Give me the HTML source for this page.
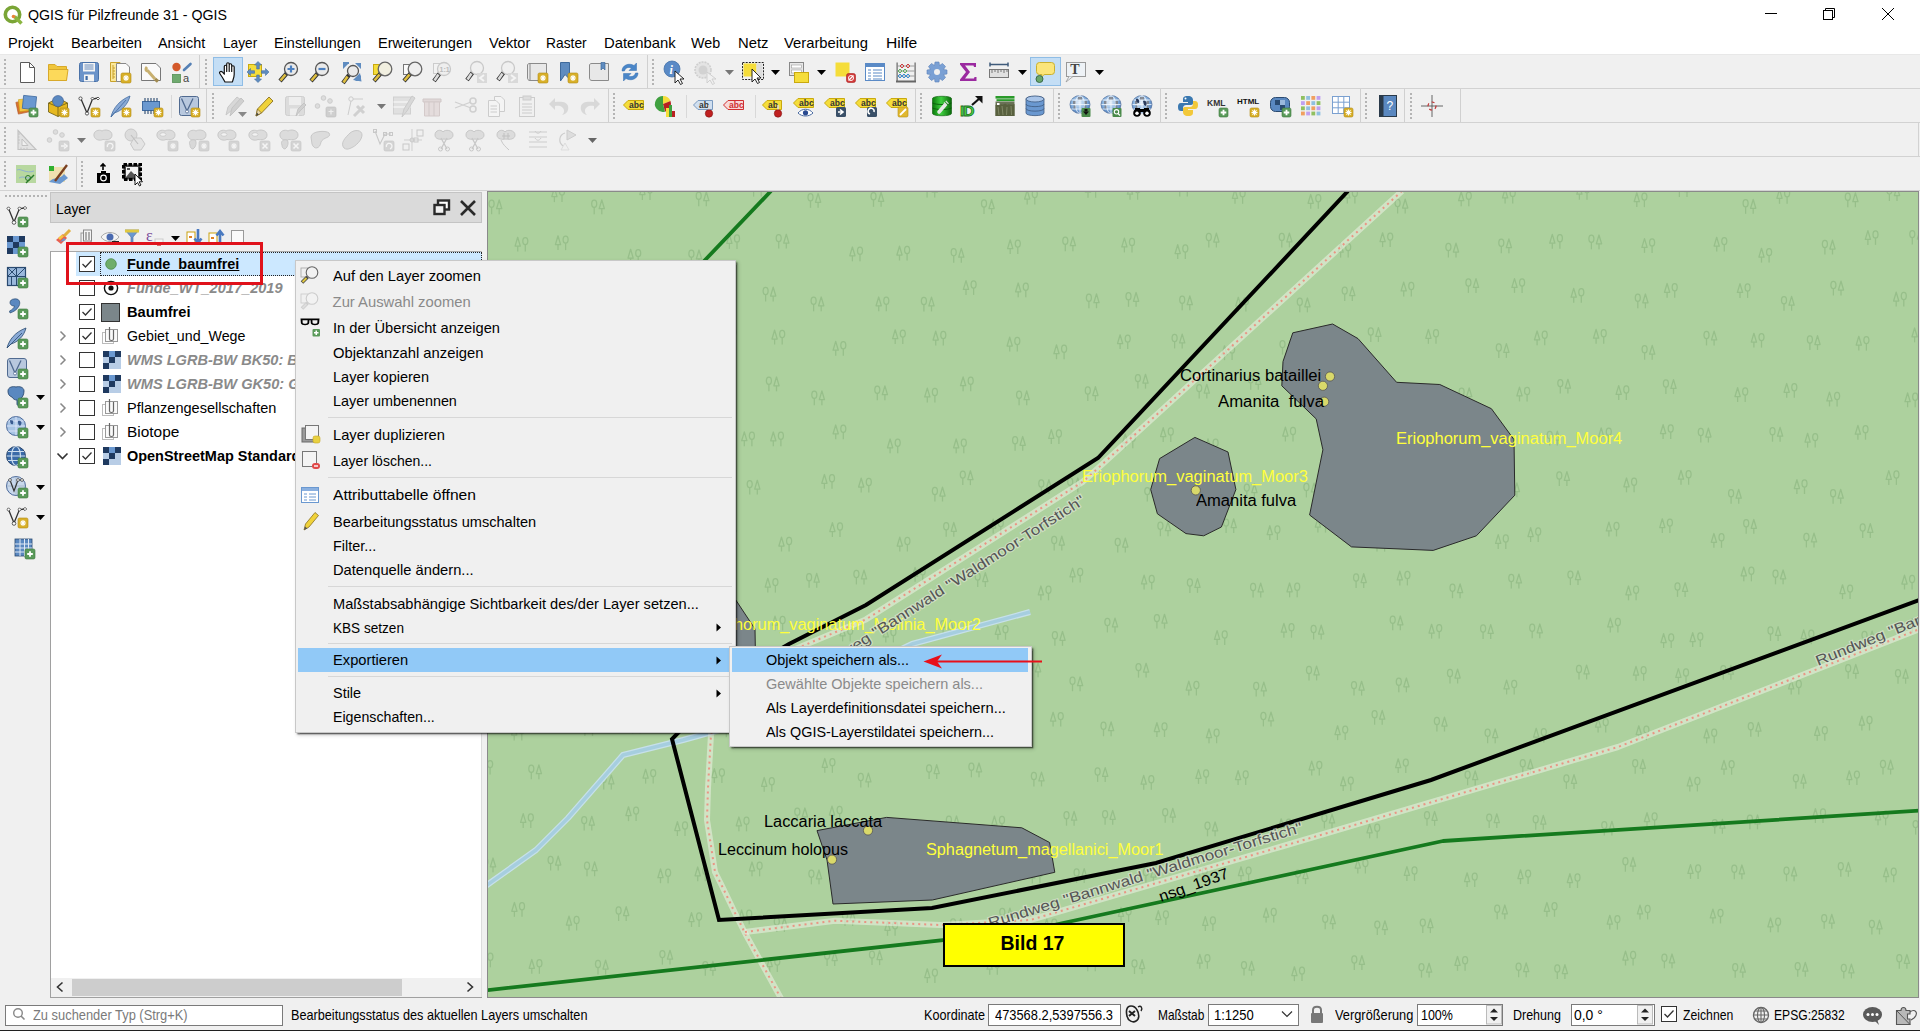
<!DOCTYPE html><html><head><meta charset="utf-8"><style>
html,body{margin:0;padding:0;width:1920px;height:1031px;overflow:hidden;background:#f0f0f0;font-family:"Liberation Sans", sans-serif}
.t{position:absolute;white-space:pre;line-height:1;font-family:"Liberation Sans", sans-serif}
svg{overflow:visible;position:absolute}
</style></head><body><div style="position:absolute;left:0px;top:0px;width:1920px;height:55px;background:#fff"></div>
<div style="position:absolute;left:0px;top:54px;width:1920px;height:1px;background:#e8e8e8"></div>
<svg style="position:absolute;left:2px;top:4px;" width="22" height="22" viewBox="0 0 22 22"><circle cx="10.5" cy="10.5" r="7.2" fill="none" stroke="#7aa536" stroke-width="3.6"/><path d="M12.5 12.5 L19.5 19.5" stroke="#8ab540" stroke-width="3.6"/><circle cx="11.5" cy="12.5" r="1.8" fill="#e8843a"/></svg>
<div class="t" style="left:27.5px;top:7.97px;font-size:14.8px;font-weight:normal;color:#000;font-style:normal;transform:scaleX(0.9600);transform-origin:0 0;">QGIS für Pilzfreunde 31 - QGIS</div>
<svg style="position:absolute;left:1760px;top:0px;" width="160" height="30" viewBox="0 0 160 30"><path d="M5 13.5 H17" stroke="#000" stroke-width="1"/><rect x="63.5" y="10.5" width="9" height="9" fill="none" stroke="#000"/><path d="M65.5 10.5 V8.5 H74.5 V17.5 H72.5" fill="none" stroke="#000"/><path d="M122 8 L134 20 M134 8 L122 20" stroke="#000" stroke-width="1"/></svg>
<div class="t" style="left:8.3px;top:35.77px;font-size:14.8px;font-weight:normal;color:#000;font-style:normal;transform:scaleX(0.9867);transform-origin:0 0;">Projekt</div>
<div class="t" style="left:70.7px;top:35.77px;font-size:14.8px;font-weight:normal;color:#000;font-style:normal;transform:scaleX(0.9925);transform-origin:0 0;">Bearbeiten</div>
<div class="t" style="left:158.3px;top:35.77px;font-size:14.8px;font-weight:normal;color:#000;font-style:normal;transform:scaleX(0.9725);transform-origin:0 0;">Ansicht</div>
<div class="t" style="left:222.5px;top:35.77px;font-size:14.8px;font-weight:normal;color:#000;font-style:normal;transform:scaleX(0.9251);transform-origin:0 0;">Layer</div>
<div class="t" style="left:273.7px;top:35.77px;font-size:14.8px;font-weight:normal;color:#000;font-style:normal;transform:scaleX(0.9767);transform-origin:0 0;">Einstellungen</div>
<div class="t" style="left:377.5px;top:35.77px;font-size:14.8px;font-weight:normal;color:#000;font-style:normal;transform:scaleX(0.9876);transform-origin:0 0;">Erweiterungen</div>
<div class="t" style="left:488.7px;top:35.77px;font-size:14.8px;font-weight:normal;color:#000;font-style:normal;transform:scaleX(0.9843);transform-origin:0 0;">Vektor</div>
<div class="t" style="left:546.3px;top:35.77px;font-size:14.8px;font-weight:normal;color:#000;font-style:normal;transform:scaleX(0.9337);transform-origin:0 0;">Raster</div>
<div class="t" style="left:603.7px;top:35.77px;font-size:14.8px;font-weight:normal;color:#000;font-style:normal;transform:scaleX(1.0030);transform-origin:0 0;">Datenbank</div>
<div class="t" style="left:691.3px;top:35.77px;font-size:14.8px;font-weight:normal;color:#000;font-style:normal;transform:scaleX(0.9680);transform-origin:0 0;">Web</div>
<div class="t" style="left:737.5px;top:35.77px;font-size:14.8px;font-weight:normal;color:#000;font-style:normal;transform:scaleX(1.0023);transform-origin:0 0;">Netz</div>
<div class="t" style="left:784.3px;top:35.77px;font-size:14.8px;font-weight:normal;color:#000;font-style:normal;transform:scaleX(1.0002);transform-origin:0 0;">Verarbeitung</div>
<div class="t" style="left:885.5px;top:35.77px;font-size:14.8px;font-weight:normal;color:#000;font-style:normal;transform:scaleX(1.0555);transform-origin:0 0;">Hilfe</div>
<div style="position:absolute;left:0px;top:55px;width:1920px;height:136px;background:#f0f0f0"></div>
<div style="position:absolute;left:0px;top:88px;width:1920px;height:1px;background:#d2d2d2"></div>
<div style="position:absolute;left:0px;top:122px;width:1920px;height:1px;background:#d2d2d2"></div>
<div style="position:absolute;left:0px;top:156px;width:1920px;height:1px;background:#d2d2d2"></div>
<div style="position:absolute;left:0px;top:190px;width:1920px;height:1px;background:#d2d2d2"></div>
<div style="position:absolute;left:212.5px;top:57px;width:30.5px;height:29px;background:#c4def5;border:1px solid #8fbde6;box-sizing:border-box"></div>
<div style="position:absolute;left:1030px;top:57px;width:30.5px;height:29px;background:#c4def5;border:1px solid #8fbde6;box-sizing:border-box"></div>
<svg style="position:absolute;left:4px;top:59px;" width="2" height="27" viewBox="0 0 2 27"><rect x="0" y="0" width="2" height="2" fill="#b4b4b4"/><rect x="0" y="4" width="2" height="2" fill="#b4b4b4"/><rect x="0" y="8" width="2" height="2" fill="#b4b4b4"/><rect x="0" y="12" width="2" height="2" fill="#b4b4b4"/><rect x="0" y="16" width="2" height="2" fill="#b4b4b4"/><rect x="0" y="20" width="2" height="2" fill="#b4b4b4"/><rect x="0" y="24" width="2" height="2" fill="#b4b4b4"/></svg>
<svg style="position:absolute;left:15.0px;top:59.5px;" width="24.0" height="24.0" viewBox="0 0 24.0 24.0"><path d="M5.5 2.5 H14.5 L19.5 7.5 V22.5 H5.5 Z" fill="#fff" stroke="#5a5a5a"/><path d="M14.5 2.5 V7.5 H19.5" fill="none" stroke="#5a5a5a"/></svg>
<svg style="position:absolute;left:45.5px;top:59.5px;" width="24.0" height="24.0" viewBox="0 0 24.0 24.0"><path d="M2.5 4.5 H9 L11 6.5 H20.5 V20.5 H2.5 Z" fill="#f0c53a" stroke="#d8a92a"/><path d="M2.5 9.5 H22 L20.5 20.5 H2.5 Z" fill="#fcd95a" stroke="#d8a92a"/></svg>
<svg style="position:absolute;left:77.0px;top:59.5px;" width="24.0" height="24.0" viewBox="0 0 24.0 24.0"><rect x="2.5" y="2.5" width="19" height="19" rx="2" fill="#6b93c9" stroke="#4a72a8"/><rect x="6" y="3" width="12" height="8.5" fill="#f4f4f4"/><path d="M7.5 5 H16.5 M7.5 7 H16.5 M7.5 9 H16.5" stroke="#5a82b8" stroke-width="0.9"/><rect x="7" y="14.5" width="10" height="7" fill="#f4f4f4"/><rect x="8.5" y="16" width="2.2" height="4" fill="#3e6aa6"/></svg>
<svg style="position:absolute;left:108.0px;top:59.5px;" width="24.0" height="24.0" viewBox="0 0 24.0 24.0"><path d="M2.5 2.5 H12 L16 6.5 V21.5 H2.5 Z" fill="#fbe89a" stroke="#c9a22a"/><path d="M5 5 V19 M5 8 H7 M5 11 H7 M5 14 H7 M5 17 H7" stroke="#c9a22a"/><path d="M8.5 3.5 H18 L21.5 7 V21.5 H8.5 Z" fill="#fafafa" stroke="#888"/><rect x="13" y="13" width="10" height="10" rx="1.5" fill="#d8b02a" stroke="#b38a10" stroke-width="0.6"/><path d="M18.0 15.0 V21.0 M15.0 18.0 H21.0 M15.9 15.9 L20.1 20.1 M20.1 15.9 L15.9 20.1" stroke="#fff" stroke-width="1.1"/></svg>
<svg style="position:absolute;left:139.0px;top:59.5px;" width="24.0" height="24.0" viewBox="0 0 24.0 24.0"><path d="M2.5 3.5 H17 L21.5 8 V20.5 H2.5 Z" fill="#fafafa" stroke="#777"/><path d="M8 7 C6 9 7 11 9 11 L16 19" stroke="#c8b070" stroke-width="3" fill="none"/><path d="M16 19 L19 21.5" stroke="#a08a50" stroke-width="3.4"/></svg>
<svg style="position:absolute;left:169.5px;top:59.5px;" width="24.0" height="24.0" viewBox="0 0 24.0 24.0"><circle cx="6.5" cy="7" r="4.2" fill="#d4592a"/><path d="M14 10 L20.5 4" stroke="#5580b5" stroke-width="2.6" stroke-linecap="round"/><rect x="2.5" y="14.5" width="8" height="8" fill="#6faa6f" stroke="#558f55" stroke-width="0.8"/><text x="13" y="22" font-family="Liberation Sans" font-size="11" fill="#444">a</text></svg>
<div style="position:absolute;left:199px;top:55px;width:1px;height:33px;background:#d0d0d0"></div>
<svg style="position:absolute;left:205px;top:59px;" width="2" height="27" viewBox="0 0 2 27"><rect x="0" y="0" width="2" height="2" fill="#b4b4b4"/><rect x="0" y="4" width="2" height="2" fill="#b4b4b4"/><rect x="0" y="8" width="2" height="2" fill="#b4b4b4"/><rect x="0" y="12" width="2" height="2" fill="#b4b4b4"/><rect x="0" y="16" width="2" height="2" fill="#b4b4b4"/><rect x="0" y="20" width="2" height="2" fill="#b4b4b4"/><rect x="0" y="24" width="2" height="2" fill="#b4b4b4"/></svg>
<svg style="position:absolute;left:216.0px;top:59.5px;" width="24.0" height="24.0" viewBox="0 0 24.0 24.0"><path d="M9 22 C7.5 19 5.5 16 3.8 13.5 C2.8 12 4.8 10.5 6.5 12.2 L8.3 14.2 V6.5 C8.3 4.8 10.7 4.8 10.7 6.5 V11.5 V4 C10.7 2.3 13.2 2.3 13.2 4 V11.5 V5 C13.2 3.3 15.7 3.3 15.7 5 V11.5 V7 C15.7 5.3 18.2 5.3 18.2 7 V14.5 C18.2 17.5 17.2 19.5 16.3 22 Z" fill="#fff" stroke="#111" stroke-width="1.2" stroke-linejoin="round"/></svg>
<svg style="position:absolute;left:246.0px;top:59.5px;" width="24.0" height="24.0" viewBox="0 0 24.0 24.0"><rect x="2.5" y="4.5" width="13" height="12" fill="#f5dd3a" stroke="#c9a90f"/><path d="M12 1.5 L15.5 5 H13.3 V9 H10.7 V5 H8.5 Z M12 22.5 L15.5 19 H13.3 V15 H10.7 V19 H8.5 Z M1 12 L4.5 8.5 V10.7 H8.5 V13.3 H4.5 V15.5 Z M23 12 L19.5 8.5 V10.7 H15.5 V13.3 H19.5 V15.5 Z" fill="#5f8cc0" stroke="#46719f" stroke-width="0.6"/></svg>
<svg style="position:absolute;left:277.0px;top:59.5px;" width="24.0" height="24.0" viewBox="0 0 24.0 24.0"><path d="M10 13 L3 21" stroke="#333" stroke-width="4.2" stroke-linecap="butt"/><path d="M8.5 14.5 L3.5 20.5" stroke="#e0c040" stroke-width="2.6"/><circle cx="14" cy="9" r="6.5" fill="#eaeaea" stroke="#555" stroke-width="1.3"/><path d="M14 5.5 V12.5 M10.5 9 H17.5" stroke="#4d80c0" stroke-width="2.2"/></svg>
<svg style="position:absolute;left:308.0px;top:59.5px;" width="24.0" height="24.0" viewBox="0 0 24.0 24.0"><path d="M10 13 L3 21" stroke="#333" stroke-width="4.2" stroke-linecap="butt"/><path d="M8.5 14.5 L3.5 20.5" stroke="#e0c040" stroke-width="2.6"/><circle cx="14" cy="9" r="6.5" fill="#eaeaea" stroke="#555" stroke-width="1.3"/><path d="M10.5 9 H17.5" stroke="#4d80c0" stroke-width="2.2"/></svg>
<svg style="position:absolute;left:340.0px;top:59.5px;" width="24.0" height="24.0" viewBox="0 0 24.0 24.0"><path d="M3 3 H9 L3 9 Z M21 3 V9 L15 3 Z M21 21 H15 L21 15 Z" fill="#5f8cc0"/><rect x="3" y="2" width="6" height="2" fill="#5f8cc0"/><path d="M9 15 L3 23" stroke="#333" stroke-width="4.2" stroke-linecap="butt"/><path d="M7.5 16.5 L3.5 22.5" stroke="#e0c040" stroke-width="2.6"/><circle cx="13" cy="11" r="5.5" fill="#eaeaea" stroke="#555" stroke-width="1.3"/><path d="M20 13 L21.5 21.5 L13 20" fill="#5f8cc0"/></svg>
<svg style="position:absolute;left:370.5px;top:59.5px;" width="24.0" height="24.0" viewBox="0 0 24.0 24.0"><rect x="2.5" y="4.5" width="9" height="10" fill="#f5dd3a" stroke="#c9a90f"/><path d="M10 13 L3 21" stroke="#333" stroke-width="4.2" stroke-linecap="butt"/><path d="M8.5 14.5 L3.5 20.5" stroke="#e0c040" stroke-width="2.6"/><circle cx="14" cy="9" r="6.8" fill="#f1efe0" stroke="#666" stroke-width="1.3"/></svg>
<svg style="position:absolute;left:401.0px;top:59.5px;" width="24.0" height="24.0" viewBox="0 0 24.0 24.0"><rect x="2.5" y="4.5" width="9" height="10" fill="#fafafa" stroke="#777"/><path d="M10 13 L3 21" stroke="#333" stroke-width="4.2" stroke-linecap="butt"/><path d="M8.5 14.5 L3.5 20.5" stroke="#e0c040" stroke-width="2.6"/><circle cx="14" cy="9" r="6.8" fill="#efefef" stroke="#666" stroke-width="1.3"/></svg>
<svg style="position:absolute;left:430.5px;top:59.5px;" width="24.0" height="24.0" viewBox="0 0 24.0 24.0"><rect x="2.5" y="3.5" width="8" height="10" fill="#f2f2f2" stroke="#ccc"/><path d="M9 13 L3 21" stroke="#333" stroke-width="4.2" stroke-linecap="butt"/><path d="M7.5 14.5 L3.5 20.5" stroke="#ddd" stroke-width="2.6"/><circle cx="13" cy="9" r="6.5" fill="#eee" stroke="#c8c8c8" stroke-width="1.3"/><text x="8.5" y="12" font-family="Liberation Sans" font-weight="bold" font-size="7" fill="#bbb">1:1</text></svg>
<svg style="position:absolute;left:464.0px;top:59.5px;" width="24.0" height="24.0" viewBox="0 0 24.0 24.0"><path d="M9 12 L3 20" stroke="#333" stroke-width="4.2" stroke-linecap="butt"/><path d="M7.5 13.5 L3.5 19.5" stroke="#ddd" stroke-width="2.6"/><circle cx="13" cy="8" r="6.5" fill="#f0f0f0" stroke="#c8c8c8" stroke-width="1.3"/><rect x="13" y="13" width="10" height="10" fill="#d9d9d9"/><path d="M20 15 L16 18 L20 21" stroke="#f4f4f4" stroke-width="2" fill="none"/></svg>
<svg style="position:absolute;left:495.0px;top:59.5px;" width="24.0" height="24.0" viewBox="0 0 24.0 24.0"><path d="M9 12 L3 20" stroke="#333" stroke-width="4.2" stroke-linecap="butt"/><path d="M7.5 13.5 L3.5 19.5" stroke="#ddd" stroke-width="2.6"/><circle cx="13" cy="8" r="6.5" fill="#f0f0f0" stroke="#c8c8c8" stroke-width="1.3"/><rect x="13" y="13" width="10" height="10" fill="#d9d9d9"/><path d="M16 15 L20 18 L16 21" stroke="#f4f4f4" stroke-width="2" fill="none"/></svg>
<svg style="position:absolute;left:525.0px;top:59.5px;" width="24.0" height="24.0" viewBox="0 0 24.0 24.0"><path d="M5 3.5 H21.5 V20.5 H5 C3 20.5 2.5 19 2.5 18 V5 C2.5 4 3.5 3.5 5 3.5 Z" fill="#e8e8e8" stroke="#8a8a8a"/><path d="M5 3.5 V20.5" stroke="#8a8a8a"/><rect x="13" y="13" width="10" height="10" rx="1.5" fill="#d8b02a" stroke="#b38a10" stroke-width="0.6"/><path d="M18.0 15.0 V21.0 M15.0 18.0 H21.0 M15.9 15.9 L20.1 20.1 M20.1 15.9 L15.9 20.1" stroke="#fff" stroke-width="1.1"/></svg>
<svg style="position:absolute;left:556.0px;top:59.5px;" width="24.0" height="24.0" viewBox="0 0 24.0 24.0"><path d="M4.5 2.5 H13.5 V19 L9 14.5 L4.5 21 Z" fill="#5f8cc0" stroke="#3f6a9c"/><rect x="12" y="13" width="10" height="10" rx="1.5" fill="#d8b02a" stroke="#b38a10" stroke-width="0.6"/><path d="M17.0 15.0 V21.0 M14.0 18.0 H20.0 M14.9 15.9 L19.1 20.1 M19.1 15.9 L14.9 20.1" stroke="#fff" stroke-width="1.1"/></svg>
<svg style="position:absolute;left:587.0px;top:59.5px;" width="24.0" height="24.0" viewBox="0 0 24.0 24.0"><path d="M5 3.5 H21.5 V20.5 H5 C3 20.5 2.5 19 2.5 18 V5 C2.5 4 3.5 3.5 5 3.5 Z" fill="#e8e8e8" stroke="#8a8a8a"/><path d="M14 2.5 H18 V10 L16 8 L14 10 Z" fill="#5f8cc0" stroke="#3f6a9c" stroke-width="0.7"/></svg>
<svg style="position:absolute;left:618.0px;top:59.5px;" width="24.0" height="24.0" viewBox="0 0 24.0 24.0"><path d="M4 11 C4 5 11 2.5 16 5.5 L18.5 3 V10.5 H11 L13.5 8 C10.5 6.5 7 8 6.5 11 Z" fill="#4a86c8" stroke="#356fb0" stroke-width="0.5"/><path d="M20 13 C20 19 13 21.5 8 18.5 L5.5 21 V13.5 H13 L10.5 16 C13.5 17.5 17 16 17.5 13 Z" fill="#4a86c8" stroke="#356fb0" stroke-width="0.5"/></svg>
<div style="position:absolute;left:647px;top:55px;width:1px;height:33px;background:#d0d0d0"></div>
<svg style="position:absolute;left:652px;top:59px;" width="2" height="27" viewBox="0 0 2 27"><rect x="0" y="0" width="2" height="2" fill="#b4b4b4"/><rect x="0" y="4" width="2" height="2" fill="#b4b4b4"/><rect x="0" y="8" width="2" height="2" fill="#b4b4b4"/><rect x="0" y="12" width="2" height="2" fill="#b4b4b4"/><rect x="0" y="16" width="2" height="2" fill="#b4b4b4"/><rect x="0" y="20" width="2" height="2" fill="#b4b4b4"/><rect x="0" y="24" width="2" height="2" fill="#b4b4b4"/></svg>
<svg style="position:absolute;left:662.0px;top:59.5px;" width="24.0" height="24.0" viewBox="0 0 24.0 24.0"><circle cx="10" cy="9" r="8" fill="#5a8ac6" stroke="#4472aa" stroke-width="0.8"/><text x="7.5" y="14" font-family="Liberation Serif" font-style="italic" font-weight="bold" font-size="12" fill="#fff">i</text><path d="M13 11 L13 23 L16 20 L18.5 24.5 L20.5 23.5 L18 19 L22 19 Z" fill="#fff" stroke="#111" stroke-width="0.9"/></svg>
<svg style="position:absolute;left:693.0px;top:59.5px;" width="24.0" height="24.0" viewBox="0 0 24.0 24.0"><circle cx="10" cy="10" r="8" fill="#e4e4e4" stroke="#cfcfcf" stroke-width="1.6" stroke-dasharray="2 1"/><circle cx="10" cy="10" r="4.5" fill="#d2d2d2"/><path d="M14 12 L14 23 L17 20 L19.5 24.5 L21.5 23.5 L19 19 L23 19 Z" fill="#f0f0f0" stroke="#ccc" stroke-width="0.9"/></svg>
<svg style="position:absolute;left:740.5px;top:59.5px;" width="24.0" height="24.0" viewBox="0 0 24.0 24.0"><rect x="1.5" y="2.5" width="21" height="17" fill="none" stroke="#222" stroke-dasharray="2 1.2"/><rect x="2.5" y="3.5" width="13" height="13" fill="#f5dd3a"/><rect x="15.5" y="3.5" width="6" height="15" fill="#ddd"/><path d="M11 9 L11 22 L14 19 L16.5 23.5 L18.5 22.5 L16 18 L20 18 Z" fill="#fff" stroke="#111" stroke-width="0.9"/></svg>
<svg style="position:absolute;left:787.0px;top:59.5px;" width="24.0" height="24.0" viewBox="0 0 24.0 24.0"><rect x="2.5" y="2.5" width="14" height="13" fill="#e8e8e8" stroke="#888"/><rect x="4.5" y="5" width="10" height="3" fill="#fff" stroke="#999" stroke-width="0.6"/><rect x="4.5" y="10" width="10" height="3" fill="#fff" stroke="#999" stroke-width="0.6"/><rect x="7.5" y="12.5" width="14" height="10" fill="#f5dd3a" stroke="#c9a90f"/></svg>
<svg style="position:absolute;left:833.0px;top:59.5px;" width="24.0" height="24.0" viewBox="0 0 24.0 24.0"><rect x="2.5" y="2.5" width="14" height="14" fill="#f5dd3a"/><rect x="13.5" y="13.5" width="9" height="9" rx="2" fill="#d23a3a" stroke="#a82020" stroke-width="0.6"/><path d="M15.5 20.5 L20.5 15.5" stroke="#fff" stroke-width="1.3"/><circle cx="18" cy="18" r="2.5" fill="none" stroke="#fff" stroke-width="1"/></svg>
<svg style="position:absolute;left:863.0px;top:59.5px;" width="24.0" height="24.0" viewBox="0 0 24.0 24.0"><rect x="2.5" y="3.5" width="19" height="17" fill="#fff" stroke="#5a8ac6"/><rect x="3" y="4" width="18" height="3" fill="#5a8ac6"/><path d="M5 10 H8 M10 10 H19 M5 13 H8 M10 13 H19 M5 16 H8 M10 16 H19 M5 19 H8 M10 19 H19" stroke="#5a8ac6" stroke-width="1.1"/></svg>
<svg style="position:absolute;left:894.0px;top:59.5px;" width="24.0" height="24.0" viewBox="0 0 24.0 24.0"><rect x="2.5" y="2.5" width="1.2" height="19" fill="#666"/><rect x="20.5" y="2.5" width="1.2" height="19" fill="#666"/><rect x="2" y="20.5" width="20" height="2" fill="#666"/><path d="M3.5 6 H20.5 M3.5 11 H20.5 M3.5 16 H20.5" stroke="#888" stroke-width="0.8"/><path d="M8 4 L10 6 L8 8 L6 6 Z M14 4 L16 6 L14 8 L12 6 Z" fill="none" stroke="#d04040"/><path d="M6 9 L8 11 L6 13 L4 11 Z M11 9 L13 11 L11 13 L9 11 Z" fill="none" stroke="#60b060"/><path d="M6 14 L8 16 L6 18 L4 16 Z M10 14 L12 16 L10 18 L8 16 Z M14 14 L16 16 L14 18 L12 16 Z" fill="none" stroke="#4090d0"/></svg>
<svg style="position:absolute;left:925.0px;top:59.5px;" width="24.0" height="24.0" viewBox="0 0 24.0 24.0"><g transform="translate(12 12)"><path d="M-2 -10 H2 L2.5 -6.5 L5.5 -8.5 L8.5 -5.5 L6.5 -2.5 L10 -2 V2 L6.5 2.5 L8.5 5.5 L5.5 8.5 L2.5 6.5 L2 10 H-2 L-2.5 6.5 L-5.5 8.5 L-8.5 5.5 L-6.5 2.5 L-10 2 V-2 L-6.5 -2.5 L-8.5 -5.5 L-5.5 -8.5 L-2.5 -6.5 Z" fill="#7aa0d4" stroke="#5a82b8" stroke-width="0.6"/><circle r="3" fill="#f0f0f0"/></g></svg>
<svg style="position:absolute;left:956.0px;top:59.5px;" width="24.0" height="24.0" viewBox="0 0 24.0 24.0"><path d="M4 3 H20 V7 H18 L17.5 5.5 H9 L14 12 L9 18.5 H18 L18.5 17 H20.5 V21 H4 V19.5 L10 12 L4 4.5 Z" fill="#9b2aa0"/></svg>
<svg style="position:absolute;left:987.0px;top:59.5px;" width="24.0" height="24.0" viewBox="0 0 24.0 24.0"><path d="M3 4.5 H21 M3 2.5 V6.5 M21 2.5 V6.5" stroke="#3e5a7a" stroke-width="1.5"/><rect x="2.5" y="9.5" width="19" height="8" fill="#e0e0e0" stroke="#777"/><path d="M5 9.5 V13 M8 9.5 V12 M11 9.5 V13 M14 9.5 V12 M17 9.5 V13 M20 9.5 V12" stroke="#777"/></svg>
<svg style="position:absolute;left:1033.5px;top:59.5px;" width="24.0" height="24.0" viewBox="0 0 24.0 24.0"><rect x="2.5" y="2.5" width="18" height="12" rx="3" fill="#fbe57a" stroke="#c9b030"/><path d="M8 14 L6 18 L11 14.2" fill="#fbe57a" stroke="#c9b030" stroke-width="0.8"/><circle cx="5.5" cy="19" r="3.5" fill="#6aa86a" stroke="#3a6a4a" stroke-width="1"/></svg>
<svg style="position:absolute;left:1064.0px;top:59.5px;" width="24.0" height="24.0" viewBox="0 0 24.0 24.0"><rect x="2.5" y="2.5" width="19" height="14" fill="#eef2f6" stroke="#999"/><path d="M5 16.5 L2 22 L9 16.5" fill="#eef2f6" stroke="#999" stroke-width="0.8"/><text x="6.2" y="14" font-family="Liberation Serif" font-weight="bold" font-size="14" fill="#444">T</text></svg>
<svg style="position:absolute;left:724.5px;top:69.5px;" width="9" height="5" viewBox="0 0 9 5"><path d="M0 0 H9 L4.5 5 Z" fill="#777"/></svg>
<svg style="position:absolute;left:770.5px;top:69.5px;" width="9" height="5" viewBox="0 0 9 5"><path d="M0 0 H9 L4.5 5 Z" fill="#000"/></svg>
<svg style="position:absolute;left:816.5px;top:69.5px;" width="9" height="5" viewBox="0 0 9 5"><path d="M0 0 H9 L4.5 5 Z" fill="#000"/></svg>
<svg style="position:absolute;left:1018.0px;top:69.5px;" width="9" height="5" viewBox="0 0 9 5"><path d="M0 0 H9 L4.5 5 Z" fill="#000"/></svg>
<svg style="position:absolute;left:1094.5px;top:69.5px;" width="9" height="5" viewBox="0 0 9 5"><path d="M0 0 H9 L4.5 5 Z" fill="#000"/></svg>
<svg style="position:absolute;left:4px;top:93px;" width="2" height="27" viewBox="0 0 2 27"><rect x="0" y="0" width="2" height="2" fill="#b4b4b4"/><rect x="0" y="4" width="2" height="2" fill="#b4b4b4"/><rect x="0" y="8" width="2" height="2" fill="#b4b4b4"/><rect x="0" y="12" width="2" height="2" fill="#b4b4b4"/><rect x="0" y="16" width="2" height="2" fill="#b4b4b4"/><rect x="0" y="20" width="2" height="2" fill="#b4b4b4"/><rect x="0" y="24" width="2" height="2" fill="#b4b4b4"/></svg>
<svg style="position:absolute;left:15.0px;top:93.5px;" width="24.0" height="24.0" viewBox="0 0 24.0 24.0"><rect x="2" y="7" width="12" height="12" fill="#d87030" stroke="#b05520" stroke-width="0.6" transform="rotate(-12 8 13)"/><rect x="4" y="5" width="12" height="12" fill="#f5c542" stroke="#c9a010" stroke-width="0.6" transform="rotate(-6 10 11)"/><rect x="8" y="2" width="13" height="13" fill="#6a98d0" stroke="#3f6aa0" stroke-width="0.8" transform="rotate(6 14 8)"/><rect x="14" y="14" width="9" height="9" rx="1.5" fill="#5a9a5a" stroke="#3d7a3d" stroke-width="0.6"/><path d="M18.5 15.7 V21.3 M15.7 18.5 H21.3" stroke="#fff" stroke-width="1.8"/></svg>
<svg style="position:absolute;left:46.0px;top:93.5px;" width="24.0" height="24.0" viewBox="0 0 24.0 24.0"><path d="M2.5 9 L12 4 L21.5 9 V18 L12 22.5 L2.5 18 Z" fill="#e6b820" stroke="#6a5a10" stroke-width="0.8"/><path d="M2.5 9 L12 13 L21.5 9 M12 13 V22.5" stroke="#6a5a10" stroke-width="0.8" fill="none"/><circle cx="12" cy="7" r="5.5" fill="#5a88c0" stroke="#3a5a90" stroke-width="0.6"/><rect x="14" y="14" width="9" height="9" rx="1.5" fill="#d8b02a" stroke="#b38a10" stroke-width="0.6"/><path d="M18.5 15.5 V21.5 M15.5 18.5 H21.5 M16.4 16.4 L20.6 20.6 M20.6 16.4 L16.4 20.6" stroke="#fff" stroke-width="1.1"/></svg>
<svg style="position:absolute;left:77.0px;top:93.5px;" width="24.0" height="24.0" viewBox="0 0 24.0 24.0"><path d="M4 5 L10 19 L15.5 5 L21 4" fill="none" stroke="#333" stroke-width="1.3"/><circle cx="3.5" cy="4.5" r="1.6" fill="#fff" stroke="#333" stroke-width="0.8"/><circle cx="10" cy="19.5" r="1.6" fill="#fff" stroke="#333" stroke-width="0.8"/><path d="M15.5 3 L17 4.5 L15.5 6 L14 4.5 Z M21 3 L22.5 4.5 L21 6 L19.5 4.5 Z" fill="#fff" stroke="#333" stroke-width="0.8"/><rect x="14" y="14" width="9" height="9" rx="1.5" fill="#d8b02a" stroke="#b38a10" stroke-width="0.6"/><path d="M18.5 15.5 V21.5 M15.5 18.5 H21.5 M16.4 16.4 L20.6 20.6 M20.6 16.4 L16.4 20.6" stroke="#fff" stroke-width="1.1"/></svg>
<svg style="position:absolute;left:108.0px;top:93.5px;" width="24.0" height="24.0" viewBox="0 0 24.0 24.0"><path d="M3 23 C5 14 12 6 22 2 C20 10 14 17 6 19 Z" fill="#8aaad6" stroke="#3f6aa0" stroke-width="0.8"/><path d="M3 23 L18 6" stroke="#3f6aa0" stroke-width="0.8"/><rect x="14" y="14" width="9" height="9" rx="1.5" fill="#d8b02a" stroke="#b38a10" stroke-width="0.6"/><path d="M18.5 15.5 V21.5 M15.5 18.5 H21.5 M16.4 16.4 L20.6 20.6 M20.6 16.4 L16.4 20.6" stroke="#fff" stroke-width="1.1"/></svg>
<svg style="position:absolute;left:140.0px;top:93.5px;" width="24.0" height="24.0" viewBox="0 0 24.0 24.0"><rect x="2.5" y="7.5" width="17" height="9" fill="#6a98d0" stroke="#3f6aa0"/><path d="M5 4 V7.5 M8 4 V7.5 M11 4 V7.5 M14 4 V7.5 M17 4 V7.5 M5 16.5 V20 M8 16.5 V20 M11 16.5 V20 M14 16.5 V20" stroke="#2a4a70" stroke-width="1.1"/><rect x="14" y="14" width="9" height="9" rx="1.5" fill="#d8b02a" stroke="#b38a10" stroke-width="0.6"/><path d="M18.5 15.5 V21.5 M15.5 18.5 H21.5 M16.4 16.4 L20.6 20.6 M20.6 16.4 L16.4 20.6" stroke="#fff" stroke-width="1.1"/></svg>
<svg style="position:absolute;left:177.0px;top:93.5px;" width="24.0" height="24.0" viewBox="0 0 24.0 24.0"><rect x="2.5" y="2.5" width="19" height="19" rx="2" fill="#b8c8de" stroke="#506a90"/><path d="M4.5 4.5 L10 17 L16 4.5" fill="none" stroke="#506a90" stroke-width="1.3"/><circle cx="10" cy="17.5" r="1.5" fill="#fff" stroke="#506a90" stroke-width="0.8"/><rect x="14" y="14" width="9" height="9" rx="1.5" fill="#d8b02a" stroke="#b38a10" stroke-width="0.6"/><path d="M18.5 15.5 V21.5 M15.5 18.5 H21.5 M16.4 16.4 L20.6 20.6 M20.6 16.4 L16.4 20.6" stroke="#fff" stroke-width="1.1"/></svg>
<div style="position:absolute;left:170.5px;top:95px;width:1px;height:23px;background:#d8d8d8"></div>
<div style="position:absolute;left:206px;top:89px;width:1px;height:33px;background:#d0d0d0"></div>
<svg style="position:absolute;left:212px;top:93px;" width="2" height="27" viewBox="0 0 2 27"><rect x="0" y="0" width="2" height="2" fill="#b4b4b4"/><rect x="0" y="4" width="2" height="2" fill="#b4b4b4"/><rect x="0" y="8" width="2" height="2" fill="#b4b4b4"/><rect x="0" y="12" width="2" height="2" fill="#b4b4b4"/><rect x="0" y="16" width="2" height="2" fill="#b4b4b4"/><rect x="0" y="20" width="2" height="2" fill="#b4b4b4"/><rect x="0" y="24" width="2" height="2" fill="#b4b4b4"/></svg>
<svg style="position:absolute;left:222.0px;top:93.5px;" width="24.0" height="24.0" viewBox="0 0 24.0 24.0"><path d="M4 21 L6 13 L15 3 L19 6 L10 16 Z" fill="#d8d8d8" stroke="#c8c8c8"/><path d="M8 22 L10 14 L19 4 L22 7 L13 17 Z" fill="#d0d0d0" stroke="#c4c4c4"/></svg>
<svg style="position:absolute;left:252.0px;top:93.5px;" width="24.0" height="24.0" viewBox="0 0 24.0 24.0"><path d="M4 22 L5.5 15 L17 3 L21 7 L9.5 19 Z" fill="#f0d23a" stroke="#8a7020" stroke-width="0.9"/><path d="M4 22 L5.5 15 L9.5 19 Z" fill="#e8d8b0" stroke="#8a7020" stroke-width="0.8"/><path d="M4 22 L4.8 18.5 L6.8 20.5 Z" fill="#444"/></svg>
<svg style="position:absolute;left:283.0px;top:93.5px;" width="24.0" height="24.0" viewBox="0 0 24.0 24.0"><rect x="2.5" y="2.5" width="19" height="19" rx="2" fill="#dcdcdc" stroke="#cfcfcf"/><rect x="6" y="3" width="12" height="8" fill="#eee"/><rect x="7" y="14.5" width="9" height="7" fill="#eee"/><path d="M13 22 L15 15 L21 9 L23 11 L17 17 Z" fill="#d0d0d0" stroke="#c4c4c4"/></svg>
<svg style="position:absolute;left:314.0px;top:93.5px;" width="24.0" height="24.0" viewBox="0 0 24.0 24.0"><circle cx="9.5" cy="4" r="2.3" fill="#ddd" stroke="#ccc"/><circle cx="16" cy="7" r="2.3" fill="#ddd" stroke="#ccc"/><circle cx="3.5" cy="12" r="2.3" fill="#ddd" stroke="#ccc"/><rect x="12" y="13" width="10" height="10" rx="1.5" fill="#cfcfcf" stroke="#bdbdbd" stroke-width="0.6"/><path d="M14.5 17.5 H19.5 M17.0 15.5 V20.5" stroke="#eee" stroke-width="1.2"/></svg>
<svg style="position:absolute;left:345.5px;top:93.5px;" width="24.0" height="24.0" viewBox="0 0 24.0 24.0"><circle cx="5" cy="5" r="2.2" fill="none" stroke="#ccc"/><path d="M7 5 H17 M5 7 L2 21" stroke="#ccc"/><path d="M8 22 L18 12 M11 12 L18 19" stroke="#d0d0d0" stroke-width="3"/></svg>
<svg style="position:absolute;left:392.0px;top:93.5px;" width="24.0" height="24.0" viewBox="0 0 24.0 24.0"><rect x="1.5" y="3" width="17" height="17" fill="#e0e0e0" stroke="#d0d0d0"/><path d="M1.5 8 H18.5 M1.5 13 H18.5" stroke="#f2f2f2" stroke-width="1.5"/><path d="M10 23 L12 15 L20 2 L23 4 L15 17 Z" fill="#d8d8d8" stroke="#cacaca"/></svg>
<svg style="position:absolute;left:420.0px;top:93.5px;" width="24.0" height="24.0" viewBox="0 0 24.0 24.0"><path d="M3 5 H21 V8 H3 Z" fill="#e0d8d8" stroke="#d0c8c8"/><path d="M4.5 8 H19.5 V22 H4.5 Z" fill="#e4dcdc" stroke="#d4caca"/><path d="M9 8 V22 M14 8 V22" stroke="#d0c8c8"/></svg>
<svg style="position:absolute;left:454.0px;top:93.5px;" width="24.0" height="24.0" viewBox="0 0 24.0 24.0"><path d="M1 8 L17 14 M1 14 L17 8" stroke="#cfcfcf" stroke-width="1.2"/><circle cx="19" cy="7" r="3" fill="none" stroke="#cfcfcf" stroke-width="1.5"/><circle cx="19" cy="15" r="3" fill="none" stroke="#cfcfcf" stroke-width="1.5"/></svg>
<svg style="position:absolute;left:485.0px;top:93.5px;" width="24.0" height="24.0" viewBox="0 0 24.0 24.0"><path d="M9.5 2.5 H16 L19.5 6 V17.5 H9.5 Z" fill="#f4f4f4" stroke="#ccc"/><path d="M3.5 6.5 H11 L14.5 10 V22.5 H3.5 Z" fill="#f4f4f4" stroke="#ccc"/><path d="M5.5 12 H12 M5.5 15 H12 M5.5 18 H12" stroke="#ccc"/></svg>
<svg style="position:absolute;left:516.0px;top:93.5px;" width="24.0" height="24.0" viewBox="0 0 24.0 24.0"><rect x="3.5" y="3.5" width="15" height="19" fill="#f0f0f0" stroke="#ccc"/><rect x="7" y="2" width="8" height="4" fill="#ddd" stroke="#ccc"/><path d="M6 10 H16 M6 13 H16 M6 16 H16 M6 19 H16" stroke="#ccc"/></svg>
<svg style="position:absolute;left:547.0px;top:93.5px;" width="24.0" height="24.0" viewBox="0 0 24.0 24.0"><path d="M8 4 L2 10 L8 16 V12 C13 11 17 13 17 17 C17 19 16 20 15 21 C20 20 22 16 21 12 C20 8 15 7 8 8 Z" fill="#d8d8d8"/></svg>
<svg style="position:absolute;left:578.0px;top:93.5px;" width="24.0" height="24.0" viewBox="0 0 24.0 24.0"><path d="M16 4 L22 10 L16 16 V12 C11 11 7 13 7 17 C7 19 8 20 9 21 C4 20 2 16 3 12 C4 8 9 7 16 8 Z" fill="#d8d8d8"/></svg>
<svg style="position:absolute;left:237.5px;top:111.5px;" width="9" height="5" viewBox="0 0 9 5"><path d="M0 0 H9 L4.5 5 Z" fill="#888"/></svg>
<svg style="position:absolute;left:376.5px;top:103.5px;" width="9" height="5" viewBox="0 0 9 5"><path d="M0 0 H9 L4.5 5 Z" fill="#777"/></svg>
<div style="position:absolute;left:607.5px;top:89px;width:1px;height:33px;background:#d0d0d0"></div>
<svg style="position:absolute;left:612.5px;top:93px;" width="2" height="27" viewBox="0 0 2 27"><rect x="0" y="0" width="2" height="2" fill="#b4b4b4"/><rect x="0" y="4" width="2" height="2" fill="#b4b4b4"/><rect x="0" y="8" width="2" height="2" fill="#b4b4b4"/><rect x="0" y="12" width="2" height="2" fill="#b4b4b4"/><rect x="0" y="16" width="2" height="2" fill="#b4b4b4"/><rect x="0" y="20" width="2" height="2" fill="#b4b4b4"/><rect x="0" y="24" width="2" height="2" fill="#b4b4b4"/></svg>
<svg style="position:absolute;left:622.0px;top:93.5px;" width="24.0" height="24.0" viewBox="0 0 24.0 24.0"><path d="M1.5 11 L6 6.5 H21.5 V15.5 H6 Z" fill="#f5dd3a" stroke="#c9a90f"/><text x="7" y="14.3" font-family="Liberation Sans" font-weight="bold" font-size="8.5" fill="#333">abc</text></svg>
<svg style="position:absolute;left:654.0px;top:93.5px;" width="24.0" height="24.0" viewBox="0 0 24.0 24.0"><path d="M9 10 L9 2 A8 8 0 0 1 16.5 7 Z" fill="#f5dd3a"/><path d="M9 10 L16.5 7 A8 8 0 0 1 11 17.7 Z" fill="#b82020"/><path d="M9 10 L11 17.7 A8 8 0 0 1 2 6 A8 8 0 0 1 9 2 Z" fill="#40a040"/><rect x="12" y="14" width="3" height="9" fill="#f5dd3a"/><rect x="15" y="11" width="3" height="12" fill="#40a040"/><rect x="18" y="17" width="3" height="6" fill="#b82020"/></svg>
<svg style="position:absolute;left:691.5px;top:93.5px;" width="24.0" height="24.0" viewBox="0 0 24.0 24.0"><path d="M1.5 11 L6 6.5 H20.5 V15.5 H6 Z" fill="#d0dff0" stroke="#7a9ac0"/><text x="7" y="14.3" font-family="Liberation Sans" font-weight="bold" font-size="8.5" fill="#333">ab</text><path d="M17 11 V18" stroke="#ddd" stroke-width="1.5"/><circle cx="17" cy="19.5" r="3.7" fill="#c02020" stroke="#801010" stroke-width="0.6"/></svg>
<svg style="position:absolute;left:722.0px;top:93.5px;" width="24.0" height="24.0" viewBox="0 0 24.0 24.0"><path d="M1.5 11 L6 6.5 H21.5 V15.5 H6 Z" fill="#f8d8d8" stroke="#d03030"/><text x="7" y="14.3" font-family="Liberation Sans" font-weight="bold" font-size="8.5" fill="#d03030">abc</text></svg>
<svg style="position:absolute;left:760.5px;top:93.5px;" width="24.0" height="24.0" viewBox="0 0 24.0 24.0"><path d="M1.5 11 L6 6.5 H20.5 V15.5 H6 Z" fill="#f5dd3a" stroke="#c9a90f"/><text x="7" y="14.3" font-family="Liberation Sans" font-weight="bold" font-size="8.5" fill="#333">ab</text><path d="M17 11 V18" stroke="#ddd" stroke-width="1.5"/><circle cx="17" cy="19.5" r="3.7" fill="#c02020" stroke="#801010" stroke-width="0.6"/></svg>
<svg style="position:absolute;left:791.5px;top:93.5px;" width="24.0" height="24.0" viewBox="0 0 24.0 24.0"><path d="M1.5 9 L6 4.5 H21.5 V13.5 H6 Z" fill="#f5dd3a" stroke="#c9a90f"/><text x="7" y="12.3" font-family="Liberation Sans" font-weight="bold" font-size="8.5" fill="#333">abc</text><path d="M6 19 C10 14 17 14 21 19 C17 23 10 23 6 19 Z" fill="#fff" stroke="#4a6aa0"/><circle cx="13.5" cy="18.8" r="2.6" fill="#2a4a90"/></svg>
<svg style="position:absolute;left:823.0px;top:93.5px;" width="24.0" height="24.0" viewBox="0 0 24.0 24.0"><path d="M1.5 9 L6 4.5 H21.5 V13.5 H6 Z" fill="#f5dd3a" stroke="#c9a90f"/><text x="7" y="12.3" font-family="Liberation Sans" font-weight="bold" font-size="8.5" fill="#333">abc</text><rect x="13" y="13" width="10" height="10" rx="1.5" fill="#3a5068"/><path d="M15 18 H19 M17 15.5 L20 18 L17 20.5" stroke="#fff" stroke-width="1.6" fill="none"/></svg>
<svg style="position:absolute;left:854.0px;top:93.5px;" width="24.0" height="24.0" viewBox="0 0 24.0 24.0"><path d="M1.5 9 L6 4.5 H21.5 V13.5 H6 Z" fill="#f5dd3a" stroke="#c9a90f"/><text x="7" y="12.3" font-family="Liberation Sans" font-weight="bold" font-size="8.5" fill="#333">abc</text><rect x="13" y="13" width="10" height="10" rx="1.5" fill="#3a5068"/><path d="M16 20 A3 3 0 1 1 20 18" stroke="#fff" stroke-width="1.5" fill="none"/></svg>
<svg style="position:absolute;left:885.0px;top:93.5px;" width="24.0" height="24.0" viewBox="0 0 24.0 24.0"><path d="M1.5 9 L6 4.5 H21.5 V13.5 H6 Z" fill="#f5dd3a" stroke="#c9a90f"/><text x="7" y="12.3" font-family="Liberation Sans" font-weight="bold" font-size="8.5" fill="#333">abc</text><rect x="13" y="13" width="10" height="10" rx="1.5" fill="#e0b830" stroke="#b89010" stroke-width="0.6"/><path d="M15 21 L21 15" stroke="#fff" stroke-width="1.8"/></svg>
<div style="position:absolute;left:685.5px;top:95px;width:1px;height:23px;background:#d8d8d8"></div>
<div style="position:absolute;left:754.5px;top:95px;width:1px;height:23px;background:#d8d8d8"></div>
<div style="position:absolute;left:914.5px;top:89px;width:1px;height:33px;background:#d0d0d0"></div>
<svg style="position:absolute;left:920px;top:93px;" width="2" height="27" viewBox="0 0 2 27"><rect x="0" y="0" width="2" height="2" fill="#b4b4b4"/><rect x="0" y="4" width="2" height="2" fill="#b4b4b4"/><rect x="0" y="8" width="2" height="2" fill="#b4b4b4"/><rect x="0" y="12" width="2" height="2" fill="#b4b4b4"/><rect x="0" y="16" width="2" height="2" fill="#b4b4b4"/><rect x="0" y="20" width="2" height="2" fill="#b4b4b4"/><rect x="0" y="24" width="2" height="2" fill="#b4b4b4"/></svg>
<svg style="position:absolute;left:930.0px;top:93.5px;" width="24.0" height="24.0" viewBox="0 0 24.0 24.0"><defs><linearGradient id="dbg" x1="0" x2="1"><stop offset="0" stop-color="#0a7a0a"/><stop offset="0.45" stop-color="#40d040"/><stop offset="1" stop-color="#0a6a0a"/></linearGradient></defs><path d="M2.5 4.5 C2.5 1.5 21.5 1.5 21.5 4.5 V19.5 C21.5 22.5 2.5 22.5 2.5 19.5 Z" fill="url(#dbg)" stroke="#0a5a0a" stroke-width="0.6"/><path d="M2.5 9 C6 11 18 11 21.5 9 M2.5 14 C6 16 18 16 21.5 14" stroke="#0a5a0a" fill="none" stroke-width="0.9"/><path d="M9 18 L15 11" stroke="#e8e8e8" stroke-width="3.6" stroke-linecap="round"/><path d="M14 8.5 L17 11.5 M15.8 7 L18.5 9.8" stroke="#ddd" stroke-width="1.2"/></svg>
<svg style="position:absolute;left:960.0px;top:93.5px;" width="24.0" height="24.0" viewBox="0 0 24.0 24.0"><text x="0" y="21.5" font-family="Liberation Sans" font-weight="bold" font-size="15.5" fill="#48d848" stroke="#1a6a1a" stroke-width="0.8" letter-spacing="-1">ID</text><path d="M12 11 L20 4" stroke="#111" stroke-width="2.2"/><path d="M15 2 H22.5 V9.5 Z" fill="#111"/></svg>
<svg style="position:absolute;left:992.5px;top:93.5px;" width="24.0" height="24.0" viewBox="0 0 24.0 24.0"><rect x="2.5" y="2" width="19" height="2.6" fill="#2a9a2a"/><rect x="3.5" y="5.2" width="18" height="2" fill="#2a9a2a"/><rect x="2.5" y="7.5" width="19" height="14.5" fill="#6a7256"/><path d="M2.5 11 C5 9 6 13 8 10 C10 12 12 8 14 11 C16 9 18 12 21.5 10 V22 H2.5 Z" fill="#58603e"/><path d="M5 13 L6 21 M9 12 L10 21 M14 13 L13.5 21 M18 12 L18.5 21" stroke="#8a9270" stroke-width="0.8"/><rect x="4" y="9" width="2.5" height="2" fill="#fff"/></svg>
<svg style="position:absolute;left:1023.0px;top:93.5px;" width="24.0" height="24.0" viewBox="0 0 24.0 24.0"><path d="M3 5 C3 1.5 21 1.5 21 5 V19 C21 22.5 3 22.5 3 19 Z" fill="#6a98d0" stroke="#3f5a80" stroke-width="0.8"/><ellipse cx="12" cy="5" rx="9" ry="3" fill="#a8c4e8" stroke="#3f5a80" stroke-width="0.8"/><path d="M3 10 C3 13.5 21 13.5 21 10 M3 14.5 C3 18 21 18 21 14.5" stroke="#3f5a80" fill="none" stroke-width="0.8"/></svg>
<div style="position:absolute;left:1052.5px;top:89px;width:1px;height:33px;background:#d0d0d0"></div>
<svg style="position:absolute;left:1058px;top:93px;" width="2" height="27" viewBox="0 0 2 27"><rect x="0" y="0" width="2" height="2" fill="#b4b4b4"/><rect x="0" y="4" width="2" height="2" fill="#b4b4b4"/><rect x="0" y="8" width="2" height="2" fill="#b4b4b4"/><rect x="0" y="12" width="2" height="2" fill="#b4b4b4"/><rect x="0" y="16" width="2" height="2" fill="#b4b4b4"/><rect x="0" y="20" width="2" height="2" fill="#b4b4b4"/><rect x="0" y="24" width="2" height="2" fill="#b4b4b4"/></svg>
<svg style="position:absolute;left:1068.0px;top:93.5px;" width="24.0" height="24.0" viewBox="0 0 24.0 24.0"><defs><radialGradient id="gg1" cx="0.45" cy="0.4" r="0.6"><stop offset="0" stop-color="#e8f0fa"/><stop offset="0.6" stop-color="#8ab4e0"/><stop offset="1" stop-color="#4a78b8"/></radialGradient></defs><ellipse cx="12" cy="10.5" rx="10" ry="9" fill="url(#gg1)" stroke="#4a6a98" stroke-width="0.7"/><path d="M2.5 10.5 H21.5 M3.5 6 H20.5 M3.5 15 H20.5" stroke="#f4f8fc" stroke-width="0.8"/><ellipse cx="12" cy="10.5" rx="4.5" ry="9" fill="none" stroke="#f4f8fc" stroke-width="0.8"/><path d="M12 1.5 V19.5" stroke="#f4f8fc" stroke-width="0.8"/><path d="M5 7 L7.5 7 L7.5 10 L5 10 Z M16.5 7 L19 7 L19 10 L16.5 10 Z M10 3 L14 3 L14 5.5 L10 5.5 Z M5.5 11.5 L7.5 11.5 L7.5 14.5 L5.5 14.5 Z M16.5 11.5 L18.5 11.5 L18.5 14.5 L16.5 14.5 Z" fill="#7a7a80" opacity="0.8"/><rect x="13.5" y="14" width="9" height="9" rx="1" fill="#4a8a4a"/><path d="M15 17.5 H21 L18 21 Z" fill="#111"/><path d="M16.5 15 H19.5 V17.5 H16.5 Z" fill="#111"/></svg>
<svg style="position:absolute;left:1099.0px;top:93.5px;" width="24.0" height="24.0" viewBox="0 0 24.0 24.0"><defs><radialGradient id="gg2" cx="0.45" cy="0.4" r="0.6"><stop offset="0" stop-color="#e8f0fa"/><stop offset="0.6" stop-color="#8ab4e0"/><stop offset="1" stop-color="#4a78b8"/></radialGradient></defs><ellipse cx="12" cy="10.5" rx="10" ry="9" fill="url(#gg2)" stroke="#4a6a98" stroke-width="0.7"/><path d="M2.5 10.5 H21.5 M3.5 6 H20.5 M3.5 15 H20.5" stroke="#f4f8fc" stroke-width="0.8"/><ellipse cx="12" cy="10.5" rx="4.5" ry="9" fill="none" stroke="#f4f8fc" stroke-width="0.8"/><path d="M12 1.5 V19.5" stroke="#f4f8fc" stroke-width="0.8"/><path d="M5 7 L7.5 7 L7.5 10 L5 10 Z M16.5 7 L19 7 L19 10 L16.5 10 Z M10 3 L14 3 L14 5.5 L10 5.5 Z M5.5 11.5 L7.5 11.5 L7.5 14.5 L5.5 14.5 Z M16.5 11.5 L18.5 11.5 L18.5 14.5 L16.5 14.5 Z" fill="#7a7a80" opacity="0.8"/><rect x="13.5" y="14" width="9" height="9" rx="1" fill="#4a8a4a"/><circle cx="17.5" cy="17.8" r="2.2" fill="none" stroke="#fff" stroke-width="1.1"/><path d="M19 19.5 L21 21.5" stroke="#fff" stroke-width="1.3"/></svg>
<svg style="position:absolute;left:1130.0px;top:93.5px;" width="24.0" height="24.0" viewBox="0 0 24.0 24.0"><defs><radialGradient id="gg3" cx="0.45" cy="0.4" r="0.6"><stop offset="0" stop-color="#e8f0fa"/><stop offset="0.6" stop-color="#8ab4e0"/><stop offset="1" stop-color="#4a78b8"/></radialGradient></defs><ellipse cx="12" cy="10.5" rx="10" ry="9" fill="url(#gg3)" stroke="#4a6a98" stroke-width="0.7"/><path d="M2.5 10.5 H21.5 M3.5 6 H20.5 M3.5 15 H20.5" stroke="#f4f8fc" stroke-width="0.8"/><ellipse cx="12" cy="10.5" rx="4.5" ry="9" fill="none" stroke="#f4f8fc" stroke-width="0.8"/><path d="M12 1.5 V19.5" stroke="#f4f8fc" stroke-width="0.8"/><path d="M5 7 L7.5 7 L7.5 10 L5 10 Z M16.5 7 L19 7 L19 10 L16.5 10 Z M10 3 L14 3 L14 5.5 L10 5.5 Z M5.5 11.5 L7.5 11.5 L7.5 14.5 L5.5 14.5 Z M16.5 11.5 L18.5 11.5 L18.5 14.5 L16.5 14.5 Z" fill="#7a7a80" opacity="0.8"/><path d="M6 5 C8 4 10 6 9 9 C7 9 6 8 6 5 M13 7 C15 6 18 8 16 12 L14 11 Z" fill="#2a3a5a"/><circle cx="7" cy="19" r="3.8" fill="#000"/><circle cx="17" cy="19" r="3.8" fill="#000"/><path d="M5 14 H10 V17 H5 Z M14 14 H19 V17 H14 Z M9 15 H15 V18 H9 Z" fill="#000"/><circle cx="7" cy="19.3" r="1.7" fill="#fff"/><circle cx="17" cy="19.3" r="1.7" fill="#fff"/></svg>
<div style="position:absolute;left:1159.5px;top:89px;width:1px;height:33px;background:#d0d0d0"></div>
<svg style="position:absolute;left:1165px;top:93px;" width="2" height="27" viewBox="0 0 2 27"><rect x="0" y="0" width="2" height="2" fill="#b4b4b4"/><rect x="0" y="4" width="2" height="2" fill="#b4b4b4"/><rect x="0" y="8" width="2" height="2" fill="#b4b4b4"/><rect x="0" y="12" width="2" height="2" fill="#b4b4b4"/><rect x="0" y="16" width="2" height="2" fill="#b4b4b4"/><rect x="0" y="20" width="2" height="2" fill="#b4b4b4"/><rect x="0" y="24" width="2" height="2" fill="#b4b4b4"/></svg>
<svg style="position:absolute;left:1175.5px;top:93.5px;" width="24.0" height="24.0" viewBox="0 0 24.0 24.0"><path d="M12 2 C7 2 7 4 7 6 V8 H12 V9 H5 C2.5 9 2 11 2 13 C2 16 3 17 5 17 H7 V14 C7 12 8.5 11 10 11 H15 C16.5 11 17 10 17 9 V6 C17 4 15.5 2 12 2 Z" fill="#3a78b0"/><path d="M12 22 C17 22 17 20 17 18 V16 H12 V15 H19 C21.5 15 22 13 22 11 C22 8 21 7 19 7 H17 V10 C17 12 15.5 13 14 13 H9 C7.5 13 7 14 7 15 V18 C7 20 8.5 22 12 22 Z" fill="#f2c83a"/><circle cx="9.5" cy="4.5" r="1" fill="#fff"/></svg>
<svg style="position:absolute;left:1206.5px;top:93.5px;" width="24.0" height="24.0" viewBox="0 0 24.0 24.0"><text x="0" y="12" font-family="Liberation Sans" font-weight="bold" font-size="8.5" fill="#333">KML</text><rect x="12" y="14" width="9" height="9" rx="1.5" fill="#5a9a5a" stroke="#3d7a3d" stroke-width="0.6"/><path d="M16.5 15.7 V21.3 M13.7 18.5 H19.3" stroke="#fff" stroke-width="1.8"/></svg>
<svg style="position:absolute;left:1237.5px;top:93.5px;" width="24.0" height="24.0" viewBox="0 0 24.0 24.0"><text x="-1" y="10" font-family="Liberation Sans" font-weight="bold" font-size="8" fill="#111">HTML</text><rect x="12" y="14" width="9" height="9" rx="1.5" fill="#d8b02a" stroke="#b38a10" stroke-width="0.6"/><path d="M16.5 15.5 V21.5 M13.5 18.5 H19.5 M14.4 16.4 L18.6 20.6 M18.6 16.4 L14.4 20.6" stroke="#fff" stroke-width="1.1"/></svg>
<svg style="position:absolute;left:1268.5px;top:93.5px;" width="24.0" height="24.0" viewBox="0 0 24.0 24.0"><rect x="1.5" y="3.5" width="19" height="14" rx="5" fill="#5a88c0" stroke="#2a4a70"/><rect x="6" y="6" width="5" height="5" fill="#2a4a70"/><rect x="11" y="11" width="5" height="5" fill="#2a4a70"/><rect x="11" y="6" width="5" height="5" fill="#9ab8dc"/><rect x="13" y="14" width="9" height="9" rx="1.5" fill="#5a9a5a" stroke="#3d7a3d" stroke-width="0.6"/><path d="M17.5 15.7 V21.3 M14.7 18.5 H20.3" stroke="#fff" stroke-width="1.8"/></svg>
<svg style="position:absolute;left:1299.0px;top:93.5px;" width="24.0" height="24.0" viewBox="0 0 24.0 24.0"><rect x="2.0" y="2.0" width="3.8" height="3.8" fill="#90c060"/><rect x="7.2" y="2.0" width="3.8" height="3.8" fill="#90c0e0"/><rect x="12.4" y="2.0" width="3.8" height="3.8" fill="#f0a060"/><rect x="17.6" y="2.0" width="3.8" height="3.8" fill="#c0a0f0"/><rect x="2.0" y="7.2" width="3.8" height="3.8" fill="#c0a0f0"/><rect x="7.2" y="7.2" width="3.8" height="3.8" fill="#f0a060"/><rect x="12.4" y="7.2" width="3.8" height="3.8" fill="#90c0e0"/><rect x="17.6" y="7.2" width="3.8" height="3.8" fill="#90c060"/><rect x="2.0" y="12.4" width="3.8" height="3.8" fill="#90c060"/><rect x="7.2" y="12.4" width="3.8" height="3.8" fill="#90c0e0"/><rect x="12.4" y="12.4" width="3.8" height="3.8" fill="#f0a060"/><rect x="17.6" y="12.4" width="3.8" height="3.8" fill="#c0a0f0"/><rect x="2.0" y="17.6" width="3.8" height="3.8" fill="#f0a060"/><rect x="7.2" y="17.6" width="3.8" height="3.8" fill="#c0a0f0"/><rect x="12.4" y="17.6" width="3.8" height="3.8" fill="#90c060"/><rect x="17.6" y="17.6" width="3.8" height="3.8" fill="#90c0e0"/></svg>
<svg style="position:absolute;left:1329.5px;top:93.5px;" width="24.0" height="24.0" viewBox="0 0 24.0 24.0"><rect x="2.5" y="2.5" width="17" height="17" fill="#fff" stroke="#7aa0d0"/><path d="M8.2 2.5 V19.5 M13.8 2.5 V19.5 M2.5 8.2 H19.5 M2.5 13.8 H19.5" stroke="#7aa0d0"/><rect x="14" y="14" width="9" height="9" rx="1.5" fill="#d8b02a" stroke="#b38a10" stroke-width="0.6"/><path d="M18.5 15.5 V21.5 M15.5 18.5 H21.5 M16.4 16.4 L20.6 20.6 M20.6 16.4 L16.4 20.6" stroke="#fff" stroke-width="1.1"/></svg>
<div style="position:absolute;left:1359.5px;top:89px;width:1px;height:33px;background:#d0d0d0"></div>
<svg style="position:absolute;left:1365px;top:93px;" width="2" height="27" viewBox="0 0 2 27"><rect x="0" y="0" width="2" height="2" fill="#b4b4b4"/><rect x="0" y="4" width="2" height="2" fill="#b4b4b4"/><rect x="0" y="8" width="2" height="2" fill="#b4b4b4"/><rect x="0" y="12" width="2" height="2" fill="#b4b4b4"/><rect x="0" y="16" width="2" height="2" fill="#b4b4b4"/><rect x="0" y="20" width="2" height="2" fill="#b4b4b4"/><rect x="0" y="24" width="2" height="2" fill="#b4b4b4"/></svg>
<svg style="position:absolute;left:1375.5px;top:93.5px;" width="24.0" height="24.0" viewBox="0 0 24.0 24.0"><rect x="3.5" y="1.5" width="17" height="21" fill="#5a88c0" stroke="#2a3a4a"/><rect x="3.5" y="1.5" width="4" height="21" fill="#2a3a4a"/><text x="10.5" y="16" font-family="Liberation Sans" font-size="12" fill="#fff">?</text></svg>
<div style="position:absolute;left:1404px;top:89px;width:1px;height:33px;background:#d0d0d0"></div>
<svg style="position:absolute;left:1410px;top:93px;" width="2" height="27" viewBox="0 0 2 27"><rect x="0" y="0" width="2" height="2" fill="#b4b4b4"/><rect x="0" y="4" width="2" height="2" fill="#b4b4b4"/><rect x="0" y="8" width="2" height="2" fill="#b4b4b4"/><rect x="0" y="12" width="2" height="2" fill="#b4b4b4"/><rect x="0" y="16" width="2" height="2" fill="#b4b4b4"/><rect x="0" y="20" width="2" height="2" fill="#b4b4b4"/><rect x="0" y="24" width="2" height="2" fill="#b4b4b4"/></svg>
<svg style="position:absolute;left:1420.0px;top:93.5px;" width="24.0" height="24.0" viewBox="0 0 24.0 24.0"><path d="M12 1 V23 M1 12 H23" stroke="#555" stroke-width="0.9"/><circle cx="12" cy="12" r="4" fill="none" stroke="#c03030" stroke-width="1.2" stroke-dasharray="3 3"/></svg>
<div style="position:absolute;left:1460px;top:89px;width:1px;height:33px;background:#d0d0d0"></div>
<svg style="position:absolute;left:4px;top:127px;" width="2" height="27" viewBox="0 0 2 27"><rect x="0" y="0" width="2" height="2" fill="#b4b4b4"/><rect x="0" y="4" width="2" height="2" fill="#b4b4b4"/><rect x="0" y="8" width="2" height="2" fill="#b4b4b4"/><rect x="0" y="12" width="2" height="2" fill="#b4b4b4"/><rect x="0" y="16" width="2" height="2" fill="#b4b4b4"/><rect x="0" y="20" width="2" height="2" fill="#b4b4b4"/><rect x="0" y="24" width="2" height="2" fill="#b4b4b4"/></svg>
<svg style="position:absolute;left:14.7px;top:127.5px;" width="24.0" height="24.0" viewBox="0 0 24.0 24.0"><path d="M3 2.5 V21.5 H21 Z" fill="#e2e2e2" stroke="#c2c2c2" stroke-width="1.1"/><path d="M7 11 V17.5 H13 Z" fill="#f0f0f0" stroke="#c2c2c2"/><path d="M3 6 H5 M3 9 H4.5 M3 12 H5 M3 15 H4.5 M6 21.5 V19.5 M9 21.5 V20 M12 21.5 V19.5" stroke="#c2c2c2"/></svg>
<svg style="position:absolute;left:46.0px;top:127.5px;" width="24.0" height="24.0" viewBox="0 0 24.0 24.0"><circle cx="9.5" cy="4" r="2.3" fill="#ddd" stroke="#ccc"/><circle cx="16" cy="7" r="2.3" fill="#ddd" stroke="#ccc"/><circle cx="3.5" cy="12" r="2.3" fill="#ddd" stroke="#ccc"/><rect x="13" y="13" width="10" height="10" rx="1.5" fill="#d4d4d4" stroke="#c4c4c4" stroke-width="0.6"/><path d="M15.0 18.0 H19.0 M18.0 15.5 L21.0 18.0 L18.0 20.5" stroke="#f4f4f4" stroke-width="1.6" fill="none"/></svg>
<svg style="position:absolute;left:92.0px;top:127.5px;" width="24.0" height="24.0" viewBox="0 0 24.0 24.0"><path d="M2 8 C1 3 7 1 10 3 C13 1 20 2 20 7 C20 12 14 12 11 11.5 C8 13 3 12 2 8 Z" fill="#dcdcdc" stroke="#c8c8c8"/><rect x="13" y="13" width="10" height="10" rx="1.5" fill="#d4d4d4" stroke="#c4c4c4" stroke-width="0.6"/><path d="M15.5 19.0 A2.8 2.8 0 1 1 19.0 20.8" stroke="#f4f4f4" stroke-width="1.3" fill="none"/></svg>
<svg style="position:absolute;left:123.0px;top:127.5px;" width="24.0" height="24.0" viewBox="0 0 24.0 24.0"><circle cx="8" cy="7" r="6" fill="#dcdcdc" stroke="#c8c8c8"/><path d="M11 10 H18 L22 16 L18 22 H11 L7.5 16 Z" fill="#e4e4e4" stroke="#c8c8c8"/><path d="M8 7 L15 16" stroke="#c0c0c0" stroke-width="1.2"/></svg>
<svg style="position:absolute;left:154.7px;top:127.5px;" width="24.0" height="24.0" viewBox="0 0 24.0 24.0"><path d="M2 8 C1 3 7 1 10 3 C13 1 20 2 20 7 C20 12 14 12 11 11.5 C8 13 3 12 2 8 Z" fill="#dcdcdc" stroke="#c8c8c8"/><ellipse cx="8" cy="6.5" rx="3" ry="1.8" fill="#f2f2f2" stroke="#c8c8c8" stroke-width="0.8"/><rect x="13" y="13" width="10" height="10" rx="1.5" fill="#d4d4d4" stroke="#c4c4c4" stroke-width="0.6"/><path d="M18.0 15.0 V21.0 M15.0 18.0 H21.0 M15.9 15.9 L20.1 20.1 M20.1 15.9 L15.9 20.1" stroke="#f4f4f4" stroke-width="1.1"/></svg>
<svg style="position:absolute;left:185.5px;top:127.5px;" width="24.0" height="24.0" viewBox="0 0 24.0 24.0"><path d="M2 8 C1 3 7 1 10 3 C13 1 20 2 20 7 C20 12 14 12 11 11.5 C8 13 3 12 2 8 Z" fill="#dcdcdc" stroke="#c8c8c8"/><path d="M4 17 C2 13 6 11 9 12 C11 14 10 19 7 21 C5 21 4 19 4 17 Z" fill="#d8d8d8" stroke="#c8c8c8"/><rect x="13" y="13" width="10" height="10" rx="1.5" fill="#d4d4d4" stroke="#c4c4c4" stroke-width="0.6"/><path d="M18.0 15.0 V21.0 M15.0 18.0 H21.0 M15.9 15.9 L20.1 20.1 M20.1 15.9 L15.9 20.1" stroke="#f4f4f4" stroke-width="1.1"/></svg>
<svg style="position:absolute;left:216.0px;top:127.5px;" width="24.0" height="24.0" viewBox="0 0 24.0 24.0"><path d="M2 8 C1 3 7 1 10 3 C13 1 20 2 20 7 C20 12 14 12 11 11.5 C8 13 3 12 2 8 Z" fill="#dcdcdc" stroke="#c8c8c8"/><ellipse cx="8" cy="6.5" rx="3" ry="1.8" fill="#f2f2f2" stroke="#c8c8c8" stroke-width="0.8"/><rect x="13" y="13" width="10" height="10" rx="1.5" fill="#d4d4d4" stroke="#c4c4c4" stroke-width="0.6"/><path d="M18.0 15.0 V21.0 M15.0 18.0 H21.0 M15.9 15.9 L20.1 20.1 M20.1 15.9 L15.9 20.1" stroke="#f4f4f4" stroke-width="1.1"/></svg>
<svg style="position:absolute;left:247.0px;top:127.5px;" width="24.0" height="24.0" viewBox="0 0 24.0 24.0"><path d="M2 8 C1 3 7 1 10 3 C13 1 20 2 20 7 C20 12 14 12 11 11.5 C8 13 3 12 2 8 Z" fill="#dcdcdc" stroke="#c8c8c8"/><ellipse cx="8" cy="6.5" rx="3" ry="1.8" fill="#f2f2f2" stroke="#c8c8c8" stroke-width="0.8"/><rect x="13" y="13" width="10" height="10" rx="1.5" fill="#d4d4d4" stroke="#c4c4c4" stroke-width="0.6"/><path d="M15.5 15.5 L20.5 20.5 M20.5 15.5 L15.5 20.5" stroke="#f4f4f4" stroke-width="1.6"/></svg>
<svg style="position:absolute;left:278.0px;top:127.5px;" width="24.0" height="24.0" viewBox="0 0 24.0 24.0"><path d="M2 8 C1 3 7 1 10 3 C13 1 20 2 20 7 C20 12 14 12 11 11.5 C8 13 3 12 2 8 Z" fill="#dcdcdc" stroke="#c8c8c8"/><path d="M4 17 C2 13 6 11 9 12 C11 14 10 19 7 21 C5 21 4 19 4 17 Z" fill="#d8d8d8" stroke="#c8c8c8"/><rect x="13" y="13" width="10" height="10" rx="1.5" fill="#d4d4d4" stroke="#c4c4c4" stroke-width="0.6"/><path d="M15.5 15.5 L20.5 20.5 M20.5 15.5 L15.5 20.5" stroke="#f4f4f4" stroke-width="1.6"/></svg>
<svg style="position:absolute;left:309.0px;top:127.5px;" width="24.0" height="24.0" viewBox="0 0 24.0 24.0"><path d="M2 9 C2 3 17 2 20 5 C23 10 14 9 12 14 C11 21 5 22 3 16 Z" fill="#dcdcdc" stroke="#c8c8c8"/></svg>
<svg style="position:absolute;left:340.0px;top:127.5px;" width="24.0" height="24.0" viewBox="0 0 24.0 24.0"><path d="M4 20 C0 15 5 10 10 5 C15 1 22 2 22 7 C22 12 16 18 11 20 C8 21.5 6 21.5 4 20 Z" fill="#dcdcdc" stroke="#c8c8c8"/></svg>
<svg style="position:absolute;left:371.0px;top:127.5px;" width="24.0" height="24.0" viewBox="0 0 24.0 24.0"><path d="M4 3 L9 16 L14 6 H20" fill="none" stroke="#c8c8c8" stroke-width="1.1"/><rect x="2.5" y="1.5" width="3" height="3" fill="none" stroke="#c8c8c8"/><rect x="12.5" y="4.5" width="3" height="3" fill="none" stroke="#c8c8c8"/><rect x="18.5" y="4.5" width="3" height="3" fill="none" stroke="#c8c8c8"/><rect x="13" y="13" width="10" height="10" rx="1.5" fill="#d4d4d4" stroke="#c4c4c4" stroke-width="0.6"/><path d="M15.5 19.0 A2.8 2.8 0 1 1 19.0 20.8" stroke="#f4f4f4" stroke-width="1.3" fill="none"/></svg>
<svg style="position:absolute;left:401.0px;top:127.5px;" width="24.0" height="24.0" viewBox="0 0 24.0 24.0"><path d="M11 1 V23 M3 12 H21" stroke="#cfcfcf"/><rect x="16" y="2" width="6" height="6" fill="none" stroke="#c8c8c8"/><rect x="2" y="16" width="6" height="6" fill="none" stroke="#c8c8c8"/><circle cx="11" cy="12" r="2" fill="none" stroke="#c8c8c8"/><rect x="13" y="10" width="4" height="4" fill="none" stroke="#c8c8c8"/></svg>
<svg style="position:absolute;left:433.0px;top:127.5px;" width="24.0" height="24.0" viewBox="0 0 24.0 24.0"><path d="M2 7 C2 2 8 1 10 4 C12 1 20 2 20 7 C20 11 15 12 11 11 C7 12 2 11 2 7 Z" fill="#dcdcdc" stroke="#c8c8c8"/><path d="M8 21 L14 10 M14 21 L8 10" stroke="#c8c8c8" stroke-width="1.3"/><circle cx="7.5" cy="21" r="2" fill="none" stroke="#c8c8c8"/><circle cx="14.5" cy="21" r="2" fill="none" stroke="#c8c8c8"/></svg>
<svg style="position:absolute;left:464.0px;top:127.5px;" width="24.0" height="24.0" viewBox="0 0 24.0 24.0"><path d="M2 7 C2 2 8 1 10 4 C12 1 20 2 20 7 C20 11 15 12 11 11 C7 12 2 11 2 7 Z" fill="#dcdcdc" stroke="#c8c8c8"/><path d="M8 21 L14 10 M14 21 L8 10" stroke="#c8c8c8" stroke-width="1.3"/><circle cx="7.5" cy="21" r="2" fill="none" stroke="#c8c8c8"/><circle cx="14.5" cy="21" r="2" fill="none" stroke="#c8c8c8"/></svg>
<svg style="position:absolute;left:495.0px;top:127.5px;" width="24.0" height="24.0" viewBox="0 0 24.0 24.0"><path d="M2 7 C2 2 8 1 10 4 C12 1 20 2 20 7 C20 11 15 12 11 11 C7 12 2 11 2 7 Z" fill="#dcdcdc" stroke="#c8c8c8"/><path d="M9 5 V11 M13 5 V11 M7 8 H15" stroke="#c0c0c0"/><path d="M6 12 C8 17 11 19 14 22" stroke="#c8c8c8" fill="none"/></svg>
<svg style="position:absolute;left:526.0px;top:127.5px;" width="24.0" height="24.0" viewBox="0 0 24.0 24.0"><path d="M3 4 H21 M3 9 H21 M3 14 H21 M3 19 H21" stroke="#ccc"/><path d="M9 3 C11 6 13 6 15 3 M9 10 C11 13 13 13 15 10" stroke="#ccc" fill="none"/></svg>
<svg style="position:absolute;left:556.0px;top:127.5px;" width="24.0" height="24.0" viewBox="0 0 24.0 24.0"><path d="M7 18 C2 14 3 7 9 5" fill="none" stroke="#ccc" stroke-width="1.2"/><path d="M11 2 L20 7 L11 12 Z" fill="#ddd" stroke="#ccc"/><path d="M9 15 L13 22 H5 Z" fill="none" stroke="#ddd"/></svg>
<svg style="position:absolute;left:77.2px;top:137.5px;" width="9" height="5" viewBox="0 0 9 5"><path d="M0 0 H9 L4.5 5 Z" fill="#777"/></svg>
<svg style="position:absolute;left:588.0px;top:137.5px;" width="9" height="5" viewBox="0 0 9 5"><path d="M0 0 H9 L4.5 5 Z" fill="#666"/></svg>
<div style="position:absolute;left:1918px;top:123px;width:1px;height:33px;background:#d2d2d2"></div>
<svg style="position:absolute;left:4px;top:161px;" width="2" height="27" viewBox="0 0 2 27"><rect x="0" y="0" width="2" height="2" fill="#b4b4b4"/><rect x="0" y="4" width="2" height="2" fill="#b4b4b4"/><rect x="0" y="8" width="2" height="2" fill="#b4b4b4"/><rect x="0" y="12" width="2" height="2" fill="#b4b4b4"/><rect x="0" y="16" width="2" height="2" fill="#b4b4b4"/><rect x="0" y="20" width="2" height="2" fill="#b4b4b4"/><rect x="0" y="24" width="2" height="2" fill="#b4b4b4"/></svg>
<svg style="position:absolute;left:14.0px;top:161.5px;" width="24.0" height="24.0" viewBox="0 0 24.0 24.0"><rect x="2" y="3" width="20" height="18" fill="#b8d8a0"/><path d="M3 8 C7 6 12 12 20 9 M5 16 C10 13 13 18 19 15" stroke="#90b0d0" fill="none"/><path d="M12 21 L20 13" stroke="#2a7a2a" stroke-width="1.5"/><circle cx="14" cy="16" r="2.5" fill="none" stroke="#2a7a2a"/></svg>
<svg style="position:absolute;left:45.5px;top:161.5px;" width="24.0" height="24.0" viewBox="0 0 24.0 24.0"><rect x="3" y="5" width="16" height="15" fill="#f0e0b0"/><path d="M3 20 C8 14 14 18 18 12 L22 16 L14 22 Z" fill="#6a98d0"/><rect x="3" y="4" width="5" height="5" fill="#30b030"/><path d="M9 19 L21 3" stroke="#7a4020" stroke-width="2.4"/></svg>
<div style="position:absolute;left:75.8px;top:157px;width:1px;height:33px;background:#d0d0d0"></div>
<svg style="position:absolute;left:81px;top:161px;" width="2" height="27" viewBox="0 0 2 27"><rect x="0" y="0" width="2" height="2" fill="#b4b4b4"/><rect x="0" y="4" width="2" height="2" fill="#b4b4b4"/><rect x="0" y="8" width="2" height="2" fill="#b4b4b4"/><rect x="0" y="12" width="2" height="2" fill="#b4b4b4"/><rect x="0" y="16" width="2" height="2" fill="#b4b4b4"/><rect x="0" y="20" width="2" height="2" fill="#b4b4b4"/><rect x="0" y="24" width="2" height="2" fill="#b4b4b4"/></svg>
<svg style="position:absolute;left:90.5px;top:161.5px;" width="24.0" height="24.0" viewBox="0 0 24.0 24.0"><path d="M12 2 V8 M9.5 4.5 L12 2 L14.5 4.5" stroke="#000" stroke-width="1.6" fill="none"/><rect x="6" y="11" width="13" height="10" fill="#000"/><rect x="10" y="9" width="5" height="3" fill="#000"/><circle cx="12.5" cy="16" r="2.8" fill="none" stroke="#fff" stroke-width="1.2"/></svg>
<svg style="position:absolute;left:121.0px;top:161.5px;" width="24.0" height="24.0" viewBox="0 0 24.0 24.0"><rect x="2.5" y="2.5" width="17" height="15" fill="#444" stroke="#000" stroke-width="3" stroke-dasharray="3.5 1.5"/><rect x="5" y="5" width="12" height="10" fill="#f4f4f4"/><path d="M5 15 L10 9 L16 15 Z" fill="#555"/><rect x="6" y="6" width="3" height="2" fill="#555"/><path d="M14 12 L14 23 L16.5 20.5 L18.5 24 L20 23 L18 19.8 L21.5 19.8 Z" fill="#fff" stroke="#000" stroke-width="0.9"/></svg>
<div style="position:absolute;left:0px;top:191px;width:50px;height:807px;background:#f0f0f0"></div>
<svg style="position:absolute;left:5px;top:195px;" width="42" height="2" viewBox="0 0 42 2"><rect x="0" y="0" width="2" height="2" fill="#b4b4b4"/><rect x="4" y="0" width="2" height="2" fill="#b4b4b4"/><rect x="8" y="0" width="2" height="2" fill="#b4b4b4"/><rect x="12" y="0" width="2" height="2" fill="#b4b4b4"/><rect x="16" y="0" width="2" height="2" fill="#b4b4b4"/><rect x="20" y="0" width="2" height="2" fill="#b4b4b4"/><rect x="24" y="0" width="2" height="2" fill="#b4b4b4"/><rect x="28" y="0" width="2" height="2" fill="#b4b4b4"/><rect x="32" y="0" width="2" height="2" fill="#b4b4b4"/><rect x="36" y="0" width="2" height="2" fill="#b4b4b4"/><rect x="40" y="0" width="2" height="2" fill="#b4b4b4"/></svg>
<svg style="position:absolute;left:5.0px;top:204.0px;" width="24.0" height="24.0" viewBox="0 0 24.0 24.0"><path d="M3.5 4.5 L9 18 L14.5 4.5 L20 4" fill="none" stroke="#333" stroke-width="1.3"/><path d="M3.5 2.8 L5.2 4.5 L3.5 6.2 L1.8 4.5 Z M14.5 2.8 L16.2 4.5 L14.5 6.2 L12.8 4.5 Z M20 2.3 L21.7 4 L20 5.7 L18.3 4 Z" fill="#fff" stroke="#333" stroke-width="0.8"/><circle cx="9" cy="18.5" r="1.8" fill="#fff" stroke="#333" stroke-width="0.8"/><rect x="13" y="13" width="10" height="10" rx="1.5" fill="#5a9a5a" stroke="#3d7a3d" stroke-width="0.6"/><path d="M18.0 15.2 V20.8 M15.2 18.0 H20.8" stroke="#fff" stroke-width="1.8"/></svg>
<svg style="position:absolute;left:5.0px;top:234.0px;" width="24.0" height="24.0" viewBox="0 0 24.0 24.0"><rect x="2" y="2" width="18" height="18" fill="#6a98d0"/><rect x="2" y="2" width="6" height="6" fill="#1f3a60"/><rect x="14" y="2" width="6" height="6" fill="#1f3a60"/><rect x="8" y="8" width="6" height="6" fill="#1f3a60"/><rect x="2" y="14" width="6" height="6" fill="#1f3a60"/><rect x="13" y="13" width="10" height="10" rx="1.5" fill="#5a9a5a" stroke="#3d7a3d" stroke-width="0.6"/><path d="M18.0 15.2 V20.8 M15.2 18.0 H20.8" stroke="#fff" stroke-width="1.8"/></svg>
<svg style="position:absolute;left:5.0px;top:265.0px;" width="24.0" height="24.0" viewBox="0 0 24.0 24.0"><rect x="2.5" y="2.5" width="18" height="18" fill="#9ab8dc" stroke="#2a4a70" stroke-width="1.2"/><path d="M2.5 11.5 H20.5 M11.5 2.5 V20.5 M2.5 2.5 L11.5 11.5 M11.5 2.5 L2.5 11.5 M20.5 2.5 L11.5 11.5 M6.5 11.5 V20.5" stroke="#2a4a70" stroke-width="1"/><rect x="13" y="13" width="10" height="10" rx="1.5" fill="#5a9a5a" stroke="#3d7a3d" stroke-width="0.6"/><path d="M18.0 15.2 V20.8 M15.2 18.0 H20.8" stroke="#fff" stroke-width="1.8"/></svg>
<svg style="position:absolute;left:5.0px;top:296.0px;" width="24.0" height="24.0" viewBox="0 0 24.0 24.0"><path d="M9 3 C14 2 16 6 14 10 C12 14 8 16 5 17 L4.5 15 C7 14 9 12 9.5 10 C6 10 5 8 5 6.5 C5 4.5 7 3 9 3 Z" fill="#5a88c0" stroke="#2a4a70" stroke-width="0.7"/><rect x="13" y="13" width="10" height="10" rx="1.5" fill="#5a9a5a" stroke="#3d7a3d" stroke-width="0.6"/><path d="M18.0 15.2 V20.8 M15.2 18.0 H20.8" stroke="#fff" stroke-width="1.8"/></svg>
<svg style="position:absolute;left:5.0px;top:326.0px;" width="24.0" height="24.0" viewBox="0 0 24.0 24.0"><path d="M2 22 C4 14 10 6 21 2 C19 10 13 16 6 18 Z" fill="#8aaad6" stroke="#2a4a70" stroke-width="0.8"/><path d="M2 22 L17 7" stroke="#2a4a70" stroke-width="0.8"/><rect x="13" y="13" width="10" height="10" rx="1.5" fill="#5a9a5a" stroke="#3d7a3d" stroke-width="0.6"/><path d="M18.0 15.2 V20.8 M15.2 18.0 H20.8" stroke="#fff" stroke-width="1.8"/></svg>
<svg style="position:absolute;left:5.0px;top:356.0px;" width="24.0" height="24.0" viewBox="0 0 24.0 24.0"><rect x="2.5" y="2.5" width="19" height="19" rx="2.5" fill="#b8c8de" stroke="#506a90"/><path d="M4.5 4.5 L10 17 L16 4.5" fill="none" stroke="#506a90" stroke-width="1.3"/><circle cx="10" cy="17.5" r="1.5" fill="#fff" stroke="#506a90" stroke-width="0.8"/><rect x="13" y="13" width="10" height="10" rx="1.5" fill="#5a9a5a" stroke="#3d7a3d" stroke-width="0.6"/><path d="M18.0 15.2 V20.8 M15.2 18.0 H20.8" stroke="#fff" stroke-width="1.8"/></svg>
<svg style="position:absolute;left:5.0px;top:385.0px;" width="24.0" height="24.0" viewBox="0 0 24.0 24.0"><path d="M3 6 C3 2 8 1 11 2 C14 1 19 2 19 6 C19 10 17 13 15 14 V19 C15 21 12 21 12 19 V15 C10 15 8 14 7 12 C4 11 3 9 3 6 Z" fill="#5a88c0" stroke="#2a4a70" stroke-width="0.9"/><rect x="13" y="13" width="10" height="10" rx="1.5" fill="#5a9a5a" stroke="#3d7a3d" stroke-width="0.6"/><path d="M18.0 15.2 V20.8 M15.2 18.0 H20.8" stroke="#fff" stroke-width="1.8"/></svg>
<svg style="position:absolute;left:5.0px;top:415.0px;" width="24.0" height="24.0" viewBox="0 0 24.0 24.0"><circle cx="11" cy="11" r="9.5" fill="#a8c4e4" stroke="#3a5a90" stroke-width="0.9"/><path d="M1.5 11 H20.5 M11 1.5 V20.5 M3 6 H19 M3 16 H19" stroke="#eef" stroke-width="0.7"/><path d="M5 5 C7 6 9 4 8 9 C6 10 5 8 5 5 M13 6 C16 5 18 8 15 11 C13 10 13 8 13 6" fill="#3a5a90"/><rect x="13" y="13" width="10" height="10" rx="1.5" fill="#5a9a5a" stroke="#3d7a3d" stroke-width="0.6"/><path d="M18.0 15.2 V20.8 M15.2 18.0 H20.8" stroke="#fff" stroke-width="1.8"/></svg>
<svg style="position:absolute;left:5.0px;top:445.0px;" width="24.0" height="24.0" viewBox="0 0 24.0 24.0"><circle cx="11" cy="11" r="9.5" fill="#3a6aa8" stroke="#1f3a60" stroke-width="0.9"/><path d="M1.5 11 H20.5 M3 6.5 H19 M3 15.5 H19" stroke="#cde" stroke-width="1.2"/><ellipse cx="11" cy="11" rx="4.5" ry="9.5" fill="none" stroke="#cde" stroke-width="1.2"/><rect x="13" y="13" width="10" height="10" rx="1.5" fill="#5a9a5a" stroke="#3d7a3d" stroke-width="0.6"/><path d="M18.0 15.2 V20.8 M15.2 18.0 H20.8" stroke="#fff" stroke-width="1.8"/></svg>
<svg style="position:absolute;left:5.0px;top:475.0px;" width="24.0" height="24.0" viewBox="0 0 24.0 24.0"><circle cx="11" cy="11" r="9.5" fill="#c8d8ec" stroke="#3a5a90" stroke-width="0.9"/><path d="M1.5 11 H20.5 M11 1.5 V20.5" stroke="#9ab" stroke-width="0.6"/><path d="M5 5 L9 16 L13 5 L17 5" fill="none" stroke="#333" stroke-width="1.2"/><circle cx="5" cy="5" r="1.4" fill="#fff" stroke="#333" stroke-width="0.7"/><circle cx="13" cy="5" r="1.4" fill="#fff" stroke="#333" stroke-width="0.7"/><circle cx="17" cy="5" r="1.4" fill="#fff" stroke="#333" stroke-width="0.7"/><rect x="13" y="13" width="10" height="10" rx="1.5" fill="#5a9a5a" stroke="#3d7a3d" stroke-width="0.6"/><path d="M18.0 15.2 V20.8 M15.2 18.0 H20.8" stroke="#fff" stroke-width="1.8"/></svg>
<svg style="position:absolute;left:5.0px;top:505.0px;" width="24.0" height="24.0" viewBox="0 0 24.0 24.0"><path d="M3.5 4.5 L9 18 L14.5 4.5 L20 4" fill="none" stroke="#333" stroke-width="1.3"/><path d="M3.5 2.8 L5.2 4.5 L3.5 6.2 L1.8 4.5 Z M14.5 2.8 L16.2 4.5 L14.5 6.2 L12.8 4.5 Z M20 2.3 L21.7 4 L20 5.7 L18.3 4 Z" fill="#fff" stroke="#333" stroke-width="0.8"/><circle cx="9" cy="18.5" r="1.8" fill="#fff" stroke="#333" stroke-width="0.8"/><rect x="13" y="13" width="10" height="10" rx="1.5" fill="#d8b02a" stroke="#b38a10" stroke-width="0.6"/><path d="M18.0 15.0 V21.0 M15.0 18.0 H21.0 M15.9 15.9 L20.1 20.1 M20.1 15.9 L15.9 20.1" stroke="#fff" stroke-width="1.1"/></svg>
<svg style="position:absolute;left:12.0px;top:535.5px;" width="24.0" height="24.0" viewBox="0 0 24.0 24.0"><rect x="3" y="3" width="17" height="17" fill="#5a88c0" stroke="#2a4a70" stroke-width="0.8"/><path d="M3 8 H20 M3 12 H20 M3 16 H20 M8 3 V20 M12.5 3 V20 M16.5 3 V20" stroke="#dfe8f4" stroke-width="1"/><rect x="13" y="13" width="10" height="10" rx="1.5" fill="#5a9a5a" stroke="#3d7a3d" stroke-width="0.6"/><path d="M18.0 15.2 V20.8 M15.2 18.0 H20.8" stroke="#fff" stroke-width="1.8"/></svg>
<svg style="position:absolute;left:36.0px;top:395px;" width="9" height="5" viewBox="0 0 9 5"><path d="M0 0 H9 L4.5 5 Z" fill="#000"/></svg>
<svg style="position:absolute;left:36.0px;top:425px;" width="9" height="5" viewBox="0 0 9 5"><path d="M0 0 H9 L4.5 5 Z" fill="#000"/></svg>
<svg style="position:absolute;left:36.0px;top:485px;" width="9" height="5" viewBox="0 0 9 5"><path d="M0 0 H9 L4.5 5 Z" fill="#000"/></svg>
<svg style="position:absolute;left:36.0px;top:515px;" width="9" height="5" viewBox="0 0 9 5"><path d="M0 0 H9 L4.5 5 Z" fill="#000"/></svg>
<div style="position:absolute;left:50px;top:192px;width:432px;height:806px;background:#f0f0f0"></div>
<div style="position:absolute;left:50px;top:192px;width:432px;height:31px;background:#dadada;border:1px solid #c4c4c4;box-sizing:border-box"></div>
<div class="t" style="left:55.6px;top:201.57px;font-size:14.8px;font-weight:normal;color:#000;font-style:normal;transform:scaleX(0.9346);transform-origin:0 0;">Layer</div>
<svg style="position:absolute;left:433px;top:199px;" width="18" height="17" viewBox="0 0 18 17"><rect x="5" y="1.5" width="11" height="9" fill="#fff" stroke="#2a2a2a" stroke-width="2.4"/><rect x="1.5" y="6" width="10" height="9" fill="#f0f0f0" stroke="#2a2a2a" stroke-width="2.4"/></svg>
<svg style="position:absolute;left:459px;top:199px;" width="18" height="18" viewBox="0 0 18 18"><path d="M2 2 L16 16 M16 2 L2 16" stroke="#2a2a2a" stroke-width="2.6"/></svg>
<svg style="position:absolute;left:54px;top:228px;" width="18" height="18" viewBox="0 0 18 18"><path d="M2 12 L9 6 L13 10 L7 16 Z" fill="#e86050"/><path d="M4 10 L8 6.5 L10 8.5 L6 12 Z" fill="#f5c542"/><path d="M6 14 L10 10 L12 12 Z" fill="#6a98d0"/><path d="M10 8 L16 2" stroke="#e0b040" stroke-width="3"/></svg>
<svg style="position:absolute;left:78px;top:228px;" width="18" height="18" viewBox="0 0 18 18"><rect x="3" y="5" width="10" height="11" fill="none" stroke="#999"/><rect x="5.5" y="2" width="8" height="11" fill="#f4f4f4" stroke="#888"/><path d="M8 4 V12 M11 4 V12" stroke="#666"/><path d="M7 16 H12" stroke="#d04040" stroke-width="1.5"/></svg>
<svg style="position:absolute;left:100px;top:229px;" width="20" height="16" viewBox="0 0 20 16"><path d="M1 8 C5 2 15 2 19 8 C15 14 5 14 1 8 Z" fill="#f4f4f4" stroke="#aaa"/><circle cx="10" cy="8" r="3.5" fill="#4a6ab0"/><rect x="12" y="12" width="7" height="3" fill="#222"/></svg>
<svg style="position:absolute;left:123px;top:228px;" width="18" height="18" viewBox="0 0 18 18"><path d="M2 2 H16 L10 9 V16 H8 V9 Z" fill="#6a98d0" stroke="#4a6aa0" stroke-width="0.6"/><rect x="2" y="1.5" width="14" height="3" fill="#e0c840"/><path d="M8 16 H10" stroke="#d04040" stroke-width="2"/></svg>
<svg style="position:absolute;left:145px;top:228px;" width="20" height="18" viewBox="0 0 20 18"><text x="1" y="13" font-family="Liberation Serif" font-size="16" fill="#7a4a9a">ε</text><rect x="10" y="11" width="8" height="5" fill="#f4f4f4" stroke="#ccc"/><path d="M12 17 H16" stroke="#d04040" stroke-width="1.5"/></svg>
<svg style="position:absolute;left:170.5px;top:235.5px;" width="9" height="5" viewBox="0 0 9 5"><path d="M0 0 H9 L4.5 5 Z" fill="#000"/></svg>
<svg style="position:absolute;left:185px;top:228px;" width="18" height="18" viewBox="0 0 18 18"><rect x="2" y="4" width="8" height="11" fill="#fff" stroke="#c9a10f"/><rect x="4" y="8" width="3" height="2" fill="#e08020"/><path d="M13 1 V14 M9.5 10.5 L13 15 L16.5 10.5" stroke="#4a7ac0" stroke-width="2.6" fill="none"/></svg>
<svg style="position:absolute;left:207px;top:228px;" width="18" height="18" viewBox="0 0 18 18"><rect x="2" y="5" width="8" height="11" fill="#fff" stroke="#c9a10f"/><rect x="4" y="9" width="3" height="2" fill="#e08020"/><path d="M13 17 V4 M9.5 7.5 L13 3 L16.5 7.5" stroke="#4a7ac0" stroke-width="2.6" fill="none"/></svg>
<svg style="position:absolute;left:229px;top:228px;" width="18" height="18" viewBox="0 0 18 18"><rect x="2.5" y="2.5" width="12" height="13" fill="#fafafa" stroke="#999"/><path d="M11 16 H16" stroke="#d04040" stroke-width="2"/></svg>
<div style="position:absolute;left:50px;top:251px;width:432px;height:747px;background:#fff;border-left:1px solid #a0a0a0;border-top:1px solid #a8a8a8;border-right:1px solid #dcdcdc;box-sizing:border-box"></div>
<div style="position:absolute;left:76px;top:252px;width:406px;height:24px;background:#cce8ff"></div>
<div style="position:absolute;left:100px;top:252px;width:382px;height:24px;border:1px dotted #222;box-sizing:border-box"></div>
<svg style="position:absolute;left:79px;top:256px;" width="16" height="16" viewBox="0 0 16 16"><rect x="0.5" y="0.5" width="15" height="15" fill="#fff" stroke="#333"/><path d="M3.5 8 L6.5 11 L12.5 4.5" fill="none" stroke="#333" stroke-width="1.3"/></svg>
<svg style="position:absolute;left:79px;top:280px;" width="16" height="16" viewBox="0 0 16 16"><rect x="0.5" y="0.5" width="15" height="15" fill="#fff" stroke="#333"/></svg>
<svg style="position:absolute;left:79px;top:304px;" width="16" height="16" viewBox="0 0 16 16"><rect x="0.5" y="0.5" width="15" height="15" fill="#fff" stroke="#333"/><path d="M3.5 8 L6.5 11 L12.5 4.5" fill="none" stroke="#333" stroke-width="1.3"/></svg>
<svg style="position:absolute;left:79px;top:328px;" width="16" height="16" viewBox="0 0 16 16"><rect x="0.5" y="0.5" width="15" height="15" fill="#fff" stroke="#333"/><path d="M3.5 8 L6.5 11 L12.5 4.5" fill="none" stroke="#333" stroke-width="1.3"/></svg>
<svg style="position:absolute;left:79px;top:352px;" width="16" height="16" viewBox="0 0 16 16"><rect x="0.5" y="0.5" width="15" height="15" fill="#fff" stroke="#333"/></svg>
<svg style="position:absolute;left:79px;top:376px;" width="16" height="16" viewBox="0 0 16 16"><rect x="0.5" y="0.5" width="15" height="15" fill="#fff" stroke="#333"/></svg>
<svg style="position:absolute;left:79px;top:400px;" width="16" height="16" viewBox="0 0 16 16"><rect x="0.5" y="0.5" width="15" height="15" fill="#fff" stroke="#333"/></svg>
<svg style="position:absolute;left:79px;top:424px;" width="16" height="16" viewBox="0 0 16 16"><rect x="0.5" y="0.5" width="15" height="15" fill="#fff" stroke="#333"/></svg>
<svg style="position:absolute;left:79px;top:448px;" width="16" height="16" viewBox="0 0 16 16"><rect x="0.5" y="0.5" width="15" height="15" fill="#fff" stroke="#333"/><path d="M3.5 8 L6.5 11 L12.5 4.5" fill="none" stroke="#333" stroke-width="1.3"/></svg>
<svg style="position:absolute;left:59px;top:330px;" width="8" height="12" viewBox="0 0 8 12"><path d="M1.5 1.5 L6 6 L1.5 10.5" fill="none" stroke="#888" stroke-width="1.5"/></svg>
<svg style="position:absolute;left:59px;top:354px;" width="8" height="12" viewBox="0 0 8 12"><path d="M1.5 1.5 L6 6 L1.5 10.5" fill="none" stroke="#888" stroke-width="1.5"/></svg>
<svg style="position:absolute;left:59px;top:378px;" width="8" height="12" viewBox="0 0 8 12"><path d="M1.5 1.5 L6 6 L1.5 10.5" fill="none" stroke="#888" stroke-width="1.5"/></svg>
<svg style="position:absolute;left:59px;top:402px;" width="8" height="12" viewBox="0 0 8 12"><path d="M1.5 1.5 L6 6 L1.5 10.5" fill="none" stroke="#888" stroke-width="1.5"/></svg>
<svg style="position:absolute;left:59px;top:426px;" width="8" height="12" viewBox="0 0 8 12"><path d="M1.5 1.5 L6 6 L1.5 10.5" fill="none" stroke="#888" stroke-width="1.5"/></svg>
<svg style="position:absolute;left:56px;top:452px;" width="13" height="8" viewBox="0 0 13 8"><path d="M1.5 1.5 L6.5 6.5 L11.5 1.5" fill="none" stroke="#333" stroke-width="1.6"/></svg>
<svg style="position:absolute;left:104px;top:257px;" width="14" height="14" viewBox="0 0 14 14"><circle cx="7" cy="7" r="5.3" fill="#6fae6a" stroke="#4a8a4a" stroke-width="0.8"/></svg>
<svg style="position:absolute;left:103px;top:280px;" width="16" height="16" viewBox="0 0 16 16"><circle cx="8" cy="8" r="6.6" fill="#fff" stroke="#111" stroke-width="1.4"/><circle cx="8" cy="8" r="2.6" fill="#111"/></svg>
<div style="position:absolute;left:101px;top:303px;width:19px;height:19px;background:#7b868a;border:1px solid #333;box-sizing:border-box"></div>
<svg style="position:absolute;left:102px;top:326px;" width="18" height="19" viewBox="0 0 18 19"><rect x="0.5" y="6.5" width="11" height="11" fill="none" stroke="#bbb"/><rect x="3.5" y="3.5" width="12" height="12" fill="#fafafa" stroke="#999"/><path d="M7.5 1 V13 C7.5 15 11.5 15 11.5 13 V4" fill="none" stroke="#666" stroke-width="1.2"/></svg>
<svg style="position:absolute;left:102px;top:398px;" width="18" height="19" viewBox="0 0 18 19"><rect x="0.5" y="6.5" width="11" height="11" fill="none" stroke="#bbb"/><rect x="3.5" y="3.5" width="12" height="12" fill="#fafafa" stroke="#999"/><path d="M7.5 1 V13 C7.5 15 11.5 15 11.5 13 V4" fill="none" stroke="#666" stroke-width="1.2"/></svg>
<svg style="position:absolute;left:102px;top:422px;" width="18" height="19" viewBox="0 0 18 19"><rect x="0.5" y="6.5" width="11" height="11" fill="none" stroke="#bbb"/><rect x="3.5" y="3.5" width="12" height="12" fill="#fafafa" stroke="#999"/><path d="M7.5 1 V13 C7.5 15 11.5 15 11.5 13 V4" fill="none" stroke="#666" stroke-width="1.2"/></svg>
<svg style="position:absolute;left:103px;top:351px;" width="18" height="18" viewBox="0 0 18 18"><rect x="0" y="0" width="18" height="18" fill="#b8cde6"/><rect x="0" y="0" width="6" height="6" fill="#1f3a60"/><rect x="12" y="0" width="6" height="6" fill="#1f3a60"/><rect x="6" y="6" width="6" height="6" fill="#1f3a60"/><rect x="0" y="12" width="6" height="6" fill="#1f3a60"/><rect x="6" y="0" width="6" height="6" fill="#6a98d0"/></svg>
<svg style="position:absolute;left:103px;top:375px;" width="18" height="18" viewBox="0 0 18 18"><rect x="0" y="0" width="18" height="18" fill="#b8cde6"/><rect x="0" y="0" width="6" height="6" fill="#1f3a60"/><rect x="12" y="0" width="6" height="6" fill="#1f3a60"/><rect x="6" y="6" width="6" height="6" fill="#1f3a60"/><rect x="0" y="12" width="6" height="6" fill="#1f3a60"/><rect x="6" y="0" width="6" height="6" fill="#6a98d0"/></svg>
<svg style="position:absolute;left:103px;top:447px;" width="18" height="18" viewBox="0 0 18 18"><rect x="0" y="0" width="18" height="18" fill="#b8cde6"/><rect x="0" y="0" width="6" height="6" fill="#1f3a60"/><rect x="12" y="0" width="6" height="6" fill="#1f3a60"/><rect x="6" y="6" width="6" height="6" fill="#1f3a60"/><rect x="0" y="12" width="6" height="6" fill="#1f3a60"/><rect x="6" y="0" width="6" height="6" fill="#6a98d0"/></svg>
<div class="t" style="left:127.2px;top:257.27px;font-size:14.8px;font-weight:bold;color:#000;font-style:normal;transform:scaleX(0.9763);transform-origin:0 0;"><u>Funde_baumfrei</u></div>
<div class="t" style="left:127.2px;top:281.27px;font-size:14.8px;font-weight:bold;color:#8a8a8a;font-style:italic;transform:scaleX(0.9851);transform-origin:0 0;">Funde_WT_2017_2019</div>
<div class="t" style="left:127.2px;top:305.27px;font-size:14.8px;font-weight:bold;color:#000;font-style:normal;transform:scaleX(0.9899);transform-origin:0 0;">Baumfrei</div>
<div class="t" style="left:127.2px;top:329.27px;font-size:14.8px;font-weight:normal;color:#000;font-style:normal;transform:scaleX(0.9614);transform-origin:0 0;">Gebiet_und_Wege</div>
<div class="t" style="left:127.2px;top:353.27px;font-size:14.8px;font-weight:bold;color:#8a8a8a;font-style:italic;transform:scaleX(0.9851);transform-origin:0 0;">WMS LGRB-BW BK50: Bo</div>
<div class="t" style="left:127.2px;top:377.27px;font-size:14.8px;font-weight:bold;color:#8a8a8a;font-style:italic;transform:scaleX(0.9851);transform-origin:0 0;">WMS LGRB-BW GK50: Ge</div>
<div class="t" style="left:127.2px;top:401.27px;font-size:14.8px;font-weight:normal;color:#000;font-style:normal;transform:scaleX(0.9815);transform-origin:0 0;">Pflanzengesellschaften</div>
<div class="t" style="left:127.2px;top:425.27px;font-size:14.8px;font-weight:normal;color:#000;font-style:normal;transform:scaleX(1.0439);transform-origin:0 0;">Biotope</div>
<div class="t" style="left:127.2px;top:449.27px;font-size:14.8px;font-weight:bold;color:#000;font-style:normal;transform:scaleX(0.9763);transform-origin:0 0;">OpenStreetMap Standard</div>
<div style="position:absolute;left:66px;top:242px;width:197px;height:43px;border:3px solid #e0121b;box-sizing:border-box"></div>
<div style="position:absolute;left:51px;top:978px;width:430px;height:19px;background:#f0f0f0"></div>
<div style="position:absolute;left:72px;top:979px;width:330px;height:17px;background:#cdcdcd"></div>
<svg style="position:absolute;left:55px;top:981px;" width="10" height="12" viewBox="0 0 10 12"><path d="M7.5 1.5 L2.5 6 L7.5 10.5" fill="none" stroke="#333" stroke-width="1.6"/></svg>
<svg style="position:absolute;left:465px;top:981px;" width="10" height="12" viewBox="0 0 10 12"><path d="M2.5 1.5 L7.5 6 L2.5 10.5" fill="none" stroke="#333" stroke-width="1.6"/></svg>
<div style="position:absolute;left:50px;top:997px;width:432px;height:1px;background:#a0a0a0"></div>
<svg style="left:0;top:0" width="1920" height="1031" viewBox="0 0 1920 1031"><defs><clipPath id="mc"><rect x="488" y="192" width="1431" height="806"/></clipPath></defs><rect x="487" y="191" width="1432" height="807" fill="#add19e"/><g clip-path="url(#mc)"><g opacity="0.8"><ellipse cx="458.3" cy="141.0" rx="2.5" ry="3.6" fill="none" stroke="#92bb86" stroke-width="1.25"/><path d="M458.3 144.6 V151.5" stroke="#92bb86" stroke-width="1.25"/><path d="M465.90000000000003 137.2 L468.50000000000006 146.0 H463.3 Z" fill="none" stroke="#92bb86" stroke-width="1.25" stroke-linejoin="round"/><path d="M465.90000000000003 146.0 V151.5" stroke="#92bb86" stroke-width="1.25"/><ellipse cx="512.8" cy="148.7" rx="2.5" ry="3.6" fill="none" stroke="#92bb86" stroke-width="1.25"/><path d="M512.8 152.29999999999998 V159.2" stroke="#92bb86" stroke-width="1.25"/><path d="M505.2 144.89999999999998 L507.8 153.7 H502.59999999999997 Z" fill="none" stroke="#92bb86" stroke-width="1.25" stroke-linejoin="round"/><path d="M505.2 153.7 V159.2" stroke="#92bb86" stroke-width="1.25"/><ellipse cx="566.4" cy="148.1" rx="2.5" ry="3.6" fill="none" stroke="#92bb86" stroke-width="1.25"/><path d="M566.4 151.7 V158.6" stroke="#92bb86" stroke-width="1.25"/><path d="M558.8000000000001 144.29999999999998 L561.4000000000001 153.1 H556.2 Z" fill="none" stroke="#92bb86" stroke-width="1.25" stroke-linejoin="round"/><path d="M558.8000000000001 153.1 V158.6" stroke="#92bb86" stroke-width="1.25"/><ellipse cx="630.9" cy="139.4" rx="2.5" ry="3.6" fill="none" stroke="#92bb86" stroke-width="1.25"/><path d="M630.9 143.0 V149.9" stroke="#92bb86" stroke-width="1.25"/><path d="M623.3000000000001 135.6 L625.9000000000001 144.4 H620.7 Z" fill="none" stroke="#92bb86" stroke-width="1.25" stroke-linejoin="round"/><path d="M623.3000000000001 144.4 V149.9" stroke="#92bb86" stroke-width="1.25"/><ellipse cx="684.6999999999999" cy="154.5" rx="2.5" ry="3.6" fill="none" stroke="#92bb86" stroke-width="1.25"/><path d="M684.6999999999999 158.1 V165.0" stroke="#92bb86" stroke-width="1.25"/><path d="M677.1 150.7 L679.7 159.5 H674.5 Z" fill="none" stroke="#92bb86" stroke-width="1.25" stroke-linejoin="round"/><path d="M677.1 159.5 V165.0" stroke="#92bb86" stroke-width="1.25"/><ellipse cx="725.5" cy="150.5" rx="2.5" ry="3.6" fill="none" stroke="#92bb86" stroke-width="1.25"/><path d="M725.5 154.1 V161.0" stroke="#92bb86" stroke-width="1.25"/><path d="M733.0999999999999 146.7 L735.6999999999999 155.5 H730.4999999999999 Z" fill="none" stroke="#92bb86" stroke-width="1.25" stroke-linejoin="round"/><path d="M733.0999999999999 155.5 V161.0" stroke="#92bb86" stroke-width="1.25"/><ellipse cx="789.4000000000001" cy="145.9" rx="2.5" ry="3.6" fill="none" stroke="#92bb86" stroke-width="1.25"/><path d="M789.4000000000001 149.5 V156.4" stroke="#92bb86" stroke-width="1.25"/><path d="M797.0 142.1 L799.6 150.9 H794.4 Z" fill="none" stroke="#92bb86" stroke-width="1.25" stroke-linejoin="round"/><path d="M797.0 150.9 V156.4" stroke="#92bb86" stroke-width="1.25"/><ellipse cx="836.0999999999999" cy="155.2" rx="2.5" ry="3.6" fill="none" stroke="#92bb86" stroke-width="1.25"/><path d="M836.0999999999999 158.79999999999998 V165.7" stroke="#92bb86" stroke-width="1.25"/><path d="M828.5 151.39999999999998 L831.1 160.2 H825.9 Z" fill="none" stroke="#92bb86" stroke-width="1.25" stroke-linejoin="round"/><path d="M828.5 160.2 V165.7" stroke="#92bb86" stroke-width="1.25"/><ellipse cx="892.8" cy="140.4" rx="2.5" ry="3.6" fill="none" stroke="#92bb86" stroke-width="1.25"/><path d="M892.8 144.0 V150.9" stroke="#92bb86" stroke-width="1.25"/><path d="M885.2 136.6 L887.8000000000001 145.4 H882.6 Z" fill="none" stroke="#92bb86" stroke-width="1.25" stroke-linejoin="round"/><path d="M885.2 145.4 V150.9" stroke="#92bb86" stroke-width="1.25"/><ellipse cx="958.1" cy="141.6" rx="2.5" ry="3.6" fill="none" stroke="#92bb86" stroke-width="1.25"/><path d="M958.1 145.2 V152.1" stroke="#92bb86" stroke-width="1.25"/><path d="M965.6999999999999 137.79999999999998 L968.3 146.6 H963.0999999999999 Z" fill="none" stroke="#92bb86" stroke-width="1.25" stroke-linejoin="round"/><path d="M965.6999999999999 146.6 V152.1" stroke="#92bb86" stroke-width="1.25"/><ellipse cx="1007.1" cy="145.4" rx="2.5" ry="3.6" fill="none" stroke="#92bb86" stroke-width="1.25"/><path d="M1007.1 149.0 V155.9" stroke="#92bb86" stroke-width="1.25"/><path d="M1014.6999999999999 141.6 L1017.3 150.4 H1012.0999999999999 Z" fill="none" stroke="#92bb86" stroke-width="1.25" stroke-linejoin="round"/><path d="M1014.6999999999999 150.4 V155.9" stroke="#92bb86" stroke-width="1.25"/><ellipse cx="1052.6" cy="139.2" rx="2.5" ry="3.6" fill="none" stroke="#92bb86" stroke-width="1.25"/><path d="M1052.6 142.79999999999998 V149.7" stroke="#92bb86" stroke-width="1.25"/><path d="M1045.0 135.39999999999998 L1047.6 144.2 H1042.4 Z" fill="none" stroke="#92bb86" stroke-width="1.25" stroke-linejoin="round"/><path d="M1045.0 144.2 V149.7" stroke="#92bb86" stroke-width="1.25"/><ellipse cx="1123.8999999999999" cy="146.6" rx="2.5" ry="3.6" fill="none" stroke="#92bb86" stroke-width="1.25"/><path d="M1123.8999999999999 150.2 V157.1" stroke="#92bb86" stroke-width="1.25"/><path d="M1116.3 142.79999999999998 L1118.8999999999999 151.6 H1113.7 Z" fill="none" stroke="#92bb86" stroke-width="1.25" stroke-linejoin="round"/><path d="M1116.3 151.6 V157.1" stroke="#92bb86" stroke-width="1.25"/><ellipse cx="1175.2" cy="147.1" rx="2.5" ry="3.6" fill="none" stroke="#92bb86" stroke-width="1.25"/><path d="M1175.2 150.7 V157.6" stroke="#92bb86" stroke-width="1.25"/><path d="M1167.6000000000001 143.29999999999998 L1170.2 152.1 H1165.0000000000002 Z" fill="none" stroke="#92bb86" stroke-width="1.25" stroke-linejoin="round"/><path d="M1167.6000000000001 152.1 V157.6" stroke="#92bb86" stroke-width="1.25"/><ellipse cx="1235.0" cy="152.0" rx="2.5" ry="3.6" fill="none" stroke="#92bb86" stroke-width="1.25"/><path d="M1235.0 155.6 V162.5" stroke="#92bb86" stroke-width="1.25"/><path d="M1227.4 148.2 L1230.0 157.0 H1224.8000000000002 Z" fill="none" stroke="#92bb86" stroke-width="1.25" stroke-linejoin="round"/><path d="M1227.4 157.0 V162.5" stroke="#92bb86" stroke-width="1.25"/><ellipse cx="1275.3" cy="148.5" rx="2.5" ry="3.6" fill="none" stroke="#92bb86" stroke-width="1.25"/><path d="M1275.3 152.1 V159.0" stroke="#92bb86" stroke-width="1.25"/><path d="M1282.8999999999999 144.7 L1285.4999999999998 153.5 H1280.3 Z" fill="none" stroke="#92bb86" stroke-width="1.25" stroke-linejoin="round"/><path d="M1282.8999999999999 153.5 V159.0" stroke="#92bb86" stroke-width="1.25"/><ellipse cx="1333.6000000000001" cy="143.8" rx="2.5" ry="3.6" fill="none" stroke="#92bb86" stroke-width="1.25"/><path d="M1333.6000000000001 147.4 V154.3" stroke="#92bb86" stroke-width="1.25"/><path d="M1341.2 140.0 L1343.8 148.8 H1338.6000000000001 Z" fill="none" stroke="#92bb86" stroke-width="1.25" stroke-linejoin="round"/><path d="M1341.2 148.8 V154.3" stroke="#92bb86" stroke-width="1.25"/><ellipse cx="1370.5" cy="146.4" rx="2.5" ry="3.6" fill="none" stroke="#92bb86" stroke-width="1.25"/><path d="M1370.5 150.0 V156.9" stroke="#92bb86" stroke-width="1.25"/><path d="M1378.1 142.6 L1380.6999999999998 151.4 H1375.5 Z" fill="none" stroke="#92bb86" stroke-width="1.25" stroke-linejoin="round"/><path d="M1378.1 151.4 V156.9" stroke="#92bb86" stroke-width="1.25"/><ellipse cx="1433.1" cy="147.8" rx="2.5" ry="3.6" fill="none" stroke="#92bb86" stroke-width="1.25"/><path d="M1433.1 151.4 V158.3" stroke="#92bb86" stroke-width="1.25"/><path d="M1425.5 144.0 L1428.1 152.8 H1422.9 Z" fill="none" stroke="#92bb86" stroke-width="1.25" stroke-linejoin="round"/><path d="M1425.5 152.8 V158.3" stroke="#92bb86" stroke-width="1.25"/><ellipse cx="1493.9" cy="153.3" rx="2.5" ry="3.6" fill="none" stroke="#92bb86" stroke-width="1.25"/><path d="M1493.9 156.9 V163.8" stroke="#92bb86" stroke-width="1.25"/><path d="M1501.5 149.5 L1504.1 158.3 H1498.9 Z" fill="none" stroke="#92bb86" stroke-width="1.25" stroke-linejoin="round"/><path d="M1501.5 158.3 V163.8" stroke="#92bb86" stroke-width="1.25"/><ellipse cx="1553.7" cy="144.3" rx="2.5" ry="3.6" fill="none" stroke="#92bb86" stroke-width="1.25"/><path d="M1553.7 147.9 V154.8" stroke="#92bb86" stroke-width="1.25"/><path d="M1561.3 140.5 L1563.8999999999999 149.3 H1558.7 Z" fill="none" stroke="#92bb86" stroke-width="1.25" stroke-linejoin="round"/><path d="M1561.3 149.3 V154.8" stroke="#92bb86" stroke-width="1.25"/><ellipse cx="1607.3999999999999" cy="149.6" rx="2.5" ry="3.6" fill="none" stroke="#92bb86" stroke-width="1.25"/><path d="M1607.3999999999999 153.2 V160.1" stroke="#92bb86" stroke-width="1.25"/><path d="M1599.8 145.79999999999998 L1602.3999999999999 154.6 H1597.2 Z" fill="none" stroke="#92bb86" stroke-width="1.25" stroke-linejoin="round"/><path d="M1599.8 154.6 V160.1" stroke="#92bb86" stroke-width="1.25"/><ellipse cx="1668.3" cy="156.9" rx="2.5" ry="3.6" fill="none" stroke="#92bb86" stroke-width="1.25"/><path d="M1668.3 160.5 V167.4" stroke="#92bb86" stroke-width="1.25"/><path d="M1660.7 153.1 L1663.3 161.9 H1658.1000000000001 Z" fill="none" stroke="#92bb86" stroke-width="1.25" stroke-linejoin="round"/><path d="M1660.7 161.9 V167.4" stroke="#92bb86" stroke-width="1.25"/><ellipse cx="1709.8" cy="139.2" rx="2.5" ry="3.6" fill="none" stroke="#92bb86" stroke-width="1.25"/><path d="M1709.8 142.79999999999998 V149.7" stroke="#92bb86" stroke-width="1.25"/><path d="M1717.3999999999999 135.39999999999998 L1719.9999999999998 144.2 H1714.8 Z" fill="none" stroke="#92bb86" stroke-width="1.25" stroke-linejoin="round"/><path d="M1717.3999999999999 144.2 V149.7" stroke="#92bb86" stroke-width="1.25"/><ellipse cx="1763.3" cy="157.9" rx="2.5" ry="3.6" fill="none" stroke="#92bb86" stroke-width="1.25"/><path d="M1763.3 161.5 V168.4" stroke="#92bb86" stroke-width="1.25"/><path d="M1770.8999999999999 154.1 L1773.4999999999998 162.9 H1768.3 Z" fill="none" stroke="#92bb86" stroke-width="1.25" stroke-linejoin="round"/><path d="M1770.8999999999999 162.9 V168.4" stroke="#92bb86" stroke-width="1.25"/><ellipse cx="1807.2" cy="145.7" rx="2.5" ry="3.6" fill="none" stroke="#92bb86" stroke-width="1.25"/><path d="M1807.2 149.29999999999998 V156.2" stroke="#92bb86" stroke-width="1.25"/><path d="M1814.8 141.89999999999998 L1817.3999999999999 150.7 H1812.2 Z" fill="none" stroke="#92bb86" stroke-width="1.25" stroke-linejoin="round"/><path d="M1814.8 150.7 V156.2" stroke="#92bb86" stroke-width="1.25"/><ellipse cx="1861.3999999999999" cy="147.2" rx="2.5" ry="3.6" fill="none" stroke="#92bb86" stroke-width="1.25"/><path d="M1861.3999999999999 150.79999999999998 V157.7" stroke="#92bb86" stroke-width="1.25"/><path d="M1853.8 143.39999999999998 L1856.3999999999999 152.2 H1851.2 Z" fill="none" stroke="#92bb86" stroke-width="1.25" stroke-linejoin="round"/><path d="M1853.8 152.2 V157.7" stroke="#92bb86" stroke-width="1.25"/><ellipse cx="1910.5" cy="139.2" rx="2.5" ry="3.6" fill="none" stroke="#92bb86" stroke-width="1.25"/><path d="M1910.5 142.79999999999998 V149.7" stroke="#92bb86" stroke-width="1.25"/><path d="M1918.1 135.39999999999998 L1920.6999999999998 144.2 H1915.5 Z" fill="none" stroke="#92bb86" stroke-width="1.25" stroke-linejoin="round"/><path d="M1918.1 144.2 V149.7" stroke="#92bb86" stroke-width="1.25"/><ellipse cx="1972.3999999999999" cy="143.0" rx="2.5" ry="3.6" fill="none" stroke="#92bb86" stroke-width="1.25"/><path d="M1972.3999999999999 146.6 V153.5" stroke="#92bb86" stroke-width="1.25"/><path d="M1964.8 139.2 L1967.3999999999999 148.0 H1962.2 Z" fill="none" stroke="#92bb86" stroke-width="1.25" stroke-linejoin="round"/><path d="M1964.8 148.0 V153.5" stroke="#92bb86" stroke-width="1.25"/><ellipse cx="454.2" cy="187.6" rx="2.5" ry="3.6" fill="none" stroke="#92bb86" stroke-width="1.25"/><path d="M454.2 191.2 V198.1" stroke="#92bb86" stroke-width="1.25"/><path d="M446.59999999999997 183.79999999999998 L449.2 192.6 H443.99999999999994 Z" fill="none" stroke="#92bb86" stroke-width="1.25" stroke-linejoin="round"/><path d="M446.59999999999997 192.6 V198.1" stroke="#92bb86" stroke-width="1.25"/><ellipse cx="491.59999999999997" cy="203.7" rx="2.5" ry="3.6" fill="none" stroke="#92bb86" stroke-width="1.25"/><path d="M491.59999999999997 207.29999999999998 V214.2" stroke="#92bb86" stroke-width="1.25"/><path d="M499.2 199.89999999999998 L501.8 208.7 H496.59999999999997 Z" fill="none" stroke="#92bb86" stroke-width="1.25" stroke-linejoin="round"/><path d="M499.2 208.7 V214.2" stroke="#92bb86" stroke-width="1.25"/><ellipse cx="562.0" cy="191.6" rx="2.5" ry="3.6" fill="none" stroke="#92bb86" stroke-width="1.25"/><path d="M562.0 195.2 V202.1" stroke="#92bb86" stroke-width="1.25"/><path d="M554.4000000000001 187.79999999999998 L557.0000000000001 196.6 H551.8000000000001 Z" fill="none" stroke="#92bb86" stroke-width="1.25" stroke-linejoin="round"/><path d="M554.4000000000001 196.6 V202.1" stroke="#92bb86" stroke-width="1.25"/><ellipse cx="594.2" cy="203.7" rx="2.5" ry="3.6" fill="none" stroke="#92bb86" stroke-width="1.25"/><path d="M594.2 207.29999999999998 V214.2" stroke="#92bb86" stroke-width="1.25"/><path d="M601.8 199.89999999999998 L604.4 208.7 H599.1999999999999 Z" fill="none" stroke="#92bb86" stroke-width="1.25" stroke-linejoin="round"/><path d="M601.8 208.7 V214.2" stroke="#92bb86" stroke-width="1.25"/><ellipse cx="650.0" cy="189.5" rx="2.5" ry="3.6" fill="none" stroke="#92bb86" stroke-width="1.25"/><path d="M650.0 193.1 V200.0" stroke="#92bb86" stroke-width="1.25"/><path d="M642.4000000000001 185.7 L645.0000000000001 194.5 H639.8000000000001 Z" fill="none" stroke="#92bb86" stroke-width="1.25" stroke-linejoin="round"/><path d="M642.4000000000001 194.5 V200.0" stroke="#92bb86" stroke-width="1.25"/><ellipse cx="698.7" cy="195.7" rx="2.5" ry="3.6" fill="none" stroke="#92bb86" stroke-width="1.25"/><path d="M698.7 199.29999999999998 V206.2" stroke="#92bb86" stroke-width="1.25"/><path d="M706.3 191.89999999999998 L708.9 200.7 H703.6999999999999 Z" fill="none" stroke="#92bb86" stroke-width="1.25" stroke-linejoin="round"/><path d="M706.3 200.7 V206.2" stroke="#92bb86" stroke-width="1.25"/><ellipse cx="761.1999999999999" cy="186.1" rx="2.5" ry="3.6" fill="none" stroke="#92bb86" stroke-width="1.25"/><path d="M761.1999999999999 189.7 V196.6" stroke="#92bb86" stroke-width="1.25"/><path d="M753.6 182.29999999999998 L756.2 191.1 H751.0 Z" fill="none" stroke="#92bb86" stroke-width="1.25" stroke-linejoin="round"/><path d="M753.6 191.1 V196.6" stroke="#92bb86" stroke-width="1.25"/><ellipse cx="810.5" cy="197.3" rx="2.5" ry="3.6" fill="none" stroke="#92bb86" stroke-width="1.25"/><path d="M810.5 200.9 V207.8" stroke="#92bb86" stroke-width="1.25"/><path d="M818.0999999999999 193.5 L820.6999999999999 202.3 H815.4999999999999 Z" fill="none" stroke="#92bb86" stroke-width="1.25" stroke-linejoin="round"/><path d="M818.0999999999999 202.3 V207.8" stroke="#92bb86" stroke-width="1.25"/><ellipse cx="873.5" cy="196.3" rx="2.5" ry="3.6" fill="none" stroke="#92bb86" stroke-width="1.25"/><path d="M873.5 199.9 V206.8" stroke="#92bb86" stroke-width="1.25"/><path d="M881.0999999999999 192.5 L883.6999999999999 201.3 H878.4999999999999 Z" fill="none" stroke="#92bb86" stroke-width="1.25" stroke-linejoin="round"/><path d="M881.0999999999999 201.3 V206.8" stroke="#92bb86" stroke-width="1.25"/><ellipse cx="927.1" cy="187.1" rx="2.5" ry="3.6" fill="none" stroke="#92bb86" stroke-width="1.25"/><path d="M927.1 190.7 V197.6" stroke="#92bb86" stroke-width="1.25"/><path d="M934.6999999999999 183.29999999999998 L937.3 192.1 H932.0999999999999 Z" fill="none" stroke="#92bb86" stroke-width="1.25" stroke-linejoin="round"/><path d="M934.6999999999999 192.1 V197.6" stroke="#92bb86" stroke-width="1.25"/><ellipse cx="984.0" cy="203.5" rx="2.5" ry="3.6" fill="none" stroke="#92bb86" stroke-width="1.25"/><path d="M984.0 207.1 V214.0" stroke="#92bb86" stroke-width="1.25"/><path d="M991.5999999999999 199.7 L994.1999999999999 208.5 H988.9999999999999 Z" fill="none" stroke="#92bb86" stroke-width="1.25" stroke-linejoin="round"/><path d="M991.5999999999999 208.5 V214.0" stroke="#92bb86" stroke-width="1.25"/><ellipse cx="1034.8" cy="194.0" rx="2.5" ry="3.6" fill="none" stroke="#92bb86" stroke-width="1.25"/><path d="M1034.8 197.6 V204.5" stroke="#92bb86" stroke-width="1.25"/><path d="M1027.2 190.2 L1029.8 199.0 H1024.6000000000001 Z" fill="none" stroke="#92bb86" stroke-width="1.25" stroke-linejoin="round"/><path d="M1027.2 199.0 V204.5" stroke="#92bb86" stroke-width="1.25"/><ellipse cx="1095.6" cy="187.2" rx="2.5" ry="3.6" fill="none" stroke="#92bb86" stroke-width="1.25"/><path d="M1095.6 190.79999999999998 V197.7" stroke="#92bb86" stroke-width="1.25"/><path d="M1088.0 183.39999999999998 L1090.6 192.2 H1085.4 Z" fill="none" stroke="#92bb86" stroke-width="1.25" stroke-linejoin="round"/><path d="M1088.0 192.2 V197.7" stroke="#92bb86" stroke-width="1.25"/><ellipse cx="1137.6" cy="189.2" rx="2.5" ry="3.6" fill="none" stroke="#92bb86" stroke-width="1.25"/><path d="M1137.6 192.79999999999998 V199.7" stroke="#92bb86" stroke-width="1.25"/><path d="M1130.0 185.39999999999998 L1132.6 194.2 H1127.4 Z" fill="none" stroke="#92bb86" stroke-width="1.25" stroke-linejoin="round"/><path d="M1130.0 194.2 V199.7" stroke="#92bb86" stroke-width="1.25"/><ellipse cx="1187.3" cy="186.0" rx="2.5" ry="3.6" fill="none" stroke="#92bb86" stroke-width="1.25"/><path d="M1187.3 189.6 V196.5" stroke="#92bb86" stroke-width="1.25"/><path d="M1179.7 182.2 L1182.3 191.0 H1177.1000000000001 Z" fill="none" stroke="#92bb86" stroke-width="1.25" stroke-linejoin="round"/><path d="M1179.7 191.0 V196.5" stroke="#92bb86" stroke-width="1.25"/><ellipse cx="1242.6" cy="193.3" rx="2.5" ry="3.6" fill="none" stroke="#92bb86" stroke-width="1.25"/><path d="M1242.6 196.9 V203.8" stroke="#92bb86" stroke-width="1.25"/><path d="M1235.0 189.5 L1237.6 198.3 H1232.4 Z" fill="none" stroke="#92bb86" stroke-width="1.25" stroke-linejoin="round"/><path d="M1235.0 198.3 V203.8" stroke="#92bb86" stroke-width="1.25"/><ellipse cx="1318.3" cy="198.3" rx="2.5" ry="3.6" fill="none" stroke="#92bb86" stroke-width="1.25"/><path d="M1318.3 201.9 V208.8" stroke="#92bb86" stroke-width="1.25"/><path d="M1310.7 194.5 L1313.3 203.3 H1308.1000000000001 Z" fill="none" stroke="#92bb86" stroke-width="1.25" stroke-linejoin="round"/><path d="M1310.7 203.3 V208.8" stroke="#92bb86" stroke-width="1.25"/><ellipse cx="1354.8999999999999" cy="192.9" rx="2.5" ry="3.6" fill="none" stroke="#92bb86" stroke-width="1.25"/><path d="M1354.8999999999999 196.5 V203.4" stroke="#92bb86" stroke-width="1.25"/><path d="M1347.3 189.1 L1349.8999999999999 197.9 H1344.7 Z" fill="none" stroke="#92bb86" stroke-width="1.25" stroke-linejoin="round"/><path d="M1347.3 197.9 V203.4" stroke="#92bb86" stroke-width="1.25"/><ellipse cx="1397.6000000000001" cy="203.0" rx="2.5" ry="3.6" fill="none" stroke="#92bb86" stroke-width="1.25"/><path d="M1397.6000000000001 206.6 V213.5" stroke="#92bb86" stroke-width="1.25"/><path d="M1405.2 199.2 L1407.8 208.0 H1402.6000000000001 Z" fill="none" stroke="#92bb86" stroke-width="1.25" stroke-linejoin="round"/><path d="M1405.2 208.0 V213.5" stroke="#92bb86" stroke-width="1.25"/><ellipse cx="1468.8" cy="195.7" rx="2.5" ry="3.6" fill="none" stroke="#92bb86" stroke-width="1.25"/><path d="M1468.8 199.29999999999998 V206.2" stroke="#92bb86" stroke-width="1.25"/><path d="M1461.2 191.89999999999998 L1463.8 200.7 H1458.6000000000001 Z" fill="none" stroke="#92bb86" stroke-width="1.25" stroke-linejoin="round"/><path d="M1461.2 200.7 V206.2" stroke="#92bb86" stroke-width="1.25"/><ellipse cx="1512.7" cy="192.9" rx="2.5" ry="3.6" fill="none" stroke="#92bb86" stroke-width="1.25"/><path d="M1512.7 196.5 V203.4" stroke="#92bb86" stroke-width="1.25"/><path d="M1505.1000000000001 189.1 L1507.7 197.9 H1502.5000000000002 Z" fill="none" stroke="#92bb86" stroke-width="1.25" stroke-linejoin="round"/><path d="M1505.1000000000001 197.9 V203.4" stroke="#92bb86" stroke-width="1.25"/><ellipse cx="1587.0" cy="189.2" rx="2.5" ry="3.6" fill="none" stroke="#92bb86" stroke-width="1.25"/><path d="M1587.0 192.79999999999998 V199.7" stroke="#92bb86" stroke-width="1.25"/><path d="M1579.4 185.39999999999998 L1582.0 194.2 H1576.8000000000002 Z" fill="none" stroke="#92bb86" stroke-width="1.25" stroke-linejoin="round"/><path d="M1579.4 194.2 V199.7" stroke="#92bb86" stroke-width="1.25"/><ellipse cx="1644.3999999999999" cy="196.6" rx="2.5" ry="3.6" fill="none" stroke="#92bb86" stroke-width="1.25"/><path d="M1644.3999999999999 200.2 V207.1" stroke="#92bb86" stroke-width="1.25"/><path d="M1636.8 192.79999999999998 L1639.3999999999999 201.6 H1634.2 Z" fill="none" stroke="#92bb86" stroke-width="1.25" stroke-linejoin="round"/><path d="M1636.8 201.6 V207.1" stroke="#92bb86" stroke-width="1.25"/><ellipse cx="1679.4" cy="186.5" rx="2.5" ry="3.6" fill="none" stroke="#92bb86" stroke-width="1.25"/><path d="M1679.4 190.1 V197.0" stroke="#92bb86" stroke-width="1.25"/><path d="M1687.0 182.7 L1689.6 191.5 H1684.4 Z" fill="none" stroke="#92bb86" stroke-width="1.25" stroke-linejoin="round"/><path d="M1687.0 191.5 V197.0" stroke="#92bb86" stroke-width="1.25"/><ellipse cx="1745.6000000000001" cy="203.3" rx="2.5" ry="3.6" fill="none" stroke="#92bb86" stroke-width="1.25"/><path d="M1745.6000000000001 206.9 V213.8" stroke="#92bb86" stroke-width="1.25"/><path d="M1753.2 199.5 L1755.8 208.3 H1750.6000000000001 Z" fill="none" stroke="#92bb86" stroke-width="1.25" stroke-linejoin="round"/><path d="M1753.2 208.3 V213.8" stroke="#92bb86" stroke-width="1.25"/><ellipse cx="1787.1" cy="193.3" rx="2.5" ry="3.6" fill="none" stroke="#92bb86" stroke-width="1.25"/><path d="M1787.1 196.9 V203.8" stroke="#92bb86" stroke-width="1.25"/><path d="M1779.5 189.5 L1782.1 198.3 H1776.9 Z" fill="none" stroke="#92bb86" stroke-width="1.25" stroke-linejoin="round"/><path d="M1779.5 198.3 V203.8" stroke="#92bb86" stroke-width="1.25"/><ellipse cx="1847.8" cy="196.7" rx="2.5" ry="3.6" fill="none" stroke="#92bb86" stroke-width="1.25"/><path d="M1847.8 200.29999999999998 V207.2" stroke="#92bb86" stroke-width="1.25"/><path d="M1855.3999999999999 192.89999999999998 L1857.9999999999998 201.7 H1852.8 Z" fill="none" stroke="#92bb86" stroke-width="1.25" stroke-linejoin="round"/><path d="M1855.3999999999999 201.7 V207.2" stroke="#92bb86" stroke-width="1.25"/><ellipse cx="1889.4" cy="190.5" rx="2.5" ry="3.6" fill="none" stroke="#92bb86" stroke-width="1.25"/><path d="M1889.4 194.1 V201.0" stroke="#92bb86" stroke-width="1.25"/><path d="M1897.0 186.7 L1899.6 195.5 H1894.4 Z" fill="none" stroke="#92bb86" stroke-width="1.25" stroke-linejoin="round"/><path d="M1897.0 195.5 V201.0" stroke="#92bb86" stroke-width="1.25"/><ellipse cx="1961.8" cy="203.1" rx="2.5" ry="3.6" fill="none" stroke="#92bb86" stroke-width="1.25"/><path d="M1961.8 206.7 V213.6" stroke="#92bb86" stroke-width="1.25"/><path d="M1969.3999999999999 199.29999999999998 L1971.9999999999998 208.1 H1966.8 Z" fill="none" stroke="#92bb86" stroke-width="1.25" stroke-linejoin="round"/><path d="M1969.3999999999999 208.1 V213.6" stroke="#92bb86" stroke-width="1.25"/><ellipse cx="479.7" cy="248.8" rx="2.5" ry="3.6" fill="none" stroke="#92bb86" stroke-width="1.25"/><path d="M479.7 252.4 V259.3" stroke="#92bb86" stroke-width="1.25"/><path d="M472.09999999999997 245.0 L474.7 253.8 H469.49999999999994 Z" fill="none" stroke="#92bb86" stroke-width="1.25" stroke-linejoin="round"/><path d="M472.09999999999997 253.8 V259.3" stroke="#92bb86" stroke-width="1.25"/><ellipse cx="525.3" cy="241.1" rx="2.5" ry="3.6" fill="none" stroke="#92bb86" stroke-width="1.25"/><path d="M525.3 244.7 V251.6" stroke="#92bb86" stroke-width="1.25"/><path d="M517.7 237.29999999999998 L520.3000000000001 246.1 H515.1 Z" fill="none" stroke="#92bb86" stroke-width="1.25" stroke-linejoin="round"/><path d="M517.7 246.1 V251.6" stroke="#92bb86" stroke-width="1.25"/><ellipse cx="565.5999999999999" cy="239.6" rx="2.5" ry="3.6" fill="none" stroke="#92bb86" stroke-width="1.25"/><path d="M565.5999999999999 243.2 V250.1" stroke="#92bb86" stroke-width="1.25"/><path d="M558.0 235.79999999999998 L560.6 244.6 H555.4 Z" fill="none" stroke="#92bb86" stroke-width="1.25" stroke-linejoin="round"/><path d="M558.0 244.6 V250.1" stroke="#92bb86" stroke-width="1.25"/><ellipse cx="638.1999999999999" cy="253.1" rx="2.5" ry="3.6" fill="none" stroke="#92bb86" stroke-width="1.25"/><path d="M638.1999999999999 256.7 V263.6" stroke="#92bb86" stroke-width="1.25"/><path d="M630.6 249.29999999999998 L633.2 258.1 H628.0 Z" fill="none" stroke="#92bb86" stroke-width="1.25" stroke-linejoin="round"/><path d="M630.6 258.1 V263.6" stroke="#92bb86" stroke-width="1.25"/><ellipse cx="691.4000000000001" cy="253.8" rx="2.5" ry="3.6" fill="none" stroke="#92bb86" stroke-width="1.25"/><path d="M691.4000000000001 257.40000000000003 V264.3" stroke="#92bb86" stroke-width="1.25"/><path d="M699.0 250.0 L701.6 258.8 H696.4 Z" fill="none" stroke="#92bb86" stroke-width="1.25" stroke-linejoin="round"/><path d="M699.0 258.8 V264.3" stroke="#92bb86" stroke-width="1.25"/><ellipse cx="737.0" cy="238.4" rx="2.5" ry="3.6" fill="none" stroke="#92bb86" stroke-width="1.25"/><path d="M737.0 242.0 V248.9" stroke="#92bb86" stroke-width="1.25"/><path d="M729.4000000000001 234.6 L732.0000000000001 243.4 H726.8000000000001 Z" fill="none" stroke="#92bb86" stroke-width="1.25" stroke-linejoin="round"/><path d="M729.4000000000001 243.4 V248.9" stroke="#92bb86" stroke-width="1.25"/><ellipse cx="778.7" cy="238.1" rx="2.5" ry="3.6" fill="none" stroke="#92bb86" stroke-width="1.25"/><path d="M778.7 241.7 V248.6" stroke="#92bb86" stroke-width="1.25"/><path d="M786.3 234.29999999999998 L788.9 243.1 H783.6999999999999 Z" fill="none" stroke="#92bb86" stroke-width="1.25" stroke-linejoin="round"/><path d="M786.3 243.1 V248.6" stroke="#92bb86" stroke-width="1.25"/><ellipse cx="860.0" cy="250.8" rx="2.5" ry="3.6" fill="none" stroke="#92bb86" stroke-width="1.25"/><path d="M860.0 254.4 V261.3" stroke="#92bb86" stroke-width="1.25"/><path d="M852.4000000000001 247.0 L855.0000000000001 255.8 H849.8000000000001 Z" fill="none" stroke="#92bb86" stroke-width="1.25" stroke-linejoin="round"/><path d="M852.4000000000001 255.8 V261.3" stroke="#92bb86" stroke-width="1.25"/><ellipse cx="907.0999999999999" cy="250.0" rx="2.5" ry="3.6" fill="none" stroke="#92bb86" stroke-width="1.25"/><path d="M907.0999999999999 253.6 V260.5" stroke="#92bb86" stroke-width="1.25"/><path d="M899.5 246.2 L902.1 255.0 H896.9 Z" fill="none" stroke="#92bb86" stroke-width="1.25" stroke-linejoin="round"/><path d="M899.5 255.0 V260.5" stroke="#92bb86" stroke-width="1.25"/><ellipse cx="953.7" cy="252.2" rx="2.5" ry="3.6" fill="none" stroke="#92bb86" stroke-width="1.25"/><path d="M953.7 255.79999999999998 V262.7" stroke="#92bb86" stroke-width="1.25"/><path d="M961.3 248.39999999999998 L963.9 257.2 H958.6999999999999 Z" fill="none" stroke="#92bb86" stroke-width="1.25" stroke-linejoin="round"/><path d="M961.3 257.2 V262.7" stroke="#92bb86" stroke-width="1.25"/><ellipse cx="1017.8" cy="243.6" rx="2.5" ry="3.6" fill="none" stroke="#92bb86" stroke-width="1.25"/><path d="M1017.8 247.2 V254.1" stroke="#92bb86" stroke-width="1.25"/><path d="M1010.2 239.79999999999998 L1012.8000000000001 248.6 H1007.6 Z" fill="none" stroke="#92bb86" stroke-width="1.25" stroke-linejoin="round"/><path d="M1010.2 248.6 V254.1" stroke="#92bb86" stroke-width="1.25"/><ellipse cx="1065.3" cy="240.7" rx="2.5" ry="3.6" fill="none" stroke="#92bb86" stroke-width="1.25"/><path d="M1065.3 244.29999999999998 V251.2" stroke="#92bb86" stroke-width="1.25"/><path d="M1072.8999999999999 236.89999999999998 L1075.4999999999998 245.7 H1070.3 Z" fill="none" stroke="#92bb86" stroke-width="1.25" stroke-linejoin="round"/><path d="M1072.8999999999999 245.7 V251.2" stroke="#92bb86" stroke-width="1.25"/><ellipse cx="1132.0" cy="241.9" rx="2.5" ry="3.6" fill="none" stroke="#92bb86" stroke-width="1.25"/><path d="M1132.0 245.5 V252.4" stroke="#92bb86" stroke-width="1.25"/><path d="M1124.4 238.1 L1127.0 246.9 H1121.8000000000002 Z" fill="none" stroke="#92bb86" stroke-width="1.25" stroke-linejoin="round"/><path d="M1124.4 246.9 V252.4" stroke="#92bb86" stroke-width="1.25"/><ellipse cx="1185.3" cy="248.5" rx="2.5" ry="3.6" fill="none" stroke="#92bb86" stroke-width="1.25"/><path d="M1185.3 252.1 V259.0" stroke="#92bb86" stroke-width="1.25"/><path d="M1177.7 244.7 L1180.3 253.5 H1175.1000000000001 Z" fill="none" stroke="#92bb86" stroke-width="1.25" stroke-linejoin="round"/><path d="M1177.7 253.5 V259.0" stroke="#92bb86" stroke-width="1.25"/><ellipse cx="1208.8" cy="237.0" rx="2.5" ry="3.6" fill="none" stroke="#92bb86" stroke-width="1.25"/><path d="M1208.8 240.6 V247.5" stroke="#92bb86" stroke-width="1.25"/><path d="M1216.3999999999999 233.2 L1218.9999999999998 242.0 H1213.8 Z" fill="none" stroke="#92bb86" stroke-width="1.25" stroke-linejoin="round"/><path d="M1216.3999999999999 242.0 V247.5" stroke="#92bb86" stroke-width="1.25"/><ellipse cx="1281.8" cy="236.9" rx="2.5" ry="3.6" fill="none" stroke="#92bb86" stroke-width="1.25"/><path d="M1281.8 240.5 V247.4" stroke="#92bb86" stroke-width="1.25"/><path d="M1289.3999999999999 233.1 L1291.9999999999998 241.9 H1286.8 Z" fill="none" stroke="#92bb86" stroke-width="1.25" stroke-linejoin="round"/><path d="M1289.3999999999999 241.9 V247.4" stroke="#92bb86" stroke-width="1.25"/><ellipse cx="1348.2" cy="247.1" rx="2.5" ry="3.6" fill="none" stroke="#92bb86" stroke-width="1.25"/><path d="M1348.2 250.7 V257.6" stroke="#92bb86" stroke-width="1.25"/><path d="M1340.6000000000001 243.29999999999998 L1343.2 252.1 H1338.0000000000002 Z" fill="none" stroke="#92bb86" stroke-width="1.25" stroke-linejoin="round"/><path d="M1340.6000000000001 252.1 V257.6" stroke="#92bb86" stroke-width="1.25"/><ellipse cx="1390.2" cy="236.6" rx="2.5" ry="3.6" fill="none" stroke="#92bb86" stroke-width="1.25"/><path d="M1390.2 240.2 V247.1" stroke="#92bb86" stroke-width="1.25"/><path d="M1382.6000000000001 232.79999999999998 L1385.2 241.6 H1380.0000000000002 Z" fill="none" stroke="#92bb86" stroke-width="1.25" stroke-linejoin="round"/><path d="M1382.6000000000001 241.6 V247.1" stroke="#92bb86" stroke-width="1.25"/><ellipse cx="1448.4" cy="247.0" rx="2.5" ry="3.6" fill="none" stroke="#92bb86" stroke-width="1.25"/><path d="M1448.4 250.6 V257.5" stroke="#92bb86" stroke-width="1.25"/><path d="M1456.0 243.2 L1458.6 252.0 H1453.4 Z" fill="none" stroke="#92bb86" stroke-width="1.25" stroke-linejoin="round"/><path d="M1456.0 252.0 V257.5" stroke="#92bb86" stroke-width="1.25"/><ellipse cx="1501.3" cy="242.7" rx="2.5" ry="3.6" fill="none" stroke="#92bb86" stroke-width="1.25"/><path d="M1501.3 246.29999999999998 V253.2" stroke="#92bb86" stroke-width="1.25"/><path d="M1508.8999999999999 238.89999999999998 L1511.4999999999998 247.7 H1506.3 Z" fill="none" stroke="#92bb86" stroke-width="1.25" stroke-linejoin="round"/><path d="M1508.8999999999999 247.7 V253.2" stroke="#92bb86" stroke-width="1.25"/><ellipse cx="1559.8999999999999" cy="238.2" rx="2.5" ry="3.6" fill="none" stroke="#92bb86" stroke-width="1.25"/><path d="M1559.8999999999999 241.79999999999998 V248.7" stroke="#92bb86" stroke-width="1.25"/><path d="M1552.3 234.39999999999998 L1554.8999999999999 243.2 H1549.7 Z" fill="none" stroke="#92bb86" stroke-width="1.25" stroke-linejoin="round"/><path d="M1552.3 243.2 V248.7" stroke="#92bb86" stroke-width="1.25"/><ellipse cx="1591.4" cy="238.8" rx="2.5" ry="3.6" fill="none" stroke="#92bb86" stroke-width="1.25"/><path d="M1591.4 242.4 V249.3" stroke="#92bb86" stroke-width="1.25"/><path d="M1599.0 235.0 L1601.6 243.8 H1596.4 Z" fill="none" stroke="#92bb86" stroke-width="1.25" stroke-linejoin="round"/><path d="M1599.0 243.8 V249.3" stroke="#92bb86" stroke-width="1.25"/><ellipse cx="1652.1" cy="242.4" rx="2.5" ry="3.6" fill="none" stroke="#92bb86" stroke-width="1.25"/><path d="M1652.1 246.0 V252.9" stroke="#92bb86" stroke-width="1.25"/><path d="M1644.5 238.6 L1647.1 247.4 H1641.9 Z" fill="none" stroke="#92bb86" stroke-width="1.25" stroke-linejoin="round"/><path d="M1644.5 247.4 V252.9" stroke="#92bb86" stroke-width="1.25"/><ellipse cx="1724.3" cy="241.1" rx="2.5" ry="3.6" fill="none" stroke="#92bb86" stroke-width="1.25"/><path d="M1724.3 244.7 V251.6" stroke="#92bb86" stroke-width="1.25"/><path d="M1716.7 237.29999999999998 L1719.3 246.1 H1714.1000000000001 Z" fill="none" stroke="#92bb86" stroke-width="1.25" stroke-linejoin="round"/><path d="M1716.7 246.1 V251.6" stroke="#92bb86" stroke-width="1.25"/><ellipse cx="1769.1" cy="252.1" rx="2.5" ry="3.6" fill="none" stroke="#92bb86" stroke-width="1.25"/><path d="M1769.1 255.7 V262.6" stroke="#92bb86" stroke-width="1.25"/><path d="M1761.5 248.29999999999998 L1764.1 257.1 H1758.9 Z" fill="none" stroke="#92bb86" stroke-width="1.25" stroke-linejoin="round"/><path d="M1761.5 257.1 V262.6" stroke="#92bb86" stroke-width="1.25"/><ellipse cx="1824.9" cy="244.0" rx="2.5" ry="3.6" fill="none" stroke="#92bb86" stroke-width="1.25"/><path d="M1824.9 247.6 V254.5" stroke="#92bb86" stroke-width="1.25"/><path d="M1832.5 240.2 L1835.1 249.0 H1829.9 Z" fill="none" stroke="#92bb86" stroke-width="1.25" stroke-linejoin="round"/><path d="M1832.5 249.0 V254.5" stroke="#92bb86" stroke-width="1.25"/><ellipse cx="1875.5" cy="234.4" rx="2.5" ry="3.6" fill="none" stroke="#92bb86" stroke-width="1.25"/><path d="M1875.5 238.0 V244.9" stroke="#92bb86" stroke-width="1.25"/><path d="M1867.9 230.6 L1870.5 239.4 H1865.3000000000002 Z" fill="none" stroke="#92bb86" stroke-width="1.25" stroke-linejoin="round"/><path d="M1867.9 239.4 V244.9" stroke="#92bb86" stroke-width="1.25"/><ellipse cx="1912.3" cy="234.1" rx="2.5" ry="3.6" fill="none" stroke="#92bb86" stroke-width="1.25"/><path d="M1912.3 237.7 V244.6" stroke="#92bb86" stroke-width="1.25"/><path d="M1919.8999999999999 230.29999999999998 L1922.4999999999998 239.1 H1917.3 Z" fill="none" stroke="#92bb86" stroke-width="1.25" stroke-linejoin="round"/><path d="M1919.8999999999999 239.1 V244.6" stroke="#92bb86" stroke-width="1.25"/><ellipse cx="1966.0" cy="243.5" rx="2.5" ry="3.6" fill="none" stroke="#92bb86" stroke-width="1.25"/><path d="M1966.0 247.1 V254.0" stroke="#92bb86" stroke-width="1.25"/><path d="M1973.6 239.7 L1976.1999999999998 248.5 H1971.0 Z" fill="none" stroke="#92bb86" stroke-width="1.25" stroke-linejoin="round"/><path d="M1973.6 248.5 V254.0" stroke="#92bb86" stroke-width="1.25"/><ellipse cx="437.8" cy="288.5" rx="2.5" ry="3.6" fill="none" stroke="#92bb86" stroke-width="1.25"/><path d="M437.8 292.1 V299.0" stroke="#92bb86" stroke-width="1.25"/><path d="M445.40000000000003 284.7 L448.00000000000006 293.5 H442.8 Z" fill="none" stroke="#92bb86" stroke-width="1.25" stroke-linejoin="round"/><path d="M445.40000000000003 293.5 V299.0" stroke="#92bb86" stroke-width="1.25"/><ellipse cx="499.40000000000003" cy="297.7" rx="2.5" ry="3.6" fill="none" stroke="#92bb86" stroke-width="1.25"/><path d="M499.40000000000003 301.3 V308.2" stroke="#92bb86" stroke-width="1.25"/><path d="M491.8 293.9 L494.40000000000003 302.7 H489.2 Z" fill="none" stroke="#92bb86" stroke-width="1.25" stroke-linejoin="round"/><path d="M491.8 302.7 V308.2" stroke="#92bb86" stroke-width="1.25"/><ellipse cx="553.5" cy="287.0" rx="2.5" ry="3.6" fill="none" stroke="#92bb86" stroke-width="1.25"/><path d="M553.5 290.6 V297.5" stroke="#92bb86" stroke-width="1.25"/><path d="M545.9000000000001 283.2 L548.5000000000001 292.0 H543.3000000000001 Z" fill="none" stroke="#92bb86" stroke-width="1.25" stroke-linejoin="round"/><path d="M545.9000000000001 292.0 V297.5" stroke="#92bb86" stroke-width="1.25"/><ellipse cx="605.8000000000001" cy="292.2" rx="2.5" ry="3.6" fill="none" stroke="#92bb86" stroke-width="1.25"/><path d="M605.8000000000001 295.8 V302.7" stroke="#92bb86" stroke-width="1.25"/><path d="M613.4 288.4 L616.0 297.2 H610.8 Z" fill="none" stroke="#92bb86" stroke-width="1.25" stroke-linejoin="round"/><path d="M613.4 297.2 V302.7" stroke="#92bb86" stroke-width="1.25"/><ellipse cx="667.0999999999999" cy="300.2" rx="2.5" ry="3.6" fill="none" stroke="#92bb86" stroke-width="1.25"/><path d="M667.0999999999999 303.8 V310.7" stroke="#92bb86" stroke-width="1.25"/><path d="M659.5 296.4 L662.1 305.2 H656.9 Z" fill="none" stroke="#92bb86" stroke-width="1.25" stroke-linejoin="round"/><path d="M659.5 305.2 V310.7" stroke="#92bb86" stroke-width="1.25"/><ellipse cx="709.4000000000001" cy="292.1" rx="2.5" ry="3.6" fill="none" stroke="#92bb86" stroke-width="1.25"/><path d="M709.4000000000001 295.70000000000005 V302.6" stroke="#92bb86" stroke-width="1.25"/><path d="M717.0 288.3 L719.6 297.1 H714.4 Z" fill="none" stroke="#92bb86" stroke-width="1.25" stroke-linejoin="round"/><path d="M717.0 297.1 V302.6" stroke="#92bb86" stroke-width="1.25"/><ellipse cx="765.6" cy="291.0" rx="2.5" ry="3.6" fill="none" stroke="#92bb86" stroke-width="1.25"/><path d="M765.6 294.6 V301.5" stroke="#92bb86" stroke-width="1.25"/><path d="M773.1999999999999 287.2 L775.8 296.0 H770.5999999999999 Z" fill="none" stroke="#92bb86" stroke-width="1.25" stroke-linejoin="round"/><path d="M773.1999999999999 296.0 V301.5" stroke="#92bb86" stroke-width="1.25"/><ellipse cx="813.6" cy="300.8" rx="2.5" ry="3.6" fill="none" stroke="#92bb86" stroke-width="1.25"/><path d="M813.6 304.40000000000003 V311.3" stroke="#92bb86" stroke-width="1.25"/><path d="M821.1999999999999 297.0 L823.8 305.8 H818.5999999999999 Z" fill="none" stroke="#92bb86" stroke-width="1.25" stroke-linejoin="round"/><path d="M821.1999999999999 305.8 V311.3" stroke="#92bb86" stroke-width="1.25"/><ellipse cx="886.3" cy="300.8" rx="2.5" ry="3.6" fill="none" stroke="#92bb86" stroke-width="1.25"/><path d="M886.3 304.40000000000003 V311.3" stroke="#92bb86" stroke-width="1.25"/><path d="M878.7 297.0 L881.3000000000001 305.8 H876.1 Z" fill="none" stroke="#92bb86" stroke-width="1.25" stroke-linejoin="round"/><path d="M878.7 305.8 V311.3" stroke="#92bb86" stroke-width="1.25"/><ellipse cx="923.9000000000001" cy="300.9" rx="2.5" ry="3.6" fill="none" stroke="#92bb86" stroke-width="1.25"/><path d="M923.9000000000001 304.5 V311.4" stroke="#92bb86" stroke-width="1.25"/><path d="M931.5 297.09999999999997 L934.1 305.9 H928.9 Z" fill="none" stroke="#92bb86" stroke-width="1.25" stroke-linejoin="round"/><path d="M931.5 305.9 V311.4" stroke="#92bb86" stroke-width="1.25"/><ellipse cx="973.5999999999999" cy="284.4" rx="2.5" ry="3.6" fill="none" stroke="#92bb86" stroke-width="1.25"/><path d="M973.5999999999999 288.0 V294.9" stroke="#92bb86" stroke-width="1.25"/><path d="M966.0 280.59999999999997 L968.6 289.4 H963.4 Z" fill="none" stroke="#92bb86" stroke-width="1.25" stroke-linejoin="round"/><path d="M966.0 289.4 V294.9" stroke="#92bb86" stroke-width="1.25"/><ellipse cx="1025.8" cy="286.8" rx="2.5" ry="3.6" fill="none" stroke="#92bb86" stroke-width="1.25"/><path d="M1025.8 290.40000000000003 V297.3" stroke="#92bb86" stroke-width="1.25"/><path d="M1018.2 283.0 L1020.8000000000001 291.8 H1015.6 Z" fill="none" stroke="#92bb86" stroke-width="1.25" stroke-linejoin="round"/><path d="M1018.2 291.8 V297.3" stroke="#92bb86" stroke-width="1.25"/><ellipse cx="1088.9" cy="297.7" rx="2.5" ry="3.6" fill="none" stroke="#92bb86" stroke-width="1.25"/><path d="M1088.9 301.3 V308.2" stroke="#92bb86" stroke-width="1.25"/><path d="M1096.5 293.9 L1099.1 302.7 H1093.9 Z" fill="none" stroke="#92bb86" stroke-width="1.25" stroke-linejoin="round"/><path d="M1096.5 302.7 V308.2" stroke="#92bb86" stroke-width="1.25"/><ellipse cx="1128.5" cy="296.3" rx="2.5" ry="3.6" fill="none" stroke="#92bb86" stroke-width="1.25"/><path d="M1128.5 299.90000000000003 V306.8" stroke="#92bb86" stroke-width="1.25"/><path d="M1136.1 292.5 L1138.6999999999998 301.3 H1133.5 Z" fill="none" stroke="#92bb86" stroke-width="1.25" stroke-linejoin="round"/><path d="M1136.1 301.3 V306.8" stroke="#92bb86" stroke-width="1.25"/><ellipse cx="1182.2" cy="299.7" rx="2.5" ry="3.6" fill="none" stroke="#92bb86" stroke-width="1.25"/><path d="M1182.2 303.3 V310.2" stroke="#92bb86" stroke-width="1.25"/><path d="M1189.8 295.9 L1192.3999999999999 304.7 H1187.2 Z" fill="none" stroke="#92bb86" stroke-width="1.25" stroke-linejoin="round"/><path d="M1189.8 304.7 V310.2" stroke="#92bb86" stroke-width="1.25"/><ellipse cx="1245.8999999999999" cy="301.1" rx="2.5" ry="3.6" fill="none" stroke="#92bb86" stroke-width="1.25"/><path d="M1245.8999999999999 304.70000000000005 V311.6" stroke="#92bb86" stroke-width="1.25"/><path d="M1238.3 297.3 L1240.8999999999999 306.1 H1235.7 Z" fill="none" stroke="#92bb86" stroke-width="1.25" stroke-linejoin="round"/><path d="M1238.3 306.1 V311.6" stroke="#92bb86" stroke-width="1.25"/><ellipse cx="1299.8" cy="301.8" rx="2.5" ry="3.6" fill="none" stroke="#92bb86" stroke-width="1.25"/><path d="M1299.8 305.40000000000003 V312.3" stroke="#92bb86" stroke-width="1.25"/><path d="M1307.3999999999999 298.0 L1309.9999999999998 306.8 H1304.8 Z" fill="none" stroke="#92bb86" stroke-width="1.25" stroke-linejoin="round"/><path d="M1307.3999999999999 306.8 V312.3" stroke="#92bb86" stroke-width="1.25"/><ellipse cx="1344.7" cy="290.6" rx="2.5" ry="3.6" fill="none" stroke="#92bb86" stroke-width="1.25"/><path d="M1344.7 294.20000000000005 V301.1" stroke="#92bb86" stroke-width="1.25"/><path d="M1352.3 286.8 L1354.8999999999999 295.6 H1349.7 Z" fill="none" stroke="#92bb86" stroke-width="1.25" stroke-linejoin="round"/><path d="M1352.3 295.6 V301.1" stroke="#92bb86" stroke-width="1.25"/><ellipse cx="1411.3" cy="285.9" rx="2.5" ry="3.6" fill="none" stroke="#92bb86" stroke-width="1.25"/><path d="M1411.3 289.5 V296.4" stroke="#92bb86" stroke-width="1.25"/><path d="M1403.7 282.09999999999997 L1406.3 290.9 H1401.1000000000001 Z" fill="none" stroke="#92bb86" stroke-width="1.25" stroke-linejoin="round"/><path d="M1403.7 290.9 V296.4" stroke="#92bb86" stroke-width="1.25"/><ellipse cx="1468.4" cy="282.4" rx="2.5" ry="3.6" fill="none" stroke="#92bb86" stroke-width="1.25"/><path d="M1468.4 286.0 V292.9" stroke="#92bb86" stroke-width="1.25"/><path d="M1476.0 278.59999999999997 L1478.6 287.4 H1473.4 Z" fill="none" stroke="#92bb86" stroke-width="1.25" stroke-linejoin="round"/><path d="M1476.0 287.4 V292.9" stroke="#92bb86" stroke-width="1.25"/><ellipse cx="1522.1" cy="282.4" rx="2.5" ry="3.6" fill="none" stroke="#92bb86" stroke-width="1.25"/><path d="M1522.1 286.0 V292.9" stroke="#92bb86" stroke-width="1.25"/><path d="M1514.5 278.59999999999997 L1517.1 287.4 H1511.9 Z" fill="none" stroke="#92bb86" stroke-width="1.25" stroke-linejoin="round"/><path d="M1514.5 287.4 V292.9" stroke="#92bb86" stroke-width="1.25"/><ellipse cx="1581.3" cy="292.2" rx="2.5" ry="3.6" fill="none" stroke="#92bb86" stroke-width="1.25"/><path d="M1581.3 295.8 V302.7" stroke="#92bb86" stroke-width="1.25"/><path d="M1573.7 288.4 L1576.3 297.2 H1571.1000000000001 Z" fill="none" stroke="#92bb86" stroke-width="1.25" stroke-linejoin="round"/><path d="M1573.7 297.2 V302.7" stroke="#92bb86" stroke-width="1.25"/><ellipse cx="1637.8" cy="297.8" rx="2.5" ry="3.6" fill="none" stroke="#92bb86" stroke-width="1.25"/><path d="M1637.8 301.40000000000003 V308.3" stroke="#92bb86" stroke-width="1.25"/><path d="M1645.3999999999999 294.0 L1647.9999999999998 302.8 H1642.8 Z" fill="none" stroke="#92bb86" stroke-width="1.25" stroke-linejoin="round"/><path d="M1645.3999999999999 302.8 V308.3" stroke="#92bb86" stroke-width="1.25"/><ellipse cx="1674.7" cy="287.3" rx="2.5" ry="3.6" fill="none" stroke="#92bb86" stroke-width="1.25"/><path d="M1674.7 290.90000000000003 V297.8" stroke="#92bb86" stroke-width="1.25"/><path d="M1667.1000000000001 283.5 L1669.7 292.3 H1664.5000000000002 Z" fill="none" stroke="#92bb86" stroke-width="1.25" stroke-linejoin="round"/><path d="M1667.1000000000001 292.3 V297.8" stroke="#92bb86" stroke-width="1.25"/><ellipse cx="1747.6" cy="287.4" rx="2.5" ry="3.6" fill="none" stroke="#92bb86" stroke-width="1.25"/><path d="M1747.6 291.0 V297.9" stroke="#92bb86" stroke-width="1.25"/><path d="M1740.0 283.59999999999997 L1742.6 292.4 H1737.4 Z" fill="none" stroke="#92bb86" stroke-width="1.25" stroke-linejoin="round"/><path d="M1740.0 292.4 V297.9" stroke="#92bb86" stroke-width="1.25"/><ellipse cx="1784.0" cy="300.2" rx="2.5" ry="3.6" fill="none" stroke="#92bb86" stroke-width="1.25"/><path d="M1784.0 303.8 V310.7" stroke="#92bb86" stroke-width="1.25"/><path d="M1791.6 296.4 L1794.1999999999998 305.2 H1789.0 Z" fill="none" stroke="#92bb86" stroke-width="1.25" stroke-linejoin="round"/><path d="M1791.6 305.2 V310.7" stroke="#92bb86" stroke-width="1.25"/><ellipse cx="1833.4" cy="285.0" rx="2.5" ry="3.6" fill="none" stroke="#92bb86" stroke-width="1.25"/><path d="M1833.4 288.6 V295.5" stroke="#92bb86" stroke-width="1.25"/><path d="M1841.0 281.2 L1843.6 290.0 H1838.4 Z" fill="none" stroke="#92bb86" stroke-width="1.25" stroke-linejoin="round"/><path d="M1841.0 290.0 V295.5" stroke="#92bb86" stroke-width="1.25"/><ellipse cx="1903.8" cy="296.0" rx="2.5" ry="3.6" fill="none" stroke="#92bb86" stroke-width="1.25"/><path d="M1903.8 299.6 V306.5" stroke="#92bb86" stroke-width="1.25"/><path d="M1896.2 292.2 L1898.8 301.0 H1893.6000000000001 Z" fill="none" stroke="#92bb86" stroke-width="1.25" stroke-linejoin="round"/><path d="M1896.2 301.0 V306.5" stroke="#92bb86" stroke-width="1.25"/><ellipse cx="1943.3999999999999" cy="295.8" rx="2.5" ry="3.6" fill="none" stroke="#92bb86" stroke-width="1.25"/><path d="M1943.3999999999999 299.40000000000003 V306.3" stroke="#92bb86" stroke-width="1.25"/><path d="M1935.8 292.0 L1938.3999999999999 300.8 H1933.2 Z" fill="none" stroke="#92bb86" stroke-width="1.25" stroke-linejoin="round"/><path d="M1935.8 300.8 V306.3" stroke="#92bb86" stroke-width="1.25"/><ellipse cx="451.2" cy="348.8" rx="2.5" ry="3.6" fill="none" stroke="#92bb86" stroke-width="1.25"/><path d="M451.2 352.40000000000003 V359.3" stroke="#92bb86" stroke-width="1.25"/><path d="M458.8 345.0 L461.40000000000003 353.8 H456.2 Z" fill="none" stroke="#92bb86" stroke-width="1.25" stroke-linejoin="round"/><path d="M458.8 353.8 V359.3" stroke="#92bb86" stroke-width="1.25"/><ellipse cx="525.6" cy="331.7" rx="2.5" ry="3.6" fill="none" stroke="#92bb86" stroke-width="1.25"/><path d="M525.6 335.3 V342.2" stroke="#92bb86" stroke-width="1.25"/><path d="M533.1999999999999 327.9 L535.8 336.7 H530.5999999999999 Z" fill="none" stroke="#92bb86" stroke-width="1.25" stroke-linejoin="round"/><path d="M533.1999999999999 336.7 V342.2" stroke="#92bb86" stroke-width="1.25"/><ellipse cx="566.6999999999999" cy="347.3" rx="2.5" ry="3.6" fill="none" stroke="#92bb86" stroke-width="1.25"/><path d="M566.6999999999999 350.90000000000003 V357.8" stroke="#92bb86" stroke-width="1.25"/><path d="M559.1 343.5 L561.7 352.3 H556.5 Z" fill="none" stroke="#92bb86" stroke-width="1.25" stroke-linejoin="round"/><path d="M559.1 352.3 V357.8" stroke="#92bb86" stroke-width="1.25"/><ellipse cx="620.7" cy="341.1" rx="2.5" ry="3.6" fill="none" stroke="#92bb86" stroke-width="1.25"/><path d="M620.7 344.70000000000005 V351.6" stroke="#92bb86" stroke-width="1.25"/><path d="M628.3 337.3 L630.9 346.1 H625.6999999999999 Z" fill="none" stroke="#92bb86" stroke-width="1.25" stroke-linejoin="round"/><path d="M628.3 346.1 V351.6" stroke="#92bb86" stroke-width="1.25"/><ellipse cx="672.7" cy="332.6" rx="2.5" ry="3.6" fill="none" stroke="#92bb86" stroke-width="1.25"/><path d="M672.7 336.20000000000005 V343.1" stroke="#92bb86" stroke-width="1.25"/><path d="M680.3 328.8 L682.9 337.6 H677.6999999999999 Z" fill="none" stroke="#92bb86" stroke-width="1.25" stroke-linejoin="round"/><path d="M680.3 337.6 V343.1" stroke="#92bb86" stroke-width="1.25"/><ellipse cx="733.5" cy="332.2" rx="2.5" ry="3.6" fill="none" stroke="#92bb86" stroke-width="1.25"/><path d="M733.5 335.8 V342.7" stroke="#92bb86" stroke-width="1.25"/><path d="M725.9000000000001 328.4 L728.5000000000001 337.2 H723.3000000000001 Z" fill="none" stroke="#92bb86" stroke-width="1.25" stroke-linejoin="round"/><path d="M725.9000000000001 337.2 V342.7" stroke="#92bb86" stroke-width="1.25"/><ellipse cx="782.1999999999999" cy="334.0" rx="2.5" ry="3.6" fill="none" stroke="#92bb86" stroke-width="1.25"/><path d="M782.1999999999999 337.6 V344.5" stroke="#92bb86" stroke-width="1.25"/><path d="M774.6 330.2 L777.2 339.0 H772.0 Z" fill="none" stroke="#92bb86" stroke-width="1.25" stroke-linejoin="round"/><path d="M774.6 339.0 V344.5" stroke="#92bb86" stroke-width="1.25"/><ellipse cx="843.3" cy="345.2" rx="2.5" ry="3.6" fill="none" stroke="#92bb86" stroke-width="1.25"/><path d="M843.3 348.8 V355.7" stroke="#92bb86" stroke-width="1.25"/><path d="M835.7 341.4 L838.3000000000001 350.2 H833.1 Z" fill="none" stroke="#92bb86" stroke-width="1.25" stroke-linejoin="round"/><path d="M835.7 350.2 V355.7" stroke="#92bb86" stroke-width="1.25"/><ellipse cx="902.8" cy="333.6" rx="2.5" ry="3.6" fill="none" stroke="#92bb86" stroke-width="1.25"/><path d="M902.8 337.20000000000005 V344.1" stroke="#92bb86" stroke-width="1.25"/><path d="M895.2 329.8 L897.8000000000001 338.6 H892.6 Z" fill="none" stroke="#92bb86" stroke-width="1.25" stroke-linejoin="round"/><path d="M895.2 338.6 V344.1" stroke="#92bb86" stroke-width="1.25"/><ellipse cx="943.3" cy="335.0" rx="2.5" ry="3.6" fill="none" stroke="#92bb86" stroke-width="1.25"/><path d="M943.3 338.6 V345.5" stroke="#92bb86" stroke-width="1.25"/><path d="M935.7 331.2 L938.3000000000001 340.0 H933.1 Z" fill="none" stroke="#92bb86" stroke-width="1.25" stroke-linejoin="round"/><path d="M935.7 340.0 V345.5" stroke="#92bb86" stroke-width="1.25"/><ellipse cx="1017.3" cy="341.0" rx="2.5" ry="3.6" fill="none" stroke="#92bb86" stroke-width="1.25"/><path d="M1017.3 344.6 V351.5" stroke="#92bb86" stroke-width="1.25"/><path d="M1009.7 337.2 L1012.3000000000001 346.0 H1007.1 Z" fill="none" stroke="#92bb86" stroke-width="1.25" stroke-linejoin="round"/><path d="M1009.7 346.0 V351.5" stroke="#92bb86" stroke-width="1.25"/><ellipse cx="1064.1" cy="348.7" rx="2.5" ry="3.6" fill="none" stroke="#92bb86" stroke-width="1.25"/><path d="M1064.1 352.3 V359.2" stroke="#92bb86" stroke-width="1.25"/><path d="M1056.5 344.9 L1059.1 353.7 H1053.9 Z" fill="none" stroke="#92bb86" stroke-width="1.25" stroke-linejoin="round"/><path d="M1056.5 353.7 V359.2" stroke="#92bb86" stroke-width="1.25"/><ellipse cx="1127.7" cy="338.6" rx="2.5" ry="3.6" fill="none" stroke="#92bb86" stroke-width="1.25"/><path d="M1127.7 342.20000000000005 V349.1" stroke="#92bb86" stroke-width="1.25"/><path d="M1120.1000000000001 334.8 L1122.7 343.6 H1117.5000000000002 Z" fill="none" stroke="#92bb86" stroke-width="1.25" stroke-linejoin="round"/><path d="M1120.1000000000001 343.6 V349.1" stroke="#92bb86" stroke-width="1.25"/><ellipse cx="1174.6000000000001" cy="337.9" rx="2.5" ry="3.6" fill="none" stroke="#92bb86" stroke-width="1.25"/><path d="M1174.6000000000001 341.5 V348.4" stroke="#92bb86" stroke-width="1.25"/><path d="M1182.2 334.09999999999997 L1184.8 342.9 H1179.6000000000001 Z" fill="none" stroke="#92bb86" stroke-width="1.25" stroke-linejoin="round"/><path d="M1182.2 342.9 V348.4" stroke="#92bb86" stroke-width="1.25"/><ellipse cx="1232.1" cy="349.6" rx="2.5" ry="3.6" fill="none" stroke="#92bb86" stroke-width="1.25"/><path d="M1232.1 353.20000000000005 V360.1" stroke="#92bb86" stroke-width="1.25"/><path d="M1224.5 345.8 L1227.1 354.6 H1221.9 Z" fill="none" stroke="#92bb86" stroke-width="1.25" stroke-linejoin="round"/><path d="M1224.5 354.6 V360.1" stroke="#92bb86" stroke-width="1.25"/><ellipse cx="1282.5" cy="344.1" rx="2.5" ry="3.6" fill="none" stroke="#92bb86" stroke-width="1.25"/><path d="M1282.5 347.70000000000005 V354.6" stroke="#92bb86" stroke-width="1.25"/><path d="M1290.1 340.3 L1292.6999999999998 349.1 H1287.5 Z" fill="none" stroke="#92bb86" stroke-width="1.25" stroke-linejoin="round"/><path d="M1290.1 349.1 V354.6" stroke="#92bb86" stroke-width="1.25"/><ellipse cx="1332.1" cy="337.0" rx="2.5" ry="3.6" fill="none" stroke="#92bb86" stroke-width="1.25"/><path d="M1332.1 340.6 V347.5" stroke="#92bb86" stroke-width="1.25"/><path d="M1324.5 333.2 L1327.1 342.0 H1321.9 Z" fill="none" stroke="#92bb86" stroke-width="1.25" stroke-linejoin="round"/><path d="M1324.5 342.0 V347.5" stroke="#92bb86" stroke-width="1.25"/><ellipse cx="1370.8" cy="331.4" rx="2.5" ry="3.6" fill="none" stroke="#92bb86" stroke-width="1.25"/><path d="M1370.8 335.0 V341.9" stroke="#92bb86" stroke-width="1.25"/><path d="M1378.3999999999999 327.59999999999997 L1380.9999999999998 336.4 H1375.8 Z" fill="none" stroke="#92bb86" stroke-width="1.25" stroke-linejoin="round"/><path d="M1378.3999999999999 336.4 V341.9" stroke="#92bb86" stroke-width="1.25"/><ellipse cx="1436.0" cy="333.3" rx="2.5" ry="3.6" fill="none" stroke="#92bb86" stroke-width="1.25"/><path d="M1436.0 336.90000000000003 V343.8" stroke="#92bb86" stroke-width="1.25"/><path d="M1428.4 329.5 L1431.0 338.3 H1425.8000000000002 Z" fill="none" stroke="#92bb86" stroke-width="1.25" stroke-linejoin="round"/><path d="M1428.4 338.3 V343.8" stroke="#92bb86" stroke-width="1.25"/><ellipse cx="1498.8" cy="347.4" rx="2.5" ry="3.6" fill="none" stroke="#92bb86" stroke-width="1.25"/><path d="M1498.8 351.0 V357.9" stroke="#92bb86" stroke-width="1.25"/><path d="M1506.3999999999999 343.59999999999997 L1508.9999999999998 352.4 H1503.8 Z" fill="none" stroke="#92bb86" stroke-width="1.25" stroke-linejoin="round"/><path d="M1506.3999999999999 352.4 V357.9" stroke="#92bb86" stroke-width="1.25"/><ellipse cx="1544.7" cy="334.8" rx="2.5" ry="3.6" fill="none" stroke="#92bb86" stroke-width="1.25"/><path d="M1544.7 338.40000000000003 V345.3" stroke="#92bb86" stroke-width="1.25"/><path d="M1537.1000000000001 331.0 L1539.7 339.8 H1534.5000000000002 Z" fill="none" stroke="#92bb86" stroke-width="1.25" stroke-linejoin="round"/><path d="M1537.1000000000001 339.8 V345.3" stroke="#92bb86" stroke-width="1.25"/><ellipse cx="1603.7" cy="333.2" rx="2.5" ry="3.6" fill="none" stroke="#92bb86" stroke-width="1.25"/><path d="M1603.7 336.8 V343.7" stroke="#92bb86" stroke-width="1.25"/><path d="M1596.1000000000001 329.4 L1598.7 338.2 H1593.5000000000002 Z" fill="none" stroke="#92bb86" stroke-width="1.25" stroke-linejoin="round"/><path d="M1596.1000000000001 338.2 V343.7" stroke="#92bb86" stroke-width="1.25"/><ellipse cx="1644.6000000000001" cy="349.2" rx="2.5" ry="3.6" fill="none" stroke="#92bb86" stroke-width="1.25"/><path d="M1644.6000000000001 352.8 V359.7" stroke="#92bb86" stroke-width="1.25"/><path d="M1652.2 345.4 L1654.8 354.2 H1649.6000000000001 Z" fill="none" stroke="#92bb86" stroke-width="1.25" stroke-linejoin="round"/><path d="M1652.2 354.2 V359.7" stroke="#92bb86" stroke-width="1.25"/><ellipse cx="1706.5" cy="334.9" rx="2.5" ry="3.6" fill="none" stroke="#92bb86" stroke-width="1.25"/><path d="M1706.5 338.5 V345.4" stroke="#92bb86" stroke-width="1.25"/><path d="M1714.1 331.09999999999997 L1716.6999999999998 339.9 H1711.5 Z" fill="none" stroke="#92bb86" stroke-width="1.25" stroke-linejoin="round"/><path d="M1714.1 339.9 V345.4" stroke="#92bb86" stroke-width="1.25"/><ellipse cx="1761.5" cy="337.1" rx="2.5" ry="3.6" fill="none" stroke="#92bb86" stroke-width="1.25"/><path d="M1761.5 340.70000000000005 V347.6" stroke="#92bb86" stroke-width="1.25"/><path d="M1753.9 333.3 L1756.5 342.1 H1751.3000000000002 Z" fill="none" stroke="#92bb86" stroke-width="1.25" stroke-linejoin="round"/><path d="M1753.9 342.1 V347.6" stroke="#92bb86" stroke-width="1.25"/><ellipse cx="1809.9" cy="339.5" rx="2.5" ry="3.6" fill="none" stroke="#92bb86" stroke-width="1.25"/><path d="M1809.9 343.1 V350.0" stroke="#92bb86" stroke-width="1.25"/><path d="M1817.5 335.7 L1820.1 344.5 H1814.9 Z" fill="none" stroke="#92bb86" stroke-width="1.25" stroke-linejoin="round"/><path d="M1817.5 344.5 V350.0" stroke="#92bb86" stroke-width="1.25"/><ellipse cx="1866.3999999999999" cy="340.1" rx="2.5" ry="3.6" fill="none" stroke="#92bb86" stroke-width="1.25"/><path d="M1866.3999999999999 343.70000000000005 V350.6" stroke="#92bb86" stroke-width="1.25"/><path d="M1858.8 336.3 L1861.3999999999999 345.1 H1856.2 Z" fill="none" stroke="#92bb86" stroke-width="1.25" stroke-linejoin="round"/><path d="M1858.8 345.1 V350.6" stroke="#92bb86" stroke-width="1.25"/><ellipse cx="1922.2" cy="331.8" rx="2.5" ry="3.6" fill="none" stroke="#92bb86" stroke-width="1.25"/><path d="M1922.2 335.40000000000003 V342.3" stroke="#92bb86" stroke-width="1.25"/><path d="M1914.6000000000001 328.0 L1917.2 336.8 H1912.0000000000002 Z" fill="none" stroke="#92bb86" stroke-width="1.25" stroke-linejoin="round"/><path d="M1914.6000000000001 336.8 V342.3" stroke="#92bb86" stroke-width="1.25"/><ellipse cx="1970.0" cy="330.4" rx="2.5" ry="3.6" fill="none" stroke="#92bb86" stroke-width="1.25"/><path d="M1970.0 334.0 V340.9" stroke="#92bb86" stroke-width="1.25"/><path d="M1962.4 326.59999999999997 L1965.0 335.4 H1959.8000000000002 Z" fill="none" stroke="#92bb86" stroke-width="1.25" stroke-linejoin="round"/><path d="M1962.4 335.4 V340.9" stroke="#92bb86" stroke-width="1.25"/><ellipse cx="428.7" cy="389.7" rx="2.5" ry="3.6" fill="none" stroke="#92bb86" stroke-width="1.25"/><path d="M428.7 393.3 V400.2" stroke="#92bb86" stroke-width="1.25"/><path d="M436.3 385.9 L438.90000000000003 394.7 H433.7 Z" fill="none" stroke="#92bb86" stroke-width="1.25" stroke-linejoin="round"/><path d="M436.3 394.7 V400.2" stroke="#92bb86" stroke-width="1.25"/><ellipse cx="497.2" cy="391.2" rx="2.5" ry="3.6" fill="none" stroke="#92bb86" stroke-width="1.25"/><path d="M497.2 394.8 V401.7" stroke="#92bb86" stroke-width="1.25"/><path d="M504.8 387.4 L507.40000000000003 396.2 H502.2 Z" fill="none" stroke="#92bb86" stroke-width="1.25" stroke-linejoin="round"/><path d="M504.8 396.2 V401.7" stroke="#92bb86" stroke-width="1.25"/><ellipse cx="562.4" cy="385.8" rx="2.5" ry="3.6" fill="none" stroke="#92bb86" stroke-width="1.25"/><path d="M562.4 389.40000000000003 V396.3" stroke="#92bb86" stroke-width="1.25"/><path d="M554.8000000000001 382.0 L557.4000000000001 390.8 H552.2 Z" fill="none" stroke="#92bb86" stroke-width="1.25" stroke-linejoin="round"/><path d="M554.8000000000001 390.8 V396.3" stroke="#92bb86" stroke-width="1.25"/><ellipse cx="611.8000000000001" cy="381.0" rx="2.5" ry="3.6" fill="none" stroke="#92bb86" stroke-width="1.25"/><path d="M611.8000000000001 384.6 V391.5" stroke="#92bb86" stroke-width="1.25"/><path d="M619.4 377.2 L622.0 386.0 H616.8 Z" fill="none" stroke="#92bb86" stroke-width="1.25" stroke-linejoin="round"/><path d="M619.4 386.0 V391.5" stroke="#92bb86" stroke-width="1.25"/><ellipse cx="656.2" cy="378.9" rx="2.5" ry="3.6" fill="none" stroke="#92bb86" stroke-width="1.25"/><path d="M656.2 382.5 V389.4" stroke="#92bb86" stroke-width="1.25"/><path d="M663.8 375.09999999999997 L666.4 383.9 H661.1999999999999 Z" fill="none" stroke="#92bb86" stroke-width="1.25" stroke-linejoin="round"/><path d="M663.8 383.9 V389.4" stroke="#92bb86" stroke-width="1.25"/><ellipse cx="717.2" cy="390.5" rx="2.5" ry="3.6" fill="none" stroke="#92bb86" stroke-width="1.25"/><path d="M717.2 394.1 V401.0" stroke="#92bb86" stroke-width="1.25"/><path d="M724.8 386.7 L727.4 395.5 H722.1999999999999 Z" fill="none" stroke="#92bb86" stroke-width="1.25" stroke-linejoin="round"/><path d="M724.8 395.5 V401.0" stroke="#92bb86" stroke-width="1.25"/><ellipse cx="768.9000000000001" cy="380.8" rx="2.5" ry="3.6" fill="none" stroke="#92bb86" stroke-width="1.25"/><path d="M768.9000000000001 384.40000000000003 V391.3" stroke="#92bb86" stroke-width="1.25"/><path d="M776.5 377.0 L779.1 385.8 H773.9 Z" fill="none" stroke="#92bb86" stroke-width="1.25" stroke-linejoin="round"/><path d="M776.5 385.8 V391.3" stroke="#92bb86" stroke-width="1.25"/><ellipse cx="814.3000000000001" cy="394.7" rx="2.5" ry="3.6" fill="none" stroke="#92bb86" stroke-width="1.25"/><path d="M814.3000000000001 398.3 V405.2" stroke="#92bb86" stroke-width="1.25"/><path d="M821.9 390.9 L824.5 399.7 H819.3 Z" fill="none" stroke="#92bb86" stroke-width="1.25" stroke-linejoin="round"/><path d="M821.9 399.7 V405.2" stroke="#92bb86" stroke-width="1.25"/><ellipse cx="877.3000000000001" cy="389.7" rx="2.5" ry="3.6" fill="none" stroke="#92bb86" stroke-width="1.25"/><path d="M877.3000000000001 393.3 V400.2" stroke="#92bb86" stroke-width="1.25"/><path d="M884.9 385.9 L887.5 394.7 H882.3 Z" fill="none" stroke="#92bb86" stroke-width="1.25" stroke-linejoin="round"/><path d="M884.9 394.7 V400.2" stroke="#92bb86" stroke-width="1.25"/><ellipse cx="934.9" cy="391.9" rx="2.5" ry="3.6" fill="none" stroke="#92bb86" stroke-width="1.25"/><path d="M934.9 395.5 V402.4" stroke="#92bb86" stroke-width="1.25"/><path d="M927.3000000000001 388.09999999999997 L929.9000000000001 396.9 H924.7 Z" fill="none" stroke="#92bb86" stroke-width="1.25" stroke-linejoin="round"/><path d="M927.3000000000001 396.9 V402.4" stroke="#92bb86" stroke-width="1.25"/><ellipse cx="970.6999999999999" cy="380.7" rx="2.5" ry="3.6" fill="none" stroke="#92bb86" stroke-width="1.25"/><path d="M970.6999999999999 384.3 V391.2" stroke="#92bb86" stroke-width="1.25"/><path d="M963.1 376.9 L965.7 385.7 H960.5 Z" fill="none" stroke="#92bb86" stroke-width="1.25" stroke-linejoin="round"/><path d="M963.1 385.7 V391.2" stroke="#92bb86" stroke-width="1.25"/><ellipse cx="1019.1" cy="394.7" rx="2.5" ry="3.6" fill="none" stroke="#92bb86" stroke-width="1.25"/><path d="M1019.1 398.3 V405.2" stroke="#92bb86" stroke-width="1.25"/><path d="M1026.7 390.9 L1029.3 399.7 H1024.1000000000001 Z" fill="none" stroke="#92bb86" stroke-width="1.25" stroke-linejoin="round"/><path d="M1026.7 399.7 V405.2" stroke="#92bb86" stroke-width="1.25"/><ellipse cx="1087.8" cy="390.5" rx="2.5" ry="3.6" fill="none" stroke="#92bb86" stroke-width="1.25"/><path d="M1087.8 394.1 V401.0" stroke="#92bb86" stroke-width="1.25"/><path d="M1095.3999999999999 386.7 L1097.9999999999998 395.5 H1092.8 Z" fill="none" stroke="#92bb86" stroke-width="1.25" stroke-linejoin="round"/><path d="M1095.3999999999999 395.5 V401.0" stroke="#92bb86" stroke-width="1.25"/><ellipse cx="1137.9" cy="378.1" rx="2.5" ry="3.6" fill="none" stroke="#92bb86" stroke-width="1.25"/><path d="M1137.9 381.70000000000005 V388.6" stroke="#92bb86" stroke-width="1.25"/><path d="M1145.5 374.3 L1148.1 383.1 H1142.9 Z" fill="none" stroke="#92bb86" stroke-width="1.25" stroke-linejoin="round"/><path d="M1145.5 383.1 V388.6" stroke="#92bb86" stroke-width="1.25"/><ellipse cx="1199.2" cy="388.1" rx="2.5" ry="3.6" fill="none" stroke="#92bb86" stroke-width="1.25"/><path d="M1199.2 391.70000000000005 V398.6" stroke="#92bb86" stroke-width="1.25"/><path d="M1206.8 384.3 L1209.3999999999999 393.1 H1204.2 Z" fill="none" stroke="#92bb86" stroke-width="1.25" stroke-linejoin="round"/><path d="M1206.8 393.1 V398.6" stroke="#92bb86" stroke-width="1.25"/><ellipse cx="1250.7" cy="379.3" rx="2.5" ry="3.6" fill="none" stroke="#92bb86" stroke-width="1.25"/><path d="M1250.7 382.90000000000003 V389.8" stroke="#92bb86" stroke-width="1.25"/><path d="M1258.3 375.5 L1260.8999999999999 384.3 H1255.7 Z" fill="none" stroke="#92bb86" stroke-width="1.25" stroke-linejoin="round"/><path d="M1258.3 384.3 V389.8" stroke="#92bb86" stroke-width="1.25"/><ellipse cx="1300.8999999999999" cy="379.5" rx="2.5" ry="3.6" fill="none" stroke="#92bb86" stroke-width="1.25"/><path d="M1300.8999999999999 383.1 V390.0" stroke="#92bb86" stroke-width="1.25"/><path d="M1293.3 375.7 L1295.8999999999999 384.5 H1290.7 Z" fill="none" stroke="#92bb86" stroke-width="1.25" stroke-linejoin="round"/><path d="M1293.3 384.5 V390.0" stroke="#92bb86" stroke-width="1.25"/><ellipse cx="1360.6000000000001" cy="382.1" rx="2.5" ry="3.6" fill="none" stroke="#92bb86" stroke-width="1.25"/><path d="M1360.6000000000001 385.70000000000005 V392.6" stroke="#92bb86" stroke-width="1.25"/><path d="M1368.2 378.3 L1370.8 387.1 H1365.6000000000001 Z" fill="none" stroke="#92bb86" stroke-width="1.25" stroke-linejoin="round"/><path d="M1368.2 387.1 V392.6" stroke="#92bb86" stroke-width="1.25"/><ellipse cx="1429.1" cy="387.9" rx="2.5" ry="3.6" fill="none" stroke="#92bb86" stroke-width="1.25"/><path d="M1429.1 391.5 V398.4" stroke="#92bb86" stroke-width="1.25"/><path d="M1421.5 384.09999999999997 L1424.1 392.9 H1418.9 Z" fill="none" stroke="#92bb86" stroke-width="1.25" stroke-linejoin="round"/><path d="M1421.5 392.9 V398.4" stroke="#92bb86" stroke-width="1.25"/><ellipse cx="1461.6000000000001" cy="391.7" rx="2.5" ry="3.6" fill="none" stroke="#92bb86" stroke-width="1.25"/><path d="M1461.6000000000001 395.3 V402.2" stroke="#92bb86" stroke-width="1.25"/><path d="M1469.2 387.9 L1471.8 396.7 H1466.6000000000001 Z" fill="none" stroke="#92bb86" stroke-width="1.25" stroke-linejoin="round"/><path d="M1469.2 396.7 V402.2" stroke="#92bb86" stroke-width="1.25"/><ellipse cx="1527.1" cy="390.9" rx="2.5" ry="3.6" fill="none" stroke="#92bb86" stroke-width="1.25"/><path d="M1527.1 394.5 V401.4" stroke="#92bb86" stroke-width="1.25"/><path d="M1519.5 387.09999999999997 L1522.1 395.9 H1516.9 Z" fill="none" stroke="#92bb86" stroke-width="1.25" stroke-linejoin="round"/><path d="M1519.5 395.9 V401.4" stroke="#92bb86" stroke-width="1.25"/><ellipse cx="1560.3" cy="383.1" rx="2.5" ry="3.6" fill="none" stroke="#92bb86" stroke-width="1.25"/><path d="M1560.3 386.70000000000005 V393.6" stroke="#92bb86" stroke-width="1.25"/><path d="M1567.8999999999999 379.3 L1570.4999999999998 388.1 H1565.3 Z" fill="none" stroke="#92bb86" stroke-width="1.25" stroke-linejoin="round"/><path d="M1567.8999999999999 388.1 V393.6" stroke="#92bb86" stroke-width="1.25"/><ellipse cx="1626.3" cy="389.4" rx="2.5" ry="3.6" fill="none" stroke="#92bb86" stroke-width="1.25"/><path d="M1626.3 393.0 V399.9" stroke="#92bb86" stroke-width="1.25"/><path d="M1618.7 385.59999999999997 L1621.3 394.4 H1616.1000000000001 Z" fill="none" stroke="#92bb86" stroke-width="1.25" stroke-linejoin="round"/><path d="M1618.7 394.4 V399.9" stroke="#92bb86" stroke-width="1.25"/><ellipse cx="1665.9" cy="383.4" rx="2.5" ry="3.6" fill="none" stroke="#92bb86" stroke-width="1.25"/><path d="M1665.9 387.0 V393.9" stroke="#92bb86" stroke-width="1.25"/><path d="M1673.5 379.59999999999997 L1676.1 388.4 H1670.9 Z" fill="none" stroke="#92bb86" stroke-width="1.25" stroke-linejoin="round"/><path d="M1673.5 388.4 V393.9" stroke="#92bb86" stroke-width="1.25"/><ellipse cx="1745.2" cy="391.5" rx="2.5" ry="3.6" fill="none" stroke="#92bb86" stroke-width="1.25"/><path d="M1745.2 395.1 V402.0" stroke="#92bb86" stroke-width="1.25"/><path d="M1737.6000000000001 387.7 L1740.2 396.5 H1735.0000000000002 Z" fill="none" stroke="#92bb86" stroke-width="1.25" stroke-linejoin="round"/><path d="M1737.6000000000001 396.5 V402.0" stroke="#92bb86" stroke-width="1.25"/><ellipse cx="1794.3" cy="387.3" rx="2.5" ry="3.6" fill="none" stroke="#92bb86" stroke-width="1.25"/><path d="M1794.3 390.90000000000003 V397.8" stroke="#92bb86" stroke-width="1.25"/><path d="M1786.7 383.5 L1789.3 392.3 H1784.1000000000001 Z" fill="none" stroke="#92bb86" stroke-width="1.25" stroke-linejoin="round"/><path d="M1786.7 392.3 V397.8" stroke="#92bb86" stroke-width="1.25"/><ellipse cx="1837.1" cy="395.9" rx="2.5" ry="3.6" fill="none" stroke="#92bb86" stroke-width="1.25"/><path d="M1837.1 399.5 V406.4" stroke="#92bb86" stroke-width="1.25"/><path d="M1829.5 392.09999999999997 L1832.1 400.9 H1826.9 Z" fill="none" stroke="#92bb86" stroke-width="1.25" stroke-linejoin="round"/><path d="M1829.5 400.9 V406.4" stroke="#92bb86" stroke-width="1.25"/><ellipse cx="1915.2" cy="396.7" rx="2.5" ry="3.6" fill="none" stroke="#92bb86" stroke-width="1.25"/><path d="M1915.2 400.3 V407.2" stroke="#92bb86" stroke-width="1.25"/><path d="M1907.6000000000001 392.9 L1910.2 401.7 H1905.0000000000002 Z" fill="none" stroke="#92bb86" stroke-width="1.25" stroke-linejoin="round"/><path d="M1907.6000000000001 401.7 V407.2" stroke="#92bb86" stroke-width="1.25"/><ellipse cx="1947.1000000000001" cy="394.4" rx="2.5" ry="3.6" fill="none" stroke="#92bb86" stroke-width="1.25"/><path d="M1947.1000000000001 398.0 V404.9" stroke="#92bb86" stroke-width="1.25"/><path d="M1954.7 390.59999999999997 L1957.3 399.4 H1952.1000000000001 Z" fill="none" stroke="#92bb86" stroke-width="1.25" stroke-linejoin="round"/><path d="M1954.7 399.4 V404.9" stroke="#92bb86" stroke-width="1.25"/><ellipse cx="469.40000000000003" cy="431.4" rx="2.5" ry="3.6" fill="none" stroke="#92bb86" stroke-width="1.25"/><path d="M469.40000000000003 435.0 V441.9" stroke="#92bb86" stroke-width="1.25"/><path d="M461.8 427.59999999999997 L464.40000000000003 436.4 H459.2 Z" fill="none" stroke="#92bb86" stroke-width="1.25" stroke-linejoin="round"/><path d="M461.8 436.4 V441.9" stroke="#92bb86" stroke-width="1.25"/><ellipse cx="529.7" cy="430.2" rx="2.5" ry="3.6" fill="none" stroke="#92bb86" stroke-width="1.25"/><path d="M529.7 433.8 V440.7" stroke="#92bb86" stroke-width="1.25"/><path d="M537.3 426.4 L539.9 435.2 H534.6999999999999 Z" fill="none" stroke="#92bb86" stroke-width="1.25" stroke-linejoin="round"/><path d="M537.3 435.2 V440.7" stroke="#92bb86" stroke-width="1.25"/><ellipse cx="561.2" cy="436.5" rx="2.5" ry="3.6" fill="none" stroke="#92bb86" stroke-width="1.25"/><path d="M561.2 440.1 V447.0" stroke="#92bb86" stroke-width="1.25"/><path d="M568.8 432.7 L571.4 441.5 H566.1999999999999 Z" fill="none" stroke="#92bb86" stroke-width="1.25" stroke-linejoin="round"/><path d="M568.8 441.5 V447.0" stroke="#92bb86" stroke-width="1.25"/><ellipse cx="614.9000000000001" cy="442.4" rx="2.5" ry="3.6" fill="none" stroke="#92bb86" stroke-width="1.25"/><path d="M614.9000000000001 446.0 V452.9" stroke="#92bb86" stroke-width="1.25"/><path d="M622.5 438.59999999999997 L625.1 447.4 H619.9 Z" fill="none" stroke="#92bb86" stroke-width="1.25" stroke-linejoin="round"/><path d="M622.5 447.4 V452.9" stroke="#92bb86" stroke-width="1.25"/><ellipse cx="697.5999999999999" cy="440.1" rx="2.5" ry="3.6" fill="none" stroke="#92bb86" stroke-width="1.25"/><path d="M697.5999999999999 443.70000000000005 V450.6" stroke="#92bb86" stroke-width="1.25"/><path d="M690.0 436.3 L692.6 445.1 H687.4 Z" fill="none" stroke="#92bb86" stroke-width="1.25" stroke-linejoin="round"/><path d="M690.0 445.1 V450.6" stroke="#92bb86" stroke-width="1.25"/><ellipse cx="751.9" cy="435.7" rx="2.5" ry="3.6" fill="none" stroke="#92bb86" stroke-width="1.25"/><path d="M751.9 439.3 V446.2" stroke="#92bb86" stroke-width="1.25"/><path d="M744.3000000000001 431.9 L746.9000000000001 440.7 H741.7 Z" fill="none" stroke="#92bb86" stroke-width="1.25" stroke-linejoin="round"/><path d="M744.3000000000001 440.7 V446.2" stroke="#92bb86" stroke-width="1.25"/><ellipse cx="780.9" cy="435.8" rx="2.5" ry="3.6" fill="none" stroke="#92bb86" stroke-width="1.25"/><path d="M780.9 439.40000000000003 V446.3" stroke="#92bb86" stroke-width="1.25"/><path d="M773.3000000000001 432.0 L775.9000000000001 440.8 H770.7 Z" fill="none" stroke="#92bb86" stroke-width="1.25" stroke-linejoin="round"/><path d="M773.3000000000001 440.8 V446.3" stroke="#92bb86" stroke-width="1.25"/><ellipse cx="843.3" cy="428.8" rx="2.5" ry="3.6" fill="none" stroke="#92bb86" stroke-width="1.25"/><path d="M843.3 432.40000000000003 V439.3" stroke="#92bb86" stroke-width="1.25"/><path d="M835.7 425.0 L838.3000000000001 433.8 H833.1 Z" fill="none" stroke="#92bb86" stroke-width="1.25" stroke-linejoin="round"/><path d="M835.7 433.8 V439.3" stroke="#92bb86" stroke-width="1.25"/><ellipse cx="897.6999999999999" cy="442.8" rx="2.5" ry="3.6" fill="none" stroke="#92bb86" stroke-width="1.25"/><path d="M897.6999999999999 446.40000000000003 V453.3" stroke="#92bb86" stroke-width="1.25"/><path d="M890.1 439.0 L892.7 447.8 H887.5 Z" fill="none" stroke="#92bb86" stroke-width="1.25" stroke-linejoin="round"/><path d="M890.1 447.8 V453.3" stroke="#92bb86" stroke-width="1.25"/><ellipse cx="963.8" cy="442.8" rx="2.5" ry="3.6" fill="none" stroke="#92bb86" stroke-width="1.25"/><path d="M963.8 446.40000000000003 V453.3" stroke="#92bb86" stroke-width="1.25"/><path d="M956.2 439.0 L958.8000000000001 447.8 H953.6 Z" fill="none" stroke="#92bb86" stroke-width="1.25" stroke-linejoin="round"/><path d="M956.2 447.8 V453.3" stroke="#92bb86" stroke-width="1.25"/><ellipse cx="1015.1" cy="440.3" rx="2.5" ry="3.6" fill="none" stroke="#92bb86" stroke-width="1.25"/><path d="M1015.1 443.90000000000003 V450.8" stroke="#92bb86" stroke-width="1.25"/><path d="M1022.6999999999999 436.5 L1025.3 445.3 H1020.0999999999999 Z" fill="none" stroke="#92bb86" stroke-width="1.25" stroke-linejoin="round"/><path d="M1022.6999999999999 445.3 V450.8" stroke="#92bb86" stroke-width="1.25"/><ellipse cx="1058.8999999999999" cy="433.4" rx="2.5" ry="3.6" fill="none" stroke="#92bb86" stroke-width="1.25"/><path d="M1058.8999999999999 437.0 V443.9" stroke="#92bb86" stroke-width="1.25"/><path d="M1051.3 429.59999999999997 L1053.8999999999999 438.4 H1048.7 Z" fill="none" stroke="#92bb86" stroke-width="1.25" stroke-linejoin="round"/><path d="M1051.3 438.4 V443.9" stroke="#92bb86" stroke-width="1.25"/><ellipse cx="1132.8" cy="437.8" rx="2.5" ry="3.6" fill="none" stroke="#92bb86" stroke-width="1.25"/><path d="M1132.8 441.40000000000003 V448.3" stroke="#92bb86" stroke-width="1.25"/><path d="M1125.2 434.0 L1127.8 442.8 H1122.6000000000001 Z" fill="none" stroke="#92bb86" stroke-width="1.25" stroke-linejoin="round"/><path d="M1125.2 442.8 V448.3" stroke="#92bb86" stroke-width="1.25"/><ellipse cx="1170.8" cy="431.5" rx="2.5" ry="3.6" fill="none" stroke="#92bb86" stroke-width="1.25"/><path d="M1170.8 435.1 V442.0" stroke="#92bb86" stroke-width="1.25"/><path d="M1163.2 427.7 L1165.8 436.5 H1160.6000000000001 Z" fill="none" stroke="#92bb86" stroke-width="1.25" stroke-linejoin="round"/><path d="M1163.2 436.5 V442.0" stroke="#92bb86" stroke-width="1.25"/><ellipse cx="1215.6" cy="442.7" rx="2.5" ry="3.6" fill="none" stroke="#92bb86" stroke-width="1.25"/><path d="M1215.6 446.3 V453.2" stroke="#92bb86" stroke-width="1.25"/><path d="M1208.0 438.9 L1210.6 447.7 H1205.4 Z" fill="none" stroke="#92bb86" stroke-width="1.25" stroke-linejoin="round"/><path d="M1208.0 447.7 V453.2" stroke="#92bb86" stroke-width="1.25"/><ellipse cx="1293.0" cy="431.0" rx="2.5" ry="3.6" fill="none" stroke="#92bb86" stroke-width="1.25"/><path d="M1293.0 434.6 V441.5" stroke="#92bb86" stroke-width="1.25"/><path d="M1285.4 427.2 L1288.0 436.0 H1282.8000000000002 Z" fill="none" stroke="#92bb86" stroke-width="1.25" stroke-linejoin="round"/><path d="M1285.4 436.0 V441.5" stroke="#92bb86" stroke-width="1.25"/><ellipse cx="1335.1" cy="429.8" rx="2.5" ry="3.6" fill="none" stroke="#92bb86" stroke-width="1.25"/><path d="M1335.1 433.40000000000003 V440.3" stroke="#92bb86" stroke-width="1.25"/><path d="M1327.5 426.0 L1330.1 434.8 H1324.9 Z" fill="none" stroke="#92bb86" stroke-width="1.25" stroke-linejoin="round"/><path d="M1327.5 434.8 V440.3" stroke="#92bb86" stroke-width="1.25"/><ellipse cx="1394.0" cy="443.7" rx="2.5" ry="3.6" fill="none" stroke="#92bb86" stroke-width="1.25"/><path d="M1394.0 447.3 V454.2" stroke="#92bb86" stroke-width="1.25"/><path d="M1401.6 439.9 L1404.1999999999998 448.7 H1399.0 Z" fill="none" stroke="#92bb86" stroke-width="1.25" stroke-linejoin="round"/><path d="M1401.6 448.7 V454.2" stroke="#92bb86" stroke-width="1.25"/><ellipse cx="1438.9" cy="444.3" rx="2.5" ry="3.6" fill="none" stroke="#92bb86" stroke-width="1.25"/><path d="M1438.9 447.90000000000003 V454.8" stroke="#92bb86" stroke-width="1.25"/><path d="M1446.5 440.5 L1449.1 449.3 H1443.9 Z" fill="none" stroke="#92bb86" stroke-width="1.25" stroke-linejoin="round"/><path d="M1446.5 449.3 V454.8" stroke="#92bb86" stroke-width="1.25"/><ellipse cx="1498.2" cy="440.4" rx="2.5" ry="3.6" fill="none" stroke="#92bb86" stroke-width="1.25"/><path d="M1498.2 444.0 V450.9" stroke="#92bb86" stroke-width="1.25"/><path d="M1490.6000000000001 436.59999999999997 L1493.2 445.4 H1488.0000000000002 Z" fill="none" stroke="#92bb86" stroke-width="1.25" stroke-linejoin="round"/><path d="M1490.6000000000001 445.4 V450.9" stroke="#92bb86" stroke-width="1.25"/><ellipse cx="1549.7" cy="435.0" rx="2.5" ry="3.6" fill="none" stroke="#92bb86" stroke-width="1.25"/><path d="M1549.7 438.6 V445.5" stroke="#92bb86" stroke-width="1.25"/><path d="M1557.3 431.2 L1559.8999999999999 440.0 H1554.7 Z" fill="none" stroke="#92bb86" stroke-width="1.25" stroke-linejoin="round"/><path d="M1557.3 440.0 V445.5" stroke="#92bb86" stroke-width="1.25"/><ellipse cx="1608.8" cy="431.7" rx="2.5" ry="3.6" fill="none" stroke="#92bb86" stroke-width="1.25"/><path d="M1608.8 435.3 V442.2" stroke="#92bb86" stroke-width="1.25"/><path d="M1601.2 427.9 L1603.8 436.7 H1598.6000000000001 Z" fill="none" stroke="#92bb86" stroke-width="1.25" stroke-linejoin="round"/><path d="M1601.2 436.7 V442.2" stroke="#92bb86" stroke-width="1.25"/><ellipse cx="1670.7" cy="428.5" rx="2.5" ry="3.6" fill="none" stroke="#92bb86" stroke-width="1.25"/><path d="M1670.7 432.1 V439.0" stroke="#92bb86" stroke-width="1.25"/><path d="M1663.1000000000001 424.7 L1665.7 433.5 H1660.5000000000002 Z" fill="none" stroke="#92bb86" stroke-width="1.25" stroke-linejoin="round"/><path d="M1663.1000000000001 433.5 V439.0" stroke="#92bb86" stroke-width="1.25"/><ellipse cx="1700.8" cy="432.0" rx="2.5" ry="3.6" fill="none" stroke="#92bb86" stroke-width="1.25"/><path d="M1700.8 435.6 V442.5" stroke="#92bb86" stroke-width="1.25"/><path d="M1708.3999999999999 428.2 L1710.9999999999998 437.0 H1705.8 Z" fill="none" stroke="#92bb86" stroke-width="1.25" stroke-linejoin="round"/><path d="M1708.3999999999999 437.0 V442.5" stroke="#92bb86" stroke-width="1.25"/><ellipse cx="1772.5" cy="431.2" rx="2.5" ry="3.6" fill="none" stroke="#92bb86" stroke-width="1.25"/><path d="M1772.5 434.8 V441.7" stroke="#92bb86" stroke-width="1.25"/><path d="M1780.1 427.4 L1782.6999999999998 436.2 H1777.5 Z" fill="none" stroke="#92bb86" stroke-width="1.25" stroke-linejoin="round"/><path d="M1780.1 436.2 V441.7" stroke="#92bb86" stroke-width="1.25"/><ellipse cx="1815.2" cy="437.1" rx="2.5" ry="3.6" fill="none" stroke="#92bb86" stroke-width="1.25"/><path d="M1815.2 440.70000000000005 V447.6" stroke="#92bb86" stroke-width="1.25"/><path d="M1807.6000000000001 433.3 L1810.2 442.1 H1805.0000000000002 Z" fill="none" stroke="#92bb86" stroke-width="1.25" stroke-linejoin="round"/><path d="M1807.6000000000001 442.1 V447.6" stroke="#92bb86" stroke-width="1.25"/><ellipse cx="1865.5" cy="429.2" rx="2.5" ry="3.6" fill="none" stroke="#92bb86" stroke-width="1.25"/><path d="M1865.5 432.8 V439.7" stroke="#92bb86" stroke-width="1.25"/><path d="M1857.9 425.4 L1860.5 434.2 H1855.3000000000002 Z" fill="none" stroke="#92bb86" stroke-width="1.25" stroke-linejoin="round"/><path d="M1857.9 434.2 V439.7" stroke="#92bb86" stroke-width="1.25"/><ellipse cx="1940.2" cy="435.9" rx="2.5" ry="3.6" fill="none" stroke="#92bb86" stroke-width="1.25"/><path d="M1940.2 439.5 V446.4" stroke="#92bb86" stroke-width="1.25"/><path d="M1932.6000000000001 432.09999999999997 L1935.2 440.9 H1930.0000000000002 Z" fill="none" stroke="#92bb86" stroke-width="1.25" stroke-linejoin="round"/><path d="M1932.6000000000001 440.9 V446.4" stroke="#92bb86" stroke-width="1.25"/><ellipse cx="1994.2" cy="445.9" rx="2.5" ry="3.6" fill="none" stroke="#92bb86" stroke-width="1.25"/><path d="M1994.2 449.5 V456.4" stroke="#92bb86" stroke-width="1.25"/><path d="M1986.6000000000001 442.09999999999997 L1989.2 450.9 H1984.0000000000002 Z" fill="none" stroke="#92bb86" stroke-width="1.25" stroke-linejoin="round"/><path d="M1986.6000000000001 450.9 V456.4" stroke="#92bb86" stroke-width="1.25"/><ellipse cx="433.7" cy="477.8" rx="2.5" ry="3.6" fill="none" stroke="#92bb86" stroke-width="1.25"/><path d="M433.7 481.40000000000003 V488.3" stroke="#92bb86" stroke-width="1.25"/><path d="M426.09999999999997 474.0 L428.7 482.8 H423.49999999999994 Z" fill="none" stroke="#92bb86" stroke-width="1.25" stroke-linejoin="round"/><path d="M426.09999999999997 482.8 V488.3" stroke="#92bb86" stroke-width="1.25"/><ellipse cx="493.40000000000003" cy="475.8" rx="2.5" ry="3.6" fill="none" stroke="#92bb86" stroke-width="1.25"/><path d="M493.40000000000003 479.40000000000003 V486.3" stroke="#92bb86" stroke-width="1.25"/><path d="M485.8 472.0 L488.40000000000003 480.8 H483.2 Z" fill="none" stroke="#92bb86" stroke-width="1.25" stroke-linejoin="round"/><path d="M485.8 480.8 V486.3" stroke="#92bb86" stroke-width="1.25"/><ellipse cx="537.4000000000001" cy="485.4" rx="2.5" ry="3.6" fill="none" stroke="#92bb86" stroke-width="1.25"/><path d="M537.4000000000001 489.0 V495.9" stroke="#92bb86" stroke-width="1.25"/><path d="M545.0 481.59999999999997 L547.6 490.4 H542.4 Z" fill="none" stroke="#92bb86" stroke-width="1.25" stroke-linejoin="round"/><path d="M545.0 490.4 V495.9" stroke="#92bb86" stroke-width="1.25"/><ellipse cx="612.8" cy="482.3" rx="2.5" ry="3.6" fill="none" stroke="#92bb86" stroke-width="1.25"/><path d="M612.8 485.90000000000003 V492.8" stroke="#92bb86" stroke-width="1.25"/><path d="M605.2 478.5 L607.8000000000001 487.3 H602.6 Z" fill="none" stroke="#92bb86" stroke-width="1.25" stroke-linejoin="round"/><path d="M605.2 487.3 V492.8" stroke="#92bb86" stroke-width="1.25"/><ellipse cx="660.5" cy="481.5" rx="2.5" ry="3.6" fill="none" stroke="#92bb86" stroke-width="1.25"/><path d="M660.5 485.1 V492.0" stroke="#92bb86" stroke-width="1.25"/><path d="M652.9000000000001 477.7 L655.5000000000001 486.5 H650.3000000000001 Z" fill="none" stroke="#92bb86" stroke-width="1.25" stroke-linejoin="round"/><path d="M652.9000000000001 486.5 V492.0" stroke="#92bb86" stroke-width="1.25"/><ellipse cx="693.9000000000001" cy="479.6" rx="2.5" ry="3.6" fill="none" stroke="#92bb86" stroke-width="1.25"/><path d="M693.9000000000001 483.20000000000005 V490.1" stroke="#92bb86" stroke-width="1.25"/><path d="M701.5 475.8 L704.1 484.6 H698.9 Z" fill="none" stroke="#92bb86" stroke-width="1.25" stroke-linejoin="round"/><path d="M701.5 484.6 V490.1" stroke="#92bb86" stroke-width="1.25"/><ellipse cx="749.7" cy="484.1" rx="2.5" ry="3.6" fill="none" stroke="#92bb86" stroke-width="1.25"/><path d="M749.7 487.70000000000005 V494.6" stroke="#92bb86" stroke-width="1.25"/><path d="M757.3 480.3 L759.9 489.1 H754.6999999999999 Z" fill="none" stroke="#92bb86" stroke-width="1.25" stroke-linejoin="round"/><path d="M757.3 489.1 V494.6" stroke="#92bb86" stroke-width="1.25"/><ellipse cx="832.0" cy="478.3" rx="2.5" ry="3.6" fill="none" stroke="#92bb86" stroke-width="1.25"/><path d="M832.0 481.90000000000003 V488.8" stroke="#92bb86" stroke-width="1.25"/><path d="M824.4000000000001 474.5 L827.0000000000001 483.3 H821.8000000000001 Z" fill="none" stroke="#92bb86" stroke-width="1.25" stroke-linejoin="round"/><path d="M824.4000000000001 483.3 V488.8" stroke="#92bb86" stroke-width="1.25"/><ellipse cx="868.8" cy="482.0" rx="2.5" ry="3.6" fill="none" stroke="#92bb86" stroke-width="1.25"/><path d="M868.8 485.6 V492.5" stroke="#92bb86" stroke-width="1.25"/><path d="M861.2 478.2 L863.8000000000001 487.0 H858.6 Z" fill="none" stroke="#92bb86" stroke-width="1.25" stroke-linejoin="round"/><path d="M861.2 487.0 V492.5" stroke="#92bb86" stroke-width="1.25"/><ellipse cx="934.9000000000001" cy="491.0" rx="2.5" ry="3.6" fill="none" stroke="#92bb86" stroke-width="1.25"/><path d="M934.9000000000001 494.6 V501.5" stroke="#92bb86" stroke-width="1.25"/><path d="M942.5 487.2 L945.1 496.0 H939.9 Z" fill="none" stroke="#92bb86" stroke-width="1.25" stroke-linejoin="round"/><path d="M942.5 496.0 V501.5" stroke="#92bb86" stroke-width="1.25"/><ellipse cx="962.8000000000001" cy="474.6" rx="2.5" ry="3.6" fill="none" stroke="#92bb86" stroke-width="1.25"/><path d="M962.8000000000001 478.20000000000005 V485.1" stroke="#92bb86" stroke-width="1.25"/><path d="M970.4 470.8 L973.0 479.6 H967.8 Z" fill="none" stroke="#92bb86" stroke-width="1.25" stroke-linejoin="round"/><path d="M970.4 479.6 V485.1" stroke="#92bb86" stroke-width="1.25"/><ellipse cx="1041.3" cy="483.5" rx="2.5" ry="3.6" fill="none" stroke="#92bb86" stroke-width="1.25"/><path d="M1041.3 487.1 V494.0" stroke="#92bb86" stroke-width="1.25"/><path d="M1048.8999999999999 479.7 L1051.4999999999998 488.5 H1046.3 Z" fill="none" stroke="#92bb86" stroke-width="1.25" stroke-linejoin="round"/><path d="M1048.8999999999999 488.5 V494.0" stroke="#92bb86" stroke-width="1.25"/><ellipse cx="1070.2" cy="481.8" rx="2.5" ry="3.6" fill="none" stroke="#92bb86" stroke-width="1.25"/><path d="M1070.2 485.40000000000003 V492.3" stroke="#92bb86" stroke-width="1.25"/><path d="M1077.8 478.0 L1080.3999999999999 486.8 H1075.2 Z" fill="none" stroke="#92bb86" stroke-width="1.25" stroke-linejoin="round"/><path d="M1077.8 486.8 V492.3" stroke="#92bb86" stroke-width="1.25"/><ellipse cx="1147.3" cy="491.1" rx="2.5" ry="3.6" fill="none" stroke="#92bb86" stroke-width="1.25"/><path d="M1147.3 494.70000000000005 V501.6" stroke="#92bb86" stroke-width="1.25"/><path d="M1154.8999999999999 487.3 L1157.4999999999998 496.1 H1152.3 Z" fill="none" stroke="#92bb86" stroke-width="1.25" stroke-linejoin="round"/><path d="M1154.8999999999999 496.1 V501.6" stroke="#92bb86" stroke-width="1.25"/><ellipse cx="1192.8" cy="476.2" rx="2.5" ry="3.6" fill="none" stroke="#92bb86" stroke-width="1.25"/><path d="M1192.8 479.8 V486.7" stroke="#92bb86" stroke-width="1.25"/><path d="M1185.2 472.4 L1187.8 481.2 H1182.6000000000001 Z" fill="none" stroke="#92bb86" stroke-width="1.25" stroke-linejoin="round"/><path d="M1185.2 481.2 V486.7" stroke="#92bb86" stroke-width="1.25"/><ellipse cx="1246.8" cy="487.6" rx="2.5" ry="3.6" fill="none" stroke="#92bb86" stroke-width="1.25"/><path d="M1246.8 491.20000000000005 V498.1" stroke="#92bb86" stroke-width="1.25"/><path d="M1254.3999999999999 483.8 L1256.9999999999998 492.6 H1251.8 Z" fill="none" stroke="#92bb86" stroke-width="1.25" stroke-linejoin="round"/><path d="M1254.3999999999999 492.6 V498.1" stroke="#92bb86" stroke-width="1.25"/><ellipse cx="1306.4" cy="486.9" rx="2.5" ry="3.6" fill="none" stroke="#92bb86" stroke-width="1.25"/><path d="M1306.4 490.5 V497.4" stroke="#92bb86" stroke-width="1.25"/><path d="M1314.0 483.09999999999997 L1316.6 491.9 H1311.4 Z" fill="none" stroke="#92bb86" stroke-width="1.25" stroke-linejoin="round"/><path d="M1314.0 491.9 V497.4" stroke="#92bb86" stroke-width="1.25"/><ellipse cx="1360.6" cy="485.0" rx="2.5" ry="3.6" fill="none" stroke="#92bb86" stroke-width="1.25"/><path d="M1360.6 488.6 V495.5" stroke="#92bb86" stroke-width="1.25"/><path d="M1353.0 481.2 L1355.6 490.0 H1350.4 Z" fill="none" stroke="#92bb86" stroke-width="1.25" stroke-linejoin="round"/><path d="M1353.0 490.0 V495.5" stroke="#92bb86" stroke-width="1.25"/><ellipse cx="1416.1000000000001" cy="478.7" rx="2.5" ry="3.6" fill="none" stroke="#92bb86" stroke-width="1.25"/><path d="M1416.1000000000001 482.3 V489.2" stroke="#92bb86" stroke-width="1.25"/><path d="M1423.7 474.9 L1426.3 483.7 H1421.1000000000001 Z" fill="none" stroke="#92bb86" stroke-width="1.25" stroke-linejoin="round"/><path d="M1423.7 483.7 V489.2" stroke="#92bb86" stroke-width="1.25"/><ellipse cx="1473.8999999999999" cy="480.1" rx="2.5" ry="3.6" fill="none" stroke="#92bb86" stroke-width="1.25"/><path d="M1473.8999999999999 483.70000000000005 V490.6" stroke="#92bb86" stroke-width="1.25"/><path d="M1466.3 476.3 L1468.8999999999999 485.1 H1463.7 Z" fill="none" stroke="#92bb86" stroke-width="1.25" stroke-linejoin="round"/><path d="M1466.3 485.1 V490.6" stroke="#92bb86" stroke-width="1.25"/><ellipse cx="1509.3" cy="486.7" rx="2.5" ry="3.6" fill="none" stroke="#92bb86" stroke-width="1.25"/><path d="M1509.3 490.3 V497.2" stroke="#92bb86" stroke-width="1.25"/><path d="M1516.8999999999999 482.9 L1519.4999999999998 491.7 H1514.3 Z" fill="none" stroke="#92bb86" stroke-width="1.25" stroke-linejoin="round"/><path d="M1516.8999999999999 491.7 V497.2" stroke="#92bb86" stroke-width="1.25"/><ellipse cx="1559.3" cy="475.4" rx="2.5" ry="3.6" fill="none" stroke="#92bb86" stroke-width="1.25"/><path d="M1559.3 479.0 V485.9" stroke="#92bb86" stroke-width="1.25"/><path d="M1566.8999999999999 471.59999999999997 L1569.4999999999998 480.4 H1564.3 Z" fill="none" stroke="#92bb86" stroke-width="1.25" stroke-linejoin="round"/><path d="M1566.8999999999999 480.4 V485.9" stroke="#92bb86" stroke-width="1.25"/><ellipse cx="1634.1" cy="481.8" rx="2.5" ry="3.6" fill="none" stroke="#92bb86" stroke-width="1.25"/><path d="M1634.1 485.40000000000003 V492.3" stroke="#92bb86" stroke-width="1.25"/><path d="M1626.5 478.0 L1629.1 486.8 H1623.9 Z" fill="none" stroke="#92bb86" stroke-width="1.25" stroke-linejoin="round"/><path d="M1626.5 486.8 V492.3" stroke="#92bb86" stroke-width="1.25"/><ellipse cx="1688.6" cy="474.2" rx="2.5" ry="3.6" fill="none" stroke="#92bb86" stroke-width="1.25"/><path d="M1688.6 477.8 V484.7" stroke="#92bb86" stroke-width="1.25"/><path d="M1681.0 470.4 L1683.6 479.2 H1678.4 Z" fill="none" stroke="#92bb86" stroke-width="1.25" stroke-linejoin="round"/><path d="M1681.0 479.2 V484.7" stroke="#92bb86" stroke-width="1.25"/><ellipse cx="1731.1000000000001" cy="493.2" rx="2.5" ry="3.6" fill="none" stroke="#92bb86" stroke-width="1.25"/><path d="M1731.1000000000001 496.8 V503.7" stroke="#92bb86" stroke-width="1.25"/><path d="M1738.7 489.4 L1741.3 498.2 H1736.1000000000001 Z" fill="none" stroke="#92bb86" stroke-width="1.25" stroke-linejoin="round"/><path d="M1738.7 498.2 V503.7" stroke="#92bb86" stroke-width="1.25"/><ellipse cx="1804.5" cy="483.5" rx="2.5" ry="3.6" fill="none" stroke="#92bb86" stroke-width="1.25"/><path d="M1804.5 487.1 V494.0" stroke="#92bb86" stroke-width="1.25"/><path d="M1796.9 479.7 L1799.5 488.5 H1794.3000000000002 Z" fill="none" stroke="#92bb86" stroke-width="1.25" stroke-linejoin="round"/><path d="M1796.9 488.5 V494.0" stroke="#92bb86" stroke-width="1.25"/><ellipse cx="1833.1000000000001" cy="493.2" rx="2.5" ry="3.6" fill="none" stroke="#92bb86" stroke-width="1.25"/><path d="M1833.1000000000001 496.8 V503.7" stroke="#92bb86" stroke-width="1.25"/><path d="M1840.7 489.4 L1843.3 498.2 H1838.1000000000001 Z" fill="none" stroke="#92bb86" stroke-width="1.25" stroke-linejoin="round"/><path d="M1840.7 498.2 V503.7" stroke="#92bb86" stroke-width="1.25"/><ellipse cx="1896.3999999999999" cy="474.4" rx="2.5" ry="3.6" fill="none" stroke="#92bb86" stroke-width="1.25"/><path d="M1896.3999999999999 478.0 V484.9" stroke="#92bb86" stroke-width="1.25"/><path d="M1888.8 470.59999999999997 L1891.3999999999999 479.4 H1886.2 Z" fill="none" stroke="#92bb86" stroke-width="1.25" stroke-linejoin="round"/><path d="M1888.8 479.4 V484.9" stroke="#92bb86" stroke-width="1.25"/><ellipse cx="1960.7" cy="482.4" rx="2.5" ry="3.6" fill="none" stroke="#92bb86" stroke-width="1.25"/><path d="M1960.7 486.0 V492.9" stroke="#92bb86" stroke-width="1.25"/><path d="M1953.1000000000001 478.59999999999997 L1955.7 487.4 H1950.5000000000002 Z" fill="none" stroke="#92bb86" stroke-width="1.25" stroke-linejoin="round"/><path d="M1953.1000000000001 487.4 V492.9" stroke="#92bb86" stroke-width="1.25"/><ellipse cx="475.5" cy="540.5" rx="2.5" ry="3.6" fill="none" stroke="#92bb86" stroke-width="1.25"/><path d="M475.5 544.1 V551.0" stroke="#92bb86" stroke-width="1.25"/><path d="M467.9 536.7 L470.5 545.5 H465.29999999999995 Z" fill="none" stroke="#92bb86" stroke-width="1.25" stroke-linejoin="round"/><path d="M467.9 545.5 V551.0" stroke="#92bb86" stroke-width="1.25"/><ellipse cx="511.8" cy="528.8" rx="2.5" ry="3.6" fill="none" stroke="#92bb86" stroke-width="1.25"/><path d="M511.8 532.4 V539.3" stroke="#92bb86" stroke-width="1.25"/><path d="M504.2 525.0 L506.8 533.8 H501.59999999999997 Z" fill="none" stroke="#92bb86" stroke-width="1.25" stroke-linejoin="round"/><path d="M504.2 533.8 V539.3" stroke="#92bb86" stroke-width="1.25"/><ellipse cx="576.3000000000001" cy="526.0" rx="2.5" ry="3.6" fill="none" stroke="#92bb86" stroke-width="1.25"/><path d="M576.3000000000001 529.6 V536.5" stroke="#92bb86" stroke-width="1.25"/><path d="M583.9 522.2 L586.5 531.0 H581.3 Z" fill="none" stroke="#92bb86" stroke-width="1.25" stroke-linejoin="round"/><path d="M583.9 531.0 V536.5" stroke="#92bb86" stroke-width="1.25"/><ellipse cx="639.5" cy="532.1" rx="2.5" ry="3.6" fill="none" stroke="#92bb86" stroke-width="1.25"/><path d="M639.5 535.7 V542.6" stroke="#92bb86" stroke-width="1.25"/><path d="M631.9000000000001 528.3000000000001 L634.5000000000001 537.1 H629.3000000000001 Z" fill="none" stroke="#92bb86" stroke-width="1.25" stroke-linejoin="round"/><path d="M631.9000000000001 537.1 V542.6" stroke="#92bb86" stroke-width="1.25"/><ellipse cx="692.4000000000001" cy="528.2" rx="2.5" ry="3.6" fill="none" stroke="#92bb86" stroke-width="1.25"/><path d="M692.4000000000001 531.8000000000001 V538.7" stroke="#92bb86" stroke-width="1.25"/><path d="M700.0 524.4000000000001 L702.6 533.2 H697.4 Z" fill="none" stroke="#92bb86" stroke-width="1.25" stroke-linejoin="round"/><path d="M700.0 533.2 V538.7" stroke="#92bb86" stroke-width="1.25"/><ellipse cx="725.7" cy="526.4" rx="2.5" ry="3.6" fill="none" stroke="#92bb86" stroke-width="1.25"/><path d="M725.7 530.0 V536.9" stroke="#92bb86" stroke-width="1.25"/><path d="M733.3 522.6 L735.9 531.4 H730.6999999999999 Z" fill="none" stroke="#92bb86" stroke-width="1.25" stroke-linejoin="round"/><path d="M733.3 531.4 V536.9" stroke="#92bb86" stroke-width="1.25"/><ellipse cx="789.0999999999999" cy="541.0" rx="2.5" ry="3.6" fill="none" stroke="#92bb86" stroke-width="1.25"/><path d="M789.0999999999999 544.6 V551.5" stroke="#92bb86" stroke-width="1.25"/><path d="M781.5 537.2 L784.1 546.0 H778.9 Z" fill="none" stroke="#92bb86" stroke-width="1.25" stroke-linejoin="round"/><path d="M781.5 546.0 V551.5" stroke="#92bb86" stroke-width="1.25"/><ellipse cx="840.0" cy="526.5" rx="2.5" ry="3.6" fill="none" stroke="#92bb86" stroke-width="1.25"/><path d="M840.0 530.1 V537.0" stroke="#92bb86" stroke-width="1.25"/><path d="M832.4000000000001 522.7 L835.0000000000001 531.5 H829.8000000000001 Z" fill="none" stroke="#92bb86" stroke-width="1.25" stroke-linejoin="round"/><path d="M832.4000000000001 531.5 V537.0" stroke="#92bb86" stroke-width="1.25"/><ellipse cx="907.4" cy="541.0" rx="2.5" ry="3.6" fill="none" stroke="#92bb86" stroke-width="1.25"/><path d="M907.4 544.6 V551.5" stroke="#92bb86" stroke-width="1.25"/><path d="M899.8000000000001 537.2 L902.4000000000001 546.0 H897.2 Z" fill="none" stroke="#92bb86" stroke-width="1.25" stroke-linejoin="round"/><path d="M899.8000000000001 546.0 V551.5" stroke="#92bb86" stroke-width="1.25"/><ellipse cx="946.2" cy="526.3" rx="2.5" ry="3.6" fill="none" stroke="#92bb86" stroke-width="1.25"/><path d="M946.2 529.9 V536.8" stroke="#92bb86" stroke-width="1.25"/><path d="M953.8 522.5 L956.4 531.3 H951.1999999999999 Z" fill="none" stroke="#92bb86" stroke-width="1.25" stroke-linejoin="round"/><path d="M953.8 531.3 V536.8" stroke="#92bb86" stroke-width="1.25"/><ellipse cx="1000.8" cy="523.0" rx="2.5" ry="3.6" fill="none" stroke="#92bb86" stroke-width="1.25"/><path d="M1000.8 526.6 V533.5" stroke="#92bb86" stroke-width="1.25"/><path d="M993.2 519.2 L995.8000000000001 528.0 H990.6 Z" fill="none" stroke="#92bb86" stroke-width="1.25" stroke-linejoin="round"/><path d="M993.2 528.0 V533.5" stroke="#92bb86" stroke-width="1.25"/><ellipse cx="1054.2" cy="540.0" rx="2.5" ry="3.6" fill="none" stroke="#92bb86" stroke-width="1.25"/><path d="M1054.2 543.6 V550.5" stroke="#92bb86" stroke-width="1.25"/><path d="M1061.8 536.2 L1064.3999999999999 545.0 H1059.2 Z" fill="none" stroke="#92bb86" stroke-width="1.25" stroke-linejoin="round"/><path d="M1061.8 545.0 V550.5" stroke="#92bb86" stroke-width="1.25"/><ellipse cx="1117.7" cy="542.0" rx="2.5" ry="3.6" fill="none" stroke="#92bb86" stroke-width="1.25"/><path d="M1117.7 545.6 V552.5" stroke="#92bb86" stroke-width="1.25"/><path d="M1125.3 538.2 L1127.8999999999999 547.0 H1122.7 Z" fill="none" stroke="#92bb86" stroke-width="1.25" stroke-linejoin="round"/><path d="M1125.3 547.0 V552.5" stroke="#92bb86" stroke-width="1.25"/><ellipse cx="1160.4" cy="525.7" rx="2.5" ry="3.6" fill="none" stroke="#92bb86" stroke-width="1.25"/><path d="M1160.4 529.3000000000001 V536.2" stroke="#92bb86" stroke-width="1.25"/><path d="M1168.0 521.9000000000001 L1170.6 530.7 H1165.4 Z" fill="none" stroke="#92bb86" stroke-width="1.25" stroke-linejoin="round"/><path d="M1168.0 530.7 V536.2" stroke="#92bb86" stroke-width="1.25"/><ellipse cx="1226.1000000000001" cy="522.6" rx="2.5" ry="3.6" fill="none" stroke="#92bb86" stroke-width="1.25"/><path d="M1226.1000000000001 526.2 V533.1" stroke="#92bb86" stroke-width="1.25"/><path d="M1233.7 518.8000000000001 L1236.3 527.6 H1231.1000000000001 Z" fill="none" stroke="#92bb86" stroke-width="1.25" stroke-linejoin="round"/><path d="M1233.7 527.6 V533.1" stroke="#92bb86" stroke-width="1.25"/><ellipse cx="1277.3999999999999" cy="529.5" rx="2.5" ry="3.6" fill="none" stroke="#92bb86" stroke-width="1.25"/><path d="M1277.3999999999999 533.1 V540.0" stroke="#92bb86" stroke-width="1.25"/><path d="M1269.8 525.7 L1272.3999999999999 534.5 H1267.2 Z" fill="none" stroke="#92bb86" stroke-width="1.25" stroke-linejoin="round"/><path d="M1269.8 534.5 V540.0" stroke="#92bb86" stroke-width="1.25"/><ellipse cx="1325.5" cy="522.1" rx="2.5" ry="3.6" fill="none" stroke="#92bb86" stroke-width="1.25"/><path d="M1325.5 525.7 V532.6" stroke="#92bb86" stroke-width="1.25"/><path d="M1317.9 518.3000000000001 L1320.5 527.1 H1315.3000000000002 Z" fill="none" stroke="#92bb86" stroke-width="1.25" stroke-linejoin="round"/><path d="M1317.9 527.1 V532.6" stroke="#92bb86" stroke-width="1.25"/><ellipse cx="1384.6" cy="541.1" rx="2.5" ry="3.6" fill="none" stroke="#92bb86" stroke-width="1.25"/><path d="M1384.6 544.7 V551.6" stroke="#92bb86" stroke-width="1.25"/><path d="M1377.0 537.3000000000001 L1379.6 546.1 H1374.4 Z" fill="none" stroke="#92bb86" stroke-width="1.25" stroke-linejoin="round"/><path d="M1377.0 546.1 V551.6" stroke="#92bb86" stroke-width="1.25"/><ellipse cx="1455.8" cy="526.1" rx="2.5" ry="3.6" fill="none" stroke="#92bb86" stroke-width="1.25"/><path d="M1455.8 529.7 V536.6" stroke="#92bb86" stroke-width="1.25"/><path d="M1448.2 522.3000000000001 L1450.8 531.1 H1445.6000000000001 Z" fill="none" stroke="#92bb86" stroke-width="1.25" stroke-linejoin="round"/><path d="M1448.2 531.1 V536.6" stroke="#92bb86" stroke-width="1.25"/><ellipse cx="1505.8" cy="538.4" rx="2.5" ry="3.6" fill="none" stroke="#92bb86" stroke-width="1.25"/><path d="M1505.8 542.0 V548.9" stroke="#92bb86" stroke-width="1.25"/><path d="M1498.2 534.6 L1500.8 543.4 H1495.6000000000001 Z" fill="none" stroke="#92bb86" stroke-width="1.25" stroke-linejoin="round"/><path d="M1498.2 543.4 V548.9" stroke="#92bb86" stroke-width="1.25"/><ellipse cx="1538.2" cy="531.5" rx="2.5" ry="3.6" fill="none" stroke="#92bb86" stroke-width="1.25"/><path d="M1538.2 535.1 V542.0" stroke="#92bb86" stroke-width="1.25"/><path d="M1530.6000000000001 527.7 L1533.2 536.5 H1528.0000000000002 Z" fill="none" stroke="#92bb86" stroke-width="1.25" stroke-linejoin="round"/><path d="M1530.6000000000001 536.5 V542.0" stroke="#92bb86" stroke-width="1.25"/><ellipse cx="1616.5" cy="525.9" rx="2.5" ry="3.6" fill="none" stroke="#92bb86" stroke-width="1.25"/><path d="M1616.5 529.5 V536.4" stroke="#92bb86" stroke-width="1.25"/><path d="M1608.9 522.1 L1611.5 530.9 H1606.3000000000002 Z" fill="none" stroke="#92bb86" stroke-width="1.25" stroke-linejoin="round"/><path d="M1608.9 530.9 V536.4" stroke="#92bb86" stroke-width="1.25"/><ellipse cx="1669.8999999999999" cy="522.6" rx="2.5" ry="3.6" fill="none" stroke="#92bb86" stroke-width="1.25"/><path d="M1669.8999999999999 526.2 V533.1" stroke="#92bb86" stroke-width="1.25"/><path d="M1662.3 518.8000000000001 L1664.8999999999999 527.6 H1659.7 Z" fill="none" stroke="#92bb86" stroke-width="1.25" stroke-linejoin="round"/><path d="M1662.3 527.6 V533.1" stroke="#92bb86" stroke-width="1.25"/><ellipse cx="1721.5" cy="537.3" rx="2.5" ry="3.6" fill="none" stroke="#92bb86" stroke-width="1.25"/><path d="M1721.5 540.9 V547.8" stroke="#92bb86" stroke-width="1.25"/><path d="M1713.9 533.5 L1716.5 542.3 H1711.3000000000002 Z" fill="none" stroke="#92bb86" stroke-width="1.25" stroke-linejoin="round"/><path d="M1713.9 542.3 V547.8" stroke="#92bb86" stroke-width="1.25"/><ellipse cx="1746.2" cy="523.3" rx="2.5" ry="3.6" fill="none" stroke="#92bb86" stroke-width="1.25"/><path d="M1746.2 526.9 V533.8" stroke="#92bb86" stroke-width="1.25"/><path d="M1753.8 519.5 L1756.3999999999999 528.3 H1751.2 Z" fill="none" stroke="#92bb86" stroke-width="1.25" stroke-linejoin="round"/><path d="M1753.8 528.3 V533.8" stroke="#92bb86" stroke-width="1.25"/><ellipse cx="1806.4" cy="536.9" rx="2.5" ry="3.6" fill="none" stroke="#92bb86" stroke-width="1.25"/><path d="M1806.4 540.5 V547.4" stroke="#92bb86" stroke-width="1.25"/><path d="M1814.0 533.1 L1816.6 541.9 H1811.4 Z" fill="none" stroke="#92bb86" stroke-width="1.25" stroke-linejoin="round"/><path d="M1814.0 541.9 V547.4" stroke="#92bb86" stroke-width="1.25"/><ellipse cx="1862.7" cy="527.4" rx="2.5" ry="3.6" fill="none" stroke="#92bb86" stroke-width="1.25"/><path d="M1862.7 531.0 V537.9" stroke="#92bb86" stroke-width="1.25"/><path d="M1870.3 523.6 L1872.8999999999999 532.4 H1867.7 Z" fill="none" stroke="#92bb86" stroke-width="1.25" stroke-linejoin="round"/><path d="M1870.3 532.4 V537.9" stroke="#92bb86" stroke-width="1.25"/><ellipse cx="1924.5" cy="527.2" rx="2.5" ry="3.6" fill="none" stroke="#92bb86" stroke-width="1.25"/><path d="M1924.5 530.8000000000001 V537.7" stroke="#92bb86" stroke-width="1.25"/><path d="M1932.1 523.4000000000001 L1934.6999999999998 532.2 H1929.5 Z" fill="none" stroke="#92bb86" stroke-width="1.25" stroke-linejoin="round"/><path d="M1932.1 532.2 V537.7" stroke="#92bb86" stroke-width="1.25"/><ellipse cx="1977.7" cy="527.5" rx="2.5" ry="3.6" fill="none" stroke="#92bb86" stroke-width="1.25"/><path d="M1977.7 531.1 V538.0" stroke="#92bb86" stroke-width="1.25"/><path d="M1970.1000000000001 523.7 L1972.7 532.5 H1967.5000000000002 Z" fill="none" stroke="#92bb86" stroke-width="1.25" stroke-linejoin="round"/><path d="M1970.1000000000001 532.5 V538.0" stroke="#92bb86" stroke-width="1.25"/><ellipse cx="443.4" cy="588.3" rx="2.5" ry="3.6" fill="none" stroke="#92bb86" stroke-width="1.25"/><path d="M443.4 591.9 V598.8" stroke="#92bb86" stroke-width="1.25"/><path d="M451.0 584.5 L453.6 593.3 H448.4 Z" fill="none" stroke="#92bb86" stroke-width="1.25" stroke-linejoin="round"/><path d="M451.0 593.3 V598.8" stroke="#92bb86" stroke-width="1.25"/><ellipse cx="510.2" cy="570.5" rx="2.5" ry="3.6" fill="none" stroke="#92bb86" stroke-width="1.25"/><path d="M510.2 574.1 V581.0" stroke="#92bb86" stroke-width="1.25"/><path d="M502.59999999999997 566.7 L505.2 575.5 H499.99999999999994 Z" fill="none" stroke="#92bb86" stroke-width="1.25" stroke-linejoin="round"/><path d="M502.59999999999997 575.5 V581.0" stroke="#92bb86" stroke-width="1.25"/><ellipse cx="543.5" cy="589.1" rx="2.5" ry="3.6" fill="none" stroke="#92bb86" stroke-width="1.25"/><path d="M543.5 592.7 V599.6" stroke="#92bb86" stroke-width="1.25"/><path d="M551.0999999999999 585.3000000000001 L553.6999999999999 594.1 H548.4999999999999 Z" fill="none" stroke="#92bb86" stroke-width="1.25" stroke-linejoin="round"/><path d="M551.0999999999999 594.1 V599.6" stroke="#92bb86" stroke-width="1.25"/><ellipse cx="602.5999999999999" cy="575.0" rx="2.5" ry="3.6" fill="none" stroke="#92bb86" stroke-width="1.25"/><path d="M602.5999999999999 578.6 V585.5" stroke="#92bb86" stroke-width="1.25"/><path d="M595.0 571.2 L597.6 580.0 H592.4 Z" fill="none" stroke="#92bb86" stroke-width="1.25" stroke-linejoin="round"/><path d="M595.0 580.0 V585.5" stroke="#92bb86" stroke-width="1.25"/><ellipse cx="659.5999999999999" cy="588.6" rx="2.5" ry="3.6" fill="none" stroke="#92bb86" stroke-width="1.25"/><path d="M659.5999999999999 592.2 V599.1" stroke="#92bb86" stroke-width="1.25"/><path d="M652.0 584.8000000000001 L654.6 593.6 H649.4 Z" fill="none" stroke="#92bb86" stroke-width="1.25" stroke-linejoin="round"/><path d="M652.0 593.6 V599.1" stroke="#92bb86" stroke-width="1.25"/><ellipse cx="714.7" cy="584.8" rx="2.5" ry="3.6" fill="none" stroke="#92bb86" stroke-width="1.25"/><path d="M714.7 588.4 V595.3" stroke="#92bb86" stroke-width="1.25"/><path d="M722.3 581.0 L724.9 589.8 H719.6999999999999 Z" fill="none" stroke="#92bb86" stroke-width="1.25" stroke-linejoin="round"/><path d="M722.3 589.8 V595.3" stroke="#92bb86" stroke-width="1.25"/><ellipse cx="775.4" cy="582.1" rx="2.5" ry="3.6" fill="none" stroke="#92bb86" stroke-width="1.25"/><path d="M775.4 585.7 V592.6" stroke="#92bb86" stroke-width="1.25"/><path d="M767.8000000000001 578.3000000000001 L770.4000000000001 587.1 H765.2 Z" fill="none" stroke="#92bb86" stroke-width="1.25" stroke-linejoin="round"/><path d="M767.8000000000001 587.1 V592.6" stroke="#92bb86" stroke-width="1.25"/><ellipse cx="809.1" cy="577.2" rx="2.5" ry="3.6" fill="none" stroke="#92bb86" stroke-width="1.25"/><path d="M809.1 580.8000000000001 V587.7" stroke="#92bb86" stroke-width="1.25"/><path d="M816.6999999999999 573.4000000000001 L819.3 582.2 H814.0999999999999 Z" fill="none" stroke="#92bb86" stroke-width="1.25" stroke-linejoin="round"/><path d="M816.6999999999999 582.2 V587.7" stroke="#92bb86" stroke-width="1.25"/><ellipse cx="856.4000000000001" cy="573.9" rx="2.5" ry="3.6" fill="none" stroke="#92bb86" stroke-width="1.25"/><path d="M856.4000000000001 577.5 V584.4" stroke="#92bb86" stroke-width="1.25"/><path d="M864.0 570.1 L866.6 578.9 H861.4 Z" fill="none" stroke="#92bb86" stroke-width="1.25" stroke-linejoin="round"/><path d="M864.0 578.9 V584.4" stroke="#92bb86" stroke-width="1.25"/><ellipse cx="922.6999999999999" cy="571.3" rx="2.5" ry="3.6" fill="none" stroke="#92bb86" stroke-width="1.25"/><path d="M922.6999999999999 574.9 V581.8" stroke="#92bb86" stroke-width="1.25"/><path d="M915.1 567.5 L917.7 576.3 H912.5 Z" fill="none" stroke="#92bb86" stroke-width="1.25" stroke-linejoin="round"/><path d="M915.1 576.3 V581.8" stroke="#92bb86" stroke-width="1.25"/><ellipse cx="977.7" cy="576.5" rx="2.5" ry="3.6" fill="none" stroke="#92bb86" stroke-width="1.25"/><path d="M977.7 580.1 V587.0" stroke="#92bb86" stroke-width="1.25"/><path d="M985.3 572.7 L987.9 581.5 H982.6999999999999 Z" fill="none" stroke="#92bb86" stroke-width="1.25" stroke-linejoin="round"/><path d="M985.3 581.5 V587.0" stroke="#92bb86" stroke-width="1.25"/><ellipse cx="1048.5" cy="589.8" rx="2.5" ry="3.6" fill="none" stroke="#92bb86" stroke-width="1.25"/><path d="M1048.5 593.4 V600.3" stroke="#92bb86" stroke-width="1.25"/><path d="M1040.9 586.0 L1043.5 594.8 H1038.3000000000002 Z" fill="none" stroke="#92bb86" stroke-width="1.25" stroke-linejoin="round"/><path d="M1040.9 594.8 V600.3" stroke="#92bb86" stroke-width="1.25"/><ellipse cx="1080.2" cy="571.9" rx="2.5" ry="3.6" fill="none" stroke="#92bb86" stroke-width="1.25"/><path d="M1080.2 575.5 V582.4" stroke="#92bb86" stroke-width="1.25"/><path d="M1072.6000000000001 568.1 L1075.2 576.9 H1070.0000000000002 Z" fill="none" stroke="#92bb86" stroke-width="1.25" stroke-linejoin="round"/><path d="M1072.6000000000001 576.9 V582.4" stroke="#92bb86" stroke-width="1.25"/><ellipse cx="1151.7" cy="578.9" rx="2.5" ry="3.6" fill="none" stroke="#92bb86" stroke-width="1.25"/><path d="M1151.7 582.5 V589.4" stroke="#92bb86" stroke-width="1.25"/><path d="M1144.1000000000001 575.1 L1146.7 583.9 H1141.5000000000002 Z" fill="none" stroke="#92bb86" stroke-width="1.25" stroke-linejoin="round"/><path d="M1144.1000000000001 583.9 V589.4" stroke="#92bb86" stroke-width="1.25"/><ellipse cx="1189.9" cy="582.4" rx="2.5" ry="3.6" fill="none" stroke="#92bb86" stroke-width="1.25"/><path d="M1189.9 586.0 V592.9" stroke="#92bb86" stroke-width="1.25"/><path d="M1197.5 578.6 L1200.1 587.4 H1194.9 Z" fill="none" stroke="#92bb86" stroke-width="1.25" stroke-linejoin="round"/><path d="M1197.5 587.4 V592.9" stroke="#92bb86" stroke-width="1.25"/><ellipse cx="1253.1000000000001" cy="586.9" rx="2.5" ry="3.6" fill="none" stroke="#92bb86" stroke-width="1.25"/><path d="M1253.1000000000001 590.5 V597.4" stroke="#92bb86" stroke-width="1.25"/><path d="M1260.7 583.1 L1263.3 591.9 H1258.1000000000001 Z" fill="none" stroke="#92bb86" stroke-width="1.25" stroke-linejoin="round"/><path d="M1260.7 591.9 V597.4" stroke="#92bb86" stroke-width="1.25"/><ellipse cx="1297.2" cy="586.8" rx="2.5" ry="3.6" fill="none" stroke="#92bb86" stroke-width="1.25"/><path d="M1297.2 590.4 V597.3" stroke="#92bb86" stroke-width="1.25"/><path d="M1289.6000000000001 583.0 L1292.2 591.8 H1287.0000000000002 Z" fill="none" stroke="#92bb86" stroke-width="1.25" stroke-linejoin="round"/><path d="M1289.6000000000001 591.8 V597.3" stroke="#92bb86" stroke-width="1.25"/><ellipse cx="1356.1000000000001" cy="577.5" rx="2.5" ry="3.6" fill="none" stroke="#92bb86" stroke-width="1.25"/><path d="M1356.1000000000001 581.1 V588.0" stroke="#92bb86" stroke-width="1.25"/><path d="M1363.7 573.7 L1366.3 582.5 H1361.1000000000001 Z" fill="none" stroke="#92bb86" stroke-width="1.25" stroke-linejoin="round"/><path d="M1363.7 582.5 V588.0" stroke="#92bb86" stroke-width="1.25"/><ellipse cx="1407.3999999999999" cy="574.9" rx="2.5" ry="3.6" fill="none" stroke="#92bb86" stroke-width="1.25"/><path d="M1407.3999999999999 578.5 V585.4" stroke="#92bb86" stroke-width="1.25"/><path d="M1399.8 571.1 L1402.3999999999999 579.9 H1397.2 Z" fill="none" stroke="#92bb86" stroke-width="1.25" stroke-linejoin="round"/><path d="M1399.8 579.9 V585.4" stroke="#92bb86" stroke-width="1.25"/><ellipse cx="1452.5" cy="587.7" rx="2.5" ry="3.6" fill="none" stroke="#92bb86" stroke-width="1.25"/><path d="M1452.5 591.3000000000001 V598.2" stroke="#92bb86" stroke-width="1.25"/><path d="M1460.1 583.9000000000001 L1462.6999999999998 592.7 H1457.5 Z" fill="none" stroke="#92bb86" stroke-width="1.25" stroke-linejoin="round"/><path d="M1460.1 592.7 V598.2" stroke="#92bb86" stroke-width="1.25"/><ellipse cx="1511.3" cy="577.9" rx="2.5" ry="3.6" fill="none" stroke="#92bb86" stroke-width="1.25"/><path d="M1511.3 581.5 V588.4" stroke="#92bb86" stroke-width="1.25"/><path d="M1518.8999999999999 574.1 L1521.4999999999998 582.9 H1516.3 Z" fill="none" stroke="#92bb86" stroke-width="1.25" stroke-linejoin="round"/><path d="M1518.8999999999999 582.9 V588.4" stroke="#92bb86" stroke-width="1.25"/><ellipse cx="1570.4" cy="574.6" rx="2.5" ry="3.6" fill="none" stroke="#92bb86" stroke-width="1.25"/><path d="M1570.4 578.2 V585.1" stroke="#92bb86" stroke-width="1.25"/><path d="M1578.0 570.8000000000001 L1580.6 579.6 H1575.4 Z" fill="none" stroke="#92bb86" stroke-width="1.25" stroke-linejoin="round"/><path d="M1578.0 579.6 V585.1" stroke="#92bb86" stroke-width="1.25"/><ellipse cx="1636.1" cy="589.8" rx="2.5" ry="3.6" fill="none" stroke="#92bb86" stroke-width="1.25"/><path d="M1636.1 593.4 V600.3" stroke="#92bb86" stroke-width="1.25"/><path d="M1628.5 586.0 L1631.1 594.8 H1625.9 Z" fill="none" stroke="#92bb86" stroke-width="1.25" stroke-linejoin="round"/><path d="M1628.5 594.8 V600.3" stroke="#92bb86" stroke-width="1.25"/><ellipse cx="1677.5" cy="586.4" rx="2.5" ry="3.6" fill="none" stroke="#92bb86" stroke-width="1.25"/><path d="M1677.5 590.0 V596.9" stroke="#92bb86" stroke-width="1.25"/><path d="M1685.1 582.6 L1687.6999999999998 591.4 H1682.5 Z" fill="none" stroke="#92bb86" stroke-width="1.25" stroke-linejoin="round"/><path d="M1685.1 591.4 V596.9" stroke="#92bb86" stroke-width="1.25"/><ellipse cx="1751.3999999999999" cy="570.8" rx="2.5" ry="3.6" fill="none" stroke="#92bb86" stroke-width="1.25"/><path d="M1751.3999999999999 574.4 V581.3" stroke="#92bb86" stroke-width="1.25"/><path d="M1743.8 567.0 L1746.3999999999999 575.8 H1741.2 Z" fill="none" stroke="#92bb86" stroke-width="1.25" stroke-linejoin="round"/><path d="M1743.8 575.8 V581.3" stroke="#92bb86" stroke-width="1.25"/><ellipse cx="1775.5" cy="573.8" rx="2.5" ry="3.6" fill="none" stroke="#92bb86" stroke-width="1.25"/><path d="M1775.5 577.4 V584.3" stroke="#92bb86" stroke-width="1.25"/><path d="M1783.1 570.0 L1785.6999999999998 578.8 H1780.5 Z" fill="none" stroke="#92bb86" stroke-width="1.25" stroke-linejoin="round"/><path d="M1783.1 578.8 V584.3" stroke="#92bb86" stroke-width="1.25"/><ellipse cx="1850.1" cy="588.6" rx="2.5" ry="3.6" fill="none" stroke="#92bb86" stroke-width="1.25"/><path d="M1850.1 592.2 V599.1" stroke="#92bb86" stroke-width="1.25"/><path d="M1842.5 584.8000000000001 L1845.1 593.6 H1839.9 Z" fill="none" stroke="#92bb86" stroke-width="1.25" stroke-linejoin="round"/><path d="M1842.5 593.6 V599.1" stroke="#92bb86" stroke-width="1.25"/><ellipse cx="1912.1" cy="579.0" rx="2.5" ry="3.6" fill="none" stroke="#92bb86" stroke-width="1.25"/><path d="M1912.1 582.6 V589.5" stroke="#92bb86" stroke-width="1.25"/><path d="M1904.5 575.2 L1907.1 584.0 H1901.9 Z" fill="none" stroke="#92bb86" stroke-width="1.25" stroke-linejoin="round"/><path d="M1904.5 584.0 V589.5" stroke="#92bb86" stroke-width="1.25"/><ellipse cx="1963.6" cy="588.9" rx="2.5" ry="3.6" fill="none" stroke="#92bb86" stroke-width="1.25"/><path d="M1963.6 592.5 V599.4" stroke="#92bb86" stroke-width="1.25"/><path d="M1956.0 585.1 L1958.6 593.9 H1953.4 Z" fill="none" stroke="#92bb86" stroke-width="1.25" stroke-linejoin="round"/><path d="M1956.0 593.9 V599.4" stroke="#92bb86" stroke-width="1.25"/><ellipse cx="473.5" cy="630.4" rx="2.5" ry="3.6" fill="none" stroke="#92bb86" stroke-width="1.25"/><path d="M473.5 634.0 V640.9" stroke="#92bb86" stroke-width="1.25"/><path d="M465.9 626.6 L468.5 635.4 H463.29999999999995 Z" fill="none" stroke="#92bb86" stroke-width="1.25" stroke-linejoin="round"/><path d="M465.9 635.4 V640.9" stroke="#92bb86" stroke-width="1.25"/><ellipse cx="521.1" cy="620.8" rx="2.5" ry="3.6" fill="none" stroke="#92bb86" stroke-width="1.25"/><path d="M521.1 624.4 V631.3" stroke="#92bb86" stroke-width="1.25"/><path d="M513.5 617.0 L516.1 625.8 H510.9 Z" fill="none" stroke="#92bb86" stroke-width="1.25" stroke-linejoin="round"/><path d="M513.5 625.8 V631.3" stroke="#92bb86" stroke-width="1.25"/><ellipse cx="564.3000000000001" cy="630.0" rx="2.5" ry="3.6" fill="none" stroke="#92bb86" stroke-width="1.25"/><path d="M564.3000000000001 633.6 V640.5" stroke="#92bb86" stroke-width="1.25"/><path d="M571.9 626.2 L574.5 635.0 H569.3 Z" fill="none" stroke="#92bb86" stroke-width="1.25" stroke-linejoin="round"/><path d="M571.9 635.0 V640.5" stroke="#92bb86" stroke-width="1.25"/><ellipse cx="624.5" cy="618.2" rx="2.5" ry="3.6" fill="none" stroke="#92bb86" stroke-width="1.25"/><path d="M624.5 621.8000000000001 V628.7" stroke="#92bb86" stroke-width="1.25"/><path d="M616.9000000000001 614.4000000000001 L619.5000000000001 623.2 H614.3000000000001 Z" fill="none" stroke="#92bb86" stroke-width="1.25" stroke-linejoin="round"/><path d="M616.9000000000001 623.2 V628.7" stroke="#92bb86" stroke-width="1.25"/><ellipse cx="691.8" cy="621.7" rx="2.5" ry="3.6" fill="none" stroke="#92bb86" stroke-width="1.25"/><path d="M691.8 625.3000000000001 V632.2" stroke="#92bb86" stroke-width="1.25"/><path d="M684.2 617.9000000000001 L686.8000000000001 626.7 H681.6 Z" fill="none" stroke="#92bb86" stroke-width="1.25" stroke-linejoin="round"/><path d="M684.2 626.7 V632.2" stroke="#92bb86" stroke-width="1.25"/><ellipse cx="724.9000000000001" cy="633.9" rx="2.5" ry="3.6" fill="none" stroke="#92bb86" stroke-width="1.25"/><path d="M724.9000000000001 637.5 V644.4" stroke="#92bb86" stroke-width="1.25"/><path d="M732.5 630.1 L735.1 638.9 H729.9 Z" fill="none" stroke="#92bb86" stroke-width="1.25" stroke-linejoin="round"/><path d="M732.5 638.9 V644.4" stroke="#92bb86" stroke-width="1.25"/><ellipse cx="782.5999999999999" cy="620.0" rx="2.5" ry="3.6" fill="none" stroke="#92bb86" stroke-width="1.25"/><path d="M782.5999999999999 623.6 V630.5" stroke="#92bb86" stroke-width="1.25"/><path d="M775.0 616.2 L777.6 625.0 H772.4 Z" fill="none" stroke="#92bb86" stroke-width="1.25" stroke-linejoin="round"/><path d="M775.0 625.0 V630.5" stroke="#92bb86" stroke-width="1.25"/><ellipse cx="850.1999999999999" cy="630.8" rx="2.5" ry="3.6" fill="none" stroke="#92bb86" stroke-width="1.25"/><path d="M850.1999999999999 634.4 V641.3" stroke="#92bb86" stroke-width="1.25"/><path d="M842.6 627.0 L845.2 635.8 H840.0 Z" fill="none" stroke="#92bb86" stroke-width="1.25" stroke-linejoin="round"/><path d="M842.6 635.8 V641.3" stroke="#92bb86" stroke-width="1.25"/><ellipse cx="893.4" cy="631.9" rx="2.5" ry="3.6" fill="none" stroke="#92bb86" stroke-width="1.25"/><path d="M893.4 635.5 V642.4" stroke="#92bb86" stroke-width="1.25"/><path d="M885.8000000000001 628.1 L888.4000000000001 636.9 H883.2 Z" fill="none" stroke="#92bb86" stroke-width="1.25" stroke-linejoin="round"/><path d="M885.8000000000001 636.9 V642.4" stroke="#92bb86" stroke-width="1.25"/><ellipse cx="943.1" cy="624.2" rx="2.5" ry="3.6" fill="none" stroke="#92bb86" stroke-width="1.25"/><path d="M943.1 627.8000000000001 V634.7" stroke="#92bb86" stroke-width="1.25"/><path d="M950.6999999999999 620.4000000000001 L953.3 629.2 H948.0999999999999 Z" fill="none" stroke="#92bb86" stroke-width="1.25" stroke-linejoin="round"/><path d="M950.6999999999999 629.2 V634.7" stroke="#92bb86" stroke-width="1.25"/><ellipse cx="1005.5" cy="629.3" rx="2.5" ry="3.6" fill="none" stroke="#92bb86" stroke-width="1.25"/><path d="M1005.5 632.9 V639.8" stroke="#92bb86" stroke-width="1.25"/><path d="M997.9000000000001 625.5 L1000.5000000000001 634.3 H995.3000000000001 Z" fill="none" stroke="#92bb86" stroke-width="1.25" stroke-linejoin="round"/><path d="M997.9000000000001 634.3 V639.8" stroke="#92bb86" stroke-width="1.25"/><ellipse cx="1054.9" cy="635.3" rx="2.5" ry="3.6" fill="none" stroke="#92bb86" stroke-width="1.25"/><path d="M1054.9 638.9 V645.8" stroke="#92bb86" stroke-width="1.25"/><path d="M1062.5 631.5 L1065.1 640.3 H1059.9 Z" fill="none" stroke="#92bb86" stroke-width="1.25" stroke-linejoin="round"/><path d="M1062.5 640.3 V645.8" stroke="#92bb86" stroke-width="1.25"/><ellipse cx="1107.4" cy="621.9" rx="2.5" ry="3.6" fill="none" stroke="#92bb86" stroke-width="1.25"/><path d="M1107.4 625.5 V632.4" stroke="#92bb86" stroke-width="1.25"/><path d="M1115.0 618.1 L1117.6 626.9 H1112.4 Z" fill="none" stroke="#92bb86" stroke-width="1.25" stroke-linejoin="round"/><path d="M1115.0 626.9 V632.4" stroke="#92bb86" stroke-width="1.25"/><ellipse cx="1156.9" cy="618.1" rx="2.5" ry="3.6" fill="none" stroke="#92bb86" stroke-width="1.25"/><path d="M1156.9 621.7 V628.6" stroke="#92bb86" stroke-width="1.25"/><path d="M1164.5 614.3000000000001 L1167.1 623.1 H1161.9 Z" fill="none" stroke="#92bb86" stroke-width="1.25" stroke-linejoin="round"/><path d="M1164.5 623.1 V628.6" stroke="#92bb86" stroke-width="1.25"/><ellipse cx="1224.7" cy="634.4" rx="2.5" ry="3.6" fill="none" stroke="#92bb86" stroke-width="1.25"/><path d="M1224.7 638.0 V644.9" stroke="#92bb86" stroke-width="1.25"/><path d="M1217.1000000000001 630.6 L1219.7 639.4 H1214.5000000000002 Z" fill="none" stroke="#92bb86" stroke-width="1.25" stroke-linejoin="round"/><path d="M1217.1000000000001 639.4 V644.9" stroke="#92bb86" stroke-width="1.25"/><ellipse cx="1291.5" cy="627.2" rx="2.5" ry="3.6" fill="none" stroke="#92bb86" stroke-width="1.25"/><path d="M1291.5 630.8000000000001 V637.7" stroke="#92bb86" stroke-width="1.25"/><path d="M1283.9 623.4000000000001 L1286.5 632.2 H1281.3000000000002 Z" fill="none" stroke="#92bb86" stroke-width="1.25" stroke-linejoin="round"/><path d="M1283.9 632.2 V637.7" stroke="#92bb86" stroke-width="1.25"/><ellipse cx="1313.6000000000001" cy="629.0" rx="2.5" ry="3.6" fill="none" stroke="#92bb86" stroke-width="1.25"/><path d="M1313.6000000000001 632.6 V639.5" stroke="#92bb86" stroke-width="1.25"/><path d="M1321.2 625.2 L1323.8 634.0 H1318.6000000000001 Z" fill="none" stroke="#92bb86" stroke-width="1.25" stroke-linejoin="round"/><path d="M1321.2 634.0 V639.5" stroke="#92bb86" stroke-width="1.25"/><ellipse cx="1392.7" cy="619.8" rx="2.5" ry="3.6" fill="none" stroke="#92bb86" stroke-width="1.25"/><path d="M1392.7 623.4 V630.3" stroke="#92bb86" stroke-width="1.25"/><path d="M1400.3 616.0 L1402.8999999999999 624.8 H1397.7 Z" fill="none" stroke="#92bb86" stroke-width="1.25" stroke-linejoin="round"/><path d="M1400.3 624.8 V630.3" stroke="#92bb86" stroke-width="1.25"/><ellipse cx="1439.2" cy="628.1" rx="2.5" ry="3.6" fill="none" stroke="#92bb86" stroke-width="1.25"/><path d="M1439.2 631.7 V638.6" stroke="#92bb86" stroke-width="1.25"/><path d="M1431.6000000000001 624.3000000000001 L1434.2 633.1 H1429.0000000000002 Z" fill="none" stroke="#92bb86" stroke-width="1.25" stroke-linejoin="round"/><path d="M1431.6000000000001 633.1 V638.6" stroke="#92bb86" stroke-width="1.25"/><ellipse cx="1483.1000000000001" cy="628.4" rx="2.5" ry="3.6" fill="none" stroke="#92bb86" stroke-width="1.25"/><path d="M1483.1000000000001 632.0 V638.9" stroke="#92bb86" stroke-width="1.25"/><path d="M1490.7 624.6 L1493.3 633.4 H1488.1000000000001 Z" fill="none" stroke="#92bb86" stroke-width="1.25" stroke-linejoin="round"/><path d="M1490.7 633.4 V638.9" stroke="#92bb86" stroke-width="1.25"/><ellipse cx="1532.2" cy="627.8" rx="2.5" ry="3.6" fill="none" stroke="#92bb86" stroke-width="1.25"/><path d="M1532.2 631.4 V638.3" stroke="#92bb86" stroke-width="1.25"/><path d="M1539.8 624.0 L1542.3999999999999 632.8 H1537.2 Z" fill="none" stroke="#92bb86" stroke-width="1.25" stroke-linejoin="round"/><path d="M1539.8 632.8 V638.3" stroke="#92bb86" stroke-width="1.25"/><ellipse cx="1617.8999999999999" cy="621.9" rx="2.5" ry="3.6" fill="none" stroke="#92bb86" stroke-width="1.25"/><path d="M1617.8999999999999 625.5 V632.4" stroke="#92bb86" stroke-width="1.25"/><path d="M1610.3 618.1 L1612.8999999999999 626.9 H1607.7 Z" fill="none" stroke="#92bb86" stroke-width="1.25" stroke-linejoin="round"/><path d="M1610.3 626.9 V632.4" stroke="#92bb86" stroke-width="1.25"/><ellipse cx="1671.2" cy="637.5" rx="2.5" ry="3.6" fill="none" stroke="#92bb86" stroke-width="1.25"/><path d="M1671.2 641.1 V648.0" stroke="#92bb86" stroke-width="1.25"/><path d="M1663.6000000000001 633.7 L1666.2 642.5 H1661.0000000000002 Z" fill="none" stroke="#92bb86" stroke-width="1.25" stroke-linejoin="round"/><path d="M1663.6000000000001 642.5 V648.0" stroke="#92bb86" stroke-width="1.25"/><ellipse cx="1700.3" cy="636.5" rx="2.5" ry="3.6" fill="none" stroke="#92bb86" stroke-width="1.25"/><path d="M1700.3 640.1 V647.0" stroke="#92bb86" stroke-width="1.25"/><path d="M1692.7 632.7 L1695.3 641.5 H1690.1000000000001 Z" fill="none" stroke="#92bb86" stroke-width="1.25" stroke-linejoin="round"/><path d="M1692.7 641.5 V647.0" stroke="#92bb86" stroke-width="1.25"/><ellipse cx="1770.5" cy="630.4" rx="2.5" ry="3.6" fill="none" stroke="#92bb86" stroke-width="1.25"/><path d="M1770.5 634.0 V640.9" stroke="#92bb86" stroke-width="1.25"/><path d="M1778.1 626.6 L1780.6999999999998 635.4 H1775.5 Z" fill="none" stroke="#92bb86" stroke-width="1.25" stroke-linejoin="round"/><path d="M1778.1 635.4 V640.9" stroke="#92bb86" stroke-width="1.25"/><ellipse cx="1811.3" cy="633.7" rx="2.5" ry="3.6" fill="none" stroke="#92bb86" stroke-width="1.25"/><path d="M1811.3 637.3000000000001 V644.2" stroke="#92bb86" stroke-width="1.25"/><path d="M1803.7 629.9000000000001 L1806.3 638.7 H1801.1000000000001 Z" fill="none" stroke="#92bb86" stroke-width="1.25" stroke-linejoin="round"/><path d="M1803.7 638.7 V644.2" stroke="#92bb86" stroke-width="1.25"/><ellipse cx="1864.5" cy="634.9" rx="2.5" ry="3.6" fill="none" stroke="#92bb86" stroke-width="1.25"/><path d="M1864.5 638.5 V645.4" stroke="#92bb86" stroke-width="1.25"/><path d="M1872.1 631.1 L1874.6999999999998 639.9 H1869.5 Z" fill="none" stroke="#92bb86" stroke-width="1.25" stroke-linejoin="round"/><path d="M1872.1 639.9 V645.4" stroke="#92bb86" stroke-width="1.25"/><ellipse cx="1919.8999999999999" cy="622.4" rx="2.5" ry="3.6" fill="none" stroke="#92bb86" stroke-width="1.25"/><path d="M1919.8999999999999 626.0 V632.9" stroke="#92bb86" stroke-width="1.25"/><path d="M1912.3 618.6 L1914.8999999999999 627.4 H1909.7 Z" fill="none" stroke="#92bb86" stroke-width="1.25" stroke-linejoin="round"/><path d="M1912.3 627.4 V632.9" stroke="#92bb86" stroke-width="1.25"/><ellipse cx="1983.3" cy="625.7" rx="2.5" ry="3.6" fill="none" stroke="#92bb86" stroke-width="1.25"/><path d="M1983.3 629.3000000000001 V636.2" stroke="#92bb86" stroke-width="1.25"/><path d="M1975.7 621.9000000000001 L1978.3 630.7 H1973.1000000000001 Z" fill="none" stroke="#92bb86" stroke-width="1.25" stroke-linejoin="round"/><path d="M1975.7 630.7 V636.2" stroke="#92bb86" stroke-width="1.25"/><ellipse cx="429.09999999999997" cy="680.5" rx="2.5" ry="3.6" fill="none" stroke="#92bb86" stroke-width="1.25"/><path d="M429.09999999999997 684.1 V691.0" stroke="#92bb86" stroke-width="1.25"/><path d="M436.7 676.7 L439.3 685.5 H434.09999999999997 Z" fill="none" stroke="#92bb86" stroke-width="1.25" stroke-linejoin="round"/><path d="M436.7 685.5 V691.0" stroke="#92bb86" stroke-width="1.25"/><ellipse cx="477.4" cy="677.2" rx="2.5" ry="3.6" fill="none" stroke="#92bb86" stroke-width="1.25"/><path d="M477.4 680.8000000000001 V687.7" stroke="#92bb86" stroke-width="1.25"/><path d="M485.0 673.4000000000001 L487.6 682.2 H482.4 Z" fill="none" stroke="#92bb86" stroke-width="1.25" stroke-linejoin="round"/><path d="M485.0 682.2 V687.7" stroke="#92bb86" stroke-width="1.25"/><ellipse cx="538.9" cy="682.8" rx="2.5" ry="3.6" fill="none" stroke="#92bb86" stroke-width="1.25"/><path d="M538.9 686.4 V693.3" stroke="#92bb86" stroke-width="1.25"/><path d="M531.3000000000001 679.0 L533.9000000000001 687.8 H528.7 Z" fill="none" stroke="#92bb86" stroke-width="1.25" stroke-linejoin="round"/><path d="M531.3000000000001 687.8 V693.3" stroke="#92bb86" stroke-width="1.25"/><ellipse cx="601.0" cy="677.0" rx="2.5" ry="3.6" fill="none" stroke="#92bb86" stroke-width="1.25"/><path d="M601.0 680.6 V687.5" stroke="#92bb86" stroke-width="1.25"/><path d="M608.5999999999999 673.2 L611.1999999999999 682.0 H605.9999999999999 Z" fill="none" stroke="#92bb86" stroke-width="1.25" stroke-linejoin="round"/><path d="M608.5999999999999 682.0 V687.5" stroke="#92bb86" stroke-width="1.25"/><ellipse cx="646.8000000000001" cy="674.4" rx="2.5" ry="3.6" fill="none" stroke="#92bb86" stroke-width="1.25"/><path d="M646.8000000000001 678.0 V684.9" stroke="#92bb86" stroke-width="1.25"/><path d="M654.4 670.6 L657.0 679.4 H651.8 Z" fill="none" stroke="#92bb86" stroke-width="1.25" stroke-linejoin="round"/><path d="M654.4 679.4 V684.9" stroke="#92bb86" stroke-width="1.25"/><ellipse cx="711.6999999999999" cy="679.2" rx="2.5" ry="3.6" fill="none" stroke="#92bb86" stroke-width="1.25"/><path d="M711.6999999999999 682.8000000000001 V689.7" stroke="#92bb86" stroke-width="1.25"/><path d="M704.1 675.4000000000001 L706.7 684.2 H701.5 Z" fill="none" stroke="#92bb86" stroke-width="1.25" stroke-linejoin="round"/><path d="M704.1 684.2 V689.7" stroke="#92bb86" stroke-width="1.25"/><ellipse cx="758.5" cy="666.5" rx="2.5" ry="3.6" fill="none" stroke="#92bb86" stroke-width="1.25"/><path d="M758.5 670.1 V677.0" stroke="#92bb86" stroke-width="1.25"/><path d="M766.0999999999999 662.7 L768.6999999999999 671.5 H763.4999999999999 Z" fill="none" stroke="#92bb86" stroke-width="1.25" stroke-linejoin="round"/><path d="M766.0999999999999 671.5 V677.0" stroke="#92bb86" stroke-width="1.25"/><ellipse cx="813.9000000000001" cy="670.7" rx="2.5" ry="3.6" fill="none" stroke="#92bb86" stroke-width="1.25"/><path d="M813.9000000000001 674.3000000000001 V681.2" stroke="#92bb86" stroke-width="1.25"/><path d="M821.5 666.9000000000001 L824.1 675.7 H818.9 Z" fill="none" stroke="#92bb86" stroke-width="1.25" stroke-linejoin="round"/><path d="M821.5 675.7 V681.2" stroke="#92bb86" stroke-width="1.25"/><ellipse cx="883.5999999999999" cy="675.2" rx="2.5" ry="3.6" fill="none" stroke="#92bb86" stroke-width="1.25"/><path d="M883.5999999999999 678.8000000000001 V685.7" stroke="#92bb86" stroke-width="1.25"/><path d="M876.0 671.4000000000001 L878.6 680.2 H873.4 Z" fill="none" stroke="#92bb86" stroke-width="1.25" stroke-linejoin="round"/><path d="M876.0 680.2 V685.7" stroke="#92bb86" stroke-width="1.25"/><ellipse cx="929.0999999999999" cy="668.1" rx="2.5" ry="3.6" fill="none" stroke="#92bb86" stroke-width="1.25"/><path d="M929.0999999999999 671.7 V678.6" stroke="#92bb86" stroke-width="1.25"/><path d="M921.5 664.3000000000001 L924.1 673.1 H918.9 Z" fill="none" stroke="#92bb86" stroke-width="1.25" stroke-linejoin="round"/><path d="M921.5 673.1 V678.6" stroke="#92bb86" stroke-width="1.25"/><ellipse cx="981.9" cy="667.8" rx="2.5" ry="3.6" fill="none" stroke="#92bb86" stroke-width="1.25"/><path d="M981.9 671.4 V678.3" stroke="#92bb86" stroke-width="1.25"/><path d="M974.3000000000001 664.0 L976.9000000000001 672.8 H971.7 Z" fill="none" stroke="#92bb86" stroke-width="1.25" stroke-linejoin="round"/><path d="M974.3000000000001 672.8 V678.3" stroke="#92bb86" stroke-width="1.25"/><ellipse cx="1030.5" cy="666.8" rx="2.5" ry="3.6" fill="none" stroke="#92bb86" stroke-width="1.25"/><path d="M1030.5 670.4 V677.3" stroke="#92bb86" stroke-width="1.25"/><path d="M1038.1 663.0 L1040.6999999999998 671.8 H1035.5 Z" fill="none" stroke="#92bb86" stroke-width="1.25" stroke-linejoin="round"/><path d="M1038.1 671.8 V677.3" stroke="#92bb86" stroke-width="1.25"/><ellipse cx="1072.5" cy="680.7" rx="2.5" ry="3.6" fill="none" stroke="#92bb86" stroke-width="1.25"/><path d="M1072.5 684.3000000000001 V691.2" stroke="#92bb86" stroke-width="1.25"/><path d="M1080.1 676.9000000000001 L1082.6999999999998 685.7 H1077.5 Z" fill="none" stroke="#92bb86" stroke-width="1.25" stroke-linejoin="round"/><path d="M1080.1 685.7 V691.2" stroke="#92bb86" stroke-width="1.25"/><ellipse cx="1138.5" cy="667.1" rx="2.5" ry="3.6" fill="none" stroke="#92bb86" stroke-width="1.25"/><path d="M1138.5 670.7 V677.6" stroke="#92bb86" stroke-width="1.25"/><path d="M1146.1 663.3000000000001 L1148.6999999999998 672.1 H1143.5 Z" fill="none" stroke="#92bb86" stroke-width="1.25" stroke-linejoin="round"/><path d="M1146.1 672.1 V677.6" stroke="#92bb86" stroke-width="1.25"/><ellipse cx="1196.3999999999999" cy="685.0" rx="2.5" ry="3.6" fill="none" stroke="#92bb86" stroke-width="1.25"/><path d="M1196.3999999999999 688.6 V695.5" stroke="#92bb86" stroke-width="1.25"/><path d="M1188.8 681.2 L1191.3999999999999 690.0 H1186.2 Z" fill="none" stroke="#92bb86" stroke-width="1.25" stroke-linejoin="round"/><path d="M1188.8 690.0 V695.5" stroke="#92bb86" stroke-width="1.25"/><ellipse cx="1256.2" cy="685.9" rx="2.5" ry="3.6" fill="none" stroke="#92bb86" stroke-width="1.25"/><path d="M1256.2 689.5 V696.4" stroke="#92bb86" stroke-width="1.25"/><path d="M1263.8 682.1 L1266.3999999999999 690.9 H1261.2 Z" fill="none" stroke="#92bb86" stroke-width="1.25" stroke-linejoin="round"/><path d="M1263.8 690.9 V696.4" stroke="#92bb86" stroke-width="1.25"/><ellipse cx="1309.0" cy="669.9" rx="2.5" ry="3.6" fill="none" stroke="#92bb86" stroke-width="1.25"/><path d="M1309.0 673.5 V680.4" stroke="#92bb86" stroke-width="1.25"/><path d="M1316.6 666.1 L1319.1999999999998 674.9 H1314.0 Z" fill="none" stroke="#92bb86" stroke-width="1.25" stroke-linejoin="round"/><path d="M1316.6 674.9 V680.4" stroke="#92bb86" stroke-width="1.25"/><ellipse cx="1354.0" cy="685.1" rx="2.5" ry="3.6" fill="none" stroke="#92bb86" stroke-width="1.25"/><path d="M1354.0 688.7 V695.6" stroke="#92bb86" stroke-width="1.25"/><path d="M1361.6 681.3000000000001 L1364.1999999999998 690.1 H1359.0 Z" fill="none" stroke="#92bb86" stroke-width="1.25" stroke-linejoin="round"/><path d="M1361.6 690.1 V695.6" stroke="#92bb86" stroke-width="1.25"/><ellipse cx="1398.8" cy="681.8" rx="2.5" ry="3.6" fill="none" stroke="#92bb86" stroke-width="1.25"/><path d="M1398.8 685.4 V692.3" stroke="#92bb86" stroke-width="1.25"/><path d="M1406.3999999999999 678.0 L1408.9999999999998 686.8 H1403.8 Z" fill="none" stroke="#92bb86" stroke-width="1.25" stroke-linejoin="round"/><path d="M1406.3999999999999 686.8 V692.3" stroke="#92bb86" stroke-width="1.25"/><ellipse cx="1450.0" cy="673.0" rx="2.5" ry="3.6" fill="none" stroke="#92bb86" stroke-width="1.25"/><path d="M1450.0 676.6 V683.5" stroke="#92bb86" stroke-width="1.25"/><path d="M1457.6 669.2 L1460.1999999999998 678.0 H1455.0 Z" fill="none" stroke="#92bb86" stroke-width="1.25" stroke-linejoin="round"/><path d="M1457.6 678.0 V683.5" stroke="#92bb86" stroke-width="1.25"/><ellipse cx="1514.2" cy="683.9" rx="2.5" ry="3.6" fill="none" stroke="#92bb86" stroke-width="1.25"/><path d="M1514.2 687.5 V694.4" stroke="#92bb86" stroke-width="1.25"/><path d="M1506.6000000000001 680.1 L1509.2 688.9 H1504.0000000000002 Z" fill="none" stroke="#92bb86" stroke-width="1.25" stroke-linejoin="round"/><path d="M1506.6000000000001 688.9 V694.4" stroke="#92bb86" stroke-width="1.25"/><ellipse cx="1579.0" cy="668.9" rx="2.5" ry="3.6" fill="none" stroke="#92bb86" stroke-width="1.25"/><path d="M1579.0 672.5 V679.4" stroke="#92bb86" stroke-width="1.25"/><path d="M1586.6 665.1 L1589.1999999999998 673.9 H1584.0 Z" fill="none" stroke="#92bb86" stroke-width="1.25" stroke-linejoin="round"/><path d="M1586.6 673.9 V679.4" stroke="#92bb86" stroke-width="1.25"/><ellipse cx="1643.6" cy="670.2" rx="2.5" ry="3.6" fill="none" stroke="#92bb86" stroke-width="1.25"/><path d="M1643.6 673.8000000000001 V680.7" stroke="#92bb86" stroke-width="1.25"/><path d="M1636.0 666.4000000000001 L1638.6 675.2 H1633.4 Z" fill="none" stroke="#92bb86" stroke-width="1.25" stroke-linejoin="round"/><path d="M1636.0 675.2 V680.7" stroke="#92bb86" stroke-width="1.25"/><ellipse cx="1686.0" cy="672.4" rx="2.5" ry="3.6" fill="none" stroke="#92bb86" stroke-width="1.25"/><path d="M1686.0 676.0 V682.9" stroke="#92bb86" stroke-width="1.25"/><path d="M1678.4 668.6 L1681.0 677.4 H1675.8000000000002 Z" fill="none" stroke="#92bb86" stroke-width="1.25" stroke-linejoin="round"/><path d="M1678.4 677.4 V682.9" stroke="#92bb86" stroke-width="1.25"/><ellipse cx="1723.3" cy="669.2" rx="2.5" ry="3.6" fill="none" stroke="#92bb86" stroke-width="1.25"/><path d="M1723.3 672.8000000000001 V679.7" stroke="#92bb86" stroke-width="1.25"/><path d="M1730.8999999999999 665.4000000000001 L1733.4999999999998 674.2 H1728.3 Z" fill="none" stroke="#92bb86" stroke-width="1.25" stroke-linejoin="round"/><path d="M1730.8999999999999 674.2 V679.7" stroke="#92bb86" stroke-width="1.25"/><ellipse cx="1798.8" cy="683.9" rx="2.5" ry="3.6" fill="none" stroke="#92bb86" stroke-width="1.25"/><path d="M1798.8 687.5 V694.4" stroke="#92bb86" stroke-width="1.25"/><path d="M1791.2 680.1 L1793.8 688.9 H1788.6000000000001 Z" fill="none" stroke="#92bb86" stroke-width="1.25" stroke-linejoin="round"/><path d="M1791.2 688.9 V694.4" stroke="#92bb86" stroke-width="1.25"/><ellipse cx="1848.2" cy="668.3" rx="2.5" ry="3.6" fill="none" stroke="#92bb86" stroke-width="1.25"/><path d="M1848.2 671.9 V678.8" stroke="#92bb86" stroke-width="1.25"/><path d="M1855.8 664.5 L1858.3999999999999 673.3 H1853.2 Z" fill="none" stroke="#92bb86" stroke-width="1.25" stroke-linejoin="round"/><path d="M1855.8 673.3 V678.8" stroke="#92bb86" stroke-width="1.25"/><ellipse cx="1898.0" cy="673.2" rx="2.5" ry="3.6" fill="none" stroke="#92bb86" stroke-width="1.25"/><path d="M1898.0 676.8000000000001 V683.7" stroke="#92bb86" stroke-width="1.25"/><path d="M1905.6 669.4000000000001 L1908.1999999999998 678.2 H1903.0 Z" fill="none" stroke="#92bb86" stroke-width="1.25" stroke-linejoin="round"/><path d="M1905.6 678.2 V683.7" stroke="#92bb86" stroke-width="1.25"/><ellipse cx="1949.7" cy="677.6" rx="2.5" ry="3.6" fill="none" stroke="#92bb86" stroke-width="1.25"/><path d="M1949.7 681.2 V688.1" stroke="#92bb86" stroke-width="1.25"/><path d="M1957.3 673.8000000000001 L1959.8999999999999 682.6 H1954.7 Z" fill="none" stroke="#92bb86" stroke-width="1.25" stroke-linejoin="round"/><path d="M1957.3 682.6 V688.1" stroke="#92bb86" stroke-width="1.25"/><ellipse cx="452.09999999999997" cy="733.9" rx="2.5" ry="3.6" fill="none" stroke="#92bb86" stroke-width="1.25"/><path d="M452.09999999999997 737.5 V744.4" stroke="#92bb86" stroke-width="1.25"/><path d="M459.7 730.1 L462.3 738.9 H457.09999999999997 Z" fill="none" stroke="#92bb86" stroke-width="1.25" stroke-linejoin="round"/><path d="M459.7 738.9 V744.4" stroke="#92bb86" stroke-width="1.25"/><ellipse cx="521.8" cy="730.0" rx="2.5" ry="3.6" fill="none" stroke="#92bb86" stroke-width="1.25"/><path d="M521.8 733.6 V740.5" stroke="#92bb86" stroke-width="1.25"/><path d="M514.2 726.2 L516.8000000000001 735.0 H511.6 Z" fill="none" stroke="#92bb86" stroke-width="1.25" stroke-linejoin="round"/><path d="M514.2 735.0 V740.5" stroke="#92bb86" stroke-width="1.25"/><ellipse cx="592.5" cy="725.5" rx="2.5" ry="3.6" fill="none" stroke="#92bb86" stroke-width="1.25"/><path d="M592.5 729.1 V736.0" stroke="#92bb86" stroke-width="1.25"/><path d="M584.9000000000001 721.7 L587.5000000000001 730.5 H582.3000000000001 Z" fill="none" stroke="#92bb86" stroke-width="1.25" stroke-linejoin="round"/><path d="M584.9000000000001 730.5 V736.0" stroke="#92bb86" stroke-width="1.25"/><ellipse cx="640.1999999999999" cy="722.8" rx="2.5" ry="3.6" fill="none" stroke="#92bb86" stroke-width="1.25"/><path d="M640.1999999999999 726.4 V733.3" stroke="#92bb86" stroke-width="1.25"/><path d="M632.6 719.0 L635.2 727.8 H630.0 Z" fill="none" stroke="#92bb86" stroke-width="1.25" stroke-linejoin="round"/><path d="M632.6 727.8 V733.3" stroke="#92bb86" stroke-width="1.25"/><ellipse cx="686.0" cy="715.0" rx="2.5" ry="3.6" fill="none" stroke="#92bb86" stroke-width="1.25"/><path d="M686.0 718.6 V725.5" stroke="#92bb86" stroke-width="1.25"/><path d="M693.5999999999999 711.2 L696.1999999999999 720.0 H690.9999999999999 Z" fill="none" stroke="#92bb86" stroke-width="1.25" stroke-linejoin="round"/><path d="M693.5999999999999 720.0 V725.5" stroke="#92bb86" stroke-width="1.25"/><ellipse cx="726.3000000000001" cy="726.8" rx="2.5" ry="3.6" fill="none" stroke="#92bb86" stroke-width="1.25"/><path d="M726.3000000000001 730.4 V737.3" stroke="#92bb86" stroke-width="1.25"/><path d="M733.9 723.0 L736.5 731.8 H731.3 Z" fill="none" stroke="#92bb86" stroke-width="1.25" stroke-linejoin="round"/><path d="M733.9 731.8 V737.3" stroke="#92bb86" stroke-width="1.25"/><ellipse cx="797.1999999999999" cy="727.3" rx="2.5" ry="3.6" fill="none" stroke="#92bb86" stroke-width="1.25"/><path d="M797.1999999999999 730.9 V737.8" stroke="#92bb86" stroke-width="1.25"/><path d="M789.6 723.5 L792.2 732.3 H787.0 Z" fill="none" stroke="#92bb86" stroke-width="1.25" stroke-linejoin="round"/><path d="M789.6 732.3 V737.8" stroke="#92bb86" stroke-width="1.25"/><ellipse cx="834.9" cy="714.7" rx="2.5" ry="3.6" fill="none" stroke="#92bb86" stroke-width="1.25"/><path d="M834.9 718.3000000000001 V725.2" stroke="#92bb86" stroke-width="1.25"/><path d="M827.3000000000001 710.9000000000001 L829.9000000000001 719.7 H824.7 Z" fill="none" stroke="#92bb86" stroke-width="1.25" stroke-linejoin="round"/><path d="M827.3000000000001 719.7 V725.2" stroke="#92bb86" stroke-width="1.25"/><ellipse cx="898.4000000000001" cy="722.6" rx="2.5" ry="3.6" fill="none" stroke="#92bb86" stroke-width="1.25"/><path d="M898.4000000000001 726.2 V733.1" stroke="#92bb86" stroke-width="1.25"/><path d="M906.0 718.8000000000001 L908.6 727.6 H903.4 Z" fill="none" stroke="#92bb86" stroke-width="1.25" stroke-linejoin="round"/><path d="M906.0 727.6 V733.1" stroke="#92bb86" stroke-width="1.25"/><ellipse cx="967.9" cy="716.6" rx="2.5" ry="3.6" fill="none" stroke="#92bb86" stroke-width="1.25"/><path d="M967.9 720.2 V727.1" stroke="#92bb86" stroke-width="1.25"/><path d="M960.3000000000001 712.8000000000001 L962.9000000000001 721.6 H957.7 Z" fill="none" stroke="#92bb86" stroke-width="1.25" stroke-linejoin="round"/><path d="M960.3000000000001 721.6 V727.1" stroke="#92bb86" stroke-width="1.25"/><ellipse cx="1015.0999999999999" cy="714.4" rx="2.5" ry="3.6" fill="none" stroke="#92bb86" stroke-width="1.25"/><path d="M1015.0999999999999 718.0 V724.9" stroke="#92bb86" stroke-width="1.25"/><path d="M1007.5 710.6 L1010.1 719.4 H1004.9 Z" fill="none" stroke="#92bb86" stroke-width="1.25" stroke-linejoin="round"/><path d="M1007.5 719.4 V724.9" stroke="#92bb86" stroke-width="1.25"/><ellipse cx="1060.7" cy="716.1" rx="2.5" ry="3.6" fill="none" stroke="#92bb86" stroke-width="1.25"/><path d="M1060.7 719.7 V726.6" stroke="#92bb86" stroke-width="1.25"/><path d="M1053.1000000000001 712.3000000000001 L1055.7 721.1 H1050.5000000000002 Z" fill="none" stroke="#92bb86" stroke-width="1.25" stroke-linejoin="round"/><path d="M1053.1000000000001 721.1 V726.6" stroke="#92bb86" stroke-width="1.25"/><ellipse cx="1103.5" cy="725.7" rx="2.5" ry="3.6" fill="none" stroke="#92bb86" stroke-width="1.25"/><path d="M1103.5 729.3000000000001 V736.2" stroke="#92bb86" stroke-width="1.25"/><path d="M1111.1 721.9000000000001 L1113.6999999999998 730.7 H1108.5 Z" fill="none" stroke="#92bb86" stroke-width="1.25" stroke-linejoin="round"/><path d="M1111.1 730.7 V736.2" stroke="#92bb86" stroke-width="1.25"/><ellipse cx="1164.5" cy="726.5" rx="2.5" ry="3.6" fill="none" stroke="#92bb86" stroke-width="1.25"/><path d="M1164.5 730.1 V737.0" stroke="#92bb86" stroke-width="1.25"/><path d="M1156.9 722.7 L1159.5 731.5 H1154.3000000000002 Z" fill="none" stroke="#92bb86" stroke-width="1.25" stroke-linejoin="round"/><path d="M1156.9 731.5 V737.0" stroke="#92bb86" stroke-width="1.25"/><ellipse cx="1216.6" cy="732.7" rx="2.5" ry="3.6" fill="none" stroke="#92bb86" stroke-width="1.25"/><path d="M1216.6 736.3000000000001 V743.2" stroke="#92bb86" stroke-width="1.25"/><path d="M1209.0 728.9000000000001 L1211.6 737.7 H1206.4 Z" fill="none" stroke="#92bb86" stroke-width="1.25" stroke-linejoin="round"/><path d="M1209.0 737.7 V743.2" stroke="#92bb86" stroke-width="1.25"/><ellipse cx="1263.4" cy="715.9" rx="2.5" ry="3.6" fill="none" stroke="#92bb86" stroke-width="1.25"/><path d="M1263.4 719.5 V726.4" stroke="#92bb86" stroke-width="1.25"/><path d="M1271.0 712.1 L1273.6 720.9 H1268.4 Z" fill="none" stroke="#92bb86" stroke-width="1.25" stroke-linejoin="round"/><path d="M1271.0 720.9 V726.4" stroke="#92bb86" stroke-width="1.25"/><ellipse cx="1345.2" cy="729.6" rx="2.5" ry="3.6" fill="none" stroke="#92bb86" stroke-width="1.25"/><path d="M1345.2 733.2 V740.1" stroke="#92bb86" stroke-width="1.25"/><path d="M1337.6000000000001 725.8000000000001 L1340.2 734.6 H1335.0000000000002 Z" fill="none" stroke="#92bb86" stroke-width="1.25" stroke-linejoin="round"/><path d="M1337.6000000000001 734.6 V740.1" stroke="#92bb86" stroke-width="1.25"/><ellipse cx="1374.6000000000001" cy="714.2" rx="2.5" ry="3.6" fill="none" stroke="#92bb86" stroke-width="1.25"/><path d="M1374.6000000000001 717.8000000000001 V724.7" stroke="#92bb86" stroke-width="1.25"/><path d="M1382.2 710.4000000000001 L1384.8 719.2 H1379.6000000000001 Z" fill="none" stroke="#92bb86" stroke-width="1.25" stroke-linejoin="round"/><path d="M1382.2 719.2 V724.7" stroke="#92bb86" stroke-width="1.25"/><ellipse cx="1436.9" cy="721.0" rx="2.5" ry="3.6" fill="none" stroke="#92bb86" stroke-width="1.25"/><path d="M1436.9 724.6 V731.5" stroke="#92bb86" stroke-width="1.25"/><path d="M1444.5 717.2 L1447.1 726.0 H1441.9 Z" fill="none" stroke="#92bb86" stroke-width="1.25" stroke-linejoin="round"/><path d="M1444.5 726.0 V731.5" stroke="#92bb86" stroke-width="1.25"/><ellipse cx="1487.6000000000001" cy="732.7" rx="2.5" ry="3.6" fill="none" stroke="#92bb86" stroke-width="1.25"/><path d="M1487.6000000000001 736.3000000000001 V743.2" stroke="#92bb86" stroke-width="1.25"/><path d="M1495.2 728.9000000000001 L1497.8 737.7 H1492.6000000000001 Z" fill="none" stroke="#92bb86" stroke-width="1.25" stroke-linejoin="round"/><path d="M1495.2 737.7 V743.2" stroke="#92bb86" stroke-width="1.25"/><ellipse cx="1543.8" cy="732.1" rx="2.5" ry="3.6" fill="none" stroke="#92bb86" stroke-width="1.25"/><path d="M1543.8 735.7 V742.6" stroke="#92bb86" stroke-width="1.25"/><path d="M1536.2 728.3000000000001 L1538.8 737.1 H1533.6000000000001 Z" fill="none" stroke="#92bb86" stroke-width="1.25" stroke-linejoin="round"/><path d="M1536.2 737.1 V742.6" stroke="#92bb86" stroke-width="1.25"/><ellipse cx="1605.7" cy="722.1" rx="2.5" ry="3.6" fill="none" stroke="#92bb86" stroke-width="1.25"/><path d="M1605.7 725.7 V732.6" stroke="#92bb86" stroke-width="1.25"/><path d="M1598.1000000000001 718.3000000000001 L1600.7 727.1 H1595.5000000000002 Z" fill="none" stroke="#92bb86" stroke-width="1.25" stroke-linejoin="round"/><path d="M1598.1000000000001 727.1 V732.6" stroke="#92bb86" stroke-width="1.25"/><ellipse cx="1646.3999999999999" cy="729.6" rx="2.5" ry="3.6" fill="none" stroke="#92bb86" stroke-width="1.25"/><path d="M1646.3999999999999 733.2 V740.1" stroke="#92bb86" stroke-width="1.25"/><path d="M1638.8 725.8000000000001 L1641.3999999999999 734.6 H1636.2 Z" fill="none" stroke="#92bb86" stroke-width="1.25" stroke-linejoin="round"/><path d="M1638.8 734.6 V740.1" stroke="#92bb86" stroke-width="1.25"/><ellipse cx="1714.2" cy="732.8" rx="2.5" ry="3.6" fill="none" stroke="#92bb86" stroke-width="1.25"/><path d="M1714.2 736.4 V743.3" stroke="#92bb86" stroke-width="1.25"/><path d="M1706.6000000000001 729.0 L1709.2 737.8 H1704.0000000000002 Z" fill="none" stroke="#92bb86" stroke-width="1.25" stroke-linejoin="round"/><path d="M1706.6000000000001 737.8 V743.3" stroke="#92bb86" stroke-width="1.25"/><ellipse cx="1750.8" cy="726.2" rx="2.5" ry="3.6" fill="none" stroke="#92bb86" stroke-width="1.25"/><path d="M1750.8 729.8000000000001 V736.7" stroke="#92bb86" stroke-width="1.25"/><path d="M1758.3999999999999 722.4000000000001 L1760.9999999999998 731.2 H1755.8 Z" fill="none" stroke="#92bb86" stroke-width="1.25" stroke-linejoin="round"/><path d="M1758.3999999999999 731.2 V736.7" stroke="#92bb86" stroke-width="1.25"/><ellipse cx="1824.8" cy="730.3" rx="2.5" ry="3.6" fill="none" stroke="#92bb86" stroke-width="1.25"/><path d="M1824.8 733.9 V740.8" stroke="#92bb86" stroke-width="1.25"/><path d="M1817.2 726.5 L1819.8 735.3 H1814.6000000000001 Z" fill="none" stroke="#92bb86" stroke-width="1.25" stroke-linejoin="round"/><path d="M1817.2 735.3 V740.8" stroke="#92bb86" stroke-width="1.25"/><ellipse cx="1869.5" cy="720.0" rx="2.5" ry="3.6" fill="none" stroke="#92bb86" stroke-width="1.25"/><path d="M1869.5 723.6 V730.5" stroke="#92bb86" stroke-width="1.25"/><path d="M1861.9 716.2 L1864.5 725.0 H1859.3000000000002 Z" fill="none" stroke="#92bb86" stroke-width="1.25" stroke-linejoin="round"/><path d="M1861.9 725.0 V730.5" stroke="#92bb86" stroke-width="1.25"/><ellipse cx="1932.1000000000001" cy="729.7" rx="2.5" ry="3.6" fill="none" stroke="#92bb86" stroke-width="1.25"/><path d="M1932.1000000000001 733.3000000000001 V740.2" stroke="#92bb86" stroke-width="1.25"/><path d="M1939.7 725.9000000000001 L1942.3 734.7 H1937.1000000000001 Z" fill="none" stroke="#92bb86" stroke-width="1.25" stroke-linejoin="round"/><path d="M1939.7 734.7 V740.2" stroke="#92bb86" stroke-width="1.25"/><ellipse cx="1961.4" cy="730.9" rx="2.5" ry="3.6" fill="none" stroke="#92bb86" stroke-width="1.25"/><path d="M1961.4 734.5 V741.4" stroke="#92bb86" stroke-width="1.25"/><path d="M1969.0 727.1 L1971.6 735.9 H1966.4 Z" fill="none" stroke="#92bb86" stroke-width="1.25" stroke-linejoin="round"/><path d="M1969.0 735.9 V741.4" stroke="#92bb86" stroke-width="1.25"/><ellipse cx="442.8" cy="776.8" rx="2.5" ry="3.6" fill="none" stroke="#92bb86" stroke-width="1.25"/><path d="M442.8 780.4 V787.3" stroke="#92bb86" stroke-width="1.25"/><path d="M435.2 773.0 L437.8 781.8 H432.59999999999997 Z" fill="none" stroke="#92bb86" stroke-width="1.25" stroke-linejoin="round"/><path d="M435.2 781.8 V787.3" stroke="#92bb86" stroke-width="1.25"/><ellipse cx="490.1" cy="764.1" rx="2.5" ry="3.6" fill="none" stroke="#92bb86" stroke-width="1.25"/><path d="M490.1 767.7 V774.6" stroke="#92bb86" stroke-width="1.25"/><path d="M482.5 760.3000000000001 L485.1 769.1 H479.9 Z" fill="none" stroke="#92bb86" stroke-width="1.25" stroke-linejoin="round"/><path d="M482.5 769.1 V774.6" stroke="#92bb86" stroke-width="1.25"/><ellipse cx="531.3000000000001" cy="768.7" rx="2.5" ry="3.6" fill="none" stroke="#92bb86" stroke-width="1.25"/><path d="M531.3000000000001 772.3000000000001 V779.2" stroke="#92bb86" stroke-width="1.25"/><path d="M538.9 764.9000000000001 L541.5 773.7 H536.3 Z" fill="none" stroke="#92bb86" stroke-width="1.25" stroke-linejoin="round"/><path d="M538.9 773.7 V779.2" stroke="#92bb86" stroke-width="1.25"/><ellipse cx="603.7" cy="778.9" rx="2.5" ry="3.6" fill="none" stroke="#92bb86" stroke-width="1.25"/><path d="M603.7 782.5 V789.4" stroke="#92bb86" stroke-width="1.25"/><path d="M611.3 775.1 L613.9 783.9 H608.6999999999999 Z" fill="none" stroke="#92bb86" stroke-width="1.25" stroke-linejoin="round"/><path d="M611.3 783.9 V789.4" stroke="#92bb86" stroke-width="1.25"/><ellipse cx="653.1999999999999" cy="773.1" rx="2.5" ry="3.6" fill="none" stroke="#92bb86" stroke-width="1.25"/><path d="M653.1999999999999 776.7 V783.6" stroke="#92bb86" stroke-width="1.25"/><path d="M645.6 769.3000000000001 L648.2 778.1 H643.0 Z" fill="none" stroke="#92bb86" stroke-width="1.25" stroke-linejoin="round"/><path d="M645.6 778.1 V783.6" stroke="#92bb86" stroke-width="1.25"/><ellipse cx="721.9" cy="772.5" rx="2.5" ry="3.6" fill="none" stroke="#92bb86" stroke-width="1.25"/><path d="M721.9 776.1 V783.0" stroke="#92bb86" stroke-width="1.25"/><path d="M714.3000000000001 768.7 L716.9000000000001 777.5 H711.7 Z" fill="none" stroke="#92bb86" stroke-width="1.25" stroke-linejoin="round"/><path d="M714.3000000000001 777.5 V783.0" stroke="#92bb86" stroke-width="1.25"/><ellipse cx="771.8" cy="781.3" rx="2.5" ry="3.6" fill="none" stroke="#92bb86" stroke-width="1.25"/><path d="M771.8 784.9 V791.8" stroke="#92bb86" stroke-width="1.25"/><path d="M764.2 777.5 L766.8000000000001 786.3 H761.6 Z" fill="none" stroke="#92bb86" stroke-width="1.25" stroke-linejoin="round"/><path d="M764.2 786.3 V791.8" stroke="#92bb86" stroke-width="1.25"/><ellipse cx="832.4" cy="762.3" rx="2.5" ry="3.6" fill="none" stroke="#92bb86" stroke-width="1.25"/><path d="M832.4 765.9 V772.8" stroke="#92bb86" stroke-width="1.25"/><path d="M824.8000000000001 758.5 L827.4000000000001 767.3 H822.2 Z" fill="none" stroke="#92bb86" stroke-width="1.25" stroke-linejoin="round"/><path d="M824.8000000000001 767.3 V772.8" stroke="#92bb86" stroke-width="1.25"/><ellipse cx="860.8000000000001" cy="776.9" rx="2.5" ry="3.6" fill="none" stroke="#92bb86" stroke-width="1.25"/><path d="M860.8000000000001 780.5 V787.4" stroke="#92bb86" stroke-width="1.25"/><path d="M868.4 773.1 L871.0 781.9 H865.8 Z" fill="none" stroke="#92bb86" stroke-width="1.25" stroke-linejoin="round"/><path d="M868.4 781.9 V787.4" stroke="#92bb86" stroke-width="1.25"/><ellipse cx="929.1" cy="768.5" rx="2.5" ry="3.6" fill="none" stroke="#92bb86" stroke-width="1.25"/><path d="M929.1 772.1 V779.0" stroke="#92bb86" stroke-width="1.25"/><path d="M936.6999999999999 764.7 L939.3 773.5 H934.0999999999999 Z" fill="none" stroke="#92bb86" stroke-width="1.25" stroke-linejoin="round"/><path d="M936.6999999999999 773.5 V779.0" stroke="#92bb86" stroke-width="1.25"/><ellipse cx="971.4000000000001" cy="766.8" rx="2.5" ry="3.6" fill="none" stroke="#92bb86" stroke-width="1.25"/><path d="M971.4000000000001 770.4 V777.3" stroke="#92bb86" stroke-width="1.25"/><path d="M979.0 763.0 L981.6 771.8 H976.4 Z" fill="none" stroke="#92bb86" stroke-width="1.25" stroke-linejoin="round"/><path d="M979.0 771.8 V777.3" stroke="#92bb86" stroke-width="1.25"/><ellipse cx="1033.9" cy="775.9" rx="2.5" ry="3.6" fill="none" stroke="#92bb86" stroke-width="1.25"/><path d="M1033.9 779.5 V786.4" stroke="#92bb86" stroke-width="1.25"/><path d="M1041.5 772.1 L1044.1 780.9 H1038.9 Z" fill="none" stroke="#92bb86" stroke-width="1.25" stroke-linejoin="round"/><path d="M1041.5 780.9 V786.4" stroke="#92bb86" stroke-width="1.25"/><ellipse cx="1097.6000000000001" cy="771.4" rx="2.5" ry="3.6" fill="none" stroke="#92bb86" stroke-width="1.25"/><path d="M1097.6000000000001 775.0 V781.9" stroke="#92bb86" stroke-width="1.25"/><path d="M1105.2 767.6 L1107.8 776.4 H1102.6000000000001 Z" fill="none" stroke="#92bb86" stroke-width="1.25" stroke-linejoin="round"/><path d="M1105.2 776.4 V781.9" stroke="#92bb86" stroke-width="1.25"/><ellipse cx="1151.3" cy="779.2" rx="2.5" ry="3.6" fill="none" stroke="#92bb86" stroke-width="1.25"/><path d="M1151.3 782.8000000000001 V789.7" stroke="#92bb86" stroke-width="1.25"/><path d="M1143.7 775.4000000000001 L1146.3 784.2 H1141.1000000000001 Z" fill="none" stroke="#92bb86" stroke-width="1.25" stroke-linejoin="round"/><path d="M1143.7 784.2 V789.7" stroke="#92bb86" stroke-width="1.25"/><ellipse cx="1206.1" cy="773.4" rx="2.5" ry="3.6" fill="none" stroke="#92bb86" stroke-width="1.25"/><path d="M1206.1 777.0 V783.9" stroke="#92bb86" stroke-width="1.25"/><path d="M1198.5 769.6 L1201.1 778.4 H1195.9 Z" fill="none" stroke="#92bb86" stroke-width="1.25" stroke-linejoin="round"/><path d="M1198.5 778.4 V783.9" stroke="#92bb86" stroke-width="1.25"/><ellipse cx="1245.7" cy="774.5" rx="2.5" ry="3.6" fill="none" stroke="#92bb86" stroke-width="1.25"/><path d="M1245.7 778.1 V785.0" stroke="#92bb86" stroke-width="1.25"/><path d="M1238.1000000000001 770.7 L1240.7 779.5 H1235.5000000000002 Z" fill="none" stroke="#92bb86" stroke-width="1.25" stroke-linejoin="round"/><path d="M1238.1000000000001 779.5 V785.0" stroke="#92bb86" stroke-width="1.25"/><ellipse cx="1319.3" cy="764.9" rx="2.5" ry="3.6" fill="none" stroke="#92bb86" stroke-width="1.25"/><path d="M1319.3 768.5 V775.4" stroke="#92bb86" stroke-width="1.25"/><path d="M1311.7 761.1 L1314.3 769.9 H1309.1000000000001 Z" fill="none" stroke="#92bb86" stroke-width="1.25" stroke-linejoin="round"/><path d="M1311.7 769.9 V775.4" stroke="#92bb86" stroke-width="1.25"/><ellipse cx="1350.8" cy="780.6" rx="2.5" ry="3.6" fill="none" stroke="#92bb86" stroke-width="1.25"/><path d="M1350.8 784.2 V791.1" stroke="#92bb86" stroke-width="1.25"/><path d="M1343.2 776.8000000000001 L1345.8 785.6 H1340.6000000000001 Z" fill="none" stroke="#92bb86" stroke-width="1.25" stroke-linejoin="round"/><path d="M1343.2 785.6 V791.1" stroke="#92bb86" stroke-width="1.25"/><ellipse cx="1405.8" cy="762.6" rx="2.5" ry="3.6" fill="none" stroke="#92bb86" stroke-width="1.25"/><path d="M1405.8 766.2 V773.1" stroke="#92bb86" stroke-width="1.25"/><path d="M1398.2 758.8000000000001 L1400.8 767.6 H1395.6000000000001 Z" fill="none" stroke="#92bb86" stroke-width="1.25" stroke-linejoin="round"/><path d="M1398.2 767.6 V773.1" stroke="#92bb86" stroke-width="1.25"/><ellipse cx="1467.6000000000001" cy="774.7" rx="2.5" ry="3.6" fill="none" stroke="#92bb86" stroke-width="1.25"/><path d="M1467.6000000000001 778.3000000000001 V785.2" stroke="#92bb86" stroke-width="1.25"/><path d="M1475.2 770.9000000000001 L1477.8 779.7 H1472.6000000000001 Z" fill="none" stroke="#92bb86" stroke-width="1.25" stroke-linejoin="round"/><path d="M1475.2 779.7 V785.2" stroke="#92bb86" stroke-width="1.25"/><ellipse cx="1522.8" cy="763.3" rx="2.5" ry="3.6" fill="none" stroke="#92bb86" stroke-width="1.25"/><path d="M1522.8 766.9 V773.8" stroke="#92bb86" stroke-width="1.25"/><path d="M1530.3999999999999 759.5 L1532.9999999999998 768.3 H1527.8 Z" fill="none" stroke="#92bb86" stroke-width="1.25" stroke-linejoin="round"/><path d="M1530.3999999999999 768.3 V773.8" stroke="#92bb86" stroke-width="1.25"/><ellipse cx="1566.4" cy="778.4" rx="2.5" ry="3.6" fill="none" stroke="#92bb86" stroke-width="1.25"/><path d="M1566.4 782.0 V788.9" stroke="#92bb86" stroke-width="1.25"/><path d="M1574.0 774.6 L1576.6 783.4 H1571.4 Z" fill="none" stroke="#92bb86" stroke-width="1.25" stroke-linejoin="round"/><path d="M1574.0 783.4 V788.9" stroke="#92bb86" stroke-width="1.25"/><ellipse cx="1635.2" cy="763.3" rx="2.5" ry="3.6" fill="none" stroke="#92bb86" stroke-width="1.25"/><path d="M1635.2 766.9 V773.8" stroke="#92bb86" stroke-width="1.25"/><path d="M1642.8 759.5 L1645.3999999999999 768.3 H1640.2 Z" fill="none" stroke="#92bb86" stroke-width="1.25" stroke-linejoin="round"/><path d="M1642.8 768.3 V773.8" stroke="#92bb86" stroke-width="1.25"/><ellipse cx="1697.3999999999999" cy="780.9" rx="2.5" ry="3.6" fill="none" stroke="#92bb86" stroke-width="1.25"/><path d="M1697.3999999999999 784.5 V791.4" stroke="#92bb86" stroke-width="1.25"/><path d="M1689.8 777.1 L1692.3999999999999 785.9 H1687.2 Z" fill="none" stroke="#92bb86" stroke-width="1.25" stroke-linejoin="round"/><path d="M1689.8 785.9 V791.4" stroke="#92bb86" stroke-width="1.25"/><ellipse cx="1731.6" cy="764.2" rx="2.5" ry="3.6" fill="none" stroke="#92bb86" stroke-width="1.25"/><path d="M1731.6 767.8000000000001 V774.7" stroke="#92bb86" stroke-width="1.25"/><path d="M1724.0 760.4000000000001 L1726.6 769.2 H1721.4 Z" fill="none" stroke="#92bb86" stroke-width="1.25" stroke-linejoin="round"/><path d="M1724.0 769.2 V774.7" stroke="#92bb86" stroke-width="1.25"/><ellipse cx="1795.9" cy="778.2" rx="2.5" ry="3.6" fill="none" stroke="#92bb86" stroke-width="1.25"/><path d="M1795.9 781.8000000000001 V788.7" stroke="#92bb86" stroke-width="1.25"/><path d="M1803.5 774.4000000000001 L1806.1 783.2 H1800.9 Z" fill="none" stroke="#92bb86" stroke-width="1.25" stroke-linejoin="round"/><path d="M1803.5 783.2 V788.7" stroke="#92bb86" stroke-width="1.25"/><ellipse cx="1856.8999999999999" cy="774.6" rx="2.5" ry="3.6" fill="none" stroke="#92bb86" stroke-width="1.25"/><path d="M1856.8999999999999 778.2 V785.1" stroke="#92bb86" stroke-width="1.25"/><path d="M1849.3 770.8000000000001 L1851.8999999999999 779.6 H1846.7 Z" fill="none" stroke="#92bb86" stroke-width="1.25" stroke-linejoin="round"/><path d="M1849.3 779.6 V785.1" stroke="#92bb86" stroke-width="1.25"/><ellipse cx="1883.0" cy="764.0" rx="2.5" ry="3.6" fill="none" stroke="#92bb86" stroke-width="1.25"/><path d="M1883.0 767.6 V774.5" stroke="#92bb86" stroke-width="1.25"/><path d="M1890.6 760.2 L1893.1999999999998 769.0 H1888.0 Z" fill="none" stroke="#92bb86" stroke-width="1.25" stroke-linejoin="round"/><path d="M1890.6 769.0 V774.5" stroke="#92bb86" stroke-width="1.25"/><ellipse cx="1947.5" cy="768.4" rx="2.5" ry="3.6" fill="none" stroke="#92bb86" stroke-width="1.25"/><path d="M1947.5 772.0 V778.9" stroke="#92bb86" stroke-width="1.25"/><path d="M1939.9 764.6 L1942.5 773.4 H1937.3000000000002 Z" fill="none" stroke="#92bb86" stroke-width="1.25" stroke-linejoin="round"/><path d="M1939.9 773.4 V778.9" stroke="#92bb86" stroke-width="1.25"/><ellipse cx="457.40000000000003" cy="815.1" rx="2.5" ry="3.6" fill="none" stroke="#92bb86" stroke-width="1.25"/><path d="M457.40000000000003 818.7 V825.6" stroke="#92bb86" stroke-width="1.25"/><path d="M449.8 811.3000000000001 L452.40000000000003 820.1 H447.2 Z" fill="none" stroke="#92bb86" stroke-width="1.25" stroke-linejoin="round"/><path d="M449.8 820.1 V825.6" stroke="#92bb86" stroke-width="1.25"/><ellipse cx="530.8" cy="817.4" rx="2.5" ry="3.6" fill="none" stroke="#92bb86" stroke-width="1.25"/><path d="M530.8 821.0 V827.9" stroke="#92bb86" stroke-width="1.25"/><path d="M523.2 813.6 L525.8000000000001 822.4 H520.6 Z" fill="none" stroke="#92bb86" stroke-width="1.25" stroke-linejoin="round"/><path d="M523.2 822.4 V827.9" stroke="#92bb86" stroke-width="1.25"/><ellipse cx="584.2" cy="820.1" rx="2.5" ry="3.6" fill="none" stroke="#92bb86" stroke-width="1.25"/><path d="M584.2 823.7 V830.6" stroke="#92bb86" stroke-width="1.25"/><path d="M591.8 816.3000000000001 L594.4 825.1 H589.1999999999999 Z" fill="none" stroke="#92bb86" stroke-width="1.25" stroke-linejoin="round"/><path d="M591.8 825.1 V830.6" stroke="#92bb86" stroke-width="1.25"/><ellipse cx="636.0999999999999" cy="810.6" rx="2.5" ry="3.6" fill="none" stroke="#92bb86" stroke-width="1.25"/><path d="M636.0999999999999 814.2 V821.1" stroke="#92bb86" stroke-width="1.25"/><path d="M628.5 806.8000000000001 L631.1 815.6 H625.9 Z" fill="none" stroke="#92bb86" stroke-width="1.25" stroke-linejoin="round"/><path d="M628.5 815.6 V821.1" stroke="#92bb86" stroke-width="1.25"/><ellipse cx="685.0" cy="825.5" rx="2.5" ry="3.6" fill="none" stroke="#92bb86" stroke-width="1.25"/><path d="M685.0 829.1 V836.0" stroke="#92bb86" stroke-width="1.25"/><path d="M677.4000000000001 821.7 L680.0000000000001 830.5 H674.8000000000001 Z" fill="none" stroke="#92bb86" stroke-width="1.25" stroke-linejoin="round"/><path d="M677.4000000000001 830.5 V836.0" stroke="#92bb86" stroke-width="1.25"/><ellipse cx="746.5" cy="820.8" rx="2.5" ry="3.6" fill="none" stroke="#92bb86" stroke-width="1.25"/><path d="M746.5 824.4 V831.3" stroke="#92bb86" stroke-width="1.25"/><path d="M738.9000000000001 817.0 L741.5000000000001 825.8 H736.3000000000001 Z" fill="none" stroke="#92bb86" stroke-width="1.25" stroke-linejoin="round"/><path d="M738.9000000000001 825.8 V831.3" stroke="#92bb86" stroke-width="1.25"/><ellipse cx="797.3000000000001" cy="811.8" rx="2.5" ry="3.6" fill="none" stroke="#92bb86" stroke-width="1.25"/><path d="M797.3000000000001 815.4 V822.3" stroke="#92bb86" stroke-width="1.25"/><path d="M804.9 808.0 L807.5 816.8 H802.3 Z" fill="none" stroke="#92bb86" stroke-width="1.25" stroke-linejoin="round"/><path d="M804.9 816.8 V822.3" stroke="#92bb86" stroke-width="1.25"/><ellipse cx="839.5999999999999" cy="810.0" rx="2.5" ry="3.6" fill="none" stroke="#92bb86" stroke-width="1.25"/><path d="M839.5999999999999 813.6 V820.5" stroke="#92bb86" stroke-width="1.25"/><path d="M832.0 806.2 L834.6 815.0 H829.4 Z" fill="none" stroke="#92bb86" stroke-width="1.25" stroke-linejoin="round"/><path d="M832.0 815.0 V820.5" stroke="#92bb86" stroke-width="1.25"/><ellipse cx="910.0999999999999" cy="829.6" rx="2.5" ry="3.6" fill="none" stroke="#92bb86" stroke-width="1.25"/><path d="M910.0999999999999 833.2 V840.1" stroke="#92bb86" stroke-width="1.25"/><path d="M902.5 825.8000000000001 L905.1 834.6 H899.9 Z" fill="none" stroke="#92bb86" stroke-width="1.25" stroke-linejoin="round"/><path d="M902.5 834.6 V840.1" stroke="#92bb86" stroke-width="1.25"/><ellipse cx="948.9000000000001" cy="819.8" rx="2.5" ry="3.6" fill="none" stroke="#92bb86" stroke-width="1.25"/><path d="M948.9000000000001 823.4 V830.3" stroke="#92bb86" stroke-width="1.25"/><path d="M956.5 816.0 L959.1 824.8 H953.9 Z" fill="none" stroke="#92bb86" stroke-width="1.25" stroke-linejoin="round"/><path d="M956.5 824.8 V830.3" stroke="#92bb86" stroke-width="1.25"/><ellipse cx="1002.0" cy="819.9" rx="2.5" ry="3.6" fill="none" stroke="#92bb86" stroke-width="1.25"/><path d="M1002.0 823.5 V830.4" stroke="#92bb86" stroke-width="1.25"/><path d="M994.4000000000001 816.1 L997.0000000000001 824.9 H991.8000000000001 Z" fill="none" stroke="#92bb86" stroke-width="1.25" stroke-linejoin="round"/><path d="M994.4000000000001 824.9 V830.4" stroke="#92bb86" stroke-width="1.25"/><ellipse cx="1066.5" cy="815.2" rx="2.5" ry="3.6" fill="none" stroke="#92bb86" stroke-width="1.25"/><path d="M1066.5 818.8000000000001 V825.7" stroke="#92bb86" stroke-width="1.25"/><path d="M1074.1 811.4000000000001 L1076.6999999999998 820.2 H1071.5 Z" fill="none" stroke="#92bb86" stroke-width="1.25" stroke-linejoin="round"/><path d="M1074.1 820.2 V825.7" stroke="#92bb86" stroke-width="1.25"/><ellipse cx="1105.1000000000001" cy="814.3" rx="2.5" ry="3.6" fill="none" stroke="#92bb86" stroke-width="1.25"/><path d="M1105.1000000000001 817.9 V824.8" stroke="#92bb86" stroke-width="1.25"/><path d="M1112.7 810.5 L1115.3 819.3 H1110.1000000000001 Z" fill="none" stroke="#92bb86" stroke-width="1.25" stroke-linejoin="round"/><path d="M1112.7 819.3 V824.8" stroke="#92bb86" stroke-width="1.25"/><ellipse cx="1165.2" cy="812.2" rx="2.5" ry="3.6" fill="none" stroke="#92bb86" stroke-width="1.25"/><path d="M1165.2 815.8000000000001 V822.7" stroke="#92bb86" stroke-width="1.25"/><path d="M1172.8 808.4000000000001 L1175.3999999999999 817.2 H1170.2 Z" fill="none" stroke="#92bb86" stroke-width="1.25" stroke-linejoin="round"/><path d="M1172.8 817.2 V822.7" stroke="#92bb86" stroke-width="1.25"/><ellipse cx="1207.5" cy="825.8" rx="2.5" ry="3.6" fill="none" stroke="#92bb86" stroke-width="1.25"/><path d="M1207.5 829.4 V836.3" stroke="#92bb86" stroke-width="1.25"/><path d="M1215.1 822.0 L1217.6999999999998 830.8 H1212.5 Z" fill="none" stroke="#92bb86" stroke-width="1.25" stroke-linejoin="round"/><path d="M1215.1 830.8 V836.3" stroke="#92bb86" stroke-width="1.25"/><ellipse cx="1288.8" cy="822.6" rx="2.5" ry="3.6" fill="none" stroke="#92bb86" stroke-width="1.25"/><path d="M1288.8 826.2 V833.1" stroke="#92bb86" stroke-width="1.25"/><path d="M1281.2 818.8000000000001 L1283.8 827.6 H1278.6000000000001 Z" fill="none" stroke="#92bb86" stroke-width="1.25" stroke-linejoin="round"/><path d="M1281.2 827.6 V833.1" stroke="#92bb86" stroke-width="1.25"/><ellipse cx="1324.4" cy="817.9" rx="2.5" ry="3.6" fill="none" stroke="#92bb86" stroke-width="1.25"/><path d="M1324.4 821.5 V828.4" stroke="#92bb86" stroke-width="1.25"/><path d="M1332.0 814.1 L1334.6 822.9 H1329.4 Z" fill="none" stroke="#92bb86" stroke-width="1.25" stroke-linejoin="round"/><path d="M1332.0 822.9 V828.4" stroke="#92bb86" stroke-width="1.25"/><ellipse cx="1377.2" cy="827.8" rx="2.5" ry="3.6" fill="none" stroke="#92bb86" stroke-width="1.25"/><path d="M1377.2 831.4 V838.3" stroke="#92bb86" stroke-width="1.25"/><path d="M1369.6000000000001 824.0 L1372.2 832.8 H1367.0000000000002 Z" fill="none" stroke="#92bb86" stroke-width="1.25" stroke-linejoin="round"/><path d="M1369.6000000000001 832.8 V838.3" stroke="#92bb86" stroke-width="1.25"/><ellipse cx="1427.0" cy="815.3" rx="2.5" ry="3.6" fill="none" stroke="#92bb86" stroke-width="1.25"/><path d="M1427.0 818.9 V825.8" stroke="#92bb86" stroke-width="1.25"/><path d="M1434.6 811.5 L1437.1999999999998 820.3 H1432.0 Z" fill="none" stroke="#92bb86" stroke-width="1.25" stroke-linejoin="round"/><path d="M1434.6 820.3 V825.8" stroke="#92bb86" stroke-width="1.25"/><ellipse cx="1489.2" cy="817.6" rx="2.5" ry="3.6" fill="none" stroke="#92bb86" stroke-width="1.25"/><path d="M1489.2 821.2 V828.1" stroke="#92bb86" stroke-width="1.25"/><path d="M1496.8 813.8000000000001 L1499.3999999999999 822.6 H1494.2 Z" fill="none" stroke="#92bb86" stroke-width="1.25" stroke-linejoin="round"/><path d="M1496.8 822.6 V828.1" stroke="#92bb86" stroke-width="1.25"/><ellipse cx="1535.7" cy="819.2" rx="2.5" ry="3.6" fill="none" stroke="#92bb86" stroke-width="1.25"/><path d="M1535.7 822.8000000000001 V829.7" stroke="#92bb86" stroke-width="1.25"/><path d="M1543.3 815.4000000000001 L1545.8999999999999 824.2 H1540.7 Z" fill="none" stroke="#92bb86" stroke-width="1.25" stroke-linejoin="round"/><path d="M1543.3 824.2 V829.7" stroke="#92bb86" stroke-width="1.25"/><ellipse cx="1604.3" cy="825.1" rx="2.5" ry="3.6" fill="none" stroke="#92bb86" stroke-width="1.25"/><path d="M1604.3 828.7 V835.6" stroke="#92bb86" stroke-width="1.25"/><path d="M1611.8999999999999 821.3000000000001 L1614.4999999999998 830.1 H1609.3 Z" fill="none" stroke="#92bb86" stroke-width="1.25" stroke-linejoin="round"/><path d="M1611.8999999999999 830.1 V835.6" stroke="#92bb86" stroke-width="1.25"/><ellipse cx="1654.6" cy="816.5" rx="2.5" ry="3.6" fill="none" stroke="#92bb86" stroke-width="1.25"/><path d="M1654.6 820.1 V827.0" stroke="#92bb86" stroke-width="1.25"/><path d="M1647.0 812.7 L1649.6 821.5 H1644.4 Z" fill="none" stroke="#92bb86" stroke-width="1.25" stroke-linejoin="round"/><path d="M1647.0 821.5 V827.0" stroke="#92bb86" stroke-width="1.25"/><ellipse cx="1714.8" cy="823.2" rx="2.5" ry="3.6" fill="none" stroke="#92bb86" stroke-width="1.25"/><path d="M1714.8 826.8000000000001 V833.7" stroke="#92bb86" stroke-width="1.25"/><path d="M1722.3999999999999 819.4000000000001 L1724.9999999999998 828.2 H1719.8 Z" fill="none" stroke="#92bb86" stroke-width="1.25" stroke-linejoin="round"/><path d="M1722.3999999999999 828.2 V833.7" stroke="#92bb86" stroke-width="1.25"/><ellipse cx="1749.9" cy="818.8" rx="2.5" ry="3.6" fill="none" stroke="#92bb86" stroke-width="1.25"/><path d="M1749.9 822.4 V829.3" stroke="#92bb86" stroke-width="1.25"/><path d="M1757.5 815.0 L1760.1 823.8 H1754.9 Z" fill="none" stroke="#92bb86" stroke-width="1.25" stroke-linejoin="round"/><path d="M1757.5 823.8 V829.3" stroke="#92bb86" stroke-width="1.25"/><ellipse cx="1823.0" cy="812.5" rx="2.5" ry="3.6" fill="none" stroke="#92bb86" stroke-width="1.25"/><path d="M1823.0 816.1 V823.0" stroke="#92bb86" stroke-width="1.25"/><path d="M1815.4 808.7 L1818.0 817.5 H1812.8000000000002 Z" fill="none" stroke="#92bb86" stroke-width="1.25" stroke-linejoin="round"/><path d="M1815.4 817.5 V823.0" stroke="#92bb86" stroke-width="1.25"/><ellipse cx="1885.6" cy="814.8" rx="2.5" ry="3.6" fill="none" stroke="#92bb86" stroke-width="1.25"/><path d="M1885.6 818.4 V825.3" stroke="#92bb86" stroke-width="1.25"/><path d="M1878.0 811.0 L1880.6 819.8 H1875.4 Z" fill="none" stroke="#92bb86" stroke-width="1.25" stroke-linejoin="round"/><path d="M1878.0 819.8 V825.3" stroke="#92bb86" stroke-width="1.25"/><ellipse cx="1915.6000000000001" cy="824.1" rx="2.5" ry="3.6" fill="none" stroke="#92bb86" stroke-width="1.25"/><path d="M1915.6000000000001 827.7 V834.6" stroke="#92bb86" stroke-width="1.25"/><path d="M1923.2 820.3000000000001 L1925.8 829.1 H1920.6000000000001 Z" fill="none" stroke="#92bb86" stroke-width="1.25" stroke-linejoin="round"/><path d="M1923.2 829.1 V834.6" stroke="#92bb86" stroke-width="1.25"/><ellipse cx="1973.1" cy="813.1" rx="2.5" ry="3.6" fill="none" stroke="#92bb86" stroke-width="1.25"/><path d="M1973.1 816.7 V823.6" stroke="#92bb86" stroke-width="1.25"/><path d="M1965.5 809.3000000000001 L1968.1 818.1 H1962.9 Z" fill="none" stroke="#92bb86" stroke-width="1.25" stroke-linejoin="round"/><path d="M1965.5 818.1 V823.6" stroke="#92bb86" stroke-width="1.25"/><ellipse cx="438.90000000000003" cy="868.4" rx="2.5" ry="3.6" fill="none" stroke="#92bb86" stroke-width="1.25"/><path d="M438.90000000000003 872.0 V878.9" stroke="#92bb86" stroke-width="1.25"/><path d="M431.3 864.6 L433.90000000000003 873.4 H428.7 Z" fill="none" stroke="#92bb86" stroke-width="1.25" stroke-linejoin="round"/><path d="M431.3 873.4 V878.9" stroke="#92bb86" stroke-width="1.25"/><ellipse cx="485.4" cy="861.8" rx="2.5" ry="3.6" fill="none" stroke="#92bb86" stroke-width="1.25"/><path d="M485.4 865.4 V872.3" stroke="#92bb86" stroke-width="1.25"/><path d="M493.0 858.0 L495.6 866.8 H490.4 Z" fill="none" stroke="#92bb86" stroke-width="1.25" stroke-linejoin="round"/><path d="M493.0 866.8 V872.3" stroke="#92bb86" stroke-width="1.25"/><ellipse cx="550.6" cy="860.0" rx="2.5" ry="3.6" fill="none" stroke="#92bb86" stroke-width="1.25"/><path d="M550.6 863.6 V870.5" stroke="#92bb86" stroke-width="1.25"/><path d="M558.1999999999999 856.2 L560.8 865.0 H555.5999999999999 Z" fill="none" stroke="#92bb86" stroke-width="1.25" stroke-linejoin="round"/><path d="M558.1999999999999 865.0 V870.5" stroke="#92bb86" stroke-width="1.25"/><ellipse cx="587.0" cy="865.7" rx="2.5" ry="3.6" fill="none" stroke="#92bb86" stroke-width="1.25"/><path d="M587.0 869.3000000000001 V876.2" stroke="#92bb86" stroke-width="1.25"/><path d="M594.5999999999999 861.9000000000001 L597.1999999999999 870.7 H591.9999999999999 Z" fill="none" stroke="#92bb86" stroke-width="1.25" stroke-linejoin="round"/><path d="M594.5999999999999 870.7 V876.2" stroke="#92bb86" stroke-width="1.25"/><ellipse cx="668.0999999999999" cy="872.7" rx="2.5" ry="3.6" fill="none" stroke="#92bb86" stroke-width="1.25"/><path d="M668.0999999999999 876.3000000000001 V883.2" stroke="#92bb86" stroke-width="1.25"/><path d="M660.5 868.9000000000001 L663.1 877.7 H657.9 Z" fill="none" stroke="#92bb86" stroke-width="1.25" stroke-linejoin="round"/><path d="M660.5 877.7 V883.2" stroke="#92bb86" stroke-width="1.25"/><ellipse cx="705.3" cy="870.8" rx="2.5" ry="3.6" fill="none" stroke="#92bb86" stroke-width="1.25"/><path d="M705.3 874.4 V881.3" stroke="#92bb86" stroke-width="1.25"/><path d="M697.7 867.0 L700.3000000000001 875.8 H695.1 Z" fill="none" stroke="#92bb86" stroke-width="1.25" stroke-linejoin="round"/><path d="M697.7 875.8 V881.3" stroke="#92bb86" stroke-width="1.25"/><ellipse cx="759.5999999999999" cy="865.8" rx="2.5" ry="3.6" fill="none" stroke="#92bb86" stroke-width="1.25"/><path d="M759.5999999999999 869.4 V876.3" stroke="#92bb86" stroke-width="1.25"/><path d="M752.0 862.0 L754.6 870.8 H749.4 Z" fill="none" stroke="#92bb86" stroke-width="1.25" stroke-linejoin="round"/><path d="M752.0 870.8 V876.3" stroke="#92bb86" stroke-width="1.25"/><ellipse cx="811.4000000000001" cy="873.8" rx="2.5" ry="3.6" fill="none" stroke="#92bb86" stroke-width="1.25"/><path d="M811.4000000000001 877.4 V884.3" stroke="#92bb86" stroke-width="1.25"/><path d="M819.0 870.0 L821.6 878.8 H816.4 Z" fill="none" stroke="#92bb86" stroke-width="1.25" stroke-linejoin="round"/><path d="M819.0 878.8 V884.3" stroke="#92bb86" stroke-width="1.25"/><ellipse cx="875.8" cy="870.6" rx="2.5" ry="3.6" fill="none" stroke="#92bb86" stroke-width="1.25"/><path d="M875.8 874.2 V881.1" stroke="#92bb86" stroke-width="1.25"/><path d="M868.2 866.8000000000001 L870.8000000000001 875.6 H865.6 Z" fill="none" stroke="#92bb86" stroke-width="1.25" stroke-linejoin="round"/><path d="M868.2 875.6 V881.1" stroke="#92bb86" stroke-width="1.25"/><ellipse cx="919.8" cy="870.1" rx="2.5" ry="3.6" fill="none" stroke="#92bb86" stroke-width="1.25"/><path d="M919.8 873.7 V880.6" stroke="#92bb86" stroke-width="1.25"/><path d="M912.2 866.3000000000001 L914.8000000000001 875.1 H909.6 Z" fill="none" stroke="#92bb86" stroke-width="1.25" stroke-linejoin="round"/><path d="M912.2 875.1 V880.6" stroke="#92bb86" stroke-width="1.25"/><ellipse cx="990.5" cy="876.2" rx="2.5" ry="3.6" fill="none" stroke="#92bb86" stroke-width="1.25"/><path d="M990.5 879.8000000000001 V886.7" stroke="#92bb86" stroke-width="1.25"/><path d="M982.9000000000001 872.4000000000001 L985.5000000000001 881.2 H980.3000000000001 Z" fill="none" stroke="#92bb86" stroke-width="1.25" stroke-linejoin="round"/><path d="M982.9000000000001 881.2 V886.7" stroke="#92bb86" stroke-width="1.25"/><ellipse cx="1039.8999999999999" cy="873.0" rx="2.5" ry="3.6" fill="none" stroke="#92bb86" stroke-width="1.25"/><path d="M1039.8999999999999 876.6 V883.5" stroke="#92bb86" stroke-width="1.25"/><path d="M1032.3 869.2 L1034.8999999999999 878.0 H1029.7 Z" fill="none" stroke="#92bb86" stroke-width="1.25" stroke-linejoin="round"/><path d="M1032.3 878.0 V883.5" stroke="#92bb86" stroke-width="1.25"/><ellipse cx="1076.6000000000001" cy="872.4" rx="2.5" ry="3.6" fill="none" stroke="#92bb86" stroke-width="1.25"/><path d="M1076.6000000000001 876.0 V882.9" stroke="#92bb86" stroke-width="1.25"/><path d="M1084.2 868.6 L1086.8 877.4 H1081.6000000000001 Z" fill="none" stroke="#92bb86" stroke-width="1.25" stroke-linejoin="round"/><path d="M1084.2 877.4 V882.9" stroke="#92bb86" stroke-width="1.25"/><ellipse cx="1145.9" cy="872.0" rx="2.5" ry="3.6" fill="none" stroke="#92bb86" stroke-width="1.25"/><path d="M1145.9 875.6 V882.5" stroke="#92bb86" stroke-width="1.25"/><path d="M1153.5 868.2 L1156.1 877.0 H1150.9 Z" fill="none" stroke="#92bb86" stroke-width="1.25" stroke-linejoin="round"/><path d="M1153.5 877.0 V882.5" stroke="#92bb86" stroke-width="1.25"/><ellipse cx="1204.8" cy="870.8" rx="2.5" ry="3.6" fill="none" stroke="#92bb86" stroke-width="1.25"/><path d="M1204.8 874.4 V881.3" stroke="#92bb86" stroke-width="1.25"/><path d="M1197.2 867.0 L1199.8 875.8 H1194.6000000000001 Z" fill="none" stroke="#92bb86" stroke-width="1.25" stroke-linejoin="round"/><path d="M1197.2 875.8 V881.3" stroke="#92bb86" stroke-width="1.25"/><ellipse cx="1248.6" cy="870.6" rx="2.5" ry="3.6" fill="none" stroke="#92bb86" stroke-width="1.25"/><path d="M1248.6 874.2 V881.1" stroke="#92bb86" stroke-width="1.25"/><path d="M1241.0 866.8000000000001 L1243.6 875.6 H1238.4 Z" fill="none" stroke="#92bb86" stroke-width="1.25" stroke-linejoin="round"/><path d="M1241.0 875.6 V881.1" stroke="#92bb86" stroke-width="1.25"/><ellipse cx="1297.9" cy="873.6" rx="2.5" ry="3.6" fill="none" stroke="#92bb86" stroke-width="1.25"/><path d="M1297.9 877.2 V884.1" stroke="#92bb86" stroke-width="1.25"/><path d="M1305.5 869.8000000000001 L1308.1 878.6 H1302.9 Z" fill="none" stroke="#92bb86" stroke-width="1.25" stroke-linejoin="round"/><path d="M1305.5 878.6 V884.1" stroke="#92bb86" stroke-width="1.25"/><ellipse cx="1365.3999999999999" cy="863.0" rx="2.5" ry="3.6" fill="none" stroke="#92bb86" stroke-width="1.25"/><path d="M1365.3999999999999 866.6 V873.5" stroke="#92bb86" stroke-width="1.25"/><path d="M1357.8 859.2 L1360.3999999999999 868.0 H1355.2 Z" fill="none" stroke="#92bb86" stroke-width="1.25" stroke-linejoin="round"/><path d="M1357.8 868.0 V873.5" stroke="#92bb86" stroke-width="1.25"/><ellipse cx="1414.5" cy="870.4" rx="2.5" ry="3.6" fill="none" stroke="#92bb86" stroke-width="1.25"/><path d="M1414.5 874.0 V880.9" stroke="#92bb86" stroke-width="1.25"/><path d="M1406.9 866.6 L1409.5 875.4 H1404.3000000000002 Z" fill="none" stroke="#92bb86" stroke-width="1.25" stroke-linejoin="round"/><path d="M1406.9 875.4 V880.9" stroke="#92bb86" stroke-width="1.25"/><ellipse cx="1474.7" cy="876.6" rx="2.5" ry="3.6" fill="none" stroke="#92bb86" stroke-width="1.25"/><path d="M1474.7 880.2 V887.1" stroke="#92bb86" stroke-width="1.25"/><path d="M1467.1000000000001 872.8000000000001 L1469.7 881.6 H1464.5000000000002 Z" fill="none" stroke="#92bb86" stroke-width="1.25" stroke-linejoin="round"/><path d="M1467.1000000000001 881.6 V887.1" stroke="#92bb86" stroke-width="1.25"/><ellipse cx="1528.1" cy="873.6" rx="2.5" ry="3.6" fill="none" stroke="#92bb86" stroke-width="1.25"/><path d="M1528.1 877.2 V884.1" stroke="#92bb86" stroke-width="1.25"/><path d="M1520.5 869.8000000000001 L1523.1 878.6 H1517.9 Z" fill="none" stroke="#92bb86" stroke-width="1.25" stroke-linejoin="round"/><path d="M1520.5 878.6 V884.1" stroke="#92bb86" stroke-width="1.25"/><ellipse cx="1577.5" cy="877.5" rx="2.5" ry="3.6" fill="none" stroke="#92bb86" stroke-width="1.25"/><path d="M1577.5 881.1 V888.0" stroke="#92bb86" stroke-width="1.25"/><path d="M1569.9 873.7 L1572.5 882.5 H1567.3000000000002 Z" fill="none" stroke="#92bb86" stroke-width="1.25" stroke-linejoin="round"/><path d="M1569.9 882.5 V888.0" stroke="#92bb86" stroke-width="1.25"/><ellipse cx="1625.4" cy="861.2" rx="2.5" ry="3.6" fill="none" stroke="#92bb86" stroke-width="1.25"/><path d="M1625.4 864.8000000000001 V871.7" stroke="#92bb86" stroke-width="1.25"/><path d="M1633.0 857.4000000000001 L1635.6 866.2 H1630.4 Z" fill="none" stroke="#92bb86" stroke-width="1.25" stroke-linejoin="round"/><path d="M1633.0 866.2 V871.7" stroke="#92bb86" stroke-width="1.25"/><ellipse cx="1698.1" cy="868.4" rx="2.5" ry="3.6" fill="none" stroke="#92bb86" stroke-width="1.25"/><path d="M1698.1 872.0 V878.9" stroke="#92bb86" stroke-width="1.25"/><path d="M1690.5 864.6 L1693.1 873.4 H1687.9 Z" fill="none" stroke="#92bb86" stroke-width="1.25" stroke-linejoin="round"/><path d="M1690.5 873.4 V878.9" stroke="#92bb86" stroke-width="1.25"/><ellipse cx="1734.3" cy="868.8" rx="2.5" ry="3.6" fill="none" stroke="#92bb86" stroke-width="1.25"/><path d="M1734.3 872.4 V879.3" stroke="#92bb86" stroke-width="1.25"/><path d="M1741.8999999999999 865.0 L1744.4999999999998 873.8 H1739.3 Z" fill="none" stroke="#92bb86" stroke-width="1.25" stroke-linejoin="round"/><path d="M1741.8999999999999 873.8 V879.3" stroke="#92bb86" stroke-width="1.25"/><ellipse cx="1786.5" cy="870.8" rx="2.5" ry="3.6" fill="none" stroke="#92bb86" stroke-width="1.25"/><path d="M1786.5 874.4 V881.3" stroke="#92bb86" stroke-width="1.25"/><path d="M1794.1 867.0 L1796.6999999999998 875.8 H1791.5 Z" fill="none" stroke="#92bb86" stroke-width="1.25" stroke-linejoin="round"/><path d="M1794.1 875.8 V881.3" stroke="#92bb86" stroke-width="1.25"/><ellipse cx="1840.8" cy="866.2" rx="2.5" ry="3.6" fill="none" stroke="#92bb86" stroke-width="1.25"/><path d="M1840.8 869.8000000000001 V876.7" stroke="#92bb86" stroke-width="1.25"/><path d="M1848.3999999999999 862.4000000000001 L1850.9999999999998 871.2 H1845.8 Z" fill="none" stroke="#92bb86" stroke-width="1.25" stroke-linejoin="round"/><path d="M1848.3999999999999 871.2 V876.7" stroke="#92bb86" stroke-width="1.25"/><ellipse cx="1893.7" cy="871.7" rx="2.5" ry="3.6" fill="none" stroke="#92bb86" stroke-width="1.25"/><path d="M1893.7 875.3000000000001 V882.2" stroke="#92bb86" stroke-width="1.25"/><path d="M1886.1000000000001 867.9000000000001 L1888.7 876.7 H1883.5000000000002 Z" fill="none" stroke="#92bb86" stroke-width="1.25" stroke-linejoin="round"/><path d="M1886.1000000000001 876.7 V882.2" stroke="#92bb86" stroke-width="1.25"/><ellipse cx="1955.6000000000001" cy="860.4" rx="2.5" ry="3.6" fill="none" stroke="#92bb86" stroke-width="1.25"/><path d="M1955.6000000000001 864.0 V870.9" stroke="#92bb86" stroke-width="1.25"/><path d="M1963.2 856.6 L1965.8 865.4 H1960.6000000000001 Z" fill="none" stroke="#92bb86" stroke-width="1.25" stroke-linejoin="round"/><path d="M1963.2 865.4 V870.9" stroke="#92bb86" stroke-width="1.25"/><ellipse cx="466.8" cy="907.1" rx="2.5" ry="3.6" fill="none" stroke="#92bb86" stroke-width="1.25"/><path d="M466.8 910.7 V917.6" stroke="#92bb86" stroke-width="1.25"/><path d="M459.2 903.3000000000001 L461.8 912.1 H456.59999999999997 Z" fill="none" stroke="#92bb86" stroke-width="1.25" stroke-linejoin="round"/><path d="M459.2 912.1 V917.6" stroke="#92bb86" stroke-width="1.25"/><ellipse cx="522.0" cy="906.3" rx="2.5" ry="3.6" fill="none" stroke="#92bb86" stroke-width="1.25"/><path d="M522.0 909.9 V916.8" stroke="#92bb86" stroke-width="1.25"/><path d="M514.4 902.5 L517.0 911.3 H511.79999999999995 Z" fill="none" stroke="#92bb86" stroke-width="1.25" stroke-linejoin="round"/><path d="M514.4 911.3 V916.8" stroke="#92bb86" stroke-width="1.25"/><ellipse cx="576.5999999999999" cy="920.0" rx="2.5" ry="3.6" fill="none" stroke="#92bb86" stroke-width="1.25"/><path d="M576.5999999999999 923.6 V930.5" stroke="#92bb86" stroke-width="1.25"/><path d="M569.0 916.2 L571.6 925.0 H566.4 Z" fill="none" stroke="#92bb86" stroke-width="1.25" stroke-linejoin="round"/><path d="M569.0 925.0 V930.5" stroke="#92bb86" stroke-width="1.25"/><ellipse cx="618.6" cy="910.5" rx="2.5" ry="3.6" fill="none" stroke="#92bb86" stroke-width="1.25"/><path d="M618.6 914.1 V921.0" stroke="#92bb86" stroke-width="1.25"/><path d="M626.1999999999999 906.7 L628.8 915.5 H623.5999999999999 Z" fill="none" stroke="#92bb86" stroke-width="1.25" stroke-linejoin="round"/><path d="M626.1999999999999 915.5 V921.0" stroke="#92bb86" stroke-width="1.25"/><ellipse cx="699.0999999999999" cy="916.5" rx="2.5" ry="3.6" fill="none" stroke="#92bb86" stroke-width="1.25"/><path d="M699.0999999999999 920.1 V927.0" stroke="#92bb86" stroke-width="1.25"/><path d="M691.5 912.7 L694.1 921.5 H688.9 Z" fill="none" stroke="#92bb86" stroke-width="1.25" stroke-linejoin="round"/><path d="M691.5 921.5 V927.0" stroke="#92bb86" stroke-width="1.25"/><ellipse cx="749.1999999999999" cy="913.8" rx="2.5" ry="3.6" fill="none" stroke="#92bb86" stroke-width="1.25"/><path d="M749.1999999999999 917.4 V924.3" stroke="#92bb86" stroke-width="1.25"/><path d="M741.6 910.0 L744.2 918.8 H739.0 Z" fill="none" stroke="#92bb86" stroke-width="1.25" stroke-linejoin="round"/><path d="M741.6 918.8 V924.3" stroke="#92bb86" stroke-width="1.25"/><ellipse cx="776.8000000000001" cy="921.5" rx="2.5" ry="3.6" fill="none" stroke="#92bb86" stroke-width="1.25"/><path d="M776.8000000000001 925.1 V932.0" stroke="#92bb86" stroke-width="1.25"/><path d="M784.4 917.7 L787.0 926.5 H781.8 Z" fill="none" stroke="#92bb86" stroke-width="1.25" stroke-linejoin="round"/><path d="M784.4 926.5 V932.0" stroke="#92bb86" stroke-width="1.25"/><ellipse cx="845.0" cy="915.4" rx="2.5" ry="3.6" fill="none" stroke="#92bb86" stroke-width="1.25"/><path d="M845.0 919.0 V925.9" stroke="#92bb86" stroke-width="1.25"/><path d="M852.5999999999999 911.6 L855.1999999999999 920.4 H849.9999999999999 Z" fill="none" stroke="#92bb86" stroke-width="1.25" stroke-linejoin="round"/><path d="M852.5999999999999 920.4 V925.9" stroke="#92bb86" stroke-width="1.25"/><ellipse cx="895.0999999999999" cy="925.3" rx="2.5" ry="3.6" fill="none" stroke="#92bb86" stroke-width="1.25"/><path d="M895.0999999999999 928.9 V935.8" stroke="#92bb86" stroke-width="1.25"/><path d="M887.5 921.5 L890.1 930.3 H884.9 Z" fill="none" stroke="#92bb86" stroke-width="1.25" stroke-linejoin="round"/><path d="M887.5 930.3 V935.8" stroke="#92bb86" stroke-width="1.25"/><ellipse cx="953.1" cy="922.4" rx="2.5" ry="3.6" fill="none" stroke="#92bb86" stroke-width="1.25"/><path d="M953.1 926.0 V932.9" stroke="#92bb86" stroke-width="1.25"/><path d="M960.6999999999999 918.6 L963.3 927.4 H958.0999999999999 Z" fill="none" stroke="#92bb86" stroke-width="1.25" stroke-linejoin="round"/><path d="M960.6999999999999 927.4 V932.9" stroke="#92bb86" stroke-width="1.25"/><ellipse cx="1002.3000000000001" cy="911.9" rx="2.5" ry="3.6" fill="none" stroke="#92bb86" stroke-width="1.25"/><path d="M1002.3000000000001 915.5 V922.4" stroke="#92bb86" stroke-width="1.25"/><path d="M1009.9 908.1 L1012.5 916.9 H1007.3 Z" fill="none" stroke="#92bb86" stroke-width="1.25" stroke-linejoin="round"/><path d="M1009.9 916.9 V922.4" stroke="#92bb86" stroke-width="1.25"/><ellipse cx="1054.3" cy="922.7" rx="2.5" ry="3.6" fill="none" stroke="#92bb86" stroke-width="1.25"/><path d="M1054.3 926.3000000000001 V933.2" stroke="#92bb86" stroke-width="1.25"/><path d="M1046.7 918.9000000000001 L1049.3 927.7 H1044.1000000000001 Z" fill="none" stroke="#92bb86" stroke-width="1.25" stroke-linejoin="round"/><path d="M1046.7 927.7 V933.2" stroke="#92bb86" stroke-width="1.25"/><ellipse cx="1128.6" cy="911.3" rx="2.5" ry="3.6" fill="none" stroke="#92bb86" stroke-width="1.25"/><path d="M1128.6 914.9 V921.8" stroke="#92bb86" stroke-width="1.25"/><path d="M1121.0 907.5 L1123.6 916.3 H1118.4 Z" fill="none" stroke="#92bb86" stroke-width="1.25" stroke-linejoin="round"/><path d="M1121.0 916.3 V921.8" stroke="#92bb86" stroke-width="1.25"/><ellipse cx="1165.8999999999999" cy="914.5" rx="2.5" ry="3.6" fill="none" stroke="#92bb86" stroke-width="1.25"/><path d="M1165.8999999999999 918.1 V925.0" stroke="#92bb86" stroke-width="1.25"/><path d="M1158.3 910.7 L1160.8999999999999 919.5 H1155.7 Z" fill="none" stroke="#92bb86" stroke-width="1.25" stroke-linejoin="round"/><path d="M1158.3 919.5 V925.0" stroke="#92bb86" stroke-width="1.25"/><ellipse cx="1212.8999999999999" cy="920.4" rx="2.5" ry="3.6" fill="none" stroke="#92bb86" stroke-width="1.25"/><path d="M1212.8999999999999 924.0 V930.9" stroke="#92bb86" stroke-width="1.25"/><path d="M1205.3 916.6 L1207.8999999999999 925.4 H1202.7 Z" fill="none" stroke="#92bb86" stroke-width="1.25" stroke-linejoin="round"/><path d="M1205.3 925.4 V930.9" stroke="#92bb86" stroke-width="1.25"/><ellipse cx="1273.7" cy="912.0" rx="2.5" ry="3.6" fill="none" stroke="#92bb86" stroke-width="1.25"/><path d="M1273.7 915.6 V922.5" stroke="#92bb86" stroke-width="1.25"/><path d="M1266.1000000000001 908.2 L1268.7 917.0 H1263.5000000000002 Z" fill="none" stroke="#92bb86" stroke-width="1.25" stroke-linejoin="round"/><path d="M1266.1000000000001 917.0 V922.5" stroke="#92bb86" stroke-width="1.25"/><ellipse cx="1325.2" cy="918.7" rx="2.5" ry="3.6" fill="none" stroke="#92bb86" stroke-width="1.25"/><path d="M1325.2 922.3000000000001 V929.2" stroke="#92bb86" stroke-width="1.25"/><path d="M1332.8 914.9000000000001 L1335.3999999999999 923.7 H1330.2 Z" fill="none" stroke="#92bb86" stroke-width="1.25" stroke-linejoin="round"/><path d="M1332.8 923.7 V929.2" stroke="#92bb86" stroke-width="1.25"/><ellipse cx="1377.3" cy="924.6" rx="2.5" ry="3.6" fill="none" stroke="#92bb86" stroke-width="1.25"/><path d="M1377.3 928.2 V935.1" stroke="#92bb86" stroke-width="1.25"/><path d="M1384.8999999999999 920.8000000000001 L1387.4999999999998 929.6 H1382.3 Z" fill="none" stroke="#92bb86" stroke-width="1.25" stroke-linejoin="round"/><path d="M1384.8999999999999 929.6 V935.1" stroke="#92bb86" stroke-width="1.25"/><ellipse cx="1422.8" cy="922.6" rx="2.5" ry="3.6" fill="none" stroke="#92bb86" stroke-width="1.25"/><path d="M1422.8 926.2 V933.1" stroke="#92bb86" stroke-width="1.25"/><path d="M1430.3999999999999 918.8000000000001 L1432.9999999999998 927.6 H1427.8 Z" fill="none" stroke="#92bb86" stroke-width="1.25" stroke-linejoin="round"/><path d="M1430.3999999999999 927.6 V933.1" stroke="#92bb86" stroke-width="1.25"/><ellipse cx="1497.2" cy="908.8" rx="2.5" ry="3.6" fill="none" stroke="#92bb86" stroke-width="1.25"/><path d="M1497.2 912.4 V919.3" stroke="#92bb86" stroke-width="1.25"/><path d="M1504.8 905.0 L1507.3999999999999 913.8 H1502.2 Z" fill="none" stroke="#92bb86" stroke-width="1.25" stroke-linejoin="round"/><path d="M1504.8 913.8 V919.3" stroke="#92bb86" stroke-width="1.25"/><ellipse cx="1554.5" cy="906.3" rx="2.5" ry="3.6" fill="none" stroke="#92bb86" stroke-width="1.25"/><path d="M1554.5 909.9 V916.8" stroke="#92bb86" stroke-width="1.25"/><path d="M1546.9 902.5 L1549.5 911.3 H1544.3000000000002 Z" fill="none" stroke="#92bb86" stroke-width="1.25" stroke-linejoin="round"/><path d="M1546.9 911.3 V916.8" stroke="#92bb86" stroke-width="1.25"/><ellipse cx="1617.3999999999999" cy="919.1" rx="2.5" ry="3.6" fill="none" stroke="#92bb86" stroke-width="1.25"/><path d="M1617.3999999999999 922.7 V929.6" stroke="#92bb86" stroke-width="1.25"/><path d="M1609.8 915.3000000000001 L1612.3999999999999 924.1 H1607.2 Z" fill="none" stroke="#92bb86" stroke-width="1.25" stroke-linejoin="round"/><path d="M1609.8 924.1 V929.6" stroke="#92bb86" stroke-width="1.25"/><ellipse cx="1647.6" cy="908.9" rx="2.5" ry="3.6" fill="none" stroke="#92bb86" stroke-width="1.25"/><path d="M1647.6 912.5 V919.4" stroke="#92bb86" stroke-width="1.25"/><path d="M1640.0 905.1 L1642.6 913.9 H1637.4 Z" fill="none" stroke="#92bb86" stroke-width="1.25" stroke-linejoin="round"/><path d="M1640.0 913.9 V919.4" stroke="#92bb86" stroke-width="1.25"/><ellipse cx="1720.5" cy="912.9" rx="2.5" ry="3.6" fill="none" stroke="#92bb86" stroke-width="1.25"/><path d="M1720.5 916.5 V923.4" stroke="#92bb86" stroke-width="1.25"/><path d="M1712.9 909.1 L1715.5 917.9 H1710.3000000000002 Z" fill="none" stroke="#92bb86" stroke-width="1.25" stroke-linejoin="round"/><path d="M1712.9 917.9 V923.4" stroke="#92bb86" stroke-width="1.25"/><ellipse cx="1778.1" cy="921.8" rx="2.5" ry="3.6" fill="none" stroke="#92bb86" stroke-width="1.25"/><path d="M1778.1 925.4 V932.3" stroke="#92bb86" stroke-width="1.25"/><path d="M1770.5 918.0 L1773.1 926.8 H1767.9 Z" fill="none" stroke="#92bb86" stroke-width="1.25" stroke-linejoin="round"/><path d="M1770.5 926.8 V932.3" stroke="#92bb86" stroke-width="1.25"/><ellipse cx="1824.2" cy="918.2" rx="2.5" ry="3.6" fill="none" stroke="#92bb86" stroke-width="1.25"/><path d="M1824.2 921.8000000000001 V928.7" stroke="#92bb86" stroke-width="1.25"/><path d="M1831.8 914.4000000000001 L1834.3999999999999 923.2 H1829.2 Z" fill="none" stroke="#92bb86" stroke-width="1.25" stroke-linejoin="round"/><path d="M1831.8 923.2 V928.7" stroke="#92bb86" stroke-width="1.25"/><ellipse cx="1871.9" cy="923.9" rx="2.5" ry="3.6" fill="none" stroke="#92bb86" stroke-width="1.25"/><path d="M1871.9 927.5 V934.4" stroke="#92bb86" stroke-width="1.25"/><path d="M1879.5 920.1 L1882.1 928.9 H1876.9 Z" fill="none" stroke="#92bb86" stroke-width="1.25" stroke-linejoin="round"/><path d="M1879.5 928.9 V934.4" stroke="#92bb86" stroke-width="1.25"/><ellipse cx="1930.7" cy="909.9" rx="2.5" ry="3.6" fill="none" stroke="#92bb86" stroke-width="1.25"/><path d="M1930.7 913.5 V920.4" stroke="#92bb86" stroke-width="1.25"/><path d="M1938.3 906.1 L1940.8999999999999 914.9 H1935.7 Z" fill="none" stroke="#92bb86" stroke-width="1.25" stroke-linejoin="round"/><path d="M1938.3 914.9 V920.4" stroke="#92bb86" stroke-width="1.25"/><ellipse cx="1983.7" cy="920.8" rx="2.5" ry="3.6" fill="none" stroke="#92bb86" stroke-width="1.25"/><path d="M1983.7 924.4 V931.3" stroke="#92bb86" stroke-width="1.25"/><path d="M1976.1000000000001 917.0 L1978.7 925.8 H1973.5000000000002 Z" fill="none" stroke="#92bb86" stroke-width="1.25" stroke-linejoin="round"/><path d="M1976.1000000000001 925.8 V931.3" stroke="#92bb86" stroke-width="1.25"/><ellipse cx="454.5" cy="965.1" rx="2.5" ry="3.6" fill="none" stroke="#92bb86" stroke-width="1.25"/><path d="M454.5 968.7 V975.6" stroke="#92bb86" stroke-width="1.25"/><path d="M446.9 961.3000000000001 L449.5 970.1 H444.29999999999995 Z" fill="none" stroke="#92bb86" stroke-width="1.25" stroke-linejoin="round"/><path d="M446.9 970.1 V975.6" stroke="#92bb86" stroke-width="1.25"/><ellipse cx="490.40000000000003" cy="956.8" rx="2.5" ry="3.6" fill="none" stroke="#92bb86" stroke-width="1.25"/><path d="M490.40000000000003 960.4 V967.3" stroke="#92bb86" stroke-width="1.25"/><path d="M482.8 953.0 L485.40000000000003 961.8 H480.2 Z" fill="none" stroke="#92bb86" stroke-width="1.25" stroke-linejoin="round"/><path d="M482.8 961.8 V967.3" stroke="#92bb86" stroke-width="1.25"/><ellipse cx="539.4" cy="963.3" rx="2.5" ry="3.6" fill="none" stroke="#92bb86" stroke-width="1.25"/><path d="M539.4 966.9 V973.8" stroke="#92bb86" stroke-width="1.25"/><path d="M531.8000000000001 959.5 L534.4000000000001 968.3 H529.2 Z" fill="none" stroke="#92bb86" stroke-width="1.25" stroke-linejoin="round"/><path d="M531.8000000000001 968.3 V973.8" stroke="#92bb86" stroke-width="1.25"/><ellipse cx="598.0" cy="964.0" rx="2.5" ry="3.6" fill="none" stroke="#92bb86" stroke-width="1.25"/><path d="M598.0 967.6 V974.5" stroke="#92bb86" stroke-width="1.25"/><path d="M605.5999999999999 960.2 L608.1999999999999 969.0 H602.9999999999999 Z" fill="none" stroke="#92bb86" stroke-width="1.25" stroke-linejoin="round"/><path d="M605.5999999999999 969.0 V974.5" stroke="#92bb86" stroke-width="1.25"/><ellipse cx="662.4000000000001" cy="954.1" rx="2.5" ry="3.6" fill="none" stroke="#92bb86" stroke-width="1.25"/><path d="M662.4000000000001 957.7 V964.6" stroke="#92bb86" stroke-width="1.25"/><path d="M670.0 950.3000000000001 L672.6 959.1 H667.4 Z" fill="none" stroke="#92bb86" stroke-width="1.25" stroke-linejoin="round"/><path d="M670.0 959.1 V964.6" stroke="#92bb86" stroke-width="1.25"/><ellipse cx="705.3000000000001" cy="965.3" rx="2.5" ry="3.6" fill="none" stroke="#92bb86" stroke-width="1.25"/><path d="M705.3000000000001 968.9 V975.8" stroke="#92bb86" stroke-width="1.25"/><path d="M712.9 961.5 L715.5 970.3 H710.3 Z" fill="none" stroke="#92bb86" stroke-width="1.25" stroke-linejoin="round"/><path d="M712.9 970.3 V975.8" stroke="#92bb86" stroke-width="1.25"/><ellipse cx="777.3" cy="961.5" rx="2.5" ry="3.6" fill="none" stroke="#92bb86" stroke-width="1.25"/><path d="M777.3 965.1 V972.0" stroke="#92bb86" stroke-width="1.25"/><path d="M769.7 957.7 L772.3000000000001 966.5 H767.1 Z" fill="none" stroke="#92bb86" stroke-width="1.25" stroke-linejoin="round"/><path d="M769.7 966.5 V972.0" stroke="#92bb86" stroke-width="1.25"/><ellipse cx="827.1" cy="955.5" rx="2.5" ry="3.6" fill="none" stroke="#92bb86" stroke-width="1.25"/><path d="M827.1 959.1 V966.0" stroke="#92bb86" stroke-width="1.25"/><path d="M834.6999999999999 951.7 L837.3 960.5 H832.0999999999999 Z" fill="none" stroke="#92bb86" stroke-width="1.25" stroke-linejoin="round"/><path d="M834.6999999999999 960.5 V966.0" stroke="#92bb86" stroke-width="1.25"/><ellipse cx="872.0" cy="954.6" rx="2.5" ry="3.6" fill="none" stroke="#92bb86" stroke-width="1.25"/><path d="M872.0 958.2 V965.1" stroke="#92bb86" stroke-width="1.25"/><path d="M879.5999999999999 950.8000000000001 L882.1999999999999 959.6 H876.9999999999999 Z" fill="none" stroke="#92bb86" stroke-width="1.25" stroke-linejoin="round"/><path d="M879.5999999999999 959.6 V965.1" stroke="#92bb86" stroke-width="1.25"/><ellipse cx="934.9" cy="972.6" rx="2.5" ry="3.6" fill="none" stroke="#92bb86" stroke-width="1.25"/><path d="M934.9 976.2 V983.1" stroke="#92bb86" stroke-width="1.25"/><path d="M927.3000000000001 968.8000000000001 L929.9000000000001 977.6 H924.7 Z" fill="none" stroke="#92bb86" stroke-width="1.25" stroke-linejoin="round"/><path d="M927.3000000000001 977.6 V983.1" stroke="#92bb86" stroke-width="1.25"/><ellipse cx="997.3" cy="964.2" rx="2.5" ry="3.6" fill="none" stroke="#92bb86" stroke-width="1.25"/><path d="M997.3 967.8000000000001 V974.7" stroke="#92bb86" stroke-width="1.25"/><path d="M989.7 960.4000000000001 L992.3000000000001 969.2 H987.1 Z" fill="none" stroke="#92bb86" stroke-width="1.25" stroke-linejoin="round"/><path d="M989.7 969.2 V974.7" stroke="#92bb86" stroke-width="1.25"/><ellipse cx="1041.3" cy="954.7" rx="2.5" ry="3.6" fill="none" stroke="#92bb86" stroke-width="1.25"/><path d="M1041.3 958.3000000000001 V965.2" stroke="#92bb86" stroke-width="1.25"/><path d="M1048.8999999999999 950.9000000000001 L1051.4999999999998 959.7 H1046.3 Z" fill="none" stroke="#92bb86" stroke-width="1.25" stroke-linejoin="round"/><path d="M1048.8999999999999 959.7 V965.2" stroke="#92bb86" stroke-width="1.25"/><ellipse cx="1087.7" cy="960.8" rx="2.5" ry="3.6" fill="none" stroke="#92bb86" stroke-width="1.25"/><path d="M1087.7 964.4 V971.3" stroke="#92bb86" stroke-width="1.25"/><path d="M1095.3 957.0 L1097.8999999999999 965.8 H1092.7 Z" fill="none" stroke="#92bb86" stroke-width="1.25" stroke-linejoin="round"/><path d="M1095.3 965.8 V971.3" stroke="#92bb86" stroke-width="1.25"/><ellipse cx="1134.5" cy="963.5" rx="2.5" ry="3.6" fill="none" stroke="#92bb86" stroke-width="1.25"/><path d="M1134.5 967.1 V974.0" stroke="#92bb86" stroke-width="1.25"/><path d="M1142.1 959.7 L1144.6999999999998 968.5 H1139.5 Z" fill="none" stroke="#92bb86" stroke-width="1.25" stroke-linejoin="round"/><path d="M1142.1 968.5 V974.0" stroke="#92bb86" stroke-width="1.25"/><ellipse cx="1207.3999999999999" cy="958.2" rx="2.5" ry="3.6" fill="none" stroke="#92bb86" stroke-width="1.25"/><path d="M1207.3999999999999 961.8000000000001 V968.7" stroke="#92bb86" stroke-width="1.25"/><path d="M1199.8 954.4000000000001 L1202.3999999999999 963.2 H1197.2 Z" fill="none" stroke="#92bb86" stroke-width="1.25" stroke-linejoin="round"/><path d="M1199.8 963.2 V968.7" stroke="#92bb86" stroke-width="1.25"/><ellipse cx="1244.0" cy="965.1" rx="2.5" ry="3.6" fill="none" stroke="#92bb86" stroke-width="1.25"/><path d="M1244.0 968.7 V975.6" stroke="#92bb86" stroke-width="1.25"/><path d="M1251.6 961.3000000000001 L1254.1999999999998 970.1 H1249.0 Z" fill="none" stroke="#92bb86" stroke-width="1.25" stroke-linejoin="round"/><path d="M1251.6 970.1 V975.6" stroke="#92bb86" stroke-width="1.25"/><ellipse cx="1302.0" cy="970.6" rx="2.5" ry="3.6" fill="none" stroke="#92bb86" stroke-width="1.25"/><path d="M1302.0 974.2 V981.1" stroke="#92bb86" stroke-width="1.25"/><path d="M1294.4 966.8000000000001 L1297.0 975.6 H1291.8000000000002 Z" fill="none" stroke="#92bb86" stroke-width="1.25" stroke-linejoin="round"/><path d="M1294.4 975.6 V981.1" stroke="#92bb86" stroke-width="1.25"/><ellipse cx="1354.3" cy="959.4" rx="2.5" ry="3.6" fill="none" stroke="#92bb86" stroke-width="1.25"/><path d="M1354.3 963.0 V969.9" stroke="#92bb86" stroke-width="1.25"/><path d="M1361.8999999999999 955.6 L1364.4999999999998 964.4 H1359.3 Z" fill="none" stroke="#92bb86" stroke-width="1.25" stroke-linejoin="round"/><path d="M1361.8999999999999 964.4 V969.9" stroke="#92bb86" stroke-width="1.25"/><ellipse cx="1421.5" cy="967.1" rx="2.5" ry="3.6" fill="none" stroke="#92bb86" stroke-width="1.25"/><path d="M1421.5 970.7 V977.6" stroke="#92bb86" stroke-width="1.25"/><path d="M1429.1 963.3000000000001 L1431.6999999999998 972.1 H1426.5 Z" fill="none" stroke="#92bb86" stroke-width="1.25" stroke-linejoin="round"/><path d="M1429.1 972.1 V977.6" stroke="#92bb86" stroke-width="1.25"/><ellipse cx="1465.1" cy="960.3" rx="2.5" ry="3.6" fill="none" stroke="#92bb86" stroke-width="1.25"/><path d="M1465.1 963.9 V970.8" stroke="#92bb86" stroke-width="1.25"/><path d="M1457.5 956.5 L1460.1 965.3 H1454.9 Z" fill="none" stroke="#92bb86" stroke-width="1.25" stroke-linejoin="round"/><path d="M1457.5 965.3 V970.8" stroke="#92bb86" stroke-width="1.25"/><ellipse cx="1518.6000000000001" cy="966.7" rx="2.5" ry="3.6" fill="none" stroke="#92bb86" stroke-width="1.25"/><path d="M1518.6000000000001 970.3000000000001 V977.2" stroke="#92bb86" stroke-width="1.25"/><path d="M1526.2 962.9000000000001 L1528.8 971.7 H1523.6000000000001 Z" fill="none" stroke="#92bb86" stroke-width="1.25" stroke-linejoin="round"/><path d="M1526.2 971.7 V977.2" stroke="#92bb86" stroke-width="1.25"/><ellipse cx="1557.3" cy="968.5" rx="2.5" ry="3.6" fill="none" stroke="#92bb86" stroke-width="1.25"/><path d="M1557.3 972.1 V979.0" stroke="#92bb86" stroke-width="1.25"/><path d="M1564.8999999999999 964.7 L1567.4999999999998 973.5 H1562.3 Z" fill="none" stroke="#92bb86" stroke-width="1.25" stroke-linejoin="round"/><path d="M1564.8999999999999 973.5 V979.0" stroke="#92bb86" stroke-width="1.25"/><ellipse cx="1633.1" cy="955.0" rx="2.5" ry="3.6" fill="none" stroke="#92bb86" stroke-width="1.25"/><path d="M1633.1 958.6 V965.5" stroke="#92bb86" stroke-width="1.25"/><path d="M1625.5 951.2 L1628.1 960.0 H1622.9 Z" fill="none" stroke="#92bb86" stroke-width="1.25" stroke-linejoin="round"/><path d="M1625.5 960.0 V965.5" stroke="#92bb86" stroke-width="1.25"/><ellipse cx="1664.4" cy="957.8" rx="2.5" ry="3.6" fill="none" stroke="#92bb86" stroke-width="1.25"/><path d="M1664.4 961.4 V968.3" stroke="#92bb86" stroke-width="1.25"/><path d="M1672.0 954.0 L1674.6 962.8 H1669.4 Z" fill="none" stroke="#92bb86" stroke-width="1.25" stroke-linejoin="round"/><path d="M1672.0 962.8 V968.3" stroke="#92bb86" stroke-width="1.25"/><ellipse cx="1735.2" cy="967.2" rx="2.5" ry="3.6" fill="none" stroke="#92bb86" stroke-width="1.25"/><path d="M1735.2 970.8000000000001 V977.7" stroke="#92bb86" stroke-width="1.25"/><path d="M1742.8 963.4000000000001 L1745.3999999999999 972.2 H1740.2 Z" fill="none" stroke="#92bb86" stroke-width="1.25" stroke-linejoin="round"/><path d="M1742.8 972.2 V977.7" stroke="#92bb86" stroke-width="1.25"/><ellipse cx="1797.7" cy="966.2" rx="2.5" ry="3.6" fill="none" stroke="#92bb86" stroke-width="1.25"/><path d="M1797.7 969.8000000000001 V976.7" stroke="#92bb86" stroke-width="1.25"/><path d="M1805.3 962.4000000000001 L1807.8999999999999 971.2 H1802.7 Z" fill="none" stroke="#92bb86" stroke-width="1.25" stroke-linejoin="round"/><path d="M1805.3 971.2 V976.7" stroke="#92bb86" stroke-width="1.25"/><ellipse cx="1843.8" cy="967.9" rx="2.5" ry="3.6" fill="none" stroke="#92bb86" stroke-width="1.25"/><path d="M1843.8 971.5 V978.4" stroke="#92bb86" stroke-width="1.25"/><path d="M1851.3999999999999 964.1 L1853.9999999999998 972.9 H1848.8 Z" fill="none" stroke="#92bb86" stroke-width="1.25" stroke-linejoin="round"/><path d="M1851.3999999999999 972.9 V978.4" stroke="#92bb86" stroke-width="1.25"/><ellipse cx="1899.3" cy="958.3" rx="2.5" ry="3.6" fill="none" stroke="#92bb86" stroke-width="1.25"/><path d="M1899.3 961.9 V968.8" stroke="#92bb86" stroke-width="1.25"/><path d="M1906.8999999999999 954.5 L1909.4999999999998 963.3 H1904.3 Z" fill="none" stroke="#92bb86" stroke-width="1.25" stroke-linejoin="round"/><path d="M1906.8999999999999 963.3 V968.8" stroke="#92bb86" stroke-width="1.25"/><ellipse cx="1954.6" cy="969.3" rx="2.5" ry="3.6" fill="none" stroke="#92bb86" stroke-width="1.25"/><path d="M1954.6 972.9 V979.8" stroke="#92bb86" stroke-width="1.25"/><path d="M1947.0 965.5 L1949.6 974.3 H1944.4 Z" fill="none" stroke="#92bb86" stroke-width="1.25" stroke-linejoin="round"/><path d="M1947.0 974.3 V979.8" stroke="#92bb86" stroke-width="1.25"/><ellipse cx="454.3" cy="1002.7" rx="2.5" ry="3.6" fill="none" stroke="#92bb86" stroke-width="1.25"/><path d="M454.3 1006.3000000000001 V1013.2" stroke="#92bb86" stroke-width="1.25"/><path d="M461.90000000000003 998.9000000000001 L464.50000000000006 1007.7 H459.3 Z" fill="none" stroke="#92bb86" stroke-width="1.25" stroke-linejoin="round"/><path d="M461.90000000000003 1007.7 V1013.2" stroke="#92bb86" stroke-width="1.25"/><ellipse cx="536.4" cy="1015.1" rx="2.5" ry="3.6" fill="none" stroke="#92bb86" stroke-width="1.25"/><path d="M536.4 1018.7 V1025.6" stroke="#92bb86" stroke-width="1.25"/><path d="M528.8000000000001 1011.3000000000001 L531.4000000000001 1020.1 H526.2 Z" fill="none" stroke="#92bb86" stroke-width="1.25" stroke-linejoin="round"/><path d="M528.8000000000001 1020.1 V1025.6" stroke="#92bb86" stroke-width="1.25"/><ellipse cx="580.2" cy="1017.7" rx="2.5" ry="3.6" fill="none" stroke="#92bb86" stroke-width="1.25"/><path d="M580.2 1021.3000000000001 V1028.2" stroke="#92bb86" stroke-width="1.25"/><path d="M587.8 1013.9000000000001 L590.4 1022.7 H585.1999999999999 Z" fill="none" stroke="#92bb86" stroke-width="1.25" stroke-linejoin="round"/><path d="M587.8 1022.7 V1028.2" stroke="#92bb86" stroke-width="1.25"/><ellipse cx="626.0" cy="1008.0" rx="2.5" ry="3.6" fill="none" stroke="#92bb86" stroke-width="1.25"/><path d="M626.0 1011.6 V1018.5" stroke="#92bb86" stroke-width="1.25"/><path d="M618.4000000000001 1004.2 L621.0000000000001 1013.0 H615.8000000000001 Z" fill="none" stroke="#92bb86" stroke-width="1.25" stroke-linejoin="round"/><path d="M618.4000000000001 1013.0 V1018.5" stroke="#92bb86" stroke-width="1.25"/><ellipse cx="674.1" cy="1010.6" rx="2.5" ry="3.6" fill="none" stroke="#92bb86" stroke-width="1.25"/><path d="M674.1 1014.2 V1021.1" stroke="#92bb86" stroke-width="1.25"/><path d="M681.6999999999999 1006.8000000000001 L684.3 1015.6 H679.0999999999999 Z" fill="none" stroke="#92bb86" stroke-width="1.25" stroke-linejoin="round"/><path d="M681.6999999999999 1015.6 V1021.1" stroke="#92bb86" stroke-width="1.25"/><ellipse cx="745.3000000000001" cy="1003.1" rx="2.5" ry="3.6" fill="none" stroke="#92bb86" stroke-width="1.25"/><path d="M745.3000000000001 1006.7 V1013.6" stroke="#92bb86" stroke-width="1.25"/><path d="M752.9 999.3000000000001 L755.5 1008.1 H750.3 Z" fill="none" stroke="#92bb86" stroke-width="1.25" stroke-linejoin="round"/><path d="M752.9 1008.1 V1013.6" stroke="#92bb86" stroke-width="1.25"/><ellipse cx="774.3000000000001" cy="1004.4" rx="2.5" ry="3.6" fill="none" stroke="#92bb86" stroke-width="1.25"/><path d="M774.3000000000001 1008.0 V1014.9" stroke="#92bb86" stroke-width="1.25"/><path d="M781.9 1000.6 L784.5 1009.4 H779.3 Z" fill="none" stroke="#92bb86" stroke-width="1.25" stroke-linejoin="round"/><path d="M781.9 1009.4 V1014.9" stroke="#92bb86" stroke-width="1.25"/><ellipse cx="850.9" cy="1020.4" rx="2.5" ry="3.6" fill="none" stroke="#92bb86" stroke-width="1.25"/><path d="M850.9 1024.0 V1030.9" stroke="#92bb86" stroke-width="1.25"/><path d="M843.3000000000001 1016.6 L845.9000000000001 1025.4 H840.7 Z" fill="none" stroke="#92bb86" stroke-width="1.25" stroke-linejoin="round"/><path d="M843.3000000000001 1025.4 V1030.9" stroke="#92bb86" stroke-width="1.25"/><ellipse cx="881.6" cy="1009.7" rx="2.5" ry="3.6" fill="none" stroke="#92bb86" stroke-width="1.25"/><path d="M881.6 1013.3000000000001 V1020.2" stroke="#92bb86" stroke-width="1.25"/><path d="M889.1999999999999 1005.9000000000001 L891.8 1014.7 H886.5999999999999 Z" fill="none" stroke="#92bb86" stroke-width="1.25" stroke-linejoin="round"/><path d="M889.1999999999999 1014.7 V1020.2" stroke="#92bb86" stroke-width="1.25"/><ellipse cx="969.0999999999999" cy="1021.6" rx="2.5" ry="3.6" fill="none" stroke="#92bb86" stroke-width="1.25"/><path d="M969.0999999999999 1025.2 V1032.1" stroke="#92bb86" stroke-width="1.25"/><path d="M961.5 1017.8000000000001 L964.1 1026.6 H958.9 Z" fill="none" stroke="#92bb86" stroke-width="1.25" stroke-linejoin="round"/><path d="M961.5 1026.6 V1032.1" stroke="#92bb86" stroke-width="1.25"/><ellipse cx="1000.7" cy="1004.0" rx="2.5" ry="3.6" fill="none" stroke="#92bb86" stroke-width="1.25"/><path d="M1000.7 1007.6 V1014.5" stroke="#92bb86" stroke-width="1.25"/><path d="M1008.3 1000.2 L1010.9 1009.0 H1005.6999999999999 Z" fill="none" stroke="#92bb86" stroke-width="1.25" stroke-linejoin="round"/><path d="M1008.3 1009.0 V1014.5" stroke="#92bb86" stroke-width="1.25"/><ellipse cx="1056.7" cy="1005.0" rx="2.5" ry="3.6" fill="none" stroke="#92bb86" stroke-width="1.25"/><path d="M1056.7 1008.6 V1015.5" stroke="#92bb86" stroke-width="1.25"/><path d="M1049.1000000000001 1001.2 L1051.7 1010.0 H1046.5000000000002 Z" fill="none" stroke="#92bb86" stroke-width="1.25" stroke-linejoin="round"/><path d="M1049.1000000000001 1010.0 V1015.5" stroke="#92bb86" stroke-width="1.25"/><ellipse cx="1104.8999999999999" cy="1015.7" rx="2.5" ry="3.6" fill="none" stroke="#92bb86" stroke-width="1.25"/><path d="M1104.8999999999999 1019.3000000000001 V1026.2" stroke="#92bb86" stroke-width="1.25"/><path d="M1097.3 1011.9000000000001 L1099.8999999999999 1020.7 H1094.7 Z" fill="none" stroke="#92bb86" stroke-width="1.25" stroke-linejoin="round"/><path d="M1097.3 1020.7 V1026.2" stroke="#92bb86" stroke-width="1.25"/><ellipse cx="1178.3" cy="1003.8" rx="2.5" ry="3.6" fill="none" stroke="#92bb86" stroke-width="1.25"/><path d="M1178.3 1007.4 V1014.3" stroke="#92bb86" stroke-width="1.25"/><path d="M1185.8999999999999 1000.0 L1188.4999999999998 1008.8 H1183.3 Z" fill="none" stroke="#92bb86" stroke-width="1.25" stroke-linejoin="round"/><path d="M1185.8999999999999 1008.8 V1014.3" stroke="#92bb86" stroke-width="1.25"/><ellipse cx="1208.8" cy="1002.4" rx="2.5" ry="3.6" fill="none" stroke="#92bb86" stroke-width="1.25"/><path d="M1208.8 1006.0 V1012.9" stroke="#92bb86" stroke-width="1.25"/><path d="M1216.3999999999999 998.6 L1218.9999999999998 1007.4 H1213.8 Z" fill="none" stroke="#92bb86" stroke-width="1.25" stroke-linejoin="round"/><path d="M1216.3999999999999 1007.4 V1012.9" stroke="#92bb86" stroke-width="1.25"/><ellipse cx="1273.6" cy="1016.7" rx="2.5" ry="3.6" fill="none" stroke="#92bb86" stroke-width="1.25"/><path d="M1273.6 1020.3000000000001 V1027.2" stroke="#92bb86" stroke-width="1.25"/><path d="M1266.0 1012.9000000000001 L1268.6 1021.7 H1263.4 Z" fill="none" stroke="#92bb86" stroke-width="1.25" stroke-linejoin="round"/><path d="M1266.0 1021.7 V1027.2" stroke="#92bb86" stroke-width="1.25"/><ellipse cx="1314.6000000000001" cy="1017.5" rx="2.5" ry="3.6" fill="none" stroke="#92bb86" stroke-width="1.25"/><path d="M1314.6000000000001 1021.1 V1028.0" stroke="#92bb86" stroke-width="1.25"/><path d="M1322.2 1013.7 L1324.8 1022.5 H1319.6000000000001 Z" fill="none" stroke="#92bb86" stroke-width="1.25" stroke-linejoin="round"/><path d="M1322.2 1022.5 V1028.0" stroke="#92bb86" stroke-width="1.25"/><ellipse cx="1398.8" cy="1016.6" rx="2.5" ry="3.6" fill="none" stroke="#92bb86" stroke-width="1.25"/><path d="M1398.8 1020.2 V1027.1" stroke="#92bb86" stroke-width="1.25"/><path d="M1391.2 1012.8000000000001 L1393.8 1021.6 H1388.6000000000001 Z" fill="none" stroke="#92bb86" stroke-width="1.25" stroke-linejoin="round"/><path d="M1391.2 1021.6 V1027.1" stroke="#92bb86" stroke-width="1.25"/><ellipse cx="1446.3999999999999" cy="1016.2" rx="2.5" ry="3.6" fill="none" stroke="#92bb86" stroke-width="1.25"/><path d="M1446.3999999999999 1019.8000000000001 V1026.7" stroke="#92bb86" stroke-width="1.25"/><path d="M1438.8 1012.4000000000001 L1441.3999999999999 1021.2 H1436.2 Z" fill="none" stroke="#92bb86" stroke-width="1.25" stroke-linejoin="round"/><path d="M1438.8 1021.2 V1026.7" stroke="#92bb86" stroke-width="1.25"/><ellipse cx="1501.3" cy="1007.1" rx="2.5" ry="3.6" fill="none" stroke="#92bb86" stroke-width="1.25"/><path d="M1501.3 1010.7 V1017.6" stroke="#92bb86" stroke-width="1.25"/><path d="M1508.8999999999999 1003.3000000000001 L1511.4999999999998 1012.1 H1506.3 Z" fill="none" stroke="#92bb86" stroke-width="1.25" stroke-linejoin="round"/><path d="M1508.8999999999999 1012.1 V1017.6" stroke="#92bb86" stroke-width="1.25"/><ellipse cx="1556.8999999999999" cy="1002.2" rx="2.5" ry="3.6" fill="none" stroke="#92bb86" stroke-width="1.25"/><path d="M1556.8999999999999 1005.8000000000001 V1012.7" stroke="#92bb86" stroke-width="1.25"/><path d="M1549.3 998.4000000000001 L1551.8999999999999 1007.2 H1546.7 Z" fill="none" stroke="#92bb86" stroke-width="1.25" stroke-linejoin="round"/><path d="M1549.3 1007.2 V1012.7" stroke="#92bb86" stroke-width="1.25"/><ellipse cx="1609.0" cy="1018.3" rx="2.5" ry="3.6" fill="none" stroke="#92bb86" stroke-width="1.25"/><path d="M1609.0 1021.9 V1028.8" stroke="#92bb86" stroke-width="1.25"/><path d="M1601.4 1014.5 L1604.0 1023.3 H1598.8000000000002 Z" fill="none" stroke="#92bb86" stroke-width="1.25" stroke-linejoin="round"/><path d="M1601.4 1023.3 V1028.8" stroke="#92bb86" stroke-width="1.25"/><ellipse cx="1653.5" cy="1016.6" rx="2.5" ry="3.6" fill="none" stroke="#92bb86" stroke-width="1.25"/><path d="M1653.5 1020.2 V1027.1" stroke="#92bb86" stroke-width="1.25"/><path d="M1645.9 1012.8000000000001 L1648.5 1021.6 H1643.3000000000002 Z" fill="none" stroke="#92bb86" stroke-width="1.25" stroke-linejoin="round"/><path d="M1645.9 1021.6 V1027.1" stroke="#92bb86" stroke-width="1.25"/><ellipse cx="1722.8999999999999" cy="1011.7" rx="2.5" ry="3.6" fill="none" stroke="#92bb86" stroke-width="1.25"/><path d="M1722.8999999999999 1015.3000000000001 V1022.2" stroke="#92bb86" stroke-width="1.25"/><path d="M1715.3 1007.9000000000001 L1717.8999999999999 1016.7 H1712.7 Z" fill="none" stroke="#92bb86" stroke-width="1.25" stroke-linejoin="round"/><path d="M1715.3 1016.7 V1022.2" stroke="#92bb86" stroke-width="1.25"/><ellipse cx="1763.1" cy="1013.5" rx="2.5" ry="3.6" fill="none" stroke="#92bb86" stroke-width="1.25"/><path d="M1763.1 1017.1 V1024.0" stroke="#92bb86" stroke-width="1.25"/><path d="M1755.5 1009.7 L1758.1 1018.5 H1752.9 Z" fill="none" stroke="#92bb86" stroke-width="1.25" stroke-linejoin="round"/><path d="M1755.5 1018.5 V1024.0" stroke="#92bb86" stroke-width="1.25"/><ellipse cx="1818.2" cy="1004.9" rx="2.5" ry="3.6" fill="none" stroke="#92bb86" stroke-width="1.25"/><path d="M1818.2 1008.5 V1015.4" stroke="#92bb86" stroke-width="1.25"/><path d="M1825.8 1001.1 L1828.3999999999999 1009.9 H1823.2 Z" fill="none" stroke="#92bb86" stroke-width="1.25" stroke-linejoin="round"/><path d="M1825.8 1009.9 V1015.4" stroke="#92bb86" stroke-width="1.25"/><ellipse cx="1863.4" cy="1014.9" rx="2.5" ry="3.6" fill="none" stroke="#92bb86" stroke-width="1.25"/><path d="M1863.4 1018.5 V1025.4" stroke="#92bb86" stroke-width="1.25"/><path d="M1871.0 1011.1 L1873.6 1019.9 H1868.4 Z" fill="none" stroke="#92bb86" stroke-width="1.25" stroke-linejoin="round"/><path d="M1871.0 1019.9 V1025.4" stroke="#92bb86" stroke-width="1.25"/><ellipse cx="1918.9" cy="1009.7" rx="2.5" ry="3.6" fill="none" stroke="#92bb86" stroke-width="1.25"/><path d="M1918.9 1013.3000000000001 V1020.2" stroke="#92bb86" stroke-width="1.25"/><path d="M1926.5 1005.9000000000001 L1929.1 1014.7 H1923.9 Z" fill="none" stroke="#92bb86" stroke-width="1.25" stroke-linejoin="round"/><path d="M1926.5 1014.7 V1020.2" stroke="#92bb86" stroke-width="1.25"/><ellipse cx="1987.7" cy="1017.7" rx="2.5" ry="3.6" fill="none" stroke="#92bb86" stroke-width="1.25"/><path d="M1987.7 1021.3000000000001 V1028.2" stroke="#92bb86" stroke-width="1.25"/><path d="M1995.3 1013.9000000000001 L1997.8999999999999 1022.7 H1992.7 Z" fill="none" stroke="#92bb86" stroke-width="1.25" stroke-linejoin="round"/><path d="M1995.3 1022.7 V1028.2" stroke="#92bb86" stroke-width="1.25"/></g><polyline points="480,890 536,850 568,818 623,755 683,740 730,727 800,698 912,644 1030,612" fill="none" stroke="#c6e0ea" stroke-width="6" stroke-linejoin="round"/><polyline points="480,890 536,850 568,818 623,755 683,740 730,727 800,698 912,644 1030,612" fill="none" stroke="#a6cedf" stroke-width="3.5" stroke-linejoin="round"/><polyline points="1402,191 1091.6,474 1083,481.6 866,619.4 788,652 730,690 711,734 708,788 707,820 715,872 722,886 736,915 745,933 783,1002" fill="none" stroke="#eef2e6" stroke-opacity="0.55" stroke-width="6" stroke-linejoin="round"/><polyline points="1402,191 1091.6,474 1083,481.6 866,619.4 788,652 730,690 711,734 708,788 707,820 715,872 722,886 736,915 745,933 783,1002" fill="none" stroke="#ec8c7c" stroke-opacity="0.9" stroke-width="2" stroke-dasharray="2 4" stroke-linejoin="round"/><polyline points="745,932 835,920.7 941,925 1030,920 1280,847 1618,747 1930,625" fill="none" stroke="#eef2e6" stroke-opacity="0.55" stroke-width="6" stroke-linejoin="round"/><polyline points="745,932 835,920.7 941,925 1030,920 1280,847 1618,747 1930,625" fill="none" stroke="#ec8c7c" stroke-opacity="0.9" stroke-width="2" stroke-dasharray="2 4" stroke-linejoin="round"/><polygon points="1292.8,332.8 1332.6,324 1358,338.6 1396.6,382.3 1439.8,384.5 1491.4,408.7 1514,439.6 1514.8,495.2 1476.4,535.8 1433.2,550.4 1351.5,546.9 1309.6,515 1322.9,449.8 1316.2,418.9 1281.8,385.8 1283,361.5" fill="#7b868a" stroke="#2a2a2a" stroke-width="1"/><polygon points="1194.9,437.4 1228,452 1235.9,489.5 1221.4,527 1203.7,535.8 1186,533.6 1157.4,513.8 1150.7,489.5 1159.6,458.6" fill="#7b868a" stroke="#2a2a2a" stroke-width="1"/><polygon points="817,830.6 886.6,817.4 1021.8,827.8 1049.6,842.5 1054.8,872.3 932.3,900 833,904 827,860" fill="#7b868a" stroke="#2a2a2a" stroke-width="1"/><polygon points="690,560 735.8,600 755,629 756,690 690,700" fill="#7b868a" stroke="#2a2a2a" stroke-width="1"/><polyline points="771,191 707,258 480,490" fill="none" stroke="#157a1e" stroke-width="3.8"/><polyline points="480,991 1026,931 1443,841 1930,810" fill="none" stroke="#157a1e" stroke-width="3.8" stroke-linejoin="round"/><polyline points="1348,191 1098,458 866,605 789,644 735,675 672,739 719,920 932,908 1156,863 1431,780 1930,596" fill="none" stroke="#000" stroke-width="4" stroke-linejoin="miter"/><circle cx="1330" cy="376.5" r="4.6" fill="#d9d96a" stroke="#555" stroke-width="0.8"/><circle cx="1322.9" cy="385.8" r="4.6" fill="#d9d96a" stroke="#555" stroke-width="0.8"/><circle cx="1324.2" cy="401.7" r="4.6" fill="#d9d96a" stroke="#555" stroke-width="0.8"/><circle cx="1195.8" cy="490.4" r="4.6" fill="#d9d96a" stroke="#555" stroke-width="0.8"/><circle cx="868" cy="830.5" r="4.6" fill="#d9d96a" stroke="#555" stroke-width="0.8"/><circle cx="832" cy="859.6" r="4.6" fill="#d9d96a" stroke="#555" stroke-width="0.8"/></g><rect x="487.5" y="191.5" width="1431" height="806" fill="none" stroke="#8a8a8a"/></svg>
<div class="t" style="left:1180.1px;top:368.08px;font-size:16px;font-weight:normal;color:#000;font-style:normal;transform:scaleX(1.0385);transform-origin:0 0;">Cortinarius bataillei</div>
<div class="t" style="left:1217.8px;top:393.88px;font-size:16px;font-weight:normal;color:#000;font-style:normal;transform:scaleX(1.0455);transform-origin:0 0;">Amanita  fulva</div>
<div class="t" style="left:1196.4px;top:493.48px;font-size:16px;font-weight:normal;color:#000;font-style:normal;transform:scaleX(1.0336);transform-origin:0 0;">Amanita fulva</div>
<div class="t" style="left:1395.7px;top:431.38px;font-size:16px;font-weight:normal;color:#ffff3c;font-style:normal;transform:scaleX(1.0301);transform-origin:0 0;">Eriophorum_vaginatum_Moor4</div>
<div class="t" style="left:1082px;top:469.38px;font-size:16px;font-weight:normal;color:#ffff3c;font-style:normal;transform:scaleX(1.0283);transform-origin:0 0;">Eriophorum_vaginatum_Moor3</div>
<div class="t" style="left:733.5px;top:617.18px;font-size:16px;font-weight:normal;color:#ffff3c;font-style:normal;transform:scaleX(1.0202);transform-origin:0 0;">horum_vaginatum_Molinia_Moor2</div>
<div class="t" style="left:763.75px;top:813.78px;font-size:16px;font-weight:normal;color:#000;font-style:normal;transform:scaleX(1.0223);transform-origin:0 0;">Laccaria laccata</div>
<div class="t" style="left:718px;top:842.18px;font-size:16px;font-weight:normal;color:#000;font-style:normal;transform:scaleX(1.0080);transform-origin:0 0;">Leccinum holopus</div>
<div class="t" style="left:926.25px;top:842.18px;font-size:16px;font-weight:normal;color:#ffff3c;font-style:normal;transform:scaleX(1.0153);transform-origin:0 0;">Sphagnetum_magellanici_Moor1</div>
<svg style="left:0;top:0" width="1920" height="1031" viewBox="0 0 1920 1031"><defs><clipPath id="mc2"><rect x="488" y="192" width="1430" height="805"/></clipPath></defs><g clip-path="url(#mc2)"><text x="990" y="928" transform="rotate(-17.1 990 928)" text-anchor="start" font-family="Liberation Sans" font-size="14.5" fill="#555" stroke="#e4e8dc" stroke-opacity="0.6" stroke-width="2.2" paint-order="stroke" textLength="328" lengthAdjust="spacingAndGlyphs">Rundweg "Bannwald "Waldmoor-Torfstich"</text><text x="1086" y="503" transform="rotate(-32.7 1086 503)" text-anchor="end" font-family="Liberation Sans" font-size="14.5" fill="#555" stroke="#e4e8dc" stroke-opacity="0.6" stroke-width="2.2" paint-order="stroke" textLength="328" lengthAdjust="spacingAndGlyphs">Rundweg "Bannwald "Waldmoor-Torfstich"</text><text x="1818" y="666" transform="rotate(-22 1818 666)" text-anchor="start" font-family="Liberation Sans" font-size="14.5" fill="#555" stroke="#e4e8dc" stroke-opacity="0.6" stroke-width="2.2" paint-order="stroke" textLength="328" lengthAdjust="spacingAndGlyphs">Rundweg "Bannwald "Waldmoor-Torfstich"</text><text x="1161" y="902" transform="rotate(-19.5 1161 902)" font-family="Liberation Sans" font-size="15.5" fill="#000" textLength="73" lengthAdjust="spacingAndGlyphs">nsg_1937</text></g></svg>
<div style="position:absolute;left:943px;top:922.5px;width:182px;height:44px;background:#ffff00;border:2.5px solid #000;box-sizing:border-box"></div>
<div class="t" style="left:1000.5px;top:934.17px;font-size:19.5px;font-weight:bold;color:#000;font-style:normal;">Bild 17</div>
<div style="position:absolute;left:0px;top:998px;width:1920px;height:32px;background:#f0f0f0"></div>
<div style="position:absolute;left:0px;top:1030px;width:1920px;height:1px;background:#202020"></div>
<div style="position:absolute;left:4.5px;top:1004.5px;width:278px;height:21px;background:#fff;border:1px solid #7a7a7a;box-sizing:border-box"></div>
<svg style="position:absolute;left:12px;top:1007px;" width="14" height="14" viewBox="0 0 14 14"><circle cx="6" cy="6" r="4.3" fill="none" stroke="#888" stroke-width="1.4"/><path d="M9 9 L12.5 12.5" stroke="#888" stroke-width="1.6"/></svg>
<div class="t" style="left:32.8px;top:1008.07px;font-size:14.8px;font-weight:normal;color:#7a7a7a;font-style:normal;transform:scaleX(0.8699);transform-origin:0 0;">Zu suchender Typ (Strg+K)</div>
<div class="t" style="left:291px;top:1008.07px;font-size:14.8px;font-weight:normal;color:#000;font-style:normal;transform:scaleX(0.8560);transform-origin:0 0;">Bearbeitungsstatus des aktuellen Layers umschalten</div>
<div class="t" style="left:924px;top:1008.07px;font-size:14.8px;font-weight:normal;color:#000;font-style:normal;transform:scaleX(0.8521);transform-origin:0 0;">Koordinate</div>
<div style="position:absolute;left:987.5px;top:1004px;width:133px;height:21.5px;background:#fff;border:1px solid #7a7a7a;box-sizing:border-box"></div>
<div class="t" style="left:994.6px;top:1008.07px;font-size:14.8px;font-weight:normal;color:#000;font-style:normal;transform:scaleX(0.8689);transform-origin:0 0;">473568.2,5397556.3</div>
<svg style="position:absolute;left:1123px;top:1003px;" width="22" height="22" viewBox="0 0 22 22"><path d="M8 3 C3 3 3 9 4 13 C5 18 10 20 13 18 C17 16 16 10 14 7 C13 5 11 3 8 3 Z" fill="none" stroke="#222" stroke-width="1.6"/><path d="M6 8 L12 13 M12 8 L6 13" stroke="#222" stroke-width="2"/><path d="M15 4 C18 2 20 5 18 8" fill="none" stroke="#222" stroke-width="1.4"/></svg>
<div class="t" style="left:1157.7px;top:1008.07px;font-size:14.8px;font-weight:normal;color:#000;font-style:normal;transform:scaleX(0.8042);transform-origin:0 0;">Maßstab</div>
<div style="position:absolute;left:1208px;top:1004px;width:90.5px;height:21.5px;background:#fff;border:1px solid #7a7a7a;box-sizing:border-box"></div>
<div class="t" style="left:1213.5px;top:1008.07px;font-size:14.8px;font-weight:normal;color:#000;font-style:normal;transform:scaleX(0.8792);transform-origin:0 0;">1:1250</div>
<svg style="position:absolute;left:1281px;top:1010px;" width="12" height="8" viewBox="0 0 12 8"><path d="M1 1.5 L6 6.5 L11 1.5" fill="none" stroke="#333" stroke-width="1.2"/></svg>
<svg style="position:absolute;left:1309px;top:1004px;" width="16" height="21" viewBox="0 0 16 21"><path d="M4 9 V6 C4 1.5 12 1.5 12 6 V9" fill="none" stroke="#777" stroke-width="2"/><rect x="2" y="9" width="12" height="10" rx="1" fill="#777"/></svg>
<div class="t" style="left:1334.6px;top:1008.07px;font-size:14.8px;font-weight:normal;color:#000;font-style:normal;transform:scaleX(0.8663);transform-origin:0 0;">Vergrößerung</div>
<div style="position:absolute;left:1417px;top:1004px;width:86px;height:21.5px;background:#fff;border:1px solid #7a7a7a;box-sizing:border-box"></div>
<div class="t" style="left:1420.7px;top:1008.07px;font-size:14.8px;font-weight:normal;color:#000;font-style:normal;transform:scaleX(0.8427);transform-origin:0 0;">100%</div>
<svg style="position:absolute;left:1486px;top:1005px;" width="16" height="19.5" viewBox="0 0 16 19.5"><rect x="0.5" y="0.5" width="15" height="18.5" fill="#f0f0f0" stroke="#bbb"/><path d="M4 7.5 L8 3.5 L12 7.5 Z M4 12 L8 16 L12 12 Z" fill="#222"/></svg>
<div class="t" style="left:1512.6px;top:1008.07px;font-size:14.8px;font-weight:normal;color:#000;font-style:normal;transform:scaleX(0.8437);transform-origin:0 0;">Drehung</div>
<div style="position:absolute;left:1570.6px;top:1004px;width:84px;height:21.5px;background:#fff;border:1px solid #7a7a7a;box-sizing:border-box"></div>
<div class="t" style="left:1573.7px;top:1008.07px;font-size:14.8px;font-weight:normal;color:#000;font-style:normal;transform:scaleX(0.9410);transform-origin:0 0;">0,0 °</div>
<svg style="position:absolute;left:1637px;top:1005px;" width="16" height="19.5" viewBox="0 0 16 19.5"><rect x="0.5" y="0.5" width="15" height="18.5" fill="#f0f0f0" stroke="#bbb"/><path d="M4 7.5 L8 3.5 L12 7.5 Z M4 12 L8 16 L12 12 Z" fill="#222"/></svg>
<svg style="position:absolute;left:1661px;top:1006px;" width="16" height="16" viewBox="0 0 16 16"><rect x="0.5" y="0.5" width="15" height="15" fill="#fff" stroke="#333"/><path d="M3.5 8 L6.5 11 L12.5 4.5" fill="none" stroke="#333" stroke-width="1.3"/></svg>
<div class="t" style="left:1682.7px;top:1008.07px;font-size:14.8px;font-weight:normal;color:#000;font-style:normal;transform:scaleX(0.8261);transform-origin:0 0;">Zeichnen</div>
<svg style="position:absolute;left:1751px;top:1005px;" width="20" height="20" viewBox="0 0 20 20"><circle cx="10" cy="10" r="7.5" fill="none" stroke="#666" stroke-width="1.3"/><path d="M2.5 10 H17.5 M4 6 H16 M4 14 H16 M10 2.5 V17.5" stroke="#666" stroke-width="1.1"/><ellipse cx="10" cy="10" rx="3.5" ry="7.5" fill="none" stroke="#666" stroke-width="1.1"/></svg>
<div class="t" style="left:1774px;top:1008.07px;font-size:14.8px;font-weight:normal;color:#000;font-style:normal;transform:scaleX(0.8183);transform-origin:0 0;">EPSG:25832</div>
<svg style="position:absolute;left:1862px;top:1006px;" width="22" height="20" viewBox="0 0 22 20"><ellipse cx="10.5" cy="8.5" rx="9.5" ry="7.5" fill="#5a5a5a"/><path d="M12 14 L17 19 L15 13 Z" fill="#5a5a5a"/><circle cx="6" cy="8.5" r="1.5" fill="#fff"/><circle cx="10.5" cy="8.5" r="1.5" fill="#fff"/><circle cx="15" cy="8.5" r="1.5" fill="#fff"/></svg>
<svg style="position:absolute;left:1895px;top:1004px;" width="24" height="22" viewBox="0 0 24 22"><path d="M1.5 6.5 H6 C6 2.5 11 2.5 11 6.5 H15 V10 H12.5 V15 H15 V20.5 H1.5 Z" fill="#b8b8b8" stroke="#555" stroke-width="1.1"/><path d="M1.5 6.5 L15 20.5" stroke="#555"/><path d="M15 8 C20 4 24 9 19 14 L16 16" fill="none" stroke="#555" stroke-width="1.1"/></svg>
<div style="position:absolute;left:295px;top:259.5px;width:441px;height:473px;background:#f0f0f0;border:1px solid #c8c8c8;box-sizing:border-box;box-shadow:1.5px 1.5px 1.5px rgba(0,0,0,0.55),2px 2px 4px rgba(0,0,0,0.2)"></div>
<div style="position:absolute;left:298px;top:648px;width:432px;height:24px;background:#91c9f7"></div>
<div style="position:absolute;left:328px;top:416.5px;width:404px;height:1px;background:#d7d7d7"></div>
<div style="position:absolute;left:328px;top:477px;width:404px;height:1px;background:#d7d7d7"></div>
<div style="position:absolute;left:328px;top:586px;width:404px;height:1px;background:#d7d7d7"></div>
<div style="position:absolute;left:328px;top:643px;width:404px;height:1px;background:#d7d7d7"></div>
<div style="position:absolute;left:328px;top:676.3px;width:404px;height:1px;background:#d7d7d7"></div>
<div class="t" style="left:332.6px;top:268.57px;font-size:14.8px;font-weight:normal;color:#000;font-style:normal;transform:scaleX(0.9938);transform-origin:0 0;">Auf den Layer zoomen</div>
<div class="t" style="left:332.6px;top:294.77px;font-size:14.8px;font-weight:normal;color:#8a8a8a;font-style:normal;transform:scaleX(1.0000);transform-origin:0 0;">Zur Auswahl zoomen</div>
<div class="t" style="left:332.6px;top:320.67px;font-size:14.8px;font-weight:normal;color:#000;font-style:normal;transform:scaleX(0.9902);transform-origin:0 0;">In der Übersicht anzeigen</div>
<div class="t" style="left:332.6px;top:345.87px;font-size:14.8px;font-weight:normal;color:#000;font-style:normal;transform:scaleX(0.9988);transform-origin:0 0;">Objektanzahl anzeigen</div>
<div class="t" style="left:332.6px;top:369.77px;font-size:14.8px;font-weight:normal;color:#000;font-style:normal;transform:scaleX(0.9805);transform-origin:0 0;">Layer kopieren</div>
<div class="t" style="left:332.6px;top:393.57px;font-size:14.8px;font-weight:normal;color:#000;font-style:normal;transform:scaleX(0.9714);transform-origin:0 0;">Layer umbenennen</div>
<div class="t" style="left:332.6px;top:427.67px;font-size:14.8px;font-weight:normal;color:#000;font-style:normal;transform:scaleX(0.9936);transform-origin:0 0;">Layer duplizieren</div>
<div class="t" style="left:332.6px;top:453.67px;font-size:14.8px;font-weight:normal;color:#000;font-style:normal;transform:scaleX(0.9475);transform-origin:0 0;">Layer löschen...</div>
<div class="t" style="left:332.6px;top:488.37px;font-size:14.8px;font-weight:normal;color:#000;font-style:normal;transform:scaleX(1.0554);transform-origin:0 0;">Attributtabelle öffnen</div>
<div class="t" style="left:332.6px;top:514.57px;font-size:14.8px;font-weight:normal;color:#000;font-style:normal;transform:scaleX(0.9840);transform-origin:0 0;">Bearbeitungsstatus umschalten</div>
<div class="t" style="left:332.6px;top:539.27px;font-size:14.8px;font-weight:normal;color:#000;font-style:normal;transform:scaleX(0.9728);transform-origin:0 0;">Filter...</div>
<div class="t" style="left:332.6px;top:563.47px;font-size:14.8px;font-weight:normal;color:#000;font-style:normal;transform:scaleX(0.9934);transform-origin:0 0;">Datenquelle ändern...</div>
<div class="t" style="left:332.6px;top:596.77px;font-size:14.8px;font-weight:normal;color:#000;font-style:normal;transform:scaleX(0.9886);transform-origin:0 0;">Maßstabsabhängige Sichtbarkeit des/der Layer setzen...</div>
<div class="t" style="left:332.6px;top:620.57px;font-size:14.8px;font-weight:normal;color:#000;font-style:normal;transform:scaleX(0.9181);transform-origin:0 0;">KBS setzen</div>
<div class="t" style="left:332.6px;top:653.27px;font-size:14.8px;font-weight:normal;color:#000;font-style:normal;transform:scaleX(0.9936);transform-origin:0 0;">Exportieren</div>
<div class="t" style="left:332.6px;top:686.07px;font-size:14.8px;font-weight:normal;color:#000;font-style:normal;transform:scaleX(0.9760);transform-origin:0 0;">Stile</div>
<div class="t" style="left:332.6px;top:710.37px;font-size:14.8px;font-weight:normal;color:#000;font-style:normal;transform:scaleX(0.9591);transform-origin:0 0;">Eigenschaften...</div>
<svg style="position:absolute;left:716px;top:623.1px;" width="6" height="9" viewBox="0 0 6 9"><path d="M0.5 0.5 L5 4.5 L0.5 8.5 Z" fill="#000"/></svg>
<svg style="position:absolute;left:716px;top:655.8px;" width="6" height="9" viewBox="0 0 6 9"><path d="M0.5 0.5 L5 4.5 L0.5 8.5 Z" fill="#000"/></svg>
<svg style="position:absolute;left:716px;top:688.6px;" width="6" height="9" viewBox="0 0 6 9"><path d="M0.5 0.5 L5 4.5 L0.5 8.5 Z" fill="#000"/></svg>
<svg style="position:absolute;left:300px;top:265px;" width="20" height="20" viewBox="0 0 20 20"><rect x="1" y="3" width="7" height="9" fill="none" stroke="#aaa" stroke-width="0.9"/><path d="M7.5 12 L2 17.5" stroke="#444" stroke-width="3.6"/><path d="M6.5 13 L2.5 17" stroke="#e0c840" stroke-width="2"/><circle cx="12" cy="7.5" r="5.8" fill="#f2f2f2" stroke="#666" stroke-width="1.1"/></svg>
<svg style="position:absolute;left:300px;top:291px;" width="20" height="20" viewBox="0 0 20 20"><rect x="1" y="3" width="7" height="9" fill="none" stroke="#ccc" stroke-width="0.9"/><path d="M7.5 12 L2 17.5" stroke="#ccc" stroke-width="3.6"/><path d="M6.5 13 L2.5 17" stroke="#ddd" stroke-width="2"/><circle cx="12" cy="7.5" r="5.8" fill="#f2f2f2" stroke="#ccc" stroke-width="1.1"/></svg>
<svg style="position:absolute;left:300px;top:317px;" width="22" height="22" viewBox="0 0 22 22"><path d="M0.5 1.5 H9.5 L9.2 6.3 C8.8 8.8 1.3 8.8 0.9 6.3 Z M10.5 1.5 H19.5 L19.1 6.3 C18.7 8.8 11.2 8.8 10.8 6.3 Z M9 1.5 H11 V3.2 H9 Z" fill="#000"/><path d="M2.5 3.3 H7.6 L7.4 6 C7.1 7.1 2.9 7.1 2.7 6 Z M12.4 3.3 H17.5 L17.3 6 C17 7.1 12.8 7.1 12.6 6 Z" fill="#f0f0f0"/><rect x="12.5" y="12" width="7.5" height="7.5" rx="1" fill="#5a9a5a"/><path d="M16.25 13.5 V18 M14 15.75 H18.5" stroke="#fff" stroke-width="1.5"/></svg>
<svg style="position:absolute;left:301px;top:424px;" width="20" height="20" viewBox="0 0 20 20"><rect x="1" y="4" width="13" height="14" fill="#9a9a9a" stroke="#6a6a6a"/><rect x="4.5" y="1.5" width="13" height="14" fill="#f4f4f4" stroke="#777"/><rect x="12" y="12" width="7" height="7" rx="2" fill="#e8d040" stroke="#c8a820" stroke-width="0.6"/></svg>
<svg style="position:absolute;left:301px;top:450px;" width="20" height="20" viewBox="0 0 20 20"><rect x="1.5" y="1.5" width="14" height="15" fill="#f4f4f4" stroke="#777"/><rect x="11" y="13" width="8" height="6" rx="3" fill="#e04848"/><path d="M13 16 H17" stroke="#fff" stroke-width="1.4"/></svg>
<svg style="position:absolute;left:301px;top:486px;" width="18" height="18" viewBox="0 0 18 18"><rect x="0.5" y="1.5" width="17" height="15" fill="#fff" stroke="#6a98d0"/><rect x="1" y="2" width="16" height="3" fill="#8ab0e0"/><path d="M3 8 H6 M8 8 H15 M3 11 H6 M8 11 H15 M3 14 H6 M8 14 H15" stroke="#6a98d0"/></svg>
<svg style="position:absolute;left:302px;top:511px;" width="18" height="20" viewBox="0 0 18 20"><path d="M2 19 L3.5 13 L13 1.5 L16.5 4.5 L7 16 Z" fill="#f0d23a" stroke="#8a7020" stroke-width="0.8"/><path d="M2 19 L3 15.5 L5.5 17.5 Z" fill="#555"/></svg>
<div style="position:absolute;left:729.3px;top:645.5px;width:302.5px;height:101.5px;background:#f0f0f0;border:1px solid #c8c8c8;box-sizing:border-box;box-shadow:1.5px 1.5px 1.5px rgba(0,0,0,0.55),2px 2px 4px rgba(0,0,0,0.2)"></div>
<div style="position:absolute;left:732px;top:648px;width:296px;height:24px;background:#91c9f7"></div>
<div class="t" style="left:766.4px;top:653.27px;font-size:14.8px;font-weight:normal;color:#000;font-style:normal;transform:scaleX(0.9766);transform-origin:0 0;">Objekt speichern als...</div>
<div class="t" style="left:766.4px;top:677.27px;font-size:14.8px;font-weight:normal;color:#8a8a8a;font-style:normal;transform:scaleX(0.9806);transform-origin:0 0;">Gewählte Objekte speichern als...</div>
<div class="t" style="left:766.4px;top:701.27px;font-size:14.8px;font-weight:normal;color:#000;font-style:normal;transform:scaleX(0.9956);transform-origin:0 0;">Als Layerdefinitionsdatei speichern...</div>
<div class="t" style="left:766.4px;top:725.27px;font-size:14.8px;font-weight:normal;color:#000;font-style:normal;transform:scaleX(0.9726);transform-origin:0 0;">Als QGIS-Layerstildatei speichern...</div>
<svg style="position:absolute;left:920px;top:650px;" width="130" height="24" viewBox="0 0 130 24"><path d="M12 11.5 H122" stroke="#e8101a" stroke-width="2.2"/><path d="M3.5 11.5 L22 4.5 L17 11.5 L22 18.5 Z" fill="#e8101a"/></svg>
</body></html>
